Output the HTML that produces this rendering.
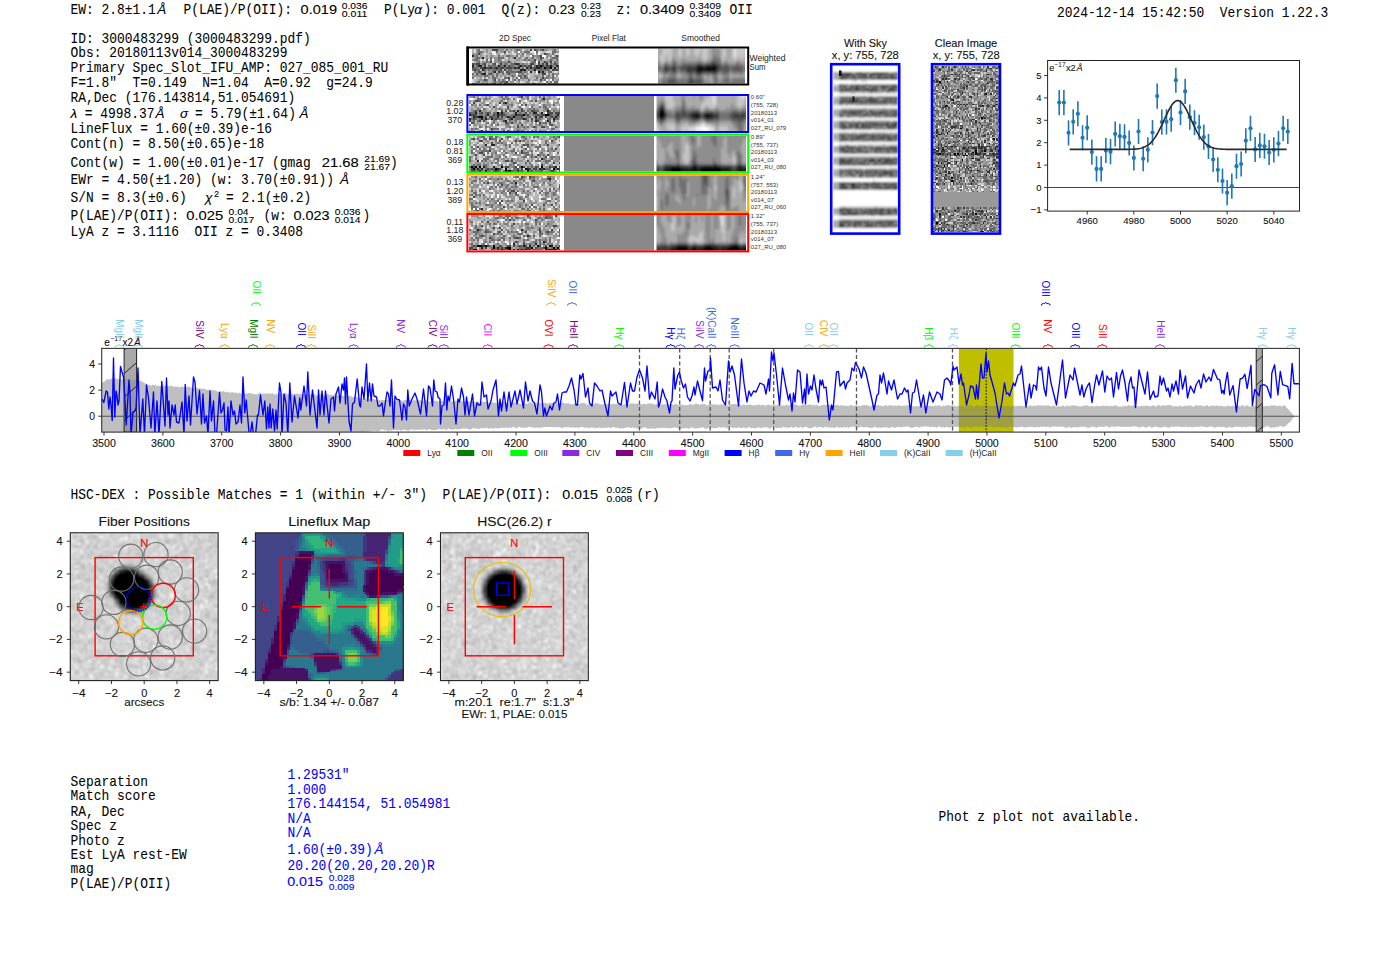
<!DOCTYPE html>
<html><head><meta charset="utf-8"><title>HETDEX detection 3000483299</title>
<style>html,body{margin:0;padding:0;background:#fff;width:1400px;height:953px;overflow:hidden}svg text{white-space:pre}</style>
</head><body>
<svg width="1400" height="953" viewBox="0 0 1400 953" style="position:absolute;left:0;top:0"><rect width="1400" height="953" fill="#fff"/><defs><filter id="blur2"><feGaussianBlur stdDeviation="1.1 1.6"/></filter><filter id="blur05" x="0" y="0" width="100%" height="100%"><feGaussianBlur stdDeviation="0.6"/></filter><filter id="blur08" x="0" y="0" width="100%" height="100%"><feGaussianBlur stdDeviation="0.9"/></filter></defs><text transform="translate(70.50,13.90) scale(0.9229,1)" font-family="Liberation Mono" font-size="14.0" fill="#000" stroke="#000" stroke-width="0.06" text-anchor="start">EW: 2.8±1.1</text><text x="157.30" y="13.90" font-family="Liberation Sans" font-size="13.5" fill="#000" text-anchor="start" font-style="italic" stroke="#000" stroke-width="0.1">Å</text><text transform="translate(183.50,13.90) scale(0.9229,1)" font-family="Liberation Mono" font-size="14.0" fill="#000" stroke="#000" stroke-width="0.06" text-anchor="start">P(LAE)/P(OII):</text><text x="300.60" y="13.90" font-family="Liberation Sans" font-size="13" fill="#000" text-anchor="start" textLength="36.4" lengthAdjust="spacingAndGlyphs" stroke="#000" stroke-width="0.1">0.019</text><text x="341.70" y="8.90" font-family="Liberation Sans" font-size="9.2" fill="#000" text-anchor="start" textLength="25.7" lengthAdjust="spacingAndGlyphs" stroke="#000" stroke-width="0.1">0.036</text><text x="341.70" y="17.30" font-family="Liberation Sans" font-size="9.2" fill="#000" text-anchor="start" textLength="25.7" lengthAdjust="spacingAndGlyphs" stroke="#000" stroke-width="0.1">0.011</text><text transform="translate(384.00,13.90) scale(0.9229,1)" font-family="Liberation Mono" font-size="14.0" fill="#000" stroke="#000" stroke-width="0.06" text-anchor="start">P(Ly</text><text x="414.30" y="13.90" font-family="Liberation Sans" font-size="13.5" fill="#000" text-anchor="start" font-style="italic" stroke="#000" stroke-width="0.1">α</text><text transform="translate(423.50,13.90) scale(0.9229,1)" font-family="Liberation Mono" font-size="14.0" fill="#000" stroke="#000" stroke-width="0.06" text-anchor="start">): 0.001</text><text transform="translate(501.50,13.90) scale(0.9229,1)" font-family="Liberation Mono" font-size="14.0" fill="#000" stroke="#000" stroke-width="0.06" text-anchor="start">Q(z):</text><text x="548.40" y="13.90" font-family="Liberation Sans" font-size="13" fill="#000" text-anchor="start" textLength="26.4" lengthAdjust="spacingAndGlyphs" stroke="#000" stroke-width="0.1">0.23</text><text x="580.90" y="8.90" font-family="Liberation Sans" font-size="9.2" fill="#000" text-anchor="start" textLength="20.0" lengthAdjust="spacingAndGlyphs" stroke="#000" stroke-width="0.1">0.23</text><text x="580.90" y="17.30" font-family="Liberation Sans" font-size="9.2" fill="#000" text-anchor="start" textLength="20.0" lengthAdjust="spacingAndGlyphs" stroke="#000" stroke-width="0.1">0.23</text><text transform="translate(616.50,13.90) scale(0.9229,1)" font-family="Liberation Mono" font-size="14.0" fill="#000" stroke="#000" stroke-width="0.06" text-anchor="start">z:</text><text x="640.00" y="13.90" font-family="Liberation Sans" font-size="13" fill="#000" text-anchor="start" textLength="44.4" lengthAdjust="spacingAndGlyphs" stroke="#000" stroke-width="0.1">0.3409</text><text x="689.40" y="8.90" font-family="Liberation Sans" font-size="9.2" fill="#000" text-anchor="start" textLength="31.5" lengthAdjust="spacingAndGlyphs" stroke="#000" stroke-width="0.1">0.3409</text><text x="689.40" y="17.30" font-family="Liberation Sans" font-size="9.2" fill="#000" text-anchor="start" textLength="31.5" lengthAdjust="spacingAndGlyphs" stroke="#000" stroke-width="0.1">0.3409</text><text transform="translate(729.50,13.90) scale(0.9229,1)" font-family="Liberation Mono" font-size="14.0" fill="#000" stroke="#000" stroke-width="0.06" text-anchor="start">OII</text><text transform="translate(1057.00,16.70) scale(0.9229,1)" font-family="Liberation Mono" font-size="14.0" fill="#000" stroke="#000" stroke-width="0.06" text-anchor="start">2024-12-14 15:42:50  Version 1.22.3</text><text transform="translate(70.50,42.70) scale(0.9229,1)" font-family="Liberation Mono" font-size="14.0" fill="#000" stroke="#000" stroke-width="0.06" text-anchor="start">ID: 3000483299 (3000483299.pdf)</text><text transform="translate(70.50,56.80) scale(0.9229,1)" font-family="Liberation Mono" font-size="14.0" fill="#000" stroke="#000" stroke-width="0.06" text-anchor="start">Obs: 20180113v014_3000483299</text><text transform="translate(70.50,71.80) scale(0.9229,1)" font-family="Liberation Mono" font-size="14.0" fill="#000" stroke="#000" stroke-width="0.06" text-anchor="start">Primary Spec_Slot_IFU_AMP: 027_085_001_RU</text><text transform="translate(70.50,86.80) scale(0.9229,1)" font-family="Liberation Mono" font-size="14.0" fill="#000" stroke="#000" stroke-width="0.06" text-anchor="start">F=1.8"  T=0.149  N=1.04  A=0.92  g=24.9</text><text transform="translate(70.50,101.60) scale(0.9229,1)" font-family="Liberation Mono" font-size="14.0" fill="#000" stroke="#000" stroke-width="0.06" text-anchor="start">RA,Dec (176.143814,51.054691)</text><text x="70.50" y="117.80" font-family="Liberation Sans" font-size="13.5" fill="#000" text-anchor="start" font-style="italic" stroke="#000" stroke-width="0.1">λ</text><text transform="translate(84.70,117.80) scale(0.9229,1)" font-family="Liberation Mono" font-size="14.0" fill="#000" stroke="#000" stroke-width="0.06" text-anchor="start">= 4998.37</text><text x="155.50" y="117.80" font-family="Liberation Sans" font-size="13.5" fill="#000" text-anchor="start" font-style="italic" stroke="#000" stroke-width="0.1">Å</text><text x="180.00" y="117.80" font-family="Liberation Sans" font-size="13.5" fill="#000" text-anchor="start" font-style="italic" stroke="#000" stroke-width="0.1">σ</text><text transform="translate(195.10,117.80) scale(0.9229,1)" font-family="Liberation Mono" font-size="14.0" fill="#000" stroke="#000" stroke-width="0.06" text-anchor="start">= 5.79(±1.64)</text><text x="299.60" y="117.80" font-family="Liberation Sans" font-size="13.5" fill="#000" text-anchor="start" font-style="italic" stroke="#000" stroke-width="0.1">Å</text><text transform="translate(70.50,133.40) scale(0.9229,1)" font-family="Liberation Mono" font-size="14.0" fill="#000" stroke="#000" stroke-width="0.06" text-anchor="start">LineFlux = 1.60(±0.39)e-16</text><text transform="translate(70.50,148.20) scale(0.9229,1)" font-family="Liberation Mono" font-size="14.0" fill="#000" stroke="#000" stroke-width="0.06" text-anchor="start">Cont(n) = 8.50(±0.65)e-18</text><text transform="translate(70.50,166.70) scale(0.9229,1)" font-family="Liberation Mono" font-size="14.0" fill="#000" stroke="#000" stroke-width="0.06" text-anchor="start">Cont(w) = 1.00(±0.01)e-17 (gmag</text><text x="321.80" y="166.70" font-family="Liberation Sans" font-size="13" fill="#000" text-anchor="start" textLength="37.0" lengthAdjust="spacingAndGlyphs" stroke="#000" stroke-width="0.1">21.68</text><text x="364.30" y="161.70" font-family="Liberation Sans" font-size="9.2" fill="#000" text-anchor="start" textLength="25.7" lengthAdjust="spacingAndGlyphs" stroke="#000" stroke-width="0.1">21.69</text><text x="364.30" y="170.10" font-family="Liberation Sans" font-size="9.2" fill="#000" text-anchor="start" textLength="25.7" lengthAdjust="spacingAndGlyphs" stroke="#000" stroke-width="0.1">21.67</text><text transform="translate(390.00,166.70) scale(0.9229,1)" font-family="Liberation Mono" font-size="14.0" fill="#000" stroke="#000" stroke-width="0.06" text-anchor="start">)</text><text transform="translate(70.50,184.40) scale(0.9229,1)" font-family="Liberation Mono" font-size="14.0" fill="#000" stroke="#000" stroke-width="0.06" text-anchor="start">EWr = 4.50(±1.20) (w: 3.70(±0.91))</text><text x="340.00" y="184.40" font-family="Liberation Sans" font-size="13.5" fill="#000" text-anchor="start" font-style="italic" stroke="#000" stroke-width="0.1">Å</text><text transform="translate(70.50,202.10) scale(0.9229,1)" font-family="Liberation Mono" font-size="14.0" fill="#000" stroke="#000" stroke-width="0.06" text-anchor="start">S/N = 8.3(±0.6)</text><text x="205.00" y="202.10" font-family="Liberation Sans" font-size="13.5" fill="#000" text-anchor="start" font-style="italic" stroke="#000" stroke-width="0.1">χ</text><text x="214.00" y="196.50" font-family="Liberation Sans" font-size="9" fill="#000" text-anchor="start" stroke="#000" stroke-width="0.1">2</text><text transform="translate(226.00,202.10) scale(0.9229,1)" font-family="Liberation Mono" font-size="14.0" fill="#000" stroke="#000" stroke-width="0.06" text-anchor="start">= 2.1(±0.2)</text><text transform="translate(70.50,219.80) scale(0.9229,1)" font-family="Liberation Mono" font-size="14.0" fill="#000" stroke="#000" stroke-width="0.06" text-anchor="start">P(LAE)/P(OII):</text><text x="186.20" y="219.80" font-family="Liberation Sans" font-size="13" fill="#000" text-anchor="start" textLength="37.0" lengthAdjust="spacingAndGlyphs" stroke="#000" stroke-width="0.1">0.025</text><text x="228.60" y="214.80" font-family="Liberation Sans" font-size="9.2" fill="#000" text-anchor="start" textLength="20.0" lengthAdjust="spacingAndGlyphs" stroke="#000" stroke-width="0.1">0.04</text><text x="228.60" y="223.20" font-family="Liberation Sans" font-size="9.2" fill="#000" text-anchor="start" textLength="25.7" lengthAdjust="spacingAndGlyphs" stroke="#000" stroke-width="0.1">0.017</text><text transform="translate(263.50,219.80) scale(0.9229,1)" font-family="Liberation Mono" font-size="14.0" fill="#000" stroke="#000" stroke-width="0.06" text-anchor="start">(w:</text><text x="293.40" y="219.80" font-family="Liberation Sans" font-size="13" fill="#000" text-anchor="start" textLength="36.2" lengthAdjust="spacingAndGlyphs" stroke="#000" stroke-width="0.1">0.023</text><text x="334.80" y="214.80" font-family="Liberation Sans" font-size="9.2" fill="#000" text-anchor="start" textLength="25.7" lengthAdjust="spacingAndGlyphs" stroke="#000" stroke-width="0.1">0.036</text><text x="334.80" y="223.20" font-family="Liberation Sans" font-size="9.2" fill="#000" text-anchor="start" textLength="25.7" lengthAdjust="spacingAndGlyphs" stroke="#000" stroke-width="0.1">0.014</text><text transform="translate(362.50,219.80) scale(0.9229,1)" font-family="Liberation Mono" font-size="14.0" fill="#000" stroke="#000" stroke-width="0.06" text-anchor="start">)</text><text transform="translate(70.50,236.10) scale(0.9229,1)" font-family="Liberation Mono" font-size="14.0" fill="#000" stroke="#000" stroke-width="0.06" text-anchor="start">LyA z = 3.1116  OII z = 0.3408</text><text x="515.00" y="41.00" font-family="Liberation Sans" font-size="8.4" fill="#222" text-anchor="middle" textLength="32.0" lengthAdjust="spacingAndGlyphs">2D Spec</text><text x="608.80" y="41.00" font-family="Liberation Sans" font-size="8.4" fill="#222" text-anchor="middle" textLength="34.0" lengthAdjust="spacingAndGlyphs">Pixel Flat</text><text x="700.60" y="41.00" font-family="Liberation Sans" font-size="8.4" fill="#222" text-anchor="middle" textLength="38.5" lengthAdjust="spacingAndGlyphs">Smoothed</text><text x="749.50" y="61.10" font-family="Liberation Sans" font-size="8.2" fill="#222" text-anchor="start" textLength="36.0" lengthAdjust="spacingAndGlyphs">Weighted</text><text x="749.50" y="70.00" font-family="Liberation Sans" font-size="8.2" fill="#222" text-anchor="start" textLength="16.0" lengthAdjust="spacingAndGlyphs">Sum</text><rect x="468" y="48.5" width="4" height="35.0" fill="#fff"/><g shape-rendering="crispEdges"><rect x="472" y="48.5" width="87" height="35" fill="#929292"/><path fill="#b6b6b6" d="M472 48.5h2v2h-2zM482 48.5h4v2h-4zM488 48.5h4v2h-4zM504 48.5h2v2h-2zM508 48.5h2v2h-2zM512 48.5h2v2h-2zM524 48.5h2v2h-2zM528 48.5h2v2h-2zM548 48.5h4v2h-4zM556 48.5h3v2h-3zM472 50.5h2v2h-2zM484 50.5h2v2h-2zM488 50.5h4v2h-4zM498 50.5h2v2h-2zM510 50.5h2v2h-2zM522 50.5h2v2h-2zM542 50.5h4v2h-4zM482 52.5h2v2h-2zM486 52.5h4v2h-4zM496 52.5h2v2h-2zM508 52.5h4v2h-4zM520 52.5h2v2h-2zM532 52.5h2v2h-2zM540 52.5h4v2h-4zM550 52.5h2v2h-2zM554 52.5h2v2h-2zM478 54.5h2v2h-2zM482 54.5h4v2h-4zM488 54.5h2v2h-2zM494 54.5h4v2h-4zM500 54.5h2v2h-2zM504 54.5h2v2h-2zM514 54.5h2v2h-2zM526 54.5h4v2h-4zM472 56.5h2v2h-2zM484 56.5h2v2h-2zM488 56.5h2v2h-2zM492 56.5h2v2h-2zM504 56.5h2v2h-2zM510 56.5h2v2h-2zM516 56.5h2v2h-2zM528 56.5h2v2h-2zM534 56.5h2v2h-2zM558 56.5h1v2h-1zM482 58.5h2v2h-2zM504 58.5h4v2h-4zM510 58.5h6v2h-6zM520 58.5h2v2h-2zM536 58.5h2v2h-2zM542 58.5h6v2h-6zM554 58.5h2v2h-2zM558 58.5h1v2h-1zM474 60.5h2v2h-2zM480 60.5h2v2h-2zM512 60.5h2v2h-2zM516 60.5h6v2h-6zM526 60.5h2v2h-2zM540 60.5h2v2h-2zM552 60.5h2v2h-2zM486 62.5h2v2h-2zM490 62.5h2v2h-2zM508 62.5h2v2h-2zM528 62.5h2v2h-2zM548 62.5h2v2h-2zM558 62.5h1v2h-1zM486 64.5h2v2h-2zM532 64.5h2v2h-2zM524 66.5h2v2h-2zM480 68.5h2v2h-2zM502 68.5h2v2h-2zM550 68.5h2v2h-2zM482 70.5h2v2h-2zM486 70.5h2v2h-2zM496 70.5h2v2h-2zM532 70.5h2v2h-2zM546 70.5h2v2h-2zM552 70.5h2v2h-2zM474 72.5h2v2h-2zM486 72.5h2v2h-2zM494 72.5h2v2h-2zM500 72.5h2v2h-2zM504 72.5h2v2h-2zM524 72.5h2v2h-2zM528 72.5h8v2h-8zM550 72.5h2v2h-2zM490 74.5h2v2h-2zM494 74.5h2v2h-2zM498 74.5h2v2h-2zM502 74.5h2v2h-2zM506 74.5h4v2h-4zM530 74.5h4v2h-4zM540 74.5h2v2h-2zM550 74.5h2v2h-2zM476 76.5h4v2h-4zM490 76.5h2v2h-2zM498 76.5h4v2h-4zM514 76.5h2v2h-2zM528 76.5h8v2h-8zM538 76.5h2v2h-2zM556 76.5h3v2h-3zM474 78.5h4v2h-4zM488 78.5h4v2h-4zM500 78.5h2v2h-2zM516 78.5h2v2h-2zM520 78.5h2v2h-2zM524 78.5h4v2h-4zM530 78.5h4v2h-4zM538 78.5h2v2h-2zM548 78.5h2v2h-2zM554 78.5h2v2h-2zM474 80.5h2v2h-2zM480 80.5h2v2h-2zM488 80.5h4v2h-4zM508 80.5h2v2h-2zM516 80.5h2v2h-2zM524 80.5h2v2h-2zM532 80.5h2v2h-2zM538 80.5h2v2h-2zM548 80.5h2v2h-2zM478 82.5h2v1h-2zM484 82.5h2v1h-2zM488 82.5h4v1h-4zM512 82.5h2v1h-2zM518 82.5h2v1h-2zM530 82.5h2v1h-2zM536 82.5h2v1h-2zM542 82.5h2v1h-2zM550 82.5h4v1h-4zM556 82.5h3v1h-3z"/><path fill="#dbdbdb" d="M474 48.5h2v2h-2zM480 48.5h2v2h-2zM522 48.5h2v2h-2zM532 48.5h2v2h-2zM474 50.5h2v2h-2zM494 50.5h2v2h-2zM506 50.5h2v2h-2zM512 50.5h2v2h-2zM530 50.5h4v2h-4zM538 50.5h4v2h-4zM546 50.5h6v2h-6zM484 52.5h2v2h-2zM492 52.5h2v2h-2zM500 52.5h4v2h-4zM506 52.5h2v2h-2zM512 52.5h4v2h-4zM524 52.5h2v2h-2zM556 52.5h3v2h-3zM518 54.5h2v2h-2zM524 54.5h2v2h-2zM552 54.5h2v2h-2zM506 56.5h2v2h-2zM522 56.5h2v2h-2zM544 56.5h2v2h-2zM548 56.5h2v2h-2zM480 58.5h2v2h-2zM484 58.5h2v2h-2zM488 58.5h2v2h-2zM502 58.5h2v2h-2zM472 60.5h2v2h-2zM492 60.5h2v2h-2zM522 60.5h4v2h-4zM528 60.5h2v2h-2zM496 62.5h2v2h-2zM536 62.5h2v2h-2zM472 70.5h2v2h-2zM504 70.5h2v2h-2zM528 70.5h2v2h-2zM554 70.5h4v2h-4zM536 72.5h2v2h-2zM546 72.5h2v2h-2zM516 74.5h2v2h-2zM528 74.5h2v2h-2zM544 74.5h2v2h-2zM554 74.5h2v2h-2zM474 76.5h2v2h-2zM482 76.5h2v2h-2zM486 76.5h2v2h-2zM502 76.5h2v2h-2zM510 76.5h2v2h-2zM472 78.5h2v2h-2zM496 78.5h2v2h-2zM510 78.5h2v2h-2zM472 80.5h2v2h-2zM514 80.5h2v2h-2zM520 80.5h4v2h-4zM530 80.5h2v2h-2zM534 80.5h4v2h-4zM542 80.5h2v2h-2zM552 80.5h2v2h-2zM558 80.5h1v2h-1zM496 82.5h2v1h-2zM516 82.5h2v1h-2zM520 82.5h2v1h-2zM524 82.5h2v1h-2zM540 82.5h2v1h-2z"/><path fill="#6d6d6d" d="M478 48.5h2v2h-2zM506 48.5h2v2h-2zM516 48.5h4v2h-4zM536 48.5h2v2h-2zM540 48.5h2v2h-2zM554 48.5h2v2h-2zM478 50.5h4v2h-4zM496 50.5h2v2h-2zM524 50.5h6v2h-6zM536 50.5h2v2h-2zM552 50.5h4v2h-4zM522 52.5h2v2h-2zM546 52.5h2v2h-2zM552 52.5h2v2h-2zM476 54.5h2v2h-2zM498 54.5h2v2h-2zM506 54.5h4v2h-4zM516 54.5h2v2h-2zM532 54.5h2v2h-2zM538 54.5h2v2h-2zM476 56.5h4v2h-4zM490 56.5h2v2h-2zM498 56.5h6v2h-6zM526 56.5h2v2h-2zM532 56.5h2v2h-2zM542 56.5h2v2h-2zM552 56.5h6v2h-6zM474 58.5h4v2h-4zM486 58.5h2v2h-2zM490 58.5h2v2h-2zM498 58.5h2v2h-2zM524 58.5h2v2h-2zM528 58.5h2v2h-2zM540 58.5h2v2h-2zM550 58.5h2v2h-2zM556 58.5h2v2h-2zM478 60.5h2v2h-2zM486 60.5h2v2h-2zM500 60.5h2v2h-2zM532 60.5h4v2h-4zM546 60.5h2v2h-2zM554 60.5h2v2h-2zM474 62.5h2v2h-2zM482 62.5h2v2h-2zM492 62.5h2v2h-2zM504 62.5h4v2h-4zM510 62.5h4v2h-4zM522 62.5h2v2h-2zM550 62.5h2v2h-2zM556 62.5h2v2h-2zM476 64.5h2v2h-2zM488 64.5h8v2h-8zM500 64.5h4v2h-4zM510 64.5h4v2h-4zM522 64.5h2v2h-2zM526 64.5h2v2h-2zM534 64.5h2v2h-2zM544 64.5h2v2h-2zM552 64.5h2v2h-2zM474 66.5h4v2h-4zM492 66.5h2v2h-2zM498 66.5h2v2h-2zM504 66.5h2v2h-2zM512 66.5h2v2h-2zM522 66.5h2v2h-2zM528 66.5h2v2h-2zM532 66.5h2v2h-2zM542 66.5h2v2h-2zM472 68.5h2v2h-2zM476 68.5h4v2h-4zM484 68.5h2v2h-2zM488 68.5h2v2h-2zM492 68.5h8v2h-8zM508 68.5h4v2h-4zM528 68.5h2v2h-2zM532 68.5h2v2h-2zM538 68.5h12v2h-12zM558 68.5h1v2h-1zM474 70.5h2v2h-2zM480 70.5h2v2h-2zM484 70.5h2v2h-2zM492 70.5h2v2h-2zM500 70.5h4v2h-4zM508 70.5h10v2h-10zM524 70.5h2v2h-2zM540 70.5h2v2h-2zM548 70.5h4v2h-4zM472 72.5h2v2h-2zM480 72.5h2v2h-2zM488 72.5h2v2h-2zM496 72.5h2v2h-2zM502 72.5h2v2h-2zM522 72.5h2v2h-2zM552 72.5h2v2h-2zM558 72.5h1v2h-1zM484 74.5h4v2h-4zM492 74.5h2v2h-2zM496 74.5h2v2h-2zM512 74.5h2v2h-2zM518 74.5h4v2h-4zM542 74.5h2v2h-2zM548 74.5h2v2h-2zM552 74.5h2v2h-2zM472 76.5h2v2h-2zM492 76.5h4v2h-4zM504 76.5h4v2h-4zM516 76.5h2v2h-2zM520 76.5h2v2h-2zM524 76.5h4v2h-4zM536 76.5h2v2h-2zM546 76.5h2v2h-2zM552 76.5h2v2h-2zM486 78.5h2v2h-2zM498 78.5h2v2h-2zM502 78.5h2v2h-2zM508 78.5h2v2h-2zM514 78.5h2v2h-2zM518 78.5h2v2h-2zM528 78.5h2v2h-2zM544 78.5h2v2h-2zM552 78.5h2v2h-2zM478 80.5h2v2h-2zM494 80.5h2v2h-2zM500 80.5h6v2h-6zM546 80.5h2v2h-2zM550 80.5h2v2h-2zM554 80.5h4v2h-4zM472 82.5h2v1h-2zM492 82.5h4v1h-4zM514 82.5h2v1h-2zM532 82.5h4v1h-4zM548 82.5h2v1h-2z"/><path fill="#494949" d="M492 48.5h6v2h-6zM530 48.5h2v2h-2zM534 48.5h2v2h-2zM542 48.5h2v2h-2zM504 50.5h2v2h-2zM478 52.5h2v2h-2zM544 52.5h2v2h-2zM540 54.5h2v2h-2zM556 54.5h2v2h-2zM540 56.5h2v2h-2zM534 58.5h2v2h-2zM490 60.5h2v2h-2zM508 60.5h2v2h-2zM538 60.5h2v2h-2zM544 60.5h2v2h-2zM550 60.5h2v2h-2zM472 62.5h2v2h-2zM476 62.5h4v2h-4zM484 62.5h2v2h-2zM494 62.5h2v2h-2zM500 62.5h2v2h-2zM514 62.5h2v2h-2zM518 62.5h2v2h-2zM530 62.5h4v2h-4zM538 62.5h2v2h-2zM542 62.5h2v2h-2zM554 62.5h2v2h-2zM484 64.5h2v2h-2zM508 64.5h2v2h-2zM518 64.5h2v2h-2zM524 64.5h2v2h-2zM528 64.5h4v2h-4zM538 64.5h2v2h-2zM542 64.5h2v2h-2zM546 64.5h4v2h-4zM558 64.5h1v2h-1zM472 66.5h2v2h-2zM480 66.5h4v2h-4zM486 66.5h4v2h-4zM494 66.5h2v2h-2zM500 66.5h4v2h-4zM506 66.5h6v2h-6zM516 66.5h2v2h-2zM534 66.5h2v2h-2zM540 66.5h2v2h-2zM546 66.5h4v2h-4zM558 66.5h1v2h-1zM474 68.5h2v2h-2zM500 68.5h2v2h-2zM504 68.5h2v2h-2zM552 68.5h6v2h-6zM478 70.5h2v2h-2zM498 70.5h2v2h-2zM506 70.5h2v2h-2zM518 70.5h4v2h-4zM476 72.5h2v2h-2zM490 72.5h2v2h-2zM508 72.5h2v2h-2zM542 72.5h4v2h-4zM524 74.5h2v2h-2zM508 76.5h2v2h-2zM542 76.5h2v2h-2zM484 78.5h2v2h-2zM494 78.5h2v2h-2zM540 78.5h2v2h-2zM506 80.5h2v2h-2zM504 82.5h2v1h-2z"/><path fill="#ffffff" d="M492 50.5h2v2h-2zM518 50.5h2v2h-2zM534 50.5h2v2h-2zM494 52.5h2v2h-2zM534 52.5h2v2h-2zM538 52.5h2v2h-2zM530 54.5h2v2h-2zM542 54.5h4v2h-4zM492 58.5h2v2h-2zM536 60.5h2v2h-2zM536 70.5h2v2h-2zM516 72.5h2v2h-2zM558 74.5h1v2h-1zM518 76.5h2v2h-2zM506 78.5h2v2h-2zM546 78.5h2v2h-2zM550 78.5h2v2h-2zM544 80.5h2v2h-2zM502 82.5h2v1h-2zM546 82.5h2v1h-2z"/><path fill="#242424" d="M472 54.5h2v2h-2zM482 56.5h2v2h-2zM514 56.5h2v2h-2zM516 62.5h2v2h-2zM546 62.5h2v2h-2zM472 64.5h2v2h-2zM478 64.5h4v2h-4zM498 64.5h2v2h-2zM504 64.5h2v2h-2zM520 64.5h2v2h-2zM536 64.5h2v2h-2zM550 64.5h2v2h-2zM556 64.5h2v2h-2zM484 66.5h2v2h-2zM490 66.5h2v2h-2zM496 66.5h2v2h-2zM514 66.5h2v2h-2zM518 66.5h2v2h-2zM526 66.5h2v2h-2zM530 66.5h2v2h-2zM536 66.5h4v2h-4zM554 66.5h2v2h-2zM482 68.5h2v2h-2zM520 68.5h6v2h-6zM534 68.5h2v2h-2zM494 70.5h2v2h-2zM530 70.5h2v2h-2zM542 70.5h2v2h-2zM482 72.5h4v2h-4z"/><path fill="#000000" d="M540 64.5h2v2h-2zM544 66.5h2v2h-2zM550 66.5h2v2h-2zM538 70.5h2v2h-2z"/></g><rect x="559" y="48.5" width="99" height="35.0" fill="#fff"/><clipPath id="sc1"><rect x="658" y="48.5" width="87" height="35"/></clipPath><g clip-path="url(#sc1)"><g shape-rendering="crispEdges" filter="url(#blur2)"><rect x="654" y="44.5" width="95" height="43" fill="#717171"/><path fill="#aaaaaa" d="M654 44.5h8v2h-8zM672 44.5h6v2h-6zM682 44.5h2v2h-2zM690 44.5h4v2h-4zM700 44.5h2v2h-2zM708 44.5h4v2h-4zM716 44.5h6v2h-6zM726 44.5h6v2h-6zM746 44.5h3v2h-3zM654 46.5h8v2h-8zM672 46.5h6v2h-6zM682 46.5h2v2h-2zM690 46.5h4v2h-4zM700 46.5h2v2h-2zM708 46.5h4v2h-4zM716 46.5h6v2h-6zM726 46.5h6v2h-6zM746 46.5h3v2h-3zM654 48.5h8v2h-8zM672 48.5h6v2h-6zM682 48.5h4v2h-4zM690 48.5h4v2h-4zM700 48.5h2v2h-2zM708 48.5h4v2h-4zM720 48.5h2v2h-2zM726 48.5h6v2h-6zM746 48.5h3v2h-3zM654 50.5h8v2h-8zM672 50.5h6v2h-6zM682 50.5h4v2h-4zM690 50.5h4v2h-4zM700 50.5h2v2h-2zM708 50.5h4v2h-4zM720 50.5h2v2h-2zM726 50.5h6v2h-6zM746 50.5h3v2h-3zM654 52.5h8v2h-8zM672 52.5h6v2h-6zM682 52.5h4v2h-4zM690 52.5h4v2h-4zM700 52.5h2v2h-2zM708 52.5h4v2h-4zM720 52.5h2v2h-2zM726 52.5h6v2h-6zM746 52.5h3v2h-3zM654 54.5h6v2h-6zM666 54.5h2v2h-2zM672 54.5h6v2h-6zM682 54.5h4v2h-4zM688 54.5h8v2h-8zM698 54.5h4v2h-4zM708 54.5h4v2h-4zM720 54.5h2v2h-2zM726 54.5h6v2h-6zM744 54.5h5v2h-5zM654 56.5h6v2h-6zM666 56.5h2v2h-2zM674 56.5h28v2h-28zM708 56.5h4v2h-4zM720 56.5h2v2h-2zM724 56.5h8v2h-8zM738 56.5h2v2h-2zM744 56.5h5v2h-5zM654 58.5h6v2h-6zM664 58.5h4v2h-4zM670 58.5h2v2h-2zM676 58.5h6v2h-6zM686 58.5h12v2h-12zM700 58.5h4v2h-4zM706 58.5h4v2h-4zM724 58.5h10v2h-10zM736 58.5h13v2h-13zM660 60.5h2v2h-2zM664 60.5h2v2h-2zM668 60.5h4v2h-4zM678 60.5h2v2h-2zM704 60.5h2v2h-2zM722 60.5h2v2h-2zM728 60.5h8v2h-8zM740 60.5h9v2h-9zM660 62.5h4v2h-4zM654 72.5h8v2h-8zM678 72.5h2v2h-2zM730 72.5h2v2h-2zM744 72.5h5v2h-5zM654 74.5h4v2h-4zM662 74.5h2v2h-2zM666 74.5h2v2h-2zM676 74.5h6v2h-6zM704 74.5h2v2h-2zM710 74.5h2v2h-2zM718 74.5h4v2h-4zM730 74.5h10v2h-10zM742 74.5h7v2h-7zM654 76.5h8v2h-8zM678 76.5h2v2h-2zM704 76.5h8v2h-8zM718 76.5h4v2h-4zM730 76.5h2v2h-2zM710 78.5h2v2h-2zM710 80.5h2v2h-2zM710 82.5h2v2h-2zM710 84.5h2v2h-2zM710 86.5h2v1h-2z"/><path fill="#c6c6c6" d="M662 44.5h10v2h-10zM678 44.5h4v2h-4zM684 44.5h6v2h-6zM694 44.5h6v2h-6zM702 44.5h6v2h-6zM722 44.5h4v2h-4zM732 44.5h2v2h-2zM736 44.5h10v2h-10zM662 46.5h10v2h-10zM678 46.5h4v2h-4zM684 46.5h6v2h-6zM694 46.5h6v2h-6zM702 46.5h6v2h-6zM722 46.5h4v2h-4zM732 46.5h2v2h-2zM736 46.5h10v2h-10zM662 48.5h10v2h-10zM678 48.5h4v2h-4zM686 48.5h4v2h-4zM694 48.5h6v2h-6zM702 48.5h6v2h-6zM722 48.5h4v2h-4zM732 48.5h2v2h-2zM736 48.5h10v2h-10zM662 50.5h10v2h-10zM678 50.5h4v2h-4zM686 50.5h4v2h-4zM694 50.5h6v2h-6zM702 50.5h6v2h-6zM722 50.5h4v2h-4zM732 50.5h2v2h-2zM736 50.5h10v2h-10zM662 52.5h10v2h-10zM678 52.5h4v2h-4zM686 52.5h4v2h-4zM694 52.5h6v2h-6zM702 52.5h6v2h-6zM722 52.5h4v2h-4zM732 52.5h2v2h-2zM736 52.5h10v2h-10zM660 54.5h6v2h-6zM668 54.5h4v2h-4zM678 54.5h4v2h-4zM686 54.5h2v2h-2zM696 54.5h2v2h-2zM702 54.5h6v2h-6zM722 54.5h4v2h-4zM732 54.5h2v2h-2zM736 54.5h8v2h-8zM660 56.5h6v2h-6zM668 56.5h4v2h-4zM702 56.5h6v2h-6zM722 56.5h2v2h-2zM732 56.5h6v2h-6zM740 56.5h4v2h-4zM660 58.5h4v2h-4zM668 58.5h2v2h-2zM704 58.5h2v2h-2zM722 58.5h2v2h-2zM734 58.5h2v2h-2zM662 60.5h2v2h-2zM658 74.5h4v2h-4z"/><path fill="#8e8e8e" d="M712 44.5h4v2h-4zM712 46.5h4v2h-4zM712 48.5h8v2h-8zM712 50.5h8v2h-8zM712 52.5h8v2h-8zM712 54.5h2v2h-2zM716 54.5h4v2h-4zM672 56.5h2v2h-2zM712 56.5h2v2h-2zM716 56.5h2v2h-2zM672 58.5h4v2h-4zM682 58.5h4v2h-4zM698 58.5h2v2h-2zM710 58.5h2v2h-2zM720 58.5h2v2h-2zM654 60.5h6v2h-6zM666 60.5h2v2h-2zM676 60.5h2v2h-2zM680 60.5h18v2h-18zM700 60.5h4v2h-4zM706 60.5h4v2h-4zM720 60.5h2v2h-2zM724 60.5h4v2h-4zM736 60.5h4v2h-4zM654 62.5h6v2h-6zM668 62.5h4v2h-4zM676 62.5h6v2h-6zM722 62.5h2v2h-2zM728 62.5h8v2h-8zM740 62.5h9v2h-9zM660 64.5h4v2h-4zM744 64.5h5v2h-5zM654 70.5h8v2h-8zM678 70.5h2v2h-2zM730 70.5h2v2h-2zM744 70.5h5v2h-5zM662 72.5h2v2h-2zM666 72.5h4v2h-4zM676 72.5h2v2h-2zM680 72.5h6v2h-6zM718 72.5h4v2h-4zM728 72.5h2v2h-2zM732 72.5h12v2h-12zM664 74.5h2v2h-2zM668 74.5h6v2h-6zM682 74.5h6v2h-6zM692 74.5h4v2h-4zM702 74.5h2v2h-2zM706 74.5h4v2h-4zM712 74.5h2v2h-2zM716 74.5h2v2h-2zM722 74.5h8v2h-8zM740 74.5h2v2h-2zM662 76.5h6v2h-6zM676 76.5h2v2h-2zM680 76.5h8v2h-8zM694 76.5h2v2h-2zM702 76.5h2v2h-2zM712 76.5h2v2h-2zM722 76.5h4v2h-4zM728 76.5h2v2h-2zM732 76.5h17v2h-17zM654 78.5h8v2h-8zM704 78.5h6v2h-6zM712 78.5h2v2h-2zM718 78.5h4v2h-4zM730 78.5h2v2h-2zM654 80.5h8v2h-8zM704 80.5h6v2h-6zM712 80.5h2v2h-2zM718 80.5h4v2h-4zM730 80.5h2v2h-2zM654 82.5h8v2h-8zM704 82.5h6v2h-6zM712 82.5h2v2h-2zM718 82.5h6v2h-6zM654 84.5h8v2h-8zM704 84.5h6v2h-6zM712 84.5h2v2h-2zM718 84.5h6v2h-6zM654 86.5h8v1h-8zM704 86.5h6v1h-6zM712 86.5h2v1h-2zM718 86.5h6v1h-6z"/><path fill="#e3e3e3" d="M734 44.5h2v2h-2zM734 46.5h2v2h-2zM734 48.5h2v2h-2zM734 50.5h2v2h-2zM734 52.5h2v2h-2zM734 54.5h2v2h-2z"/><path fill="#555555" d="M712 60.5h4v2h-4zM674 62.5h2v2h-2zM696 62.5h6v2h-6zM706 62.5h6v2h-6zM716 62.5h4v2h-4zM664 64.5h4v2h-4zM672 64.5h4v2h-4zM682 64.5h6v2h-6zM690 64.5h6v2h-6zM718 64.5h4v2h-4zM724 64.5h4v2h-4zM736 64.5h2v2h-2zM668 66.5h4v2h-4zM676 66.5h2v2h-2zM680 66.5h2v2h-2zM684 66.5h2v2h-2zM720 66.5h10v2h-10zM732 66.5h10v2h-10zM668 68.5h4v2h-4zM680 68.5h6v2h-6zM718 68.5h12v2h-12zM732 68.5h10v2h-10zM664 70.5h4v2h-4zM672 70.5h4v2h-4zM686 70.5h2v2h-2zM692 70.5h4v2h-4zM724 70.5h4v2h-4zM690 72.5h2v2h-2zM696 72.5h2v2h-2zM700 72.5h2v2h-2zM712 72.5h4v2h-4zM690 76.5h2v2h-2zM668 78.5h8v2h-8zM688 78.5h2v2h-2zM692 78.5h10v2h-10zM726 78.5h2v2h-2zM668 80.5h8v2h-8zM688 80.5h2v2h-2zM692 80.5h10v2h-10zM668 82.5h8v2h-8zM688 82.5h2v2h-2zM692 82.5h2v2h-2zM696 82.5h6v2h-6zM668 84.5h8v2h-8zM692 84.5h2v2h-2zM696 84.5h6v2h-6zM668 86.5h8v1h-8zM692 86.5h2v1h-2zM696 86.5h6v1h-6z"/><path fill="#393939" d="M712 62.5h4v2h-4zM688 64.5h2v2h-2zM696 64.5h2v2h-2zM702 64.5h4v2h-4zM716 64.5h2v2h-2zM664 66.5h4v2h-4zM672 66.5h4v2h-4zM682 66.5h2v2h-2zM686 66.5h10v2h-10zM718 66.5h2v2h-2zM664 68.5h4v2h-4zM672 68.5h4v2h-4zM686 68.5h10v2h-10zM716 68.5h2v2h-2zM688 70.5h4v2h-4zM702 70.5h6v2h-6zM710 70.5h4v2h-4zM716 70.5h2v2h-2zM698 72.5h2v2h-2zM690 78.5h2v2h-2zM690 80.5h2v2h-2zM690 82.5h2v2h-2zM690 84.5h2v2h-2zM690 86.5h2v1h-2z"/><path fill="#1c1c1c" d="M698 64.5h4v2h-4zM706 64.5h8v2h-8zM696 66.5h2v2h-2zM704 66.5h2v2h-2zM716 66.5h2v2h-2zM696 68.5h2v2h-2zM704 68.5h2v2h-2zM696 70.5h6v2h-6zM708 70.5h2v2h-2zM714 70.5h2v2h-2z"/><path fill="#000000" d="M714 64.5h2v2h-2zM698 66.5h6v2h-6zM706 66.5h10v2h-10zM698 68.5h6v2h-6zM706 68.5h10v2h-10z"/></g></g><rect x="745" y="48.5" width="2" height="35.0" fill="#fff"/><rect x="467.4" y="47.5" width="280.80000000000007" height="37.0" fill="none" stroke="#000000" stroke-width="2.0"/><rect x="466.5" y="46.5" width="2.5" height="39.0" fill="#000"/><g shape-rendering="crispEdges"><rect x="469" y="96" width="91" height="35" fill="#929292"/><path fill="#6d6d6d" d="M473 96h2v2h-2zM501 96h2v2h-2zM505 96h2v2h-2zM519 96h2v2h-2zM527 96h2v2h-2zM539 96h2v2h-2zM543 96h2v2h-2zM477 98h4v2h-4zM485 98h2v2h-2zM503 98h2v2h-2zM507 98h2v2h-2zM513 98h2v2h-2zM527 98h2v2h-2zM541 98h2v2h-2zM559 98h1v2h-1zM479 100h2v2h-2zM501 100h2v2h-2zM519 100h2v2h-2zM531 100h2v2h-2zM471 104h2v2h-2zM479 104h2v2h-2zM485 104h2v2h-2zM511 104h2v2h-2zM521 104h2v2h-2zM543 104h2v2h-2zM553 104h2v2h-2zM519 106h2v2h-2zM531 106h2v2h-2zM539 106h2v2h-2zM543 106h4v2h-4zM477 108h2v2h-2zM483 108h2v2h-2zM499 108h2v2h-2zM507 108h2v2h-2zM529 108h2v2h-2zM533 108h2v2h-2zM545 108h4v2h-4zM473 110h2v2h-2zM509 110h4v2h-4zM523 110h2v2h-2zM527 110h2v2h-2zM535 110h4v2h-4zM549 110h2v2h-2zM553 110h2v2h-2zM559 110h1v2h-1zM471 112h4v2h-4zM479 112h2v2h-2zM485 112h2v2h-2zM489 112h2v2h-2zM493 112h4v2h-4zM499 112h2v2h-2zM503 112h2v2h-2zM519 112h2v2h-2zM529 112h2v2h-2zM479 114h4v2h-4zM485 114h2v2h-2zM495 114h2v2h-2zM505 114h2v2h-2zM511 114h4v2h-4zM525 114h2v2h-2zM533 114h4v2h-4zM539 114h2v2h-2zM551 114h2v2h-2zM555 114h2v2h-2zM483 116h2v2h-2zM493 116h4v2h-4zM505 116h2v2h-2zM511 116h2v2h-2zM515 116h6v2h-6zM527 116h4v2h-4zM549 116h2v2h-2zM553 116h2v2h-2zM557 116h2v2h-2zM471 118h2v2h-2zM475 118h2v2h-2zM479 118h2v2h-2zM483 118h2v2h-2zM487 118h2v2h-2zM493 118h2v2h-2zM497 118h6v2h-6zM515 118h8v2h-8zM537 118h4v2h-4zM547 118h4v2h-4zM555 118h4v2h-4zM473 120h2v2h-2zM477 120h2v2h-2zM493 120h2v2h-2zM509 120h2v2h-2zM515 120h2v2h-2zM527 120h2v2h-2zM531 120h2v2h-2zM549 120h2v2h-2zM473 122h2v2h-2zM487 122h2v2h-2zM493 122h2v2h-2zM507 122h2v2h-2zM519 122h2v2h-2zM543 122h4v2h-4zM469 124h2v2h-2zM491 124h2v2h-2zM497 124h2v2h-2zM507 124h2v2h-2zM517 124h2v2h-2zM539 124h2v2h-2zM549 124h2v2h-2zM479 126h2v2h-2zM485 126h2v2h-2zM509 126h2v2h-2zM523 126h2v2h-2zM527 126h2v2h-2zM535 126h2v2h-2zM555 126h2v2h-2zM471 128h2v2h-2zM475 128h2v2h-2zM493 128h6v2h-6zM551 128h4v2h-4zM485 130h2v1h-2zM491 130h2v1h-2zM521 130h2v1h-2zM531 130h2v1h-2zM535 130h2v1h-2zM539 130h2v1h-2z"/><path fill="#b6b6b6" d="M475 96h2v2h-2zM481 96h4v2h-4zM487 96h2v2h-2zM491 96h2v2h-2zM497 96h2v2h-2zM503 96h2v2h-2zM511 96h6v2h-6zM523 96h2v2h-2zM531 96h4v2h-4zM537 96h2v2h-2zM541 96h2v2h-2zM545 96h2v2h-2zM551 96h2v2h-2zM555 96h2v2h-2zM475 98h2v2h-2zM481 98h2v2h-2zM493 98h8v2h-8zM515 98h2v2h-2zM525 98h2v2h-2zM531 98h2v2h-2zM539 98h2v2h-2zM551 98h6v2h-6zM471 100h2v2h-2zM485 100h4v2h-4zM493 100h6v2h-6zM503 100h2v2h-2zM509 100h8v2h-8zM521 100h2v2h-2zM527 100h2v2h-2zM533 100h2v2h-2zM537 100h2v2h-2zM545 100h2v2h-2zM553 100h2v2h-2zM475 102h2v2h-2zM479 102h2v2h-2zM491 102h2v2h-2zM495 102h4v2h-4zM501 102h2v2h-2zM509 102h2v2h-2zM513 102h4v2h-4zM525 102h2v2h-2zM529 102h2v2h-2zM533 102h2v2h-2zM537 102h2v2h-2zM543 102h4v2h-4zM549 102h2v2h-2zM481 104h2v2h-2zM489 104h4v2h-4zM497 104h2v2h-2zM501 104h2v2h-2zM513 104h2v2h-2zM517 104h2v2h-2zM523 104h2v2h-2zM527 104h4v2h-4zM535 104h4v2h-4zM541 104h2v2h-2zM551 104h2v2h-2zM555 104h4v2h-4zM469 106h6v2h-6zM477 106h4v2h-4zM491 106h2v2h-2zM499 106h4v2h-4zM509 106h2v2h-2zM525 106h4v2h-4zM533 106h6v2h-6zM541 106h2v2h-2zM547 106h2v2h-2zM553 106h4v2h-4zM559 106h1v2h-1zM469 108h2v2h-2zM473 108h4v2h-4zM487 108h2v2h-2zM493 108h2v2h-2zM503 108h2v2h-2zM513 108h6v2h-6zM523 108h4v2h-4zM539 108h4v2h-4zM557 108h2v2h-2zM469 110h2v2h-2zM487 110h2v2h-2zM491 110h4v2h-4zM503 110h2v2h-2zM525 110h2v2h-2zM539 110h4v2h-4zM551 110h2v2h-2zM491 112h2v2h-2zM509 112h4v2h-4zM527 112h2v2h-2zM537 112h2v2h-2zM543 112h2v2h-2zM469 116h2v2h-2zM487 116h2v2h-2zM531 116h2v2h-2zM543 116h2v2h-2zM505 118h2v2h-2zM529 118h2v2h-2zM533 118h2v2h-2zM543 118h2v2h-2zM551 118h2v2h-2zM559 118h1v2h-1zM475 120h2v2h-2zM481 120h2v2h-2zM491 120h2v2h-2zM499 120h2v2h-2zM507 120h2v2h-2zM517 120h2v2h-2zM523 120h2v2h-2zM529 120h2v2h-2zM533 120h2v2h-2zM541 120h2v2h-2zM555 120h4v2h-4zM475 122h2v2h-2zM479 122h2v2h-2zM495 122h2v2h-2zM501 122h4v2h-4zM517 122h2v2h-2zM521 122h4v2h-4zM527 122h4v2h-4zM547 122h2v2h-2zM551 122h4v2h-4zM559 122h1v2h-1zM477 124h2v2h-2zM481 124h4v2h-4zM489 124h2v2h-2zM499 124h6v2h-6zM509 124h2v2h-2zM513 124h4v2h-4zM519 124h2v2h-2zM523 124h4v2h-4zM543 124h2v2h-2zM555 124h4v2h-4zM473 126h4v2h-4zM491 126h6v2h-6zM511 126h2v2h-2zM515 126h2v2h-2zM529 126h2v2h-2zM537 126h4v2h-4zM551 126h4v2h-4zM559 126h1v2h-1zM469 128h2v2h-2zM505 128h2v2h-2zM509 128h2v2h-2zM513 128h2v2h-2zM521 128h2v2h-2zM527 128h4v2h-4zM533 128h2v2h-2zM537 128h10v2h-10zM549 128h2v2h-2zM555 128h4v2h-4zM477 130h2v1h-2zM487 130h4v1h-4zM493 130h10v1h-10zM533 130h2v1h-2zM549 130h2v1h-2zM555 130h4v1h-4z"/><path fill="#dbdbdb" d="M479 96h2v2h-2zM493 96h4v2h-4zM509 96h2v2h-2zM529 96h2v2h-2zM559 96h1v2h-1zM473 98h2v2h-2zM491 98h2v2h-2zM511 98h2v2h-2zM519 98h2v2h-2zM529 98h2v2h-2zM537 98h2v2h-2zM481 100h2v2h-2zM489 100h2v2h-2zM505 100h2v2h-2zM523 100h2v2h-2zM555 100h2v2h-2zM471 102h2v2h-2zM477 102h2v2h-2zM485 102h2v2h-2zM493 102h2v2h-2zM521 102h2v2h-2zM527 102h2v2h-2zM531 102h2v2h-2zM535 102h2v2h-2zM541 102h2v2h-2zM559 102h1v2h-1zM477 104h2v2h-2zM493 104h2v2h-2zM515 104h2v2h-2zM483 106h6v2h-6zM497 106h2v2h-2zM503 106h4v2h-4zM513 106h4v2h-4zM521 106h2v2h-2zM551 106h2v2h-2zM481 108h2v2h-2zM489 108h2v2h-2zM511 108h2v2h-2zM497 110h4v2h-4zM507 110h2v2h-2zM545 118h2v2h-2zM487 120h2v2h-2zM497 120h2v2h-2zM521 120h2v2h-2zM551 120h2v2h-2zM559 120h1v2h-1zM481 122h4v2h-4zM489 122h2v2h-2zM499 122h2v2h-2zM533 122h2v2h-2zM537 122h2v2h-2zM555 122h2v2h-2zM487 124h2v2h-2zM511 124h2v2h-2zM527 124h2v2h-2zM533 124h2v2h-2zM547 124h2v2h-2zM469 126h4v2h-4zM477 126h2v2h-2zM483 126h2v2h-2zM497 126h8v2h-8zM479 128h2v2h-2zM483 128h2v2h-2zM499 128h2v2h-2zM507 128h2v2h-2zM531 128h2v2h-2zM559 128h1v2h-1zM475 130h2v1h-2zM483 130h2v1h-2zM511 130h2v1h-2zM525 130h2v1h-2zM537 130h2v1h-2zM553 130h2v1h-2z"/><path fill="#494949" d="M521 96h2v2h-2zM475 100h4v2h-4zM535 100h2v2h-2zM473 102h2v2h-2zM499 102h2v2h-2zM503 102h2v2h-2zM487 104h2v2h-2zM525 104h2v2h-2zM493 106h2v2h-2zM507 106h2v2h-2zM521 108h2v2h-2zM475 110h2v2h-2zM501 110h2v2h-2zM505 110h2v2h-2zM513 110h2v2h-2zM521 110h2v2h-2zM531 110h4v2h-4zM469 112h2v2h-2zM481 112h2v2h-2zM487 112h2v2h-2zM525 112h2v2h-2zM547 112h6v2h-6zM555 112h5v2h-5zM471 114h6v2h-6zM493 114h2v2h-2zM499 114h6v2h-6zM517 114h6v2h-6zM527 114h2v2h-2zM537 114h2v2h-2zM541 114h4v2h-4zM549 114h2v2h-2zM475 116h2v2h-2zM485 116h2v2h-2zM489 116h4v2h-4zM501 116h2v2h-2zM509 116h2v2h-2zM521 116h2v2h-2zM539 116h4v2h-4zM545 116h2v2h-2zM551 116h2v2h-2zM473 118h2v2h-2zM495 118h2v2h-2zM509 118h2v2h-2zM525 118h2v2h-2zM531 118h2v2h-2zM535 118h2v2h-2zM469 120h2v2h-2zM479 120h2v2h-2zM483 120h2v2h-2zM503 120h2v2h-2zM537 120h2v2h-2zM553 120h2v2h-2zM471 122h2v2h-2zM505 122h2v2h-2zM511 122h2v2h-2zM539 122h2v2h-2zM549 122h2v2h-2zM521 124h2v2h-2zM551 124h2v2h-2zM517 126h2v2h-2zM533 126h2v2h-2zM541 126h4v2h-4zM491 128h2v2h-2zM503 130h2v1h-2zM507 130h2v1h-2zM517 130h2v1h-2z"/><path fill="#ffffff" d="M557 96h2v2h-2zM469 98h4v2h-4zM517 98h2v2h-2zM517 100h2v2h-2zM525 100h2v2h-2zM549 100h4v2h-4zM559 100h1v2h-1zM487 102h2v2h-2zM551 102h2v2h-2zM469 104h2v2h-2zM499 104h2v2h-2zM519 104h2v2h-2zM539 104h2v2h-2zM523 106h2v2h-2zM529 106h2v2h-2zM557 106h2v2h-2zM549 108h2v2h-2zM545 112h2v2h-2zM489 120h2v2h-2zM543 120h2v2h-2zM469 122h2v2h-2zM471 124h2v2h-2zM493 124h2v2h-2zM549 126h2v2h-2zM481 128h2v2h-2zM487 128h2v2h-2zM511 128h2v2h-2zM505 130h2v1h-2zM529 130h2v1h-2zM547 130h2v1h-2z"/><path fill="#242424" d="M543 98h2v2h-2zM505 102h2v2h-2zM479 110h2v2h-2zM517 110h2v2h-2zM547 110h2v2h-2zM475 112h2v2h-2zM501 112h2v2h-2zM515 112h2v2h-2zM533 112h4v2h-4zM541 112h2v2h-2zM469 114h2v2h-2zM487 114h2v2h-2zM497 114h2v2h-2zM515 114h2v2h-2zM557 114h2v2h-2zM473 116h2v2h-2zM477 116h2v2h-2zM497 116h2v2h-2zM507 116h2v2h-2zM535 116h2v2h-2zM555 116h2v2h-2zM469 118h2v2h-2zM481 118h2v2h-2zM485 118h2v2h-2zM491 118h2v2h-2zM511 118h2v2h-2zM523 118h2v2h-2zM553 118h2v2h-2zM505 120h2v2h-2zM535 120h2v2h-2zM547 120h2v2h-2zM481 130h2v1h-2z"/><path fill="#000000" d="M497 112h2v2h-2zM523 114h2v2h-2zM545 114h4v2h-4zM479 116h4v2h-4zM513 116h2v2h-2z"/></g><rect x="560" y="96.0" width="4" height="35.0" fill="#fff"/><rect x="564" y="96.0" width="90" height="35.0" fill="#898989"/><rect x="654" y="96.0" width="3" height="35.0" fill="#fff"/><clipPath id="sc2"><rect x="656.5" y="96" width="89.5" height="35"/></clipPath><g clip-path="url(#sc2)"><g shape-rendering="crispEdges" filter="url(#blur2)"><rect x="652.5" y="92" width="97.5" height="43" fill="#aaaaaa"/><path fill="#c6c6c6" d="M664.5 92h8v2h-8zM708.5 92h4v2h-4zM714.5 92h2v2h-2zM736.5 92h4v2h-4zM744.5 92h2v2h-2zM664.5 94h8v2h-8zM708.5 94h4v2h-4zM714.5 94h2v2h-2zM736.5 94h4v2h-4zM744.5 94h2v2h-2zM664.5 96h8v2h-8zM708.5 96h4v2h-4zM714.5 96h2v2h-2zM736.5 96h4v2h-4zM744.5 96h2v2h-2zM664.5 98h8v2h-8zM704.5 98h8v2h-8zM714.5 98h2v2h-2zM736.5 98h8v2h-8zM664.5 100h8v2h-8zM704.5 100h8v2h-8zM714.5 100h2v2h-2zM736.5 100h8v2h-8zM666.5 102h8v2h-8zM702.5 102h10v2h-10zM714.5 102h2v2h-2zM736.5 102h8v2h-8zM666.5 104h8v2h-8zM700.5 104h16v2h-16zM736.5 104h6v2h-6zM666.5 106h6v2h-6zM700.5 106h4v2h-4zM708.5 106h6v2h-6zM738.5 106h2v2h-2zM700.5 108h2v2h-2zM700.5 122h4v2h-4zM652.5 124h6v2h-6zM666.5 124h8v2h-8zM684.5 124h2v2h-2zM696.5 124h4v2h-4zM704.5 124h6v2h-6zM652.5 126h6v2h-6zM666.5 126h8v2h-8zM680.5 126h14v2h-14zM710.5 126h4v2h-4zM718.5 126h8v2h-8zM652.5 128h6v2h-6zM666.5 128h8v2h-8zM680.5 128h8v2h-8zM718.5 128h10v2h-10zM652.5 130h4v2h-4zM658.5 130h2v2h-2zM670.5 130h4v2h-4zM680.5 130h14v2h-14zM712.5 130h2v2h-2zM718.5 130h8v2h-8zM652.5 132h4v2h-4zM658.5 132h2v2h-2zM670.5 132h4v2h-4zM680.5 132h16v2h-16zM698.5 132h2v2h-2zM710.5 132h4v2h-4zM718.5 132h8v2h-8zM652.5 134h4v1h-4zM658.5 134h2v1h-2zM670.5 134h4v1h-4zM680.5 134h16v1h-16zM698.5 134h2v1h-2zM710.5 134h4v1h-4zM718.5 134h8v1h-8z"/><path fill="#8e8e8e" d="M680.5 92h4v2h-4zM692.5 92h2v2h-2zM698.5 92h4v2h-4zM680.5 94h4v2h-4zM692.5 94h2v2h-2zM698.5 94h4v2h-4zM680.5 96h4v2h-4zM692.5 96h2v2h-2zM698.5 96h4v2h-4zM660.5 98h2v2h-2zM680.5 98h4v2h-4zM698.5 98h4v2h-4zM658.5 100h6v2h-6zM680.5 100h2v2h-2zM658.5 102h2v2h-2zM662.5 102h2v2h-2zM680.5 102h2v2h-2zM656.5 104h2v2h-2zM680.5 104h2v2h-2zM684.5 104h2v2h-2zM730.5 104h2v2h-2zM656.5 106h2v2h-2zM674.5 106h6v2h-6zM684.5 106h2v2h-2zM690.5 106h4v2h-4zM730.5 106h4v2h-4zM744.5 106h5.5v2h-5.5zM652.5 108h4v2h-4zM664.5 108h2v2h-2zM674.5 108h6v2h-6zM684.5 108h14v2h-14zM704.5 108h4v2h-4zM714.5 108h4v2h-4zM724.5 108h14v2h-14zM740.5 108h9.5v2h-9.5zM666.5 110h8v2h-8zM702.5 110h2v2h-2zM712.5 110h2v2h-2zM718.5 110h12v2h-12zM738.5 110h2v2h-2zM670.5 112h4v2h-4zM666.5 118h8v2h-8zM652.5 120h6v2h-6zM664.5 120h2v2h-2zM680.5 120h8v2h-8zM698.5 120h2v2h-2zM702.5 120h2v2h-2zM718.5 120h12v2h-12zM744.5 120h5.5v2h-5.5zM662.5 122h2v2h-2zM674.5 122h2v2h-2zM678.5 122h2v2h-2zM688.5 122h8v2h-8zM706.5 122h12v2h-12zM730.5 122h2v2h-2zM742.5 122h4v2h-4zM658.5 124h4v2h-4zM676.5 124h2v2h-2zM714.5 124h4v2h-4zM732.5 124h4v2h-4zM742.5 124h2v2h-2zM732.5 126h4v2h-4zM742.5 126h2v2h-2zM734.5 128h4v2h-4zM742.5 128h2v2h-2zM736.5 130h2v2h-2zM736.5 132h2v2h-2zM736.5 134h2v1h-2z"/><path fill="#e3e3e3" d="M712.5 92h2v2h-2zM740.5 92h4v2h-4zM712.5 94h2v2h-2zM740.5 94h4v2h-4zM712.5 96h2v2h-2zM740.5 96h4v2h-4zM712.5 98h2v2h-2zM712.5 100h2v2h-2zM712.5 102h2v2h-2zM700.5 124h4v2h-4zM694.5 126h6v2h-6zM704.5 126h6v2h-6zM688.5 128h8v2h-8zM708.5 128h6v2h-6zM656.5 130h2v2h-2zM694.5 130h8v2h-8zM706.5 130h6v2h-6zM656.5 132h2v2h-2zM696.5 132h2v2h-2zM700.5 132h10v2h-10zM656.5 134h2v1h-2zM696.5 134h2v1h-2zM700.5 134h10v1h-10z"/><path fill="#717171" d="M682.5 100h2v2h-2zM660.5 102h2v2h-2zM682.5 102h2v2h-2zM658.5 104h2v2h-2zM662.5 104h2v2h-2zM682.5 104h2v2h-2zM680.5 106h4v2h-4zM656.5 108h2v2h-2zM680.5 108h2v2h-2zM652.5 110h4v2h-4zM664.5 110h2v2h-2zM674.5 110h6v2h-6zM684.5 110h8v2h-8zM698.5 110h2v2h-2zM704.5 110h8v2h-8zM714.5 110h4v2h-4zM730.5 110h8v2h-8zM740.5 110h9.5v2h-9.5zM652.5 112h4v2h-4zM666.5 112h4v2h-4zM700.5 112h2v2h-2zM718.5 112h12v2h-12zM666.5 114h8v2h-8zM718.5 114h10v2h-10zM652.5 116h4v2h-4zM666.5 116h8v2h-8zM718.5 116h10v2h-10zM652.5 118h6v2h-6zM664.5 118h2v2h-2zM680.5 118h8v2h-8zM700.5 118h2v2h-2zM718.5 118h12v2h-12zM744.5 118h5.5v2h-5.5zM662.5 120h2v2h-2zM674.5 120h6v2h-6zM688.5 120h4v2h-4zM694.5 120h4v2h-4zM704.5 120h2v2h-2zM708.5 120h10v2h-10zM730.5 120h6v2h-6zM742.5 120h2v2h-2zM658.5 122h4v2h-4zM676.5 122h2v2h-2zM732.5 122h10v2h-10zM736.5 124h6v2h-6zM736.5 126h6v2h-6zM738.5 128h4v2h-4zM738.5 130h4v2h-4zM738.5 132h4v2h-4zM738.5 134h4v1h-4z"/><path fill="#555555" d="M660.5 104h2v2h-2zM658.5 106h2v2h-2zM662.5 106h2v2h-2zM682.5 108h2v2h-2zM656.5 110h2v2h-2zM680.5 110h4v2h-4zM692.5 110h6v2h-6zM656.5 112h2v2h-2zM664.5 112h2v2h-2zM674.5 112h8v2h-8zM684.5 112h6v2h-6zM698.5 112h2v2h-2zM702.5 112h2v2h-2zM712.5 112h6v2h-6zM730.5 112h19.5v2h-19.5zM652.5 114h4v2h-4zM674.5 114h2v2h-2zM678.5 114h4v2h-4zM684.5 114h4v2h-4zM700.5 114h2v2h-2zM728.5 114h4v2h-4zM738.5 114h2v2h-2zM744.5 114h5.5v2h-5.5zM656.5 116h2v2h-2zM664.5 116h2v2h-2zM674.5 116h2v2h-2zM678.5 116h10v2h-10zM700.5 116h2v2h-2zM728.5 116h4v2h-4zM744.5 116h5.5v2h-5.5zM674.5 118h6v2h-6zM688.5 118h4v2h-4zM698.5 118h2v2h-2zM702.5 118h2v2h-2zM712.5 118h6v2h-6zM730.5 118h14v2h-14zM658.5 120h4v2h-4zM692.5 120h2v2h-2zM706.5 120h2v2h-2zM736.5 120h6v2h-6z"/><path fill="#393939" d="M660.5 106h2v2h-2zM658.5 108h2v2h-2zM662.5 108h2v2h-2zM682.5 112h2v2h-2zM690.5 112h8v2h-8zM704.5 112h8v2h-8zM656.5 114h2v2h-2zM664.5 114h2v2h-2zM676.5 114h2v2h-2zM682.5 114h2v2h-2zM688.5 114h2v2h-2zM702.5 114h2v2h-2zM712.5 114h6v2h-6zM732.5 114h6v2h-6zM740.5 114h4v2h-4zM676.5 116h2v2h-2zM688.5 116h4v2h-4zM698.5 116h2v2h-2zM702.5 116h2v2h-2zM712.5 116h6v2h-6zM732.5 116h12v2h-12zM658.5 118h2v2h-2zM662.5 118h2v2h-2zM692.5 118h6v2h-6zM704.5 118h8v2h-8z"/><path fill="#1c1c1c" d="M660.5 108h2v2h-2zM658.5 110h2v2h-2zM662.5 110h2v2h-2zM690.5 114h4v2h-4zM698.5 114h2v2h-2zM708.5 114h4v2h-4zM662.5 116h2v2h-2zM692.5 116h2v2h-2zM708.5 116h4v2h-4zM660.5 118h2v2h-2z"/><path fill="#000000" d="M660.5 110h2v2h-2zM658.5 112h6v2h-6zM658.5 114h6v2h-6zM694.5 114h4v2h-4zM704.5 114h4v2h-4zM658.5 116h4v2h-4zM694.5 116h4v2h-4zM704.5 116h4v2h-4z"/><path fill="#ffffff" d="M700.5 126h4v2h-4zM696.5 128h12v2h-12zM702.5 130h4v2h-4z"/></g></g><rect x="746" y="96.0" width="1" height="35.0" fill="#fff"/><rect x="467.4" y="95.0" width="280.80000000000007" height="37.0" fill="none" stroke="#0000ff" stroke-width="2.0"/><g shape-rendering="crispEdges"><rect x="469" y="135.5" width="91" height="36" fill="#929292"/><path fill="#b6b6b6" d="M469 135.5h2v2h-2zM473 135.5h2v2h-2zM487 135.5h2v2h-2zM499 135.5h2v2h-2zM511 135.5h4v2h-4zM517 135.5h2v2h-2zM527 135.5h2v2h-2zM539 135.5h4v2h-4zM545 135.5h2v2h-2zM469 137.5h2v2h-2zM475 137.5h2v2h-2zM479 137.5h2v2h-2zM505 137.5h2v2h-2zM513 137.5h2v2h-2zM521 137.5h2v2h-2zM527 137.5h4v2h-4zM533 137.5h2v2h-2zM537 137.5h4v2h-4zM543 137.5h6v2h-6zM551 137.5h2v2h-2zM557 137.5h3v2h-3zM473 139.5h2v2h-2zM477 139.5h2v2h-2zM483 139.5h2v2h-2zM489 139.5h6v2h-6zM505 139.5h6v2h-6zM525 139.5h2v2h-2zM529 139.5h2v2h-2zM533 139.5h2v2h-2zM541 139.5h4v2h-4zM555 139.5h2v2h-2zM471 141.5h2v2h-2zM475 141.5h2v2h-2zM485 141.5h2v2h-2zM489 141.5h2v2h-2zM493 141.5h2v2h-2zM519 141.5h2v2h-2zM529 141.5h4v2h-4zM537 141.5h2v2h-2zM541 141.5h4v2h-4zM547 141.5h4v2h-4zM555 141.5h2v2h-2zM479 143.5h4v2h-4zM499 143.5h4v2h-4zM507 143.5h2v2h-2zM513 143.5h2v2h-2zM529 143.5h2v2h-2zM535 143.5h2v2h-2zM541 143.5h2v2h-2zM549 143.5h8v2h-8zM469 145.5h2v2h-2zM479 145.5h2v2h-2zM495 145.5h2v2h-2zM499 145.5h2v2h-2zM503 145.5h2v2h-2zM507 145.5h2v2h-2zM515 145.5h2v2h-2zM519 145.5h2v2h-2zM531 145.5h4v2h-4zM541 145.5h2v2h-2zM549 145.5h2v2h-2zM555 145.5h2v2h-2zM469 147.5h2v2h-2zM497 147.5h2v2h-2zM503 147.5h2v2h-2zM507 147.5h2v2h-2zM511 147.5h2v2h-2zM517 147.5h2v2h-2zM521 147.5h2v2h-2zM531 147.5h2v2h-2zM553 147.5h2v2h-2zM557 147.5h3v2h-3zM469 149.5h2v2h-2zM491 149.5h2v2h-2zM497 149.5h2v2h-2zM505 149.5h4v2h-4zM519 149.5h2v2h-2zM525 149.5h2v2h-2zM537 149.5h4v2h-4zM545 149.5h2v2h-2zM555 149.5h5v2h-5zM469 151.5h2v2h-2zM503 151.5h2v2h-2zM509 151.5h2v2h-2zM513 151.5h2v2h-2zM543 151.5h2v2h-2zM551 151.5h2v2h-2zM471 153.5h2v2h-2zM477 153.5h2v2h-2zM481 153.5h2v2h-2zM487 153.5h2v2h-2zM493 153.5h2v2h-2zM501 153.5h2v2h-2zM509 153.5h4v2h-4zM523 153.5h2v2h-2zM533 153.5h2v2h-2zM545 153.5h2v2h-2zM551 153.5h2v2h-2zM555 153.5h4v2h-4zM477 155.5h2v2h-2zM481 155.5h2v2h-2zM493 155.5h2v2h-2zM503 155.5h2v2h-2zM509 155.5h2v2h-2zM517 155.5h4v2h-4zM537 155.5h2v2h-2zM541 155.5h2v2h-2zM471 157.5h2v2h-2zM477 157.5h2v2h-2zM489 157.5h2v2h-2zM499 157.5h2v2h-2zM505 157.5h2v2h-2zM509 157.5h2v2h-2zM515 157.5h2v2h-2zM519 157.5h4v2h-4zM527 157.5h4v2h-4zM533 157.5h2v2h-2zM547 157.5h2v2h-2zM553 157.5h2v2h-2zM473 159.5h4v2h-4zM487 159.5h2v2h-2zM491 159.5h2v2h-2zM499 159.5h4v2h-4zM513 159.5h2v2h-2zM523 159.5h4v2h-4zM529 159.5h2v2h-2zM541 159.5h2v2h-2zM559 159.5h1v2h-1zM471 161.5h4v2h-4zM481 161.5h2v2h-2zM485 161.5h2v2h-2zM489 161.5h2v2h-2zM493 161.5h2v2h-2zM501 161.5h6v2h-6zM509 161.5h2v2h-2zM519 161.5h6v2h-6zM527 161.5h2v2h-2zM535 161.5h2v2h-2zM543 161.5h2v2h-2zM551 161.5h2v2h-2zM555 161.5h4v2h-4zM469 163.5h2v2h-2zM481 163.5h2v2h-2zM489 163.5h4v2h-4zM505 163.5h2v2h-2zM521 163.5h4v2h-4zM527 163.5h2v2h-2zM535 163.5h2v2h-2zM547 163.5h2v2h-2zM555 163.5h5v2h-5zM481 165.5h2v2h-2zM489 165.5h4v2h-4zM497 165.5h4v2h-4zM525 165.5h2v2h-2zM543 165.5h2v2h-2zM507 167.5h2v2h-2zM501 169.5h2v2h-2zM525 169.5h2v2h-2zM543 169.5h2v2h-2z"/><path fill="#dbdbdb" d="M471 135.5h2v2h-2zM475 135.5h2v2h-2zM485 135.5h2v2h-2zM493 135.5h2v2h-2zM501 135.5h4v2h-4zM515 135.5h2v2h-2zM519 135.5h2v2h-2zM531 135.5h2v2h-2zM547 135.5h2v2h-2zM481 137.5h2v2h-2zM487 137.5h2v2h-2zM497 137.5h2v2h-2zM503 137.5h2v2h-2zM511 137.5h2v2h-2zM519 137.5h2v2h-2zM531 137.5h2v2h-2zM535 137.5h2v2h-2zM471 139.5h2v2h-2zM475 139.5h2v2h-2zM497 139.5h2v2h-2zM501 139.5h2v2h-2zM511 139.5h2v2h-2zM537 139.5h2v2h-2zM557 139.5h2v2h-2zM473 141.5h2v2h-2zM479 141.5h4v2h-4zM509 141.5h2v2h-2zM513 141.5h2v2h-2zM517 141.5h2v2h-2zM521 141.5h4v2h-4zM533 141.5h2v2h-2zM557 141.5h3v2h-3zM471 143.5h2v2h-2zM477 143.5h2v2h-2zM487 143.5h4v2h-4zM497 143.5h2v2h-2zM511 143.5h2v2h-2zM519 143.5h2v2h-2zM537 143.5h2v2h-2zM491 145.5h4v2h-4zM501 145.5h2v2h-2zM511 145.5h4v2h-4zM517 145.5h2v2h-2zM523 145.5h4v2h-4zM543 145.5h4v2h-4zM553 145.5h2v2h-2zM559 145.5h1v2h-1zM477 147.5h2v2h-2zM481 147.5h2v2h-2zM487 147.5h2v2h-2zM495 147.5h2v2h-2zM509 147.5h2v2h-2zM515 147.5h2v2h-2zM519 147.5h2v2h-2zM533 147.5h4v2h-4zM515 149.5h2v2h-2zM533 149.5h2v2h-2zM475 151.5h2v2h-2zM489 151.5h2v2h-2zM499 151.5h2v2h-2zM529 151.5h2v2h-2zM533 151.5h4v2h-4zM545 151.5h4v2h-4zM555 151.5h2v2h-2zM559 151.5h1v2h-1zM469 153.5h2v2h-2zM479 153.5h2v2h-2zM485 153.5h2v2h-2zM489 153.5h2v2h-2zM505 153.5h2v2h-2zM521 153.5h2v2h-2zM535 153.5h2v2h-2zM559 153.5h1v2h-1zM473 155.5h2v2h-2zM479 155.5h2v2h-2zM483 155.5h2v2h-2zM507 155.5h2v2h-2zM511 155.5h2v2h-2zM473 157.5h2v2h-2zM479 157.5h4v2h-4zM491 157.5h2v2h-2zM525 157.5h2v2h-2zM535 157.5h2v2h-2zM539 157.5h2v2h-2zM495 159.5h2v2h-2zM533 159.5h2v2h-2zM551 159.5h2v2h-2zM507 161.5h2v2h-2zM517 161.5h2v2h-2zM531 161.5h4v2h-4zM537 161.5h2v2h-2zM549 161.5h2v2h-2zM493 163.5h4v2h-4zM503 163.5h2v2h-2zM507 163.5h2v2h-2zM533 163.5h2v2h-2zM539 163.5h2v2h-2zM545 163.5h2v2h-2zM553 163.5h2v2h-2zM539 165.5h2v2h-2zM557 165.5h2v2h-2zM503 167.5h2v2h-2zM511 167.5h2v2h-2zM523 167.5h2v2h-2zM551 167.5h2v2h-2zM557 169.5h2v2h-2z"/><path fill="#6d6d6d" d="M481 135.5h4v2h-4zM489 135.5h4v2h-4zM495 135.5h2v2h-2zM507 135.5h4v2h-4zM521 135.5h4v2h-4zM533 135.5h2v2h-2zM537 135.5h2v2h-2zM553 135.5h2v2h-2zM557 135.5h2v2h-2zM471 137.5h2v2h-2zM477 137.5h2v2h-2zM483 137.5h4v2h-4zM491 137.5h6v2h-6zM525 137.5h2v2h-2zM555 137.5h2v2h-2zM495 139.5h2v2h-2zM523 139.5h2v2h-2zM531 139.5h2v2h-2zM545 139.5h2v2h-2zM497 141.5h2v2h-2zM501 141.5h2v2h-2zM511 141.5h2v2h-2zM545 141.5h2v2h-2zM505 143.5h2v2h-2zM509 143.5h2v2h-2zM525 143.5h2v2h-2zM531 143.5h2v2h-2zM539 143.5h2v2h-2zM471 145.5h2v2h-2zM489 145.5h2v2h-2zM509 145.5h2v2h-2zM521 145.5h2v2h-2zM527 145.5h2v2h-2zM535 145.5h6v2h-6zM473 147.5h2v2h-2zM479 147.5h2v2h-2zM483 147.5h2v2h-2zM489 147.5h2v2h-2zM513 147.5h2v2h-2zM537 147.5h2v2h-2zM551 147.5h2v2h-2zM471 149.5h2v2h-2zM481 149.5h8v2h-8zM503 149.5h2v2h-2zM511 149.5h4v2h-4zM531 149.5h2v2h-2zM547 149.5h2v2h-2zM553 149.5h2v2h-2zM471 151.5h2v2h-2zM487 151.5h2v2h-2zM495 151.5h2v2h-2zM505 151.5h2v2h-2zM523 151.5h6v2h-6zM541 151.5h2v2h-2zM557 151.5h2v2h-2zM491 153.5h2v2h-2zM503 153.5h2v2h-2zM525 153.5h4v2h-4zM531 153.5h2v2h-2zM539 153.5h2v2h-2zM543 153.5h2v2h-2zM469 155.5h2v2h-2zM487 155.5h6v2h-6zM499 155.5h2v2h-2zM505 155.5h2v2h-2zM523 155.5h4v2h-4zM531 155.5h2v2h-2zM551 155.5h4v2h-4zM559 155.5h1v2h-1zM469 157.5h2v2h-2zM475 157.5h2v2h-2zM483 157.5h6v2h-6zM495 157.5h4v2h-4zM511 157.5h2v2h-2zM543 157.5h2v2h-2zM551 157.5h2v2h-2zM559 157.5h1v2h-1zM469 159.5h2v2h-2zM481 159.5h2v2h-2zM485 159.5h2v2h-2zM497 159.5h2v2h-2zM535 159.5h6v2h-6zM545 159.5h6v2h-6zM491 161.5h2v2h-2zM495 161.5h2v2h-2zM515 161.5h2v2h-2zM525 161.5h2v2h-2zM529 161.5h2v2h-2zM545 161.5h2v2h-2zM473 163.5h2v2h-2zM477 163.5h4v2h-4zM483 163.5h4v2h-4zM501 163.5h2v2h-2zM509 163.5h2v2h-2zM517 163.5h2v2h-2zM531 163.5h2v2h-2zM469 165.5h2v2h-2zM485 165.5h2v2h-2zM513 165.5h2v2h-2zM519 165.5h2v2h-2zM527 165.5h2v2h-2zM531 165.5h2v2h-2zM537 165.5h2v2h-2zM551 165.5h2v2h-2zM475 167.5h2v2h-2zM479 167.5h2v2h-2zM485 167.5h2v2h-2zM489 167.5h2v2h-2zM493 167.5h2v2h-2zM513 167.5h4v2h-4zM545 167.5h6v2h-6zM555 167.5h2v2h-2zM475 169.5h4v2h-4zM481 169.5h2v2h-2zM487 169.5h4v2h-4zM499 169.5h2v2h-2zM503 169.5h2v2h-2zM513 169.5h4v2h-4zM519 169.5h2v2h-2zM529 169.5h2v2h-2zM535 169.5h6v2h-6zM549 169.5h2v2h-2z"/><path fill="#494949" d="M559 135.5h1v2h-1zM473 137.5h2v2h-2zM489 137.5h2v2h-2zM501 137.5h2v2h-2zM479 139.5h4v2h-4zM499 139.5h2v2h-2zM515 139.5h2v2h-2zM519 139.5h2v2h-2zM551 139.5h2v2h-2zM491 141.5h2v2h-2zM523 143.5h2v2h-2zM527 143.5h2v2h-2zM547 143.5h2v2h-2zM559 143.5h1v2h-1zM477 145.5h2v2h-2zM525 147.5h2v2h-2zM555 147.5h2v2h-2zM489 149.5h2v2h-2zM521 149.5h2v2h-2zM479 151.5h4v2h-4zM515 151.5h2v2h-2zM521 151.5h2v2h-2zM475 153.5h2v2h-2zM483 153.5h2v2h-2zM537 153.5h2v2h-2zM547 153.5h2v2h-2zM535 155.5h2v2h-2zM545 155.5h2v2h-2zM505 159.5h4v2h-4zM511 159.5h2v2h-2zM527 159.5h2v2h-2zM513 161.5h2v2h-2zM553 161.5h2v2h-2zM559 161.5h1v2h-1zM541 163.5h2v2h-2zM473 165.5h2v2h-2zM505 165.5h4v2h-4zM515 165.5h2v2h-2zM523 165.5h2v2h-2zM535 165.5h2v2h-2zM549 165.5h2v2h-2zM553 165.5h2v2h-2zM559 165.5h1v2h-1zM471 167.5h2v2h-2zM487 167.5h2v2h-2zM491 167.5h2v2h-2zM499 167.5h2v2h-2zM517 167.5h2v2h-2zM521 167.5h2v2h-2zM529 167.5h2v2h-2zM533 167.5h4v2h-4zM541 167.5h2v2h-2zM559 167.5h1v2h-1zM471 169.5h4v2h-4zM493 169.5h2v2h-2zM497 169.5h2v2h-2zM511 169.5h2v2h-2zM521 169.5h2v2h-2zM531 169.5h2v2h-2zM541 169.5h2v2h-2zM553 169.5h2v2h-2zM559 169.5h1v2h-1z"/><path fill="#ffffff" d="M509 137.5h2v2h-2zM539 139.5h2v2h-2zM549 139.5h2v2h-2zM507 141.5h2v2h-2zM535 141.5h2v2h-2zM539 141.5h2v2h-2zM473 145.5h2v2h-2zM527 147.5h2v2h-2zM539 147.5h2v2h-2zM545 147.5h2v2h-2zM473 149.5h2v2h-2zM501 149.5h2v2h-2zM485 151.5h2v2h-2zM497 151.5h2v2h-2zM517 151.5h2v2h-2zM537 151.5h2v2h-2zM553 151.5h2v2h-2zM507 153.5h2v2h-2zM553 153.5h2v2h-2zM501 155.5h2v2h-2zM513 155.5h4v2h-4zM527 155.5h2v2h-2zM547 155.5h2v2h-2zM479 159.5h2v2h-2zM499 161.5h2v2h-2zM539 161.5h2v2h-2zM515 163.5h2v2h-2zM517 165.5h2v2h-2z"/><path fill="#242424" d="M485 143.5h2v2h-2zM491 143.5h4v2h-4zM541 157.5h2v2h-2zM477 159.5h2v2h-2zM483 165.5h2v2h-2zM493 165.5h2v2h-2zM555 165.5h2v2h-2zM477 167.5h2v2h-2zM481 167.5h2v2h-2zM497 167.5h2v2h-2zM527 167.5h2v2h-2zM539 167.5h2v2h-2zM543 167.5h2v2h-2zM557 167.5h2v2h-2zM479 169.5h2v2h-2zM495 169.5h2v2h-2zM507 169.5h2v2h-2zM517 169.5h2v2h-2zM551 169.5h2v2h-2z"/><path fill="#000000" d="M471 165.5h2v2h-2zM475 165.5h2v2h-2zM479 165.5h2v2h-2zM501 165.5h2v2h-2zM521 165.5h2v2h-2zM541 165.5h2v2h-2zM473 167.5h2v2h-2zM495 167.5h2v2h-2zM505 167.5h2v2h-2zM525 167.5h2v2h-2zM553 167.5h2v2h-2zM485 169.5h2v2h-2zM505 169.5h2v2h-2zM509 169.5h2v2h-2zM527 169.5h2v2h-2z"/></g><rect x="560" y="135.5" width="4" height="36.0" fill="#fff"/><rect x="564" y="135.5" width="90" height="36.0" fill="#898989"/><rect x="654" y="135.5" width="3" height="36.0" fill="#fff"/><clipPath id="sc3"><rect x="656.5" y="135.5" width="89.5" height="36"/></clipPath><g clip-path="url(#sc3)"><g shape-rendering="crispEdges" filter="url(#blur2)"><rect x="652.5" y="131.5" width="97.5" height="44" fill="#8e8e8e"/><path fill="#aaaaaa" d="M680.5 131.5h6v2h-6zM696.5 131.5h4v2h-4zM680.5 133.5h6v2h-6zM696.5 133.5h4v2h-4zM680.5 135.5h6v2h-6zM696.5 135.5h4v2h-4zM724.5 135.5h2v2h-2zM656.5 137.5h2v2h-2zM680.5 137.5h6v2h-6zM696.5 137.5h4v2h-4zM722.5 137.5h4v2h-4zM742.5 137.5h2v2h-2zM652.5 139.5h6v2h-6zM680.5 139.5h8v2h-8zM696.5 139.5h4v2h-4zM722.5 139.5h4v2h-4zM742.5 139.5h4v2h-4zM652.5 141.5h8v2h-8zM670.5 141.5h2v2h-2zM680.5 141.5h8v2h-8zM696.5 141.5h4v2h-4zM722.5 141.5h4v2h-4zM742.5 141.5h4v2h-4zM652.5 143.5h8v2h-8zM668.5 143.5h4v2h-4zM680.5 143.5h4v2h-4zM696.5 143.5h4v2h-4zM722.5 143.5h4v2h-4zM740.5 143.5h6v2h-6zM652.5 145.5h8v2h-8zM666.5 145.5h6v2h-6zM680.5 145.5h4v2h-4zM688.5 145.5h2v2h-2zM696.5 145.5h2v2h-2zM722.5 145.5h4v2h-4zM740.5 145.5h6v2h-6zM652.5 147.5h12v2h-12zM666.5 147.5h6v2h-6zM680.5 147.5h4v2h-4zM688.5 147.5h2v2h-2zM720.5 147.5h6v2h-6zM740.5 147.5h9.5v2h-9.5zM652.5 149.5h12v2h-12zM666.5 149.5h6v2h-6zM680.5 149.5h4v2h-4zM688.5 149.5h2v2h-2zM720.5 149.5h6v2h-6zM732.5 149.5h2v2h-2zM740.5 149.5h9.5v2h-9.5zM652.5 151.5h12v2h-12zM668.5 151.5h4v2h-4zM680.5 151.5h4v2h-4zM688.5 151.5h2v2h-2zM720.5 151.5h6v2h-6zM730.5 151.5h4v2h-4zM740.5 151.5h9.5v2h-9.5zM652.5 153.5h12v2h-12zM668.5 153.5h6v2h-6zM680.5 153.5h2v2h-2zM688.5 153.5h2v2h-2zM720.5 153.5h8v2h-8zM730.5 153.5h4v2h-4zM742.5 153.5h4v2h-4zM652.5 155.5h12v2h-12zM670.5 155.5h4v2h-4zM680.5 155.5h2v2h-2zM688.5 155.5h2v2h-2zM720.5 155.5h8v2h-8zM730.5 155.5h2v2h-2zM734.5 155.5h2v2h-2zM742.5 155.5h4v2h-4zM652.5 157.5h12v2h-12zM680.5 157.5h2v2h-2zM688.5 157.5h2v2h-2zM720.5 157.5h12v2h-12zM734.5 157.5h2v2h-2zM742.5 157.5h4v2h-4zM656.5 159.5h8v2h-8zM680.5 159.5h4v2h-4zM720.5 159.5h12v2h-12zM734.5 159.5h2v2h-2zM742.5 159.5h4v2h-4zM656.5 161.5h6v2h-6zM680.5 161.5h4v2h-4zM720.5 161.5h12v2h-12zM734.5 161.5h2v2h-2zM742.5 161.5h2v2h-2z"/><path fill="#717171" d="M690.5 131.5h2v2h-2zM712.5 131.5h2v2h-2zM690.5 133.5h2v2h-2zM712.5 133.5h2v2h-2zM690.5 135.5h2v2h-2zM710.5 135.5h6v2h-6zM690.5 137.5h4v2h-4zM710.5 137.5h6v2h-6zM690.5 139.5h4v2h-4zM710.5 139.5h6v2h-6zM692.5 141.5h2v2h-2zM712.5 141.5h4v2h-4zM712.5 143.5h4v2h-4zM674.5 149.5h4v2h-4zM692.5 149.5h2v2h-2zM674.5 151.5h4v2h-4zM692.5 151.5h2v2h-2zM736.5 151.5h4v2h-4zM674.5 153.5h4v2h-4zM692.5 153.5h4v2h-4zM736.5 153.5h4v2h-4zM674.5 155.5h4v2h-4zM692.5 155.5h4v2h-4zM736.5 155.5h4v2h-4zM676.5 157.5h2v2h-2zM694.5 157.5h2v2h-2zM712.5 157.5h2v2h-2zM736.5 157.5h4v2h-4zM676.5 159.5h2v2h-2zM690.5 159.5h2v2h-2zM694.5 159.5h2v2h-2zM712.5 159.5h2v2h-2zM736.5 159.5h4v2h-4zM676.5 161.5h2v2h-2zM690.5 161.5h2v2h-2zM712.5 161.5h4v2h-4zM736.5 161.5h4v2h-4zM652.5 163.5h6v2h-6zM662.5 163.5h2v2h-2zM680.5 163.5h10v2h-10zM720.5 163.5h12v2h-12zM734.5 163.5h2v2h-2zM742.5 163.5h7.5v2h-7.5z"/><path fill="#c6c6c6" d="M684.5 143.5h4v2h-4zM684.5 145.5h4v2h-4zM684.5 147.5h4v2h-4zM684.5 149.5h4v2h-4zM684.5 151.5h4v2h-4zM682.5 153.5h6v2h-6zM682.5 155.5h6v2h-6zM732.5 155.5h2v2h-2zM682.5 157.5h6v2h-6zM732.5 157.5h2v2h-2zM684.5 159.5h4v2h-4zM732.5 159.5h2v2h-2zM684.5 161.5h4v2h-4zM732.5 161.5h2v2h-2z"/><path fill="#555555" d="M692.5 157.5h2v2h-2zM692.5 159.5h2v2h-2zM692.5 161.5h4v2h-4zM664.5 163.5h12v2h-12zM678.5 163.5h2v2h-2zM690.5 163.5h2v2h-2zM696.5 163.5h16v2h-16zM716.5 163.5h4v2h-4zM736.5 163.5h2v2h-2zM740.5 163.5h2v2h-2zM652.5 165.5h10v2h-10zM732.5 165.5h2v2h-2zM658.5 167.5h4v2h-4zM732.5 167.5h2v2h-2zM658.5 169.5h4v2h-4zM658.5 171.5h2v2h-2zM658.5 173.5h2v2h-2z"/><path fill="#393939" d="M676.5 163.5h2v2h-2zM692.5 163.5h4v2h-4zM712.5 163.5h4v2h-4zM738.5 163.5h2v2h-2zM662.5 165.5h2v2h-2zM684.5 165.5h6v2h-6zM696.5 165.5h2v2h-2zM728.5 165.5h4v2h-4zM734.5 165.5h2v2h-2zM742.5 165.5h4v2h-4zM652.5 167.5h6v2h-6zM662.5 167.5h2v2h-2zM730.5 167.5h2v2h-2zM734.5 167.5h2v2h-2zM652.5 169.5h6v2h-6zM662.5 169.5h2v2h-2zM730.5 169.5h6v2h-6zM652.5 171.5h6v2h-6zM660.5 171.5h4v2h-4zM730.5 171.5h6v2h-6zM652.5 173.5h6v2h-6zM660.5 173.5h4v2h-4zM730.5 173.5h6v2h-6z"/><path fill="#1c1c1c" d="M664.5 165.5h6v2h-6zM678.5 165.5h6v2h-6zM690.5 165.5h2v2h-2zM698.5 165.5h4v2h-4zM718.5 165.5h10v2h-10zM736.5 165.5h6v2h-6zM746.5 165.5h3.5v2h-3.5zM664.5 167.5h6v2h-6zM680.5 167.5h12v2h-12zM696.5 167.5h4v2h-4zM720.5 167.5h10v2h-10zM736.5 167.5h13.5v2h-13.5zM664.5 169.5h6v2h-6zM680.5 169.5h20v2h-20zM720.5 169.5h10v2h-10zM736.5 169.5h13.5v2h-13.5zM664.5 171.5h6v2h-6zM680.5 171.5h20v2h-20zM722.5 171.5h8v2h-8zM736.5 171.5h13.5v2h-13.5zM664.5 173.5h6v2h-6zM680.5 173.5h20v2h-20zM722.5 173.5h8v2h-8zM736.5 173.5h13.5v2h-13.5z"/><path fill="#000000" d="M670.5 165.5h8v2h-8zM692.5 165.5h4v2h-4zM702.5 165.5h16v2h-16zM670.5 167.5h10v2h-10zM692.5 167.5h4v2h-4zM700.5 167.5h20v2h-20zM670.5 169.5h10v2h-10zM700.5 169.5h20v2h-20zM670.5 171.5h10v2h-10zM700.5 171.5h22v2h-22zM670.5 173.5h10v2h-10zM700.5 173.5h22v2h-22z"/></g></g><rect x="746" y="135.5" width="1" height="36.0" fill="#fff"/><rect x="467.4" y="134.5" width="280.80000000000007" height="38.0" fill="none" stroke="#00ff00" stroke-width="2.0"/><g shape-rendering="crispEdges"><rect x="469" y="175.5" width="91" height="35.5" fill="#929292"/><path fill="#dbdbdb" d="M469 175.5h2v2h-2zM487 175.5h2v2h-2zM507 175.5h2v2h-2zM511 175.5h2v2h-2zM519 175.5h2v2h-2zM527 175.5h2v2h-2zM545 175.5h2v2h-2zM555 175.5h2v2h-2zM481 177.5h2v2h-2zM503 177.5h2v2h-2zM509 177.5h2v2h-2zM513 177.5h2v2h-2zM517 177.5h2v2h-2zM527 177.5h2v2h-2zM539 177.5h2v2h-2zM559 177.5h1v2h-1zM477 179.5h2v2h-2zM525 179.5h6v2h-6zM477 181.5h2v2h-2zM481 181.5h2v2h-2zM507 181.5h2v2h-2zM523 181.5h2v2h-2zM529 181.5h2v2h-2zM545 181.5h2v2h-2zM557 181.5h3v2h-3zM471 183.5h2v2h-2zM483 183.5h2v2h-2zM489 183.5h4v2h-4zM517 183.5h2v2h-2zM525 183.5h2v2h-2zM529 183.5h2v2h-2zM545 183.5h2v2h-2zM557 183.5h2v2h-2zM497 185.5h2v2h-2zM519 185.5h4v2h-4zM557 185.5h2v2h-2zM469 187.5h2v2h-2zM477 187.5h2v2h-2zM497 187.5h2v2h-2zM501 187.5h2v2h-2zM525 187.5h4v2h-4zM541 187.5h2v2h-2zM547 187.5h2v2h-2zM551 187.5h2v2h-2zM477 189.5h2v2h-2zM481 189.5h2v2h-2zM489 189.5h2v2h-2zM505 189.5h2v2h-2zM531 189.5h2v2h-2zM537 189.5h2v2h-2zM543 189.5h2v2h-2zM477 191.5h2v2h-2zM483 191.5h2v2h-2zM493 191.5h2v2h-2zM519 191.5h2v2h-2zM533 191.5h2v2h-2zM537 191.5h2v2h-2zM541 191.5h2v2h-2zM485 193.5h4v2h-4zM491 193.5h4v2h-4zM501 193.5h2v2h-2zM507 193.5h2v2h-2zM519 193.5h4v2h-4zM533 193.5h2v2h-2zM539 193.5h2v2h-2zM559 193.5h1v2h-1zM471 195.5h2v2h-2zM487 195.5h2v2h-2zM501 195.5h4v2h-4zM515 195.5h2v2h-2zM523 195.5h2v2h-2zM529 195.5h4v2h-4zM541 195.5h2v2h-2zM475 197.5h2v2h-2zM495 197.5h2v2h-2zM505 197.5h2v2h-2zM509 197.5h2v2h-2zM515 197.5h4v2h-4zM525 197.5h2v2h-2zM539 197.5h2v2h-2zM477 199.5h2v2h-2zM499 199.5h2v2h-2zM515 199.5h2v2h-2zM533 199.5h2v2h-2zM541 199.5h2v2h-2zM555 199.5h2v2h-2zM503 201.5h2v2h-2zM547 201.5h2v2h-2zM559 201.5h1v2h-1zM503 203.5h4v2h-4zM509 203.5h4v2h-4zM529 203.5h2v2h-2zM533 203.5h4v2h-4zM553 203.5h2v2h-2zM469 205.5h2v2h-2zM481 205.5h2v2h-2zM513 205.5h2v2h-2zM537 205.5h2v2h-2zM551 205.5h2v2h-2zM555 205.5h2v2h-2zM487 207.5h2v2h-2zM497 207.5h2v2h-2zM519 207.5h2v2h-2zM533 207.5h2v2h-2zM547 207.5h2v2h-2zM469 209.5h2v1.5h-2zM511 209.5h2v1.5h-2zM531 209.5h2v1.5h-2z"/><path fill="#6d6d6d" d="M475 175.5h2v2h-2zM485 175.5h2v2h-2zM515 175.5h4v2h-4zM523 175.5h2v2h-2zM531 175.5h4v2h-4zM547 175.5h4v2h-4zM479 177.5h2v2h-2zM489 177.5h2v2h-2zM497 177.5h2v2h-2zM501 177.5h2v2h-2zM505 177.5h2v2h-2zM519 177.5h4v2h-4zM529 177.5h2v2h-2zM533 177.5h2v2h-2zM473 179.5h4v2h-4zM507 179.5h2v2h-2zM513 179.5h2v2h-2zM523 179.5h2v2h-2zM531 179.5h2v2h-2zM549 179.5h2v2h-2zM471 181.5h2v2h-2zM483 181.5h2v2h-2zM493 181.5h2v2h-2zM499 181.5h4v2h-4zM511 181.5h2v2h-2zM543 181.5h2v2h-2zM497 183.5h2v2h-2zM507 183.5h2v2h-2zM515 183.5h2v2h-2zM523 183.5h2v2h-2zM549 183.5h2v2h-2zM559 183.5h1v2h-1zM491 185.5h2v2h-2zM495 185.5h2v2h-2zM499 185.5h2v2h-2zM505 185.5h2v2h-2zM511 185.5h2v2h-2zM515 185.5h2v2h-2zM533 185.5h6v2h-6zM489 187.5h2v2h-2zM509 187.5h2v2h-2zM549 187.5h2v2h-2zM553 187.5h2v2h-2zM559 187.5h1v2h-1zM471 189.5h2v2h-2zM479 189.5h2v2h-2zM503 189.5h2v2h-2zM507 189.5h2v2h-2zM517 189.5h2v2h-2zM523 189.5h2v2h-2zM527 189.5h2v2h-2zM533 189.5h2v2h-2zM541 189.5h2v2h-2zM549 189.5h2v2h-2zM555 189.5h2v2h-2zM473 191.5h4v2h-4zM501 191.5h2v2h-2zM539 191.5h2v2h-2zM545 191.5h4v2h-4zM553 191.5h2v2h-2zM471 193.5h2v2h-2zM475 193.5h2v2h-2zM479 193.5h2v2h-2zM483 193.5h2v2h-2zM515 193.5h4v2h-4zM527 193.5h2v2h-2zM545 193.5h2v2h-2zM553 193.5h2v2h-2zM519 195.5h2v2h-2zM525 195.5h2v2h-2zM469 197.5h4v2h-4zM487 197.5h2v2h-2zM491 197.5h2v2h-2zM519 197.5h4v2h-4zM541 197.5h4v2h-4zM555 197.5h2v2h-2zM497 199.5h2v2h-2zM507 199.5h2v2h-2zM511 199.5h2v2h-2zM547 199.5h4v2h-4zM471 201.5h2v2h-2zM475 201.5h2v2h-2zM479 201.5h2v2h-2zM495 201.5h2v2h-2zM545 201.5h2v2h-2zM555 201.5h2v2h-2zM471 203.5h2v2h-2zM485 203.5h4v2h-4zM491 203.5h2v2h-2zM499 203.5h2v2h-2zM507 203.5h2v2h-2zM519 203.5h2v2h-2zM525 203.5h2v2h-2zM471 205.5h6v2h-6zM491 205.5h2v2h-2zM511 205.5h2v2h-2zM519 205.5h2v2h-2zM529 205.5h2v2h-2zM533 205.5h4v2h-4zM553 205.5h2v2h-2zM559 205.5h1v2h-1zM471 207.5h2v2h-2zM475 207.5h2v2h-2zM479 207.5h2v2h-2zM501 207.5h2v2h-2zM521 207.5h4v2h-4zM527 207.5h2v2h-2zM539 207.5h2v2h-2zM543 207.5h2v2h-2zM555 207.5h2v2h-2zM475 209.5h2v1.5h-2zM493 209.5h2v1.5h-2zM497 209.5h4v1.5h-4zM515 209.5h2v1.5h-2zM527 209.5h4v1.5h-4zM543 209.5h2v1.5h-2zM555 209.5h2v1.5h-2zM559 209.5h1v1.5h-1z"/><path fill="#b6b6b6" d="M477 175.5h4v2h-4zM489 175.5h2v2h-2zM493 175.5h6v2h-6zM501 175.5h6v2h-6zM509 175.5h2v2h-2zM539 175.5h4v2h-4zM557 175.5h3v2h-3zM471 177.5h4v2h-4zM477 177.5h2v2h-2zM483 177.5h2v2h-2zM507 177.5h2v2h-2zM511 177.5h2v2h-2zM515 177.5h2v2h-2zM525 177.5h2v2h-2zM535 177.5h2v2h-2zM557 177.5h2v2h-2zM469 179.5h2v2h-2zM483 179.5h2v2h-2zM491 179.5h2v2h-2zM499 179.5h4v2h-4zM511 179.5h2v2h-2zM521 179.5h2v2h-2zM537 179.5h2v2h-2zM547 179.5h2v2h-2zM551 179.5h4v2h-4zM559 179.5h1v2h-1zM469 181.5h2v2h-2zM473 181.5h4v2h-4zM491 181.5h2v2h-2zM495 181.5h4v2h-4zM505 181.5h2v2h-2zM517 181.5h2v2h-2zM533 181.5h2v2h-2zM539 181.5h4v2h-4zM551 181.5h2v2h-2zM555 181.5h2v2h-2zM479 183.5h2v2h-2zM485 183.5h4v2h-4zM499 183.5h2v2h-2zM509 183.5h4v2h-4zM521 183.5h2v2h-2zM535 183.5h2v2h-2zM547 183.5h2v2h-2zM553 183.5h4v2h-4zM469 185.5h2v2h-2zM481 185.5h6v2h-6zM493 185.5h2v2h-2zM503 185.5h2v2h-2zM509 185.5h2v2h-2zM529 185.5h4v2h-4zM539 185.5h14v2h-14zM555 185.5h2v2h-2zM473 187.5h4v2h-4zM481 187.5h2v2h-2zM485 187.5h4v2h-4zM495 187.5h2v2h-2zM499 187.5h2v2h-2zM511 187.5h2v2h-2zM517 187.5h2v2h-2zM529 187.5h2v2h-2zM533 187.5h2v2h-2zM555 187.5h2v2h-2zM469 189.5h2v2h-2zM473 189.5h2v2h-2zM493 189.5h2v2h-2zM497 189.5h2v2h-2zM515 189.5h2v2h-2zM519 189.5h2v2h-2zM525 189.5h2v2h-2zM529 189.5h2v2h-2zM535 189.5h2v2h-2zM539 189.5h2v2h-2zM547 189.5h2v2h-2zM551 189.5h4v2h-4zM557 189.5h2v2h-2zM469 191.5h4v2h-4zM479 191.5h2v2h-2zM485 191.5h4v2h-4zM499 191.5h2v2h-2zM531 191.5h2v2h-2zM535 191.5h2v2h-2zM549 191.5h2v2h-2zM559 191.5h1v2h-1zM473 193.5h2v2h-2zM481 193.5h2v2h-2zM489 193.5h2v2h-2zM499 193.5h2v2h-2zM513 193.5h2v2h-2zM525 193.5h2v2h-2zM529 193.5h4v2h-4zM535 193.5h4v2h-4zM543 193.5h2v2h-2zM549 193.5h2v2h-2zM557 193.5h2v2h-2zM469 195.5h2v2h-2zM477 195.5h2v2h-2zM481 195.5h2v2h-2zM493 195.5h2v2h-2zM517 195.5h2v2h-2zM533 195.5h6v2h-6zM543 195.5h2v2h-2zM549 195.5h2v2h-2zM553 195.5h4v2h-4zM477 197.5h6v2h-6zM485 197.5h2v2h-2zM489 197.5h2v2h-2zM501 197.5h4v2h-4zM507 197.5h2v2h-2zM529 197.5h2v2h-2zM533 197.5h6v2h-6zM553 197.5h2v2h-2zM559 197.5h1v2h-1zM471 199.5h2v2h-2zM475 199.5h2v2h-2zM481 199.5h4v2h-4zM487 199.5h2v2h-2zM503 199.5h2v2h-2zM517 199.5h6v2h-6zM527 199.5h2v2h-2zM531 199.5h2v2h-2zM537 199.5h2v2h-2zM543 199.5h2v2h-2zM551 199.5h4v2h-4zM473 201.5h2v2h-2zM481 201.5h2v2h-2zM485 201.5h2v2h-2zM491 201.5h2v2h-2zM507 201.5h2v2h-2zM511 201.5h6v2h-6zM525 201.5h4v2h-4zM537 201.5h6v2h-6zM549 201.5h6v2h-6zM557 201.5h2v2h-2zM469 203.5h2v2h-2zM475 203.5h4v2h-4zM481 203.5h4v2h-4zM495 203.5h2v2h-2zM517 203.5h2v2h-2zM523 203.5h2v2h-2zM539 203.5h4v2h-4zM545 203.5h2v2h-2zM557 203.5h2v2h-2zM479 205.5h2v2h-2zM483 205.5h6v2h-6zM493 205.5h2v2h-2zM501 205.5h2v2h-2zM505 205.5h2v2h-2zM515 205.5h2v2h-2zM523 205.5h2v2h-2zM527 205.5h2v2h-2zM541 205.5h2v2h-2zM545 205.5h6v2h-6zM557 205.5h2v2h-2zM483 207.5h2v2h-2zM491 207.5h2v2h-2zM503 207.5h2v2h-2zM509 207.5h10v2h-10zM525 207.5h2v2h-2zM529 207.5h2v2h-2zM537 207.5h2v2h-2zM541 207.5h2v2h-2zM545 207.5h2v2h-2zM551 207.5h2v2h-2zM559 207.5h1v2h-1zM471 209.5h2v1.5h-2zM479 209.5h2v1.5h-2zM485 209.5h2v1.5h-2zM495 209.5h2v1.5h-2zM501 209.5h2v1.5h-2zM507 209.5h2v1.5h-2zM521 209.5h4v1.5h-4zM537 209.5h2v1.5h-2zM547 209.5h8v1.5h-8zM557 209.5h2v1.5h-2z"/><path fill="#494949" d="M521 175.5h2v2h-2zM529 175.5h2v2h-2zM547 177.5h2v2h-2zM533 179.5h2v2h-2zM487 181.5h2v2h-2zM501 183.5h2v2h-2zM559 185.5h1v2h-1zM511 189.5h4v2h-4zM509 191.5h2v2h-2zM515 191.5h2v2h-2zM473 195.5h2v2h-2zM501 199.5h2v2h-2zM523 199.5h2v2h-2zM499 201.5h2v2h-2zM531 203.5h2v2h-2zM543 203.5h2v2h-2zM551 203.5h2v2h-2zM503 205.5h2v2h-2zM477 209.5h2v1.5h-2z"/><path fill="#ffffff" d="M543 175.5h2v2h-2zM485 177.5h2v2h-2zM555 177.5h2v2h-2zM489 179.5h2v2h-2zM557 179.5h2v2h-2zM495 183.5h2v2h-2zM539 183.5h2v2h-2zM479 185.5h2v2h-2zM487 185.5h2v2h-2zM535 187.5h2v2h-2zM483 189.5h2v2h-2zM491 189.5h2v2h-2zM507 191.5h2v2h-2zM517 191.5h2v2h-2zM557 191.5h2v2h-2zM497 193.5h2v2h-2zM523 193.5h2v2h-2zM491 195.5h2v2h-2zM497 195.5h2v2h-2zM539 195.5h2v2h-2zM473 197.5h2v2h-2zM531 197.5h2v2h-2zM547 197.5h4v2h-4zM525 199.5h2v2h-2zM539 199.5h2v2h-2zM487 201.5h2v2h-2zM497 201.5h2v2h-2zM501 201.5h2v2h-2zM531 205.5h2v2h-2zM469 207.5h2v2h-2zM473 207.5h2v2h-2zM477 207.5h2v2h-2zM489 207.5h2v2h-2zM505 207.5h2v2h-2zM549 207.5h2v2h-2zM487 209.5h2v1.5h-2zM535 209.5h2v1.5h-2z"/><path fill="#242424" d="M549 177.5h2v2h-2zM515 181.5h2v2h-2zM481 207.5h2v2h-2z"/></g><rect x="560" y="175.5" width="4" height="35.5" fill="#fff"/><rect x="564" y="175.5" width="90" height="35.5" fill="#898989"/><rect x="654" y="175.5" width="3" height="35.5" fill="#fff"/><clipPath id="sc4"><rect x="656.5" y="175.5" width="89.5" height="35.5"/></clipPath><g clip-path="url(#sc4)"><g shape-rendering="crispEdges" filter="url(#blur2)"><rect x="652.5" y="171.5" width="97.5" height="43.5" fill="#8e8e8e"/><path fill="#717171" d="M700.5 171.5h2v2h-2zM706.5 171.5h2v2h-2zM726.5 171.5h2v2h-2zM742.5 171.5h2v2h-2zM700.5 173.5h2v2h-2zM706.5 173.5h2v2h-2zM726.5 173.5h2v2h-2zM742.5 173.5h2v2h-2zM678.5 175.5h2v2h-2zM700.5 175.5h2v2h-2zM706.5 175.5h2v2h-2zM726.5 175.5h2v2h-2zM742.5 175.5h4v2h-4zM670.5 177.5h4v2h-4zM678.5 177.5h4v2h-4zM684.5 177.5h2v2h-2zM700.5 177.5h2v2h-2zM706.5 177.5h2v2h-2zM724.5 177.5h4v2h-4zM742.5 177.5h4v2h-4zM670.5 179.5h4v2h-4zM678.5 179.5h8v2h-8zM700.5 179.5h2v2h-2zM706.5 179.5h2v2h-2zM724.5 179.5h4v2h-4zM742.5 179.5h4v2h-4zM670.5 181.5h4v2h-4zM678.5 181.5h8v2h-8zM700.5 181.5h2v2h-2zM706.5 181.5h2v2h-2zM724.5 181.5h4v2h-4zM742.5 181.5h4v2h-4zM670.5 183.5h4v2h-4zM678.5 183.5h8v2h-8zM700.5 183.5h4v2h-4zM706.5 183.5h2v2h-2zM724.5 183.5h4v2h-4zM742.5 183.5h4v2h-4zM670.5 185.5h4v2h-4zM678.5 185.5h8v2h-8zM700.5 185.5h6v2h-6zM724.5 185.5h4v2h-4zM744.5 185.5h5.5v2h-5.5zM670.5 187.5h4v2h-4zM680.5 187.5h6v2h-6zM700.5 187.5h6v2h-6zM726.5 187.5h2v2h-2zM744.5 187.5h2v2h-2zM670.5 189.5h4v2h-4zM680.5 189.5h6v2h-6zM700.5 189.5h6v2h-6zM744.5 189.5h2v2h-2zM680.5 191.5h6v2h-6zM700.5 191.5h6v2h-6zM664.5 193.5h4v2h-4zM682.5 193.5h2v2h-2zM696.5 193.5h2v2h-2zM702.5 193.5h2v2h-2zM664.5 195.5h4v2h-4zM682.5 195.5h2v2h-2zM724.5 195.5h2v2h-2zM664.5 197.5h4v2h-4zM682.5 197.5h2v2h-2zM724.5 197.5h2v2h-2zM660.5 199.5h2v2h-2zM664.5 199.5h4v2h-4zM724.5 199.5h2v2h-2zM660.5 201.5h2v2h-2zM664.5 201.5h4v2h-4zM724.5 201.5h4v2h-4zM660.5 203.5h2v2h-2zM664.5 203.5h4v2h-4zM724.5 203.5h4v2h-4zM660.5 205.5h2v2h-2zM726.5 205.5h2v2h-2zM660.5 207.5h2v2h-2zM726.5 207.5h2v2h-2z"/><path fill="#555555" d="M702.5 171.5h4v2h-4zM702.5 173.5h4v2h-4zM702.5 175.5h4v2h-4zM702.5 177.5h4v2h-4zM702.5 179.5h4v2h-4zM702.5 181.5h4v2h-4zM704.5 183.5h2v2h-2zM724.5 187.5h2v2h-2zM724.5 189.5h4v2h-4zM724.5 191.5h4v2h-4zM724.5 193.5h4v2h-4zM726.5 195.5h2v2h-2zM726.5 197.5h2v2h-2zM726.5 199.5h2v2h-2z"/><path fill="#aaaaaa" d="M714.5 171.5h2v2h-2zM738.5 171.5h4v2h-4zM714.5 173.5h2v2h-2zM738.5 173.5h4v2h-4zM712.5 175.5h4v2h-4zM738.5 175.5h4v2h-4zM656.5 177.5h2v2h-2zM664.5 177.5h2v2h-2zM712.5 177.5h4v2h-4zM732.5 177.5h2v2h-2zM738.5 177.5h4v2h-4zM656.5 179.5h4v2h-4zM664.5 179.5h2v2h-2zM712.5 179.5h4v2h-4zM732.5 179.5h6v2h-6zM740.5 179.5h2v2h-2zM656.5 181.5h4v2h-4zM664.5 181.5h4v2h-4zM686.5 181.5h2v2h-2zM712.5 181.5h4v2h-4zM732.5 181.5h6v2h-6zM740.5 181.5h2v2h-2zM652.5 183.5h8v2h-8zM664.5 183.5h4v2h-4zM686.5 183.5h2v2h-2zM712.5 183.5h4v2h-4zM732.5 183.5h6v2h-6zM652.5 185.5h8v2h-8zM664.5 185.5h2v2h-2zM686.5 185.5h2v2h-2zM712.5 185.5h2v2h-2zM730.5 185.5h8v2h-8zM652.5 187.5h8v2h-8zM664.5 187.5h2v2h-2zM686.5 187.5h2v2h-2zM708.5 187.5h2v2h-2zM712.5 187.5h2v2h-2zM730.5 187.5h2v2h-2zM734.5 187.5h4v2h-4zM656.5 189.5h2v2h-2zM686.5 189.5h2v2h-2zM708.5 189.5h2v2h-2zM712.5 189.5h4v2h-4zM730.5 189.5h2v2h-2zM734.5 189.5h4v2h-4zM740.5 189.5h2v2h-2zM656.5 191.5h2v2h-2zM686.5 191.5h2v2h-2zM708.5 191.5h2v2h-2zM712.5 191.5h4v2h-4zM730.5 191.5h2v2h-2zM734.5 191.5h8v2h-8zM656.5 193.5h2v2h-2zM676.5 193.5h2v2h-2zM686.5 193.5h2v2h-2zM708.5 193.5h2v2h-2zM712.5 193.5h4v2h-4zM730.5 193.5h2v2h-2zM734.5 193.5h8v2h-8zM652.5 195.5h6v2h-6zM674.5 195.5h4v2h-4zM706.5 195.5h4v2h-4zM712.5 195.5h4v2h-4zM730.5 195.5h2v2h-2zM734.5 195.5h8v2h-8zM652.5 197.5h6v2h-6zM674.5 197.5h6v2h-6zM692.5 197.5h2v2h-2zM706.5 197.5h4v2h-4zM714.5 197.5h2v2h-2zM730.5 197.5h12v2h-12zM744.5 197.5h5.5v2h-5.5zM652.5 199.5h6v2h-6zM676.5 199.5h4v2h-4zM692.5 199.5h2v2h-2zM706.5 199.5h4v2h-4zM730.5 199.5h12v2h-12zM744.5 199.5h5.5v2h-5.5zM652.5 201.5h6v2h-6zM678.5 201.5h2v2h-2zM692.5 201.5h2v2h-2zM706.5 201.5h4v2h-4zM730.5 201.5h19.5v2h-19.5zM652.5 203.5h6v2h-6zM692.5 203.5h2v2h-2zM706.5 203.5h4v2h-4zM720.5 203.5h2v2h-2zM730.5 203.5h19.5v2h-19.5zM652.5 205.5h6v2h-6zM706.5 205.5h4v2h-4zM720.5 205.5h4v2h-4zM730.5 205.5h4v2h-4zM738.5 205.5h11.5v2h-11.5zM652.5 207.5h6v2h-6zM706.5 207.5h2v2h-2zM718.5 207.5h6v2h-6zM738.5 207.5h11.5v2h-11.5zM652.5 209.5h4v2h-4zM718.5 209.5h6v2h-6zM738.5 209.5h11.5v2h-11.5zM652.5 211.5h4v2h-4zM718.5 211.5h6v2h-6zM738.5 211.5h11.5v2h-11.5zM652.5 213.5h4v1.5h-4zM718.5 213.5h6v1.5h-6zM738.5 213.5h11.5v1.5h-11.5z"/><path fill="#c6c6c6" d="M738.5 179.5h2v2h-2zM738.5 181.5h2v2h-2zM738.5 183.5h4v2h-4zM714.5 185.5h2v2h-2zM738.5 185.5h4v2h-4zM714.5 187.5h2v2h-2zM732.5 187.5h2v2h-2zM738.5 187.5h4v2h-4zM732.5 189.5h2v2h-2zM738.5 189.5h2v2h-2zM732.5 191.5h2v2h-2zM732.5 193.5h2v2h-2zM732.5 195.5h2v2h-2z"/></g></g><rect x="746" y="175.5" width="1" height="35.5" fill="#fff"/><rect x="467.4" y="174.5" width="280.80000000000007" height="37.5" fill="none" stroke="#ffa500" stroke-width="2.0"/><g shape-rendering="crispEdges"><rect x="469" y="215" width="91" height="35.4" fill="#929292"/><path fill="#ffffff" d="M469 215h2v2h-2zM487 215h2v2h-2zM553 215h2v2h-2zM501 219h2v2h-2zM527 219h2v2h-2zM519 221h2v2h-2zM523 221h2v2h-2zM531 221h2v2h-2zM541 223h2v2h-2zM497 225h2v2h-2zM471 227h2v2h-2zM517 229h2v2h-2zM557 229h2v2h-2zM519 231h2v2h-2zM543 235h2v2h-2zM525 237h2v2h-2zM557 237h2v2h-2zM481 241h2v2h-2zM495 241h2v2h-2zM505 241h2v2h-2zM555 241h2v2h-2zM485 243h2v2h-2zM507 243h2v2h-2zM511 243h2v2h-2z"/><path fill="#dbdbdb" d="M479 215h2v2h-2zM485 215h2v2h-2zM489 215h4v2h-4zM495 215h2v2h-2zM519 215h4v2h-4zM531 215h2v2h-2zM559 215h1v2h-1zM469 217h2v2h-2zM489 217h2v2h-2zM509 217h2v2h-2zM533 217h2v2h-2zM553 217h2v2h-2zM499 219h2v2h-2zM503 219h2v2h-2zM519 219h2v2h-2zM545 219h2v2h-2zM473 221h2v2h-2zM477 221h4v2h-4zM501 221h2v2h-2zM505 221h2v2h-2zM511 221h2v2h-2zM515 221h4v2h-4zM555 221h2v2h-2zM473 223h2v2h-2zM477 223h2v2h-2zM481 223h2v2h-2zM497 223h2v2h-2zM509 223h2v2h-2zM533 223h2v2h-2zM557 223h2v2h-2zM469 225h2v2h-2zM487 225h2v2h-2zM495 225h2v2h-2zM469 227h2v2h-2zM483 227h2v2h-2zM487 227h2v2h-2zM501 227h2v2h-2zM507 227h2v2h-2zM523 227h2v2h-2zM541 227h2v2h-2zM551 227h2v2h-2zM495 229h2v2h-2zM503 229h2v2h-2zM549 229h2v2h-2zM493 231h4v2h-4zM501 231h2v2h-2zM505 231h2v2h-2zM527 231h2v2h-2zM537 231h2v2h-2zM555 231h2v2h-2zM491 233h2v2h-2zM503 233h2v2h-2zM523 233h2v2h-2zM529 233h4v2h-4zM535 233h2v2h-2zM553 233h2v2h-2zM557 233h2v2h-2zM471 235h2v2h-2zM497 235h2v2h-2zM507 235h4v2h-4zM521 235h2v2h-2zM537 235h2v2h-2zM545 235h2v2h-2zM473 237h2v2h-2zM483 237h2v2h-2zM535 237h4v2h-4zM559 237h1v2h-1zM479 239h4v2h-4zM501 239h2v2h-2zM531 239h4v2h-4zM551 239h2v2h-2zM469 241h2v2h-2zM479 241h2v2h-2zM499 241h2v2h-2zM507 241h2v2h-2zM511 241h2v2h-2zM527 241h2v2h-2zM551 241h2v2h-2zM479 243h2v2h-2zM489 243h4v2h-4zM519 243h2v2h-2zM553 243h2v2h-2zM559 243h1v2h-1zM541 245h2v2h-2zM477 247h2v2h-2z"/><path fill="#b6b6b6" d="M481 215h2v2h-2zM497 215h2v2h-2zM503 215h2v2h-2zM511 215h2v2h-2zM517 215h2v2h-2zM523 215h4v2h-4zM533 215h2v2h-2zM537 215h2v2h-2zM541 215h2v2h-2zM557 215h2v2h-2zM471 217h6v2h-6zM481 217h6v2h-6zM491 217h2v2h-2zM505 217h2v2h-2zM513 217h2v2h-2zM525 217h2v2h-2zM531 217h2v2h-2zM535 217h2v2h-2zM555 217h5v2h-5zM471 219h12v2h-12zM485 219h4v2h-4zM497 219h2v2h-2zM515 219h4v2h-4zM521 219h2v2h-2zM529 219h6v2h-6zM539 219h2v2h-2zM547 219h4v2h-4zM553 219h6v2h-6zM475 221h2v2h-2zM483 221h4v2h-4zM489 221h4v2h-4zM495 221h2v2h-2zM499 221h2v2h-2zM509 221h2v2h-2zM513 221h2v2h-2zM525 221h6v2h-6zM533 221h2v2h-2zM541 221h6v2h-6zM557 221h3v2h-3zM469 223h2v2h-2zM475 223h2v2h-2zM483 223h2v2h-2zM491 223h2v2h-2zM501 223h2v2h-2zM515 223h2v2h-2zM519 223h2v2h-2zM523 223h2v2h-2zM529 223h4v2h-4zM537 223h2v2h-2zM545 223h2v2h-2zM553 223h4v2h-4zM559 223h1v2h-1zM473 225h2v2h-2zM477 225h2v2h-2zM483 225h2v2h-2zM491 225h4v2h-4zM499 225h2v2h-2zM503 225h4v2h-4zM509 225h2v2h-2zM513 225h6v2h-6zM523 225h2v2h-2zM529 225h2v2h-2zM533 225h2v2h-2zM537 225h8v2h-8zM559 225h1v2h-1zM481 227h2v2h-2zM489 227h2v2h-2zM495 227h2v2h-2zM505 227h2v2h-2zM509 227h2v2h-2zM515 227h4v2h-4zM521 227h2v2h-2zM535 227h2v2h-2zM545 227h4v2h-4zM555 227h5v2h-5zM471 229h4v2h-4zM483 229h2v2h-2zM489 229h4v2h-4zM497 229h4v2h-4zM509 229h2v2h-2zM513 229h4v2h-4zM519 229h2v2h-2zM531 229h6v2h-6zM541 229h2v2h-2zM553 229h4v2h-4zM469 231h2v2h-2zM481 231h2v2h-2zM529 231h4v2h-4zM543 231h2v2h-2zM471 233h4v2h-4zM483 233h2v2h-2zM487 233h4v2h-4zM505 233h4v2h-4zM511 233h2v2h-2zM515 233h2v2h-2zM525 233h2v2h-2zM537 233h2v2h-2zM543 233h2v2h-2zM469 235h2v2h-2zM477 235h2v2h-2zM487 235h2v2h-2zM495 235h2v2h-2zM501 235h2v2h-2zM517 235h2v2h-2zM531 235h2v2h-2zM535 235h2v2h-2zM541 235h2v2h-2zM547 235h6v2h-6zM469 237h2v2h-2zM487 237h2v2h-2zM495 237h2v2h-2zM505 237h4v2h-4zM511 237h2v2h-2zM521 237h4v2h-4zM531 237h2v2h-2zM539 237h4v2h-4zM547 237h2v2h-2zM551 237h2v2h-2zM555 237h2v2h-2zM475 239h2v2h-2zM487 239h2v2h-2zM505 239h4v2h-4zM511 239h8v2h-8zM521 239h2v2h-2zM529 239h2v2h-2zM547 239h2v2h-2zM553 239h4v2h-4zM473 241h4v2h-4zM487 241h2v2h-2zM491 241h2v2h-2zM497 241h2v2h-2zM503 241h2v2h-2zM519 241h4v2h-4zM525 241h2v2h-2zM529 241h2v2h-2zM537 241h2v2h-2zM541 241h2v2h-2zM547 241h2v2h-2zM553 241h2v2h-2zM559 241h1v2h-1zM473 243h2v2h-2zM493 243h2v2h-2zM499 243h4v2h-4zM515 243h2v2h-2zM521 243h2v2h-2zM537 243h2v2h-2zM545 243h2v2h-2zM555 243h2v2h-2zM469 245h2v2h-2zM503 245h2v2h-2zM511 245h2v2h-2zM527 245h2v2h-2zM535 245h2v2h-2zM547 245h2v2h-2zM553 245h2v2h-2zM487 247h2v2h-2zM513 247h2v2h-2zM533 247h2v2h-2zM477 249h2v1.4h-2zM485 249h6v1.4h-6zM543 249h2v1.4h-2z"/><path fill="#6d6d6d" d="M499 215h2v2h-2zM505 215h6v2h-6zM545 215h6v2h-6zM495 217h4v2h-4zM503 217h2v2h-2zM507 217h2v2h-2zM511 217h2v2h-2zM515 217h4v2h-4zM529 217h2v2h-2zM537 217h4v2h-4zM547 217h6v2h-6zM505 219h2v2h-2zM513 219h2v2h-2zM523 219h2v2h-2zM541 219h2v2h-2zM471 221h2v2h-2zM481 221h2v2h-2zM497 221h2v2h-2zM535 221h2v2h-2zM489 223h2v2h-2zM493 223h4v2h-4zM505 223h2v2h-2zM525 223h4v2h-4zM535 223h2v2h-2zM539 223h2v2h-2zM547 223h2v2h-2zM475 225h2v2h-2zM511 225h2v2h-2zM545 225h2v2h-2zM475 227h2v2h-2zM527 227h2v2h-2zM531 227h2v2h-2zM539 227h2v2h-2zM469 229h2v2h-2zM479 229h2v2h-2zM485 229h4v2h-4zM473 231h6v2h-6zM487 231h4v2h-4zM497 231h2v2h-2zM507 231h2v2h-2zM511 231h2v2h-2zM515 231h2v2h-2zM545 231h2v2h-2zM549 231h4v2h-4zM559 231h1v2h-1zM475 233h2v2h-2zM497 233h2v2h-2zM501 233h2v2h-2zM517 233h6v2h-6zM539 233h4v2h-4zM547 233h2v2h-2zM559 233h1v2h-1zM479 235h2v2h-2zM483 235h2v2h-2zM503 235h2v2h-2zM513 235h2v2h-2zM523 235h2v2h-2zM529 235h2v2h-2zM533 235h2v2h-2zM539 235h2v2h-2zM559 235h1v2h-1zM471 237h2v2h-2zM475 237h4v2h-4zM491 237h2v2h-2zM501 237h4v2h-4zM509 237h2v2h-2zM513 237h2v2h-2zM519 237h2v2h-2zM549 237h2v2h-2zM473 239h2v2h-2zM477 239h2v2h-2zM491 239h4v2h-4zM497 239h4v2h-4zM503 239h2v2h-2zM523 239h2v2h-2zM527 239h2v2h-2zM535 239h2v2h-2zM539 239h2v2h-2zM545 239h2v2h-2zM549 239h2v2h-2zM485 241h2v2h-2zM489 241h2v2h-2zM517 241h2v2h-2zM523 241h2v2h-2zM533 241h4v2h-4zM539 241h2v2h-2zM545 241h2v2h-2zM549 241h2v2h-2zM471 243h2v2h-2zM483 243h2v2h-2zM497 243h2v2h-2zM529 243h2v2h-2zM539 243h2v2h-2zM543 243h2v2h-2zM547 243h2v2h-2zM551 243h2v2h-2zM471 245h2v2h-2zM475 245h2v2h-2zM489 245h2v2h-2zM501 245h2v2h-2zM517 245h2v2h-2zM521 245h2v2h-2zM533 245h2v2h-2zM555 245h2v2h-2zM475 247h2v2h-2zM491 247h2v2h-2zM495 247h2v2h-2zM499 247h2v2h-2zM503 247h2v2h-2zM519 247h6v2h-6zM537 247h6v2h-6zM547 247h2v2h-2zM551 247h2v2h-2zM555 247h2v2h-2zM471 249h2v1.4h-2zM481 249h2v1.4h-2zM493 249h4v1.4h-4zM499 249h2v1.4h-2zM505 249h2v1.4h-2zM535 249h8v1.4h-8zM557 249h2v1.4h-2z"/><path fill="#494949" d="M527 215h2v2h-2zM555 215h2v2h-2zM545 217h2v2h-2zM509 219h2v2h-2zM535 219h2v2h-2zM487 221h2v2h-2zM513 223h2v2h-2zM481 225h2v2h-2zM553 225h4v2h-4zM493 227h2v2h-2zM499 227h2v2h-2zM501 229h2v2h-2zM539 229h2v2h-2zM551 229h2v2h-2zM559 229h1v2h-1zM485 231h2v2h-2zM499 231h2v2h-2zM525 231h2v2h-2zM539 231h2v2h-2zM547 231h2v2h-2zM493 233h2v2h-2zM481 235h2v2h-2zM489 237h2v2h-2zM515 237h4v2h-4zM515 241h2v2h-2zM523 243h2v2h-2zM473 245h2v2h-2zM483 245h2v2h-2zM487 245h2v2h-2zM499 245h2v2h-2zM507 245h4v2h-4zM513 245h2v2h-2zM519 245h2v2h-2zM525 245h2v2h-2zM539 245h2v2h-2zM545 245h2v2h-2zM559 245h1v2h-1zM469 247h4v2h-4zM485 247h2v2h-2zM501 247h2v2h-2zM525 247h2v2h-2zM529 247h2v2h-2zM535 247h2v2h-2zM543 247h2v2h-2zM469 249h2v1.4h-2zM491 249h2v1.4h-2zM497 249h2v1.4h-2zM503 249h2v1.4h-2zM507 249h2v1.4h-2zM519 249h2v1.4h-2zM523 249h2v1.4h-2zM527 249h4v1.4h-4zM533 249h2v1.4h-2zM559 249h1v1.4h-1z"/><path fill="#242424" d="M477 229h2v2h-2zM521 229h2v2h-2zM527 235h2v2h-2zM543 241h2v2h-2zM513 243h2v2h-2zM535 243h2v2h-2zM481 245h2v2h-2zM523 245h2v2h-2zM529 245h2v2h-2zM551 245h2v2h-2zM481 247h2v2h-2zM497 247h2v2h-2zM505 247h2v2h-2zM527 247h2v2h-2zM501 249h2v1.4h-2zM513 249h2v1.4h-2zM521 249h2v1.4h-2zM525 249h2v1.4h-2zM545 249h4v1.4h-4zM551 249h6v1.4h-6z"/><path fill="#000000" d="M477 245h4v2h-4zM485 245h2v2h-2zM493 245h2v2h-2zM537 245h2v2h-2zM549 245h2v2h-2zM493 247h2v2h-2zM507 247h4v2h-4zM531 247h2v2h-2zM545 247h2v2h-2zM553 247h2v2h-2zM557 247h2v2h-2zM473 249h4v1.4h-4zM509 249h2v1.4h-2zM517 249h2v1.4h-2zM549 249h2v1.4h-2z"/></g><rect x="560" y="215.0" width="4" height="35.400000000000006" fill="#fff"/><rect x="564" y="215.0" width="90" height="35.400000000000006" fill="#898989"/><rect x="654" y="215.0" width="3" height="35.400000000000006" fill="#fff"/><clipPath id="sc5"><rect x="656.5" y="215" width="89.5" height="35.4"/></clipPath><g clip-path="url(#sc5)"><g shape-rendering="crispEdges" filter="url(#blur2)"><rect x="652.5" y="211" width="97.5" height="43.4" fill="#aaaaaa"/><path fill="#8e8e8e" d="M652.5 211h8v2h-8zM666.5 211h4v2h-4zM676.5 211h4v2h-4zM684.5 211h6v2h-6zM694.5 211h2v2h-2zM698.5 211h4v2h-4zM704.5 211h6v2h-6zM712.5 211h6v2h-6zM726.5 211h4v2h-4zM734.5 211h4v2h-4zM740.5 211h9.5v2h-9.5zM652.5 213h8v2h-8zM666.5 213h4v2h-4zM676.5 213h4v2h-4zM684.5 213h6v2h-6zM694.5 213h2v2h-2zM698.5 213h4v2h-4zM704.5 213h6v2h-6zM712.5 213h6v2h-6zM726.5 213h4v2h-4zM734.5 213h4v2h-4zM740.5 213h9.5v2h-9.5zM652.5 215h8v2h-8zM666.5 215h4v2h-4zM676.5 215h4v2h-4zM684.5 215h6v2h-6zM694.5 215h2v2h-2zM700.5 215h2v2h-2zM704.5 215h6v2h-6zM712.5 215h6v2h-6zM726.5 215h4v2h-4zM734.5 215h4v2h-4zM740.5 215h9.5v2h-9.5zM652.5 217h8v2h-8zM666.5 217h4v2h-4zM676.5 217h4v2h-4zM684.5 217h6v2h-6zM694.5 217h2v2h-2zM700.5 217h2v2h-2zM704.5 217h6v2h-6zM712.5 217h6v2h-6zM726.5 217h4v2h-4zM734.5 217h4v2h-4zM740.5 217h9.5v2h-9.5zM652.5 219h8v2h-8zM666.5 219h4v2h-4zM676.5 219h4v2h-4zM684.5 219h6v2h-6zM694.5 219h2v2h-2zM700.5 219h2v2h-2zM704.5 219h6v2h-6zM712.5 219h6v2h-6zM726.5 219h4v2h-4zM734.5 219h4v2h-4zM740.5 219h9.5v2h-9.5zM652.5 221h8v2h-8zM668.5 221h2v2h-2zM676.5 221h4v2h-4zM684.5 221h6v2h-6zM694.5 221h2v2h-2zM704.5 221h6v2h-6zM712.5 221h6v2h-6zM726.5 221h4v2h-4zM734.5 221h4v2h-4zM740.5 221h9.5v2h-9.5zM652.5 223h10v2h-10zM676.5 223h4v2h-4zM684.5 223h2v2h-2zM688.5 223h2v2h-2zM704.5 223h6v2h-6zM712.5 223h6v2h-6zM726.5 223h4v2h-4zM734.5 223h4v2h-4zM740.5 223h9.5v2h-9.5zM652.5 225h10v2h-10zM676.5 225h2v2h-2zM684.5 225h2v2h-2zM688.5 225h2v2h-2zM704.5 225h6v2h-6zM712.5 225h6v2h-6zM726.5 225h4v2h-4zM734.5 225h12v2h-12zM658.5 227h6v2h-6zM684.5 227h2v2h-2zM688.5 227h2v2h-2zM704.5 227h6v2h-6zM712.5 227h6v2h-6zM726.5 227h4v2h-4zM734.5 227h10v2h-10zM658.5 229h6v2h-6zM684.5 229h4v2h-4zM704.5 229h6v2h-6zM712.5 229h2v2h-2zM726.5 229h2v2h-2zM732.5 229h12v2h-12zM658.5 231h6v2h-6zM682.5 231h6v2h-6zM704.5 231h6v2h-6zM712.5 231h2v2h-2zM732.5 231h8v2h-8zM742.5 231h2v2h-2zM660.5 233h4v2h-4zM676.5 233h2v2h-2zM680.5 233h8v2h-8zM704.5 233h6v2h-6zM712.5 233h2v2h-2zM732.5 233h6v2h-6zM660.5 235h4v2h-4zM676.5 235h12v2h-12zM704.5 235h6v2h-6zM712.5 235h2v2h-2zM730.5 235h8v2h-8zM660.5 237h6v2h-6zM676.5 237h10v2h-10zM704.5 237h6v2h-6zM712.5 237h2v2h-2zM730.5 237h4v2h-4zM736.5 237h2v2h-2zM660.5 239h6v2h-6zM676.5 239h10v2h-10zM704.5 239h10v2h-10zM730.5 239h4v2h-4zM736.5 239h2v2h-2zM660.5 241h6v2h-6zM670.5 241h2v2h-2zM676.5 241h10v2h-10zM706.5 241h8v2h-8zM730.5 241h4v2h-4zM736.5 241h2v2h-2zM656.5 243h2v2h-2zM666.5 243h2v2h-2zM688.5 243h4v2h-4zM696.5 243h6v2h-6zM740.5 243h2v2h-2z"/><path fill="#e3e3e3" d="M720.5 211h2v2h-2zM720.5 213h2v2h-2zM720.5 215h2v2h-2zM720.5 217h2v2h-2zM720.5 219h2v2h-2zM720.5 221h2v2h-2zM720.5 223h2v2h-2z"/><path fill="#c6c6c6" d="M722.5 211h2v2h-2zM722.5 213h2v2h-2zM718.5 215h2v2h-2zM722.5 215h2v2h-2zM672.5 217h2v2h-2zM718.5 217h2v2h-2zM722.5 217h2v2h-2zM672.5 219h2v2h-2zM722.5 219h2v2h-2zM672.5 221h2v2h-2zM722.5 221h2v2h-2zM670.5 223h4v2h-4zM722.5 223h2v2h-2zM670.5 225h4v2h-4zM720.5 225h4v2h-4zM670.5 227h4v2h-4zM720.5 227h4v2h-4zM670.5 229h4v2h-4zM720.5 229h4v2h-4zM700.5 231h2v2h-2zM720.5 231h4v2h-4zM698.5 233h4v2h-4zM722.5 233h2v2h-2zM690.5 235h2v2h-2zM698.5 235h4v2h-4zM722.5 235h2v2h-2zM688.5 237h14v2h-14zM722.5 237h2v2h-2zM746.5 237h3.5v2h-3.5zM688.5 239h14v2h-14zM722.5 239h2v2h-2zM740.5 239h2v2h-2zM744.5 239h5.5v2h-5.5zM688.5 241h4v2h-4zM694.5 241h8v2h-8zM738.5 241h4v2h-4zM744.5 241h5.5v2h-5.5z"/><path fill="#717171" d="M738.5 211h2v2h-2zM738.5 213h2v2h-2zM738.5 215h2v2h-2zM738.5 217h2v2h-2zM738.5 219h2v2h-2zM738.5 221h2v2h-2zM686.5 223h2v2h-2zM738.5 223h2v2h-2zM686.5 225h2v2h-2zM686.5 227h2v2h-2zM734.5 237h2v2h-2zM734.5 239h2v2h-2zM734.5 241h2v2h-2zM652.5 243h4v2h-4zM658.5 243h8v2h-8zM668.5 243h8v2h-8zM686.5 243h2v2h-2zM692.5 243h4v2h-4zM702.5 243h2v2h-2zM714.5 243h14v2h-14zM738.5 243h2v2h-2zM742.5 243h7.5v2h-7.5z"/><path fill="#555555" d="M676.5 243h10v2h-10zM704.5 243h10v2h-10zM728.5 243h4v2h-4zM736.5 243h2v2h-2zM652.5 245h8v2h-8zM666.5 245h4v2h-4zM688.5 245h2v2h-2z"/><path fill="#393939" d="M732.5 243h4v2h-4zM660.5 245h6v2h-6zM670.5 245h4v2h-4zM690.5 245h2v2h-2zM696.5 245h6v2h-6zM716.5 245h10v2h-10zM738.5 245h4v2h-4zM652.5 247h18v2h-18zM688.5 247h2v2h-2zM696.5 247h2v2h-2zM718.5 247h2v2h-2zM652.5 249h18v2h-18zM688.5 249h2v2h-2zM718.5 249h2v2h-2zM652.5 251h18v2h-18zM688.5 251h2v2h-2zM718.5 251h2v2h-2zM652.5 253h18v1.4h-18zM688.5 253h2v1.4h-2zM718.5 253h2v1.4h-2z"/><path fill="#1c1c1c" d="M674.5 245h2v2h-2zM686.5 245h2v2h-2zM692.5 245h4v2h-4zM702.5 245h2v2h-2zM710.5 245h6v2h-6zM726.5 245h4v2h-4zM742.5 245h7.5v2h-7.5zM670.5 247h6v2h-6zM686.5 247h2v2h-2zM690.5 247h2v2h-2zM694.5 247h2v2h-2zM698.5 247h6v2h-6zM712.5 247h6v2h-6zM720.5 247h8v2h-8zM738.5 247h6v2h-6zM670.5 249h6v2h-6zM686.5 249h2v2h-2zM690.5 249h2v2h-2zM694.5 249h10v2h-10zM712.5 249h6v2h-6zM720.5 249h8v2h-8zM738.5 249h4v2h-4zM670.5 251h6v2h-6zM686.5 251h2v2h-2zM690.5 251h2v2h-2zM696.5 251h8v2h-8zM712.5 251h6v2h-6zM720.5 251h8v2h-8zM738.5 251h4v2h-4zM670.5 253h6v1.4h-6zM686.5 253h2v1.4h-2zM690.5 253h2v1.4h-2zM696.5 253h8v1.4h-8zM712.5 253h6v1.4h-6zM720.5 253h8v1.4h-8zM738.5 253h4v1.4h-4z"/><path fill="#000000" d="M676.5 245h10v2h-10zM704.5 245h6v2h-6zM730.5 245h8v2h-8zM676.5 247h10v2h-10zM692.5 247h2v2h-2zM704.5 247h8v2h-8zM728.5 247h10v2h-10zM744.5 247h5.5v2h-5.5zM676.5 249h10v2h-10zM692.5 249h2v2h-2zM704.5 249h8v2h-8zM728.5 249h10v2h-10zM742.5 249h7.5v2h-7.5zM676.5 251h10v2h-10zM692.5 251h4v2h-4zM704.5 251h8v2h-8zM728.5 251h10v2h-10zM742.5 251h7.5v2h-7.5zM676.5 253h10v1.4h-10zM692.5 253h4v1.4h-4zM704.5 253h8v1.4h-8zM728.5 253h10v1.4h-10zM742.5 253h7.5v1.4h-7.5z"/></g></g><rect x="746" y="215.0" width="1" height="35.400000000000006" fill="#fff"/><rect x="467.4" y="214.0" width="280.80000000000007" height="37.400000000000006" fill="none" stroke="#ff0000" stroke-width="2.0"/><text x="454.80" y="105.60" font-family="Liberation Sans" font-size="8.8" fill="#222" text-anchor="middle">0.28</text><text x="454.80" y="114.40" font-family="Liberation Sans" font-size="8.8" fill="#222" text-anchor="middle">1.02</text><text x="454.80" y="123.20" font-family="Liberation Sans" font-size="8.8" fill="#222" text-anchor="middle">370</text><text x="750.80" y="99.40" font-family="Liberation Sans" font-size="6.0" fill="#333" text-anchor="start">0.60"</text><text x="750.80" y="107.00" font-family="Liberation Sans" font-size="6.0" fill="#333" text-anchor="start">(755, 728)</text><text x="750.80" y="114.60" font-family="Liberation Sans" font-size="6.0" fill="#333" text-anchor="start">20180113</text><text x="750.80" y="122.20" font-family="Liberation Sans" font-size="6.0" fill="#333" text-anchor="start">v014_01</text><text x="750.80" y="129.80" font-family="Liberation Sans" font-size="6.0" fill="#333" text-anchor="start">027_RU_079</text><text x="454.80" y="145.10" font-family="Liberation Sans" font-size="8.8" fill="#222" text-anchor="middle">0.18</text><text x="454.80" y="153.90" font-family="Liberation Sans" font-size="8.8" fill="#222" text-anchor="middle">0.81</text><text x="454.80" y="162.70" font-family="Liberation Sans" font-size="8.8" fill="#222" text-anchor="middle">369</text><text x="750.80" y="138.90" font-family="Liberation Sans" font-size="6.0" fill="#333" text-anchor="start">0.89"</text><text x="750.80" y="146.50" font-family="Liberation Sans" font-size="6.0" fill="#333" text-anchor="start">(755, 737)</text><text x="750.80" y="154.10" font-family="Liberation Sans" font-size="6.0" fill="#333" text-anchor="start">20180113</text><text x="750.80" y="161.70" font-family="Liberation Sans" font-size="6.0" fill="#333" text-anchor="start">v014_03</text><text x="750.80" y="169.30" font-family="Liberation Sans" font-size="6.0" fill="#333" text-anchor="start">027_RU_080</text><text x="454.80" y="185.10" font-family="Liberation Sans" font-size="8.8" fill="#222" text-anchor="middle">0.13</text><text x="454.80" y="193.90" font-family="Liberation Sans" font-size="8.8" fill="#222" text-anchor="middle">1.20</text><text x="454.80" y="202.70" font-family="Liberation Sans" font-size="8.8" fill="#222" text-anchor="middle">389</text><text x="750.80" y="178.90" font-family="Liberation Sans" font-size="6.0" fill="#333" text-anchor="start">1.24"</text><text x="750.80" y="186.50" font-family="Liberation Sans" font-size="6.0" fill="#333" text-anchor="start">(757, 553)</text><text x="750.80" y="194.10" font-family="Liberation Sans" font-size="6.0" fill="#333" text-anchor="start">20180113</text><text x="750.80" y="201.70" font-family="Liberation Sans" font-size="6.0" fill="#333" text-anchor="start">v014_07</text><text x="750.80" y="209.30" font-family="Liberation Sans" font-size="6.0" fill="#333" text-anchor="start">027_RU_060</text><text x="454.80" y="224.60" font-family="Liberation Sans" font-size="8.8" fill="#222" text-anchor="middle">0.11</text><text x="454.80" y="233.40" font-family="Liberation Sans" font-size="8.8" fill="#222" text-anchor="middle">1.18</text><text x="454.80" y="242.20" font-family="Liberation Sans" font-size="8.8" fill="#222" text-anchor="middle">369</text><text x="750.80" y="218.40" font-family="Liberation Sans" font-size="6.0" fill="#333" text-anchor="start">1.32"</text><text x="750.80" y="226.00" font-family="Liberation Sans" font-size="6.0" fill="#333" text-anchor="start">(755, 737)</text><text x="750.80" y="233.60" font-family="Liberation Sans" font-size="6.0" fill="#333" text-anchor="start">20180113</text><text x="750.80" y="241.20" font-family="Liberation Sans" font-size="6.0" fill="#333" text-anchor="start">v014_07</text><text x="750.80" y="248.80" font-family="Liberation Sans" font-size="6.0" fill="#333" text-anchor="start">027_RU_080</text><text x="865.50" y="47.40" font-family="Liberation Sans" font-size="10.2" fill="#111" text-anchor="middle" textLength="43.0" lengthAdjust="spacingAndGlyphs" stroke="#111" stroke-width="0.1">With Sky</text><text x="865.30" y="58.60" font-family="Liberation Sans" font-size="10.2" fill="#111" text-anchor="middle" textLength="67.0" lengthAdjust="spacingAndGlyphs" stroke="#111" stroke-width="0.1">x, y: 755, 728</text><text x="966.00" y="47.40" font-family="Liberation Sans" font-size="10.2" fill="#111" text-anchor="middle" textLength="62.5" lengthAdjust="spacingAndGlyphs" stroke="#111" stroke-width="0.1">Clean Image</text><text x="966.20" y="58.60" font-family="Liberation Sans" font-size="10.2" fill="#111" text-anchor="middle" textLength="67.0" lengthAdjust="spacingAndGlyphs" stroke="#111" stroke-width="0.1">x, y: 755, 728</text><g shape-rendering="crispEdges" filter="url(#blur08)"><rect x="833" y="66" width="65" height="166" fill="#ffffff"/><path fill="#aaaaaa" d="M833 72h6v2h-6zM853 72h2v2h-2zM889 72h2v2h-2zM833 74h6v2h-6zM867 74h2v2h-2zM833 76h6v2h-6zM833 78h6v2h-6zM849 84h2v2h-2zM833 86h6v2h-6zM847 86h2v2h-2zM867 86h2v2h-2zM833 88h6v2h-6zM833 90h6v2h-6zM879 90h2v2h-2zM841 92h2v2h-2zM851 92h4v2h-4zM863 92h2v2h-2zM869 92h4v2h-4zM875 92h2v2h-2zM879 92h2v2h-2zM887 92h2v2h-2zM867 96h2v2h-2zM873 96h4v2h-4zM833 98h8v2h-8zM879 98h2v2h-2zM833 100h6v2h-6zM897 100h1v2h-1zM833 102h6v2h-6zM839 104h4v2h-4zM845 104h4v2h-4zM851 104h2v2h-2zM855 104h34v2h-34zM891 104h7v2h-7zM841 108h22v2h-22zM865 108h18v2h-18zM885 108h13v2h-13zM833 110h6v2h-6zM867 110h2v2h-2zM833 112h6v2h-6zM833 114h6v2h-6zM843 116h4v2h-4zM851 116h8v2h-8zM865 116h4v2h-4zM871 116h4v2h-4zM881 116h2v2h-2zM839 120h10v2h-10zM851 120h4v2h-4zM857 120h4v2h-4zM863 120h28v2h-28zM893 120h5v2h-5zM833 122h6v2h-6zM833 124h6v2h-6zM847 124h2v2h-2zM859 124h2v2h-2zM897 124h1v2h-1zM833 126h6v2h-6zM883 126h2v2h-2zM839 128h2v2h-2zM847 128h2v2h-2zM851 128h4v2h-4zM871 128h4v2h-4zM881 128h2v2h-2zM885 128h2v2h-2zM895 128h2v2h-2zM839 132h10v2h-10zM851 132h6v2h-6zM859 132h10v2h-10zM871 132h16v2h-16zM889 132h4v2h-4zM895 132h3v2h-3zM833 134h6v2h-6zM833 136h6v2h-6zM833 138h6v2h-6zM847 140h2v2h-2zM855 140h2v2h-2zM859 140h2v2h-2zM869 140h2v2h-2zM879 140h2v2h-2zM883 140h2v2h-2zM897 140h1v2h-1zM839 144h2v2h-2zM845 144h4v2h-4zM859 144h2v2h-2zM863 144h2v2h-2zM869 144h2v2h-2zM883 144h2v2h-2zM891 144h2v2h-2zM895 144h2v2h-2zM833 146h6v2h-6zM833 148h6v2h-6zM833 150h6v2h-6zM841 152h2v2h-2zM871 152h2v2h-2zM839 156h52v2h-52zM893 156h5v2h-5zM833 158h6v2h-6zM833 160h6v2h-6zM833 162h6v2h-6zM871 162h2v2h-2zM869 164h2v2h-2zM885 164h2v2h-2zM893 164h2v2h-2zM897 164h1v2h-1zM839 168h10v2h-10zM851 168h2v2h-2zM855 168h8v2h-8zM865 168h22v2h-22zM889 168h9v2h-9zM833 170h6v2h-6zM833 172h6v2h-6zM853 172h2v2h-2zM833 174h6v2h-6zM843 174h2v2h-2zM857 174h2v2h-2zM839 176h2v2h-2zM843 176h10v2h-10zM855 176h4v2h-4zM863 176h2v2h-2zM875 176h2v2h-2zM883 176h6v2h-6zM833 182h6v2h-6zM833 184h6v2h-6zM833 186h6v2h-6zM849 186h2v2h-2zM833 188h6v2h-6zM869 188h2v2h-2zM843 206h2v2h-2zM875 206h2v2h-2zM833 208h6v2h-6zM833 210h6v2h-6zM833 212h6v2h-6zM865 214h2v2h-2zM877 214h2v2h-2zM893 214h2v2h-2zM833 220h6v2h-6zM833 222h6v2h-6zM895 222h2v2h-2zM833 224h6v2h-6zM845 224h2v2h-2zM863 224h2v2h-2zM877 224h2v2h-2zM833 226h6v2h-6zM851 226h2v2h-2z"/><path fill="#808080" d="M839 72h2v2h-2zM851 72h2v2h-2zM863 72h2v2h-2zM867 72h6v2h-6zM891 72h4v2h-4zM855 74h2v2h-2zM859 74h2v2h-2zM875 74h2v2h-2zM885 74h4v2h-4zM893 74h5v2h-5zM839 76h2v2h-2zM849 76h4v2h-4zM855 76h4v2h-4zM867 76h2v2h-2zM871 76h6v2h-6zM881 76h4v2h-4zM889 76h2v2h-2zM895 76h2v2h-2zM847 78h4v2h-4zM853 78h2v2h-2zM857 78h14v2h-14zM875 78h2v2h-2zM887 78h2v2h-2zM843 84h6v2h-6zM853 84h4v2h-4zM859 84h6v2h-6zM869 84h24v2h-24zM895 84h3v2h-3zM841 86h2v2h-2zM853 86h2v2h-2zM859 86h2v2h-2zM865 86h2v2h-2zM871 86h2v2h-2zM877 86h4v2h-4zM889 86h2v2h-2zM839 88h2v2h-2zM843 88h2v2h-2zM861 88h2v2h-2zM869 88h2v2h-2zM877 88h6v2h-6zM885 88h4v2h-4zM895 88h2v2h-2zM851 90h4v2h-4zM859 90h2v2h-2zM863 90h4v2h-4zM883 90h4v2h-4zM895 90h2v2h-2zM839 96h24v2h-24zM865 96h2v2h-2zM871 96h2v2h-2zM877 96h21v2h-21zM843 98h2v2h-2zM847 98h2v2h-2zM853 98h2v2h-2zM859 98h8v2h-8zM881 98h4v2h-4zM893 98h2v2h-2zM863 100h2v2h-2zM877 100h2v2h-2zM881 100h2v2h-2zM887 100h2v2h-2zM891 100h2v2h-2zM845 102h2v2h-2zM857 102h2v2h-2zM867 102h2v2h-2zM887 102h2v2h-2zM893 102h2v2h-2zM897 102h1v2h-1zM863 108h2v2h-2zM883 108h2v2h-2zM839 110h4v2h-4zM847 110h2v2h-2zM863 110h2v2h-2zM873 110h8v2h-8zM883 110h2v2h-2zM887 110h4v2h-4zM839 112h4v2h-4zM845 112h2v2h-2zM857 112h2v2h-2zM861 112h6v2h-6zM869 112h2v2h-2zM887 112h2v2h-2zM891 112h4v2h-4zM897 112h1v2h-1zM843 114h4v2h-4zM849 114h2v2h-2zM859 114h4v2h-4zM869 114h2v2h-2zM877 114h2v2h-2zM881 114h4v2h-4zM889 114h2v2h-2zM839 116h4v2h-4zM847 116h4v2h-4zM859 116h6v2h-6zM869 116h2v2h-2zM875 116h6v2h-6zM883 116h15v2h-15zM845 122h2v2h-2zM851 122h2v2h-2zM863 122h2v2h-2zM879 122h2v2h-2zM883 122h2v2h-2zM889 122h2v2h-2zM839 124h2v2h-2zM845 124h2v2h-2zM853 124h2v2h-2zM867 124h2v2h-2zM871 124h2v2h-2zM889 124h2v2h-2zM859 126h2v2h-2zM875 126h6v2h-6zM885 126h2v2h-2zM897 126h1v2h-1zM841 128h2v2h-2zM845 128h2v2h-2zM849 128h2v2h-2zM855 128h16v2h-16zM875 128h6v2h-6zM887 128h8v2h-8zM897 128h1v2h-1zM845 134h2v2h-2zM853 134h2v2h-2zM857 134h2v2h-2zM875 134h2v2h-2zM881 134h2v2h-2zM889 134h6v2h-6zM839 136h2v2h-2zM845 136h6v2h-6zM853 136h2v2h-2zM865 136h6v2h-6zM877 136h2v2h-2zM885 136h2v2h-2zM891 136h2v2h-2zM897 136h1v2h-1zM839 138h2v2h-2zM849 138h2v2h-2zM861 138h2v2h-2zM865 138h2v2h-2zM875 138h2v2h-2zM885 138h2v2h-2zM893 138h2v2h-2zM841 140h6v2h-6zM849 140h6v2h-6zM857 140h2v2h-2zM861 140h8v2h-8zM871 140h8v2h-8zM881 140h2v2h-2zM885 140h4v2h-4zM891 140h6v2h-6zM839 146h2v2h-2zM855 146h4v2h-4zM861 146h2v2h-2zM867 146h4v2h-4zM873 146h4v2h-4zM881 146h8v2h-8zM897 146h1v2h-1zM845 148h4v2h-4zM853 148h2v2h-2zM861 148h10v2h-10zM873 148h2v2h-2zM839 150h2v2h-2zM849 150h2v2h-2zM853 150h4v2h-4zM863 150h2v2h-2zM867 150h8v2h-8zM877 150h2v2h-2zM881 150h6v2h-6zM889 150h4v2h-4zM839 152h2v2h-2zM843 152h2v2h-2zM847 152h4v2h-4zM855 152h10v2h-10zM867 152h4v2h-4zM873 152h14v2h-14zM889 152h9v2h-9zM845 158h4v2h-4zM853 158h4v2h-4zM859 158h6v2h-6zM867 158h2v2h-2zM875 158h4v2h-4zM853 160h2v2h-2zM857 160h6v2h-6zM867 160h2v2h-2zM875 160h2v2h-2zM881 160h4v2h-4zM893 160h4v2h-4zM851 162h2v2h-2zM855 162h2v2h-2zM865 162h4v2h-4zM877 162h4v2h-4zM841 164h12v2h-12zM855 164h8v2h-8zM865 164h2v2h-2zM871 164h14v2h-14zM887 164h6v2h-6zM895 164h2v2h-2zM849 168h2v2h-2zM853 168h2v2h-2zM843 170h2v2h-2zM851 170h2v2h-2zM863 170h2v2h-2zM879 170h2v2h-2zM893 170h2v2h-2zM839 172h2v2h-2zM843 172h6v2h-6zM859 172h2v2h-2zM863 172h2v2h-2zM867 172h2v2h-2zM871 172h4v2h-4zM877 172h2v2h-2zM881 172h2v2h-2zM893 172h4v2h-4zM841 174h2v2h-2zM847 174h2v2h-2zM855 174h2v2h-2zM863 174h4v2h-4zM869 174h2v2h-2zM875 174h4v2h-4zM887 174h2v2h-2zM893 174h4v2h-4zM841 176h2v2h-2zM853 176h2v2h-2zM861 176h2v2h-2zM865 176h10v2h-10zM877 176h6v2h-6zM889 176h9v2h-9zM849 182h2v2h-2zM855 182h2v2h-2zM861 182h2v2h-2zM869 182h2v2h-2zM881 182h2v2h-2zM889 182h2v2h-2zM845 184h4v2h-4zM857 184h2v2h-2zM861 184h2v2h-2zM869 184h2v2h-2zM873 184h2v2h-2zM879 184h4v2h-4zM887 184h2v2h-2zM895 184h2v2h-2zM861 186h6v2h-6zM869 186h2v2h-2zM881 186h4v2h-4zM891 186h2v2h-2zM897 186h1v2h-1zM847 188h2v2h-2zM855 188h2v2h-2zM859 188h4v2h-4zM871 188h4v2h-4zM877 188h2v2h-2zM889 188h2v2h-2zM853 208h2v2h-2zM857 208h2v2h-2zM861 208h4v2h-4zM867 208h2v2h-2zM871 208h2v2h-2zM885 208h2v2h-2zM891 208h2v2h-2zM897 208h1v2h-1zM843 210h2v2h-2zM851 210h4v2h-4zM857 210h4v2h-4zM863 210h2v2h-2zM867 210h2v2h-2zM877 210h2v2h-2zM883 210h4v2h-4zM891 210h2v2h-2zM897 210h1v2h-1zM839 212h2v2h-2zM845 212h2v2h-2zM859 212h2v2h-2zM873 212h2v2h-2zM885 212h2v2h-2zM893 212h2v2h-2zM839 214h4v2h-4zM849 214h2v2h-2zM857 214h8v2h-8zM867 214h4v2h-4zM875 214h2v2h-2zM883 214h10v2h-10zM895 214h3v2h-3zM839 220h2v2h-2zM851 220h4v2h-4zM857 220h2v2h-2zM861 220h2v2h-2zM865 220h2v2h-2zM869 220h10v2h-10zM883 220h2v2h-2zM843 222h2v2h-2zM847 222h2v2h-2zM851 222h2v2h-2zM861 222h2v2h-2zM869 222h2v2h-2zM873 222h2v2h-2zM885 222h2v2h-2zM893 222h2v2h-2zM851 224h2v2h-2zM857 224h2v2h-2zM861 224h2v2h-2zM873 224h2v2h-2zM881 224h2v2h-2zM885 224h2v2h-2zM893 224h2v2h-2zM843 226h2v2h-2zM847 226h4v2h-4zM857 226h6v2h-6zM873 226h2v2h-2zM877 226h4v2h-4zM887 226h11v2h-11z"/><path fill="#555555" d="M841 72h10v2h-10zM855 72h4v2h-4zM861 72h2v2h-2zM865 72h2v2h-2zM873 72h2v2h-2zM877 72h12v2h-12zM895 72h3v2h-3zM839 74h2v2h-2zM843 74h4v2h-4zM849 74h6v2h-6zM857 74h2v2h-2zM861 74h6v2h-6zM873 74h2v2h-2zM877 74h8v2h-8zM891 74h2v2h-2zM841 76h8v2h-8zM861 76h4v2h-4zM869 76h2v2h-2zM877 76h4v2h-4zM887 76h2v2h-2zM893 76h2v2h-2zM897 76h1v2h-1zM839 78h2v2h-2zM843 78h4v2h-4zM851 78h2v2h-2zM855 78h2v2h-2zM871 78h4v2h-4zM877 78h4v2h-4zM883 78h4v2h-4zM889 78h9v2h-9zM839 84h4v2h-4zM851 84h2v2h-2zM857 84h2v2h-2zM865 84h4v2h-4zM893 84h2v2h-2zM839 86h2v2h-2zM843 86h4v2h-4zM849 86h4v2h-4zM857 86h2v2h-2zM861 86h4v2h-4zM869 86h2v2h-2zM873 86h4v2h-4zM885 86h4v2h-4zM891 86h2v2h-2zM895 86h3v2h-3zM841 88h2v2h-2zM845 88h12v2h-12zM859 88h2v2h-2zM865 88h2v2h-2zM871 88h6v2h-6zM883 88h2v2h-2zM891 88h4v2h-4zM897 88h1v2h-1zM839 90h12v2h-12zM855 90h4v2h-4zM861 90h2v2h-2zM867 90h4v2h-4zM873 90h6v2h-6zM881 90h2v2h-2zM887 90h2v2h-2zM891 90h2v2h-2zM897 90h1v2h-1zM863 96h2v2h-2zM869 96h2v2h-2zM845 98h2v2h-2zM849 98h4v2h-4zM855 98h4v2h-4zM867 98h4v2h-4zM873 98h6v2h-6zM885 98h8v2h-8zM895 98h3v2h-3zM839 100h16v2h-16zM857 100h6v2h-6zM865 100h12v2h-12zM879 100h2v2h-2zM885 100h2v2h-2zM889 100h2v2h-2zM893 100h4v2h-4zM839 102h6v2h-6zM847 102h4v2h-4zM853 102h4v2h-4zM859 102h8v2h-8zM869 102h18v2h-18zM889 102h4v2h-4zM895 102h2v2h-2zM843 110h4v2h-4zM849 110h14v2h-14zM865 110h2v2h-2zM871 110h2v2h-2zM881 110h2v2h-2zM885 110h2v2h-2zM891 110h7v2h-7zM843 112h2v2h-2zM847 112h10v2h-10zM867 112h2v2h-2zM871 112h8v2h-8zM881 112h6v2h-6zM889 112h2v2h-2zM895 112h2v2h-2zM839 114h4v2h-4zM847 114h2v2h-2zM851 114h8v2h-8zM863 114h2v2h-2zM867 114h2v2h-2zM871 114h6v2h-6zM879 114h2v2h-2zM885 114h4v2h-4zM891 114h2v2h-2zM895 114h3v2h-3zM839 122h6v2h-6zM847 122h4v2h-4zM853 122h8v2h-8zM865 122h6v2h-6zM873 122h6v2h-6zM881 122h2v2h-2zM885 122h4v2h-4zM891 122h4v2h-4zM897 122h1v2h-1zM841 124h4v2h-4zM851 124h2v2h-2zM855 124h2v2h-2zM863 124h4v2h-4zM869 124h2v2h-2zM873 124h14v2h-14zM891 124h4v2h-4zM839 126h6v2h-6zM847 126h10v2h-10zM863 126h4v2h-4zM869 126h6v2h-6zM881 126h2v2h-2zM887 126h2v2h-2zM891 126h2v2h-2zM895 126h2v2h-2zM843 128h2v2h-2zM883 128h2v2h-2zM839 134h6v2h-6zM847 134h6v2h-6zM855 134h2v2h-2zM859 134h6v2h-6zM867 134h8v2h-8zM877 134h4v2h-4zM883 134h6v2h-6zM895 134h3v2h-3zM841 136h4v2h-4zM851 136h2v2h-2zM855 136h10v2h-10zM871 136h6v2h-6zM879 136h6v2h-6zM889 136h2v2h-2zM893 136h4v2h-4zM841 138h8v2h-8zM851 138h8v2h-8zM863 138h2v2h-2zM867 138h8v2h-8zM877 138h6v2h-6zM887 138h6v2h-6zM895 138h3v2h-3zM839 140h2v2h-2zM889 140h2v2h-2zM841 146h6v2h-6zM849 146h4v2h-4zM859 146h2v2h-2zM863 146h4v2h-4zM871 146h2v2h-2zM877 146h4v2h-4zM889 146h8v2h-8zM839 148h6v2h-6zM849 148h4v2h-4zM855 148h6v2h-6zM871 148h2v2h-2zM877 148h21v2h-21zM843 150h4v2h-4zM851 150h2v2h-2zM857 150h6v2h-6zM865 150h2v2h-2zM879 150h2v2h-2zM887 150h2v2h-2zM893 150h5v2h-5zM845 152h2v2h-2zM851 152h4v2h-4zM865 152h2v2h-2zM887 152h2v2h-2zM839 158h6v2h-6zM849 158h4v2h-4zM857 158h2v2h-2zM865 158h2v2h-2zM869 158h6v2h-6zM879 158h8v2h-8zM889 158h6v2h-6zM897 158h1v2h-1zM839 160h2v2h-2zM843 160h10v2h-10zM855 160h2v2h-2zM863 160h4v2h-4zM887 160h6v2h-6zM897 160h1v2h-1zM839 162h10v2h-10zM853 162h2v2h-2zM857 162h2v2h-2zM861 162h4v2h-4zM869 162h2v2h-2zM873 162h4v2h-4zM881 162h2v2h-2zM887 162h6v2h-6zM895 162h3v2h-3zM839 164h2v2h-2zM853 164h2v2h-2zM863 164h2v2h-2zM867 164h2v2h-2zM839 170h4v2h-4zM845 170h6v2h-6zM853 170h10v2h-10zM865 170h14v2h-14zM883 170h10v2h-10zM895 170h3v2h-3zM841 172h2v2h-2zM849 172h4v2h-4zM855 172h4v2h-4zM861 172h2v2h-2zM869 172h2v2h-2zM879 172h2v2h-2zM883 172h2v2h-2zM887 172h6v2h-6zM897 172h1v2h-1zM839 174h2v2h-2zM845 174h2v2h-2zM849 174h6v2h-6zM861 174h2v2h-2zM867 174h2v2h-2zM871 174h4v2h-4zM881 174h6v2h-6zM889 174h2v2h-2zM859 176h2v2h-2zM839 182h10v2h-10zM851 182h4v2h-4zM857 182h4v2h-4zM863 182h6v2h-6zM871 182h2v2h-2zM877 182h2v2h-2zM883 182h6v2h-6zM891 182h7v2h-7zM839 184h4v2h-4zM849 184h2v2h-2zM855 184h2v2h-2zM859 184h2v2h-2zM863 184h4v2h-4zM875 184h4v2h-4zM883 184h4v2h-4zM889 184h6v2h-6zM897 184h1v2h-1zM839 186h4v2h-4zM845 186h4v2h-4zM853 186h8v2h-8zM867 186h2v2h-2zM871 186h8v2h-8zM885 186h4v2h-4zM893 186h2v2h-2zM839 188h6v2h-6zM849 188h4v2h-4zM857 188h2v2h-2zM863 188h6v2h-6zM875 188h2v2h-2zM879 188h10v2h-10zM891 188h4v2h-4zM897 188h1v2h-1zM839 208h2v2h-2zM843 208h10v2h-10zM855 208h2v2h-2zM859 208h2v2h-2zM865 208h2v2h-2zM873 208h8v2h-8zM883 208h2v2h-2zM887 208h4v2h-4zM893 208h2v2h-2zM839 210h4v2h-4zM845 210h6v2h-6zM855 210h2v2h-2zM861 210h2v2h-2zM865 210h2v2h-2zM869 210h8v2h-8zM879 210h4v2h-4zM887 210h4v2h-4zM893 210h4v2h-4zM841 212h4v2h-4zM847 212h2v2h-2zM851 212h8v2h-8zM861 212h4v2h-4zM867 212h6v2h-6zM875 212h2v2h-2zM879 212h6v2h-6zM889 212h4v2h-4zM895 212h3v2h-3zM845 214h4v2h-4zM851 214h6v2h-6zM871 214h4v2h-4zM879 214h4v2h-4zM841 220h10v2h-10zM859 220h2v2h-2zM863 220h2v2h-2zM867 220h2v2h-2zM879 220h4v2h-4zM887 220h11v2h-11zM839 222h4v2h-4zM849 222h2v2h-2zM853 222h6v2h-6zM863 222h6v2h-6zM871 222h2v2h-2zM875 222h2v2h-2zM879 222h6v2h-6zM887 222h6v2h-6zM897 222h1v2h-1zM847 224h4v2h-4zM853 224h4v2h-4zM859 224h2v2h-2zM865 224h8v2h-8zM875 224h2v2h-2zM879 224h2v2h-2zM883 224h2v2h-2zM887 224h6v2h-6zM897 224h1v2h-1zM839 226h4v2h-4zM845 226h2v2h-2zM853 226h4v2h-4zM863 226h10v2h-10zM875 226h2v2h-2zM881 226h6v2h-6z"/><path fill="#2a2a2a" d="M859 72h2v2h-2zM875 72h2v2h-2zM841 74h2v2h-2zM847 74h2v2h-2zM869 74h4v2h-4zM889 74h2v2h-2zM853 76h2v2h-2zM859 76h2v2h-2zM865 76h2v2h-2zM885 76h2v2h-2zM891 76h2v2h-2zM841 78h2v2h-2zM881 78h2v2h-2zM855 86h2v2h-2zM881 86h4v2h-4zM893 86h2v2h-2zM857 88h2v2h-2zM863 88h2v2h-2zM889 88h2v2h-2zM871 90h2v2h-2zM889 90h2v2h-2zM893 90h2v2h-2zM841 98h2v2h-2zM871 98h2v2h-2zM855 100h2v2h-2zM883 100h2v2h-2zM851 102h2v2h-2zM869 110h2v2h-2zM859 112h2v2h-2zM879 112h2v2h-2zM865 114h2v2h-2zM893 114h2v2h-2zM861 122h2v2h-2zM871 122h2v2h-2zM895 122h2v2h-2zM849 124h2v2h-2zM857 124h2v2h-2zM861 124h2v2h-2zM887 124h2v2h-2zM895 124h2v2h-2zM845 126h2v2h-2zM857 126h2v2h-2zM861 126h2v2h-2zM867 126h2v2h-2zM889 126h2v2h-2zM893 126h2v2h-2zM865 134h2v2h-2zM887 136h2v2h-2zM859 138h2v2h-2zM883 138h2v2h-2zM847 146h2v2h-2zM853 146h2v2h-2zM875 148h2v2h-2zM841 150h2v2h-2zM847 150h2v2h-2zM875 150h2v2h-2zM887 158h2v2h-2zM895 158h2v2h-2zM841 160h2v2h-2zM869 160h6v2h-6zM877 160h4v2h-4zM885 160h2v2h-2zM849 162h2v2h-2zM859 162h2v2h-2zM883 162h4v2h-4zM893 162h2v2h-2zM881 170h2v2h-2zM865 172h2v2h-2zM875 172h2v2h-2zM885 172h2v2h-2zM859 174h2v2h-2zM879 174h2v2h-2zM891 174h2v2h-2zM897 174h1v2h-1zM873 182h4v2h-4zM879 182h2v2h-2zM843 184h2v2h-2zM851 184h4v2h-4zM867 184h2v2h-2zM871 184h2v2h-2zM843 186h2v2h-2zM851 186h2v2h-2zM879 186h2v2h-2zM889 186h2v2h-2zM895 186h2v2h-2zM845 188h2v2h-2zM853 188h2v2h-2zM895 188h2v2h-2zM841 208h2v2h-2zM869 208h2v2h-2zM881 208h2v2h-2zM895 208h2v2h-2zM849 212h2v2h-2zM865 212h2v2h-2zM877 212h2v2h-2zM887 212h2v2h-2zM843 214h2v2h-2zM855 220h2v2h-2zM885 220h2v2h-2zM845 222h2v2h-2zM859 222h2v2h-2zM877 222h2v2h-2zM839 224h6v2h-6zM895 224h2v2h-2z"/><path fill="#d4d4d4" d="M853 80h4v2h-4zM861 80h6v2h-6zM833 84h6v2h-6zM839 92h2v2h-2zM843 92h8v2h-8zM855 92h8v2h-8zM865 92h4v2h-4zM873 92h2v2h-2zM877 92h2v2h-2zM881 92h6v2h-6zM889 92h9v2h-9zM833 96h6v2h-6zM833 104h6v2h-6zM843 104h2v2h-2zM849 104h2v2h-2zM853 104h2v2h-2zM889 104h2v2h-2zM833 108h8v2h-8zM833 116h6v2h-6zM833 120h6v2h-6zM849 120h2v2h-2zM855 120h2v2h-2zM861 120h2v2h-2zM891 120h2v2h-2zM833 128h6v2h-6zM833 132h6v2h-6zM849 132h2v2h-2zM857 132h2v2h-2zM869 132h2v2h-2zM887 132h2v2h-2zM893 132h2v2h-2zM833 140h6v2h-6zM841 144h4v2h-4zM849 144h10v2h-10zM861 144h2v2h-2zM865 144h4v2h-4zM871 144h12v2h-12zM885 144h6v2h-6zM893 144h2v2h-2zM897 144h1v2h-1zM833 152h6v2h-6zM833 156h6v2h-6zM891 156h2v2h-2zM833 164h6v2h-6zM833 168h6v2h-6zM863 168h2v2h-2zM887 168h2v2h-2zM833 176h6v2h-6zM873 180h2v2h-2zM839 206h4v2h-4zM845 206h30v2h-30zM877 206h21v2h-21zM833 214h6v2h-6zM839 218h59v2h-59z"/><path fill="#000000" d="M867 88h2v2h-2z"/></g><rect x="839" y="70.5" width="2.6" height="5.5" fill="#111"/><rect x="852.5" y="96.5" width="2" height="5" fill="#111"/><rect x="831.2" y="64.2" width="68" height="169.4" fill="none" stroke="#0000ff" stroke-width="2.6"/><g shape-rendering="crispEdges"><rect x="933" y="66" width="66" height="166" fill="#999999"/><path fill="#333333" d="M934.5 66h1.5v1.5h-1.5zM942 66h1.5v1.5h-1.5zM954 66h1.5v1.5h-1.5zM964.5 66h1.5v1.5h-1.5zM987 66h1.5v1.5h-1.5zM988.5 67.5h3v1.5h-3zM996 67.5h1.5v1.5h-1.5zM939 69h1.5v1.5h-1.5zM951 69h1.5v1.5h-1.5zM972 69h3v1.5h-3zM985.5 69h1.5v1.5h-1.5zM933 70.5h1.5v1.5h-1.5zM946.5 70.5h1.5v1.5h-1.5zM966 70.5h1.5v1.5h-1.5zM985.5 70.5h1.5v1.5h-1.5zM954 73.5h1.5v1.5h-1.5zM958.5 73.5h1.5v1.5h-1.5zM964.5 73.5h1.5v1.5h-1.5zM987 73.5h1.5v1.5h-1.5zM994.5 73.5h1.5v1.5h-1.5zM943.5 75h1.5v1.5h-1.5zM961.5 75h1.5v1.5h-1.5zM967.5 75h1.5v1.5h-1.5zM970.5 76.5h3v1.5h-3zM987 76.5h1.5v1.5h-1.5zM942 78h1.5v1.5h-1.5zM945 78h1.5v1.5h-1.5zM954 78h1.5v1.5h-1.5zM958.5 78h1.5v1.5h-1.5zM973.5 78h1.5v1.5h-1.5zM985.5 78h1.5v1.5h-1.5zM990 78h3v1.5h-3zM933 79.5h1.5v1.5h-1.5zM936 79.5h1.5v1.5h-1.5zM991.5 79.5h1.5v1.5h-1.5zM936 81h1.5v1.5h-1.5zM946.5 81h1.5v1.5h-1.5zM967.5 81h1.5v1.5h-1.5zM940.5 82.5h1.5v1.5h-1.5zM987 82.5h1.5v1.5h-1.5zM996 82.5h1.5v1.5h-1.5zM937.5 84h1.5v1.5h-1.5zM945 85.5h1.5v1.5h-1.5zM979.5 85.5h1.5v1.5h-1.5zM984 85.5h1.5v1.5h-1.5zM942 87h1.5v1.5h-1.5zM963 87h1.5v1.5h-1.5zM996 87h1.5v1.5h-1.5zM957 88.5h1.5v1.5h-1.5zM984 88.5h1.5v1.5h-1.5zM988.5 88.5h1.5v1.5h-1.5zM943.5 90h1.5v1.5h-1.5zM961.5 91.5h1.5v1.5h-1.5zM961.5 93h1.5v1.5h-1.5zM973.5 93h1.5v1.5h-1.5zM976.5 93h1.5v1.5h-1.5zM984 93h1.5v1.5h-1.5zM990 93h1.5v1.5h-1.5zM973.5 94.5h1.5v1.5h-1.5zM994.5 94.5h1.5v1.5h-1.5zM946.5 96h1.5v1.5h-1.5zM957 96h1.5v1.5h-1.5zM969 96h3v1.5h-3zM949.5 97.5h1.5v1.5h-1.5zM996 97.5h1.5v1.5h-1.5zM951 99h1.5v1.5h-1.5zM943.5 100.5h1.5v1.5h-1.5zM946.5 100.5h1.5v1.5h-1.5zM957 100.5h1.5v1.5h-1.5zM982.5 100.5h1.5v1.5h-1.5zM996 100.5h1.5v1.5h-1.5zM952.5 102h1.5v1.5h-1.5zM957 103.5h1.5v1.5h-1.5zM960 103.5h1.5v1.5h-1.5zM963 103.5h1.5v1.5h-1.5zM966 103.5h1.5v1.5h-1.5zM972 103.5h1.5v1.5h-1.5zM994.5 103.5h3v1.5h-3zM946.5 105h1.5v1.5h-1.5zM964.5 105h1.5v1.5h-1.5zM979.5 105h4.5v1.5h-4.5zM987 105h1.5v1.5h-1.5zM993 105h1.5v1.5h-1.5zM942 106.5h3v1.5h-3zM948 106.5h1.5v1.5h-1.5zM991.5 106.5h1.5v1.5h-1.5zM997.5 106.5h1.5v1.5h-1.5zM975 108h1.5v1.5h-1.5zM978 108h1.5v1.5h-1.5zM985.5 108h1.5v1.5h-1.5zM934.5 109.5h1.5v1.5h-1.5zM996 109.5h1.5v1.5h-1.5zM955.5 111h1.5v1.5h-1.5zM955.5 112.5h1.5v1.5h-1.5zM958.5 112.5h1.5v1.5h-1.5zM934.5 115.5h1.5v1.5h-1.5zM948 115.5h1.5v1.5h-1.5zM955.5 115.5h1.5v1.5h-1.5zM982.5 115.5h1.5v1.5h-1.5zM985.5 115.5h1.5v1.5h-1.5zM990 115.5h3v1.5h-3zM958.5 117h1.5v1.5h-1.5zM961.5 117h1.5v1.5h-1.5zM984 117h1.5v1.5h-1.5zM946.5 118.5h1.5v1.5h-1.5zM972 118.5h3v1.5h-3zM997.5 118.5h1.5v1.5h-1.5zM943.5 120h1.5v1.5h-1.5zM970.5 120h1.5v1.5h-1.5zM975 120h1.5v1.5h-1.5zM988.5 120h1.5v1.5h-1.5zM975 121.5h1.5v1.5h-1.5zM978 121.5h1.5v1.5h-1.5zM949.5 123h1.5v1.5h-1.5zM979.5 123h1.5v1.5h-1.5zM955.5 124.5h1.5v1.5h-1.5zM960 124.5h1.5v1.5h-1.5zM981 124.5h1.5v1.5h-1.5zM951 126h4.5v1.5h-4.5zM961.5 126h1.5v1.5h-1.5zM951 127.5h1.5v1.5h-1.5zM979.5 127.5h1.5v1.5h-1.5zM936 129h1.5v1.5h-1.5zM942 129h1.5v1.5h-1.5zM949.5 129h1.5v1.5h-1.5zM966 129h1.5v1.5h-1.5zM976.5 129h1.5v1.5h-1.5zM936 130.5h1.5v1.5h-1.5zM948 130.5h1.5v1.5h-1.5zM936 132h1.5v1.5h-1.5zM940.5 132h1.5v1.5h-1.5zM960 132h1.5v1.5h-1.5zM967.5 132h1.5v1.5h-1.5zM972 132h1.5v1.5h-1.5zM937.5 133.5h1.5v1.5h-1.5zM943.5 133.5h1.5v1.5h-1.5zM987 133.5h1.5v1.5h-1.5zM936 135h1.5v1.5h-1.5zM952.5 135h1.5v1.5h-1.5zM958.5 135h1.5v1.5h-1.5zM961.5 135h1.5v1.5h-1.5zM967.5 135h1.5v1.5h-1.5zM982.5 135h3v1.5h-3zM991.5 135h1.5v1.5h-1.5zM933 136.5h1.5v1.5h-1.5zM970.5 136.5h1.5v1.5h-1.5zM996 138h1.5v1.5h-1.5zM958.5 139.5h1.5v1.5h-1.5zM970.5 139.5h1.5v1.5h-1.5zM984 139.5h1.5v1.5h-1.5zM996 139.5h1.5v1.5h-1.5zM934.5 141h1.5v1.5h-1.5zM952.5 141h1.5v1.5h-1.5zM967.5 141h1.5v1.5h-1.5zM984 141h1.5v1.5h-1.5zM948 142.5h1.5v1.5h-1.5zM964.5 142.5h1.5v1.5h-1.5zM969 142.5h1.5v1.5h-1.5zM972 142.5h1.5v1.5h-1.5zM937.5 144h1.5v1.5h-1.5zM940.5 144h1.5v1.5h-1.5zM978 144h1.5v1.5h-1.5zM940.5 145.5h1.5v1.5h-1.5zM954 145.5h3v1.5h-3zM970.5 145.5h1.5v1.5h-1.5zM978 145.5h1.5v1.5h-1.5zM981 145.5h3v1.5h-3zM985.5 145.5h3v1.5h-3zM937.5 147h1.5v1.5h-1.5zM942 147h1.5v1.5h-1.5zM946.5 147h1.5v1.5h-1.5zM961.5 147h4.5v1.5h-4.5zM967.5 147h1.5v1.5h-1.5zM972 147h4.5v1.5h-4.5zM978 147h4.5v1.5h-4.5zM984 147h1.5v1.5h-1.5zM994.5 147h1.5v1.5h-1.5zM934.5 148.5h1.5v1.5h-1.5zM937.5 148.5h1.5v1.5h-1.5zM949.5 148.5h1.5v1.5h-1.5zM955.5 148.5h1.5v1.5h-1.5zM958.5 148.5h1.5v1.5h-1.5zM963 148.5h1.5v1.5h-1.5zM966 148.5h1.5v1.5h-1.5zM975 148.5h1.5v1.5h-1.5zM979.5 148.5h1.5v1.5h-1.5zM984 148.5h3v1.5h-3zM990 148.5h1.5v1.5h-1.5zM994.5 148.5h1.5v1.5h-1.5zM936 150h3v1.5h-3zM940.5 150h4.5v1.5h-4.5zM958.5 150h1.5v1.5h-1.5zM964.5 150h4.5v1.5h-4.5zM981 150h1.5v1.5h-1.5zM990 150h3v1.5h-3zM933 151.5h3v1.5h-3zM940.5 151.5h1.5v1.5h-1.5zM943.5 151.5h1.5v1.5h-1.5zM961.5 151.5h1.5v1.5h-1.5zM979.5 151.5h1.5v1.5h-1.5zM936 153h3v1.5h-3zM942 153h1.5v1.5h-1.5zM946.5 153h1.5v1.5h-1.5zM949.5 153h1.5v1.5h-1.5zM961.5 153h1.5v1.5h-1.5zM967.5 153h1.5v1.5h-1.5zM970.5 153h3v1.5h-3zM976.5 153h4.5v1.5h-4.5zM982.5 153h3v1.5h-3zM988.5 153h1.5v1.5h-1.5zM991.5 153h3v1.5h-3zM996 153h3v1.5h-3zM937.5 154.5h1.5v1.5h-1.5zM946.5 154.5h1.5v1.5h-1.5zM949.5 154.5h1.5v1.5h-1.5zM954 154.5h3v1.5h-3zM958.5 154.5h1.5v1.5h-1.5zM976.5 154.5h1.5v1.5h-1.5zM982.5 154.5h1.5v1.5h-1.5zM985.5 154.5h3v1.5h-3zM990 154.5h1.5v1.5h-1.5zM993 154.5h3v1.5h-3zM982.5 156h1.5v1.5h-1.5zM996 156h3v1.5h-3zM951 157.5h1.5v1.5h-1.5zM975 157.5h1.5v1.5h-1.5zM987 157.5h1.5v1.5h-1.5zM946.5 159h1.5v1.5h-1.5zM976.5 159h3v1.5h-3zM993 159h1.5v1.5h-1.5zM943.5 160.5h3v1.5h-3zM955.5 160.5h1.5v1.5h-1.5zM940.5 162h1.5v1.5h-1.5zM946.5 162h3v1.5h-3zM955.5 162h1.5v1.5h-1.5zM993 162h1.5v1.5h-1.5zM996 162h1.5v1.5h-1.5zM946.5 163.5h1.5v1.5h-1.5zM991.5 163.5h1.5v1.5h-1.5zM936 165h1.5v1.5h-1.5zM946.5 165h1.5v1.5h-1.5zM979.5 165h1.5v1.5h-1.5zM994.5 165h1.5v1.5h-1.5zM997.5 165h1.5v1.5h-1.5zM934.5 166.5h1.5v1.5h-1.5zM942 166.5h1.5v1.5h-1.5zM966 166.5h1.5v1.5h-1.5zM969 166.5h1.5v1.5h-1.5zM937.5 168h1.5v1.5h-1.5zM967.5 168h1.5v1.5h-1.5zM993 168h1.5v1.5h-1.5zM933 169.5h1.5v1.5h-1.5zM964.5 169.5h1.5v1.5h-1.5zM976.5 169.5h3v1.5h-3zM988.5 169.5h1.5v1.5h-1.5zM945 171h1.5v1.5h-1.5zM948 171h1.5v1.5h-1.5zM958.5 171h1.5v1.5h-1.5zM987 171h3v1.5h-3zM994.5 171h1.5v1.5h-1.5zM997.5 171h1.5v1.5h-1.5zM939 172.5h3v1.5h-3zM949.5 172.5h1.5v1.5h-1.5zM964.5 172.5h1.5v1.5h-1.5zM988.5 172.5h1.5v1.5h-1.5zM945 174h1.5v1.5h-1.5zM952.5 174h1.5v1.5h-1.5zM985.5 174h1.5v1.5h-1.5zM991.5 174h1.5v1.5h-1.5zM972 175.5h1.5v1.5h-1.5zM994.5 175.5h1.5v1.5h-1.5zM936 177h1.5v1.5h-1.5zM943.5 177h1.5v1.5h-1.5zM960 177h1.5v1.5h-1.5zM934.5 178.5h1.5v1.5h-1.5zM945 178.5h1.5v1.5h-1.5zM949.5 178.5h1.5v1.5h-1.5zM994.5 178.5h1.5v1.5h-1.5zM952.5 180h1.5v1.5h-1.5zM972 180h1.5v1.5h-1.5zM976.5 180h1.5v1.5h-1.5zM985.5 180h1.5v1.5h-1.5zM933 181.5h1.5v1.5h-1.5zM952.5 181.5h1.5v1.5h-1.5zM958.5 181.5h1.5v1.5h-1.5zM970.5 181.5h1.5v1.5h-1.5zM973.5 181.5h1.5v1.5h-1.5zM936 183h1.5v1.5h-1.5zM943.5 183h1.5v1.5h-1.5zM952.5 183h1.5v1.5h-1.5zM970.5 183h1.5v1.5h-1.5zM937.5 184.5h1.5v1.5h-1.5zM976.5 190.5h1.5v1.5h-1.5zM942 207h1.5v1.5h-1.5zM957 207h1.5v1.5h-1.5zM963 207h1.5v1.5h-1.5zM979.5 207h1.5v1.5h-1.5zM942 208.5h1.5v1.5h-1.5zM988.5 208.5h1.5v1.5h-1.5zM991.5 208.5h1.5v1.5h-1.5zM936 210h1.5v1.5h-1.5zM954 210h1.5v1.5h-1.5zM978 210h1.5v1.5h-1.5zM981 210h1.5v1.5h-1.5zM985.5 210h1.5v1.5h-1.5zM948 211.5h1.5v1.5h-1.5zM972 211.5h1.5v1.5h-1.5zM981 211.5h1.5v1.5h-1.5zM966 213h1.5v1.5h-1.5zM972 213h1.5v1.5h-1.5zM979.5 213h1.5v1.5h-1.5zM997.5 213h1.5v1.5h-1.5zM939 214.5h1.5v1.5h-1.5zM951 214.5h3v1.5h-3zM984 214.5h1.5v1.5h-1.5zM996 214.5h1.5v1.5h-1.5zM939 216h1.5v1.5h-1.5zM960 216h1.5v1.5h-1.5zM963 216h1.5v1.5h-1.5zM967.5 216h1.5v1.5h-1.5zM976.5 216h1.5v1.5h-1.5zM985.5 216h1.5v1.5h-1.5zM990 216h1.5v1.5h-1.5zM933 217.5h1.5v1.5h-1.5zM972 217.5h1.5v1.5h-1.5zM979.5 217.5h1.5v1.5h-1.5zM996 217.5h1.5v1.5h-1.5zM975 219h1.5v1.5h-1.5zM945 220.5h1.5v1.5h-1.5zM979.5 220.5h1.5v1.5h-1.5zM984 220.5h1.5v1.5h-1.5zM940.5 222h1.5v1.5h-1.5zM943.5 222h1.5v1.5h-1.5zM972 222h3v1.5h-3zM982.5 222h1.5v1.5h-1.5zM994.5 222h1.5v1.5h-1.5zM936 223.5h1.5v1.5h-1.5zM939 223.5h1.5v1.5h-1.5zM966 223.5h1.5v1.5h-1.5zM952.5 225h1.5v1.5h-1.5zM952.5 226.5h1.5v1.5h-1.5zM963 226.5h3v1.5h-3zM937.5 228h1.5v1.5h-1.5zM940.5 228h1.5v1.5h-1.5zM943.5 228h1.5v1.5h-1.5zM952.5 228h1.5v1.5h-1.5zM934.5 229.5h1.5v1.5h-1.5zM937.5 229.5h1.5v1.5h-1.5zM942 229.5h1.5v1.5h-1.5zM990 229.5h1.5v1.5h-1.5zM997.5 229.5h1.5v1.5h-1.5zM933 231h1.5v1h-1.5zM940.5 231h1.5v1h-1.5zM963 231h3v1h-3zM979.5 231h1.5v1h-1.5zM982.5 231h1.5v1h-1.5zM991.5 231h1.5v1h-1.5z"/><path fill="#666666" d="M936 66h1.5v1.5h-1.5zM945 66h1.5v1.5h-1.5zM948 66h1.5v1.5h-1.5zM952.5 66h1.5v1.5h-1.5zM955.5 66h1.5v1.5h-1.5zM961.5 66h1.5v1.5h-1.5zM967.5 66h1.5v1.5h-1.5zM973.5 66h1.5v1.5h-1.5zM978 66h3v1.5h-3zM982.5 66h1.5v1.5h-1.5zM991.5 66h4.5v1.5h-4.5zM936 67.5h6v1.5h-6zM943.5 67.5h1.5v1.5h-1.5zM948 67.5h1.5v1.5h-1.5zM951 67.5h1.5v1.5h-1.5zM961.5 67.5h3v1.5h-3zM966 67.5h4.5v1.5h-4.5zM979.5 67.5h1.5v1.5h-1.5zM985.5 67.5h3v1.5h-3zM994.5 67.5h1.5v1.5h-1.5zM933 69h1.5v1.5h-1.5zM937.5 69h1.5v1.5h-1.5zM948 69h1.5v1.5h-1.5zM958.5 69h1.5v1.5h-1.5zM963 69h1.5v1.5h-1.5zM966 69h1.5v1.5h-1.5zM970.5 69h1.5v1.5h-1.5zM976.5 69h6v1.5h-6zM990 69h1.5v1.5h-1.5zM937.5 70.5h1.5v1.5h-1.5zM942 70.5h3v1.5h-3zM948 70.5h1.5v1.5h-1.5zM957 70.5h6v1.5h-6zM969 70.5h3v1.5h-3zM979.5 70.5h1.5v1.5h-1.5zM982.5 70.5h3v1.5h-3zM991.5 70.5h1.5v1.5h-1.5zM994.5 70.5h3v1.5h-3zM943.5 72h1.5v1.5h-1.5zM946.5 72h1.5v1.5h-1.5zM954 72h3v1.5h-3zM960 72h1.5v1.5h-1.5zM967.5 72h3v1.5h-3zM973.5 72h6v1.5h-6zM993 72h1.5v1.5h-1.5zM934.5 73.5h1.5v1.5h-1.5zM943.5 73.5h1.5v1.5h-1.5zM948 73.5h1.5v1.5h-1.5zM955.5 73.5h3v1.5h-3zM961.5 73.5h3v1.5h-3zM969 73.5h1.5v1.5h-1.5zM985.5 73.5h1.5v1.5h-1.5zM988.5 73.5h3v1.5h-3zM993 73.5h1.5v1.5h-1.5zM940.5 75h3v1.5h-3zM945 75h4.5v1.5h-4.5zM952.5 75h1.5v1.5h-1.5zM955.5 75h4.5v1.5h-4.5zM966 75h1.5v1.5h-1.5zM982.5 75h1.5v1.5h-1.5zM985.5 75h1.5v1.5h-1.5zM994.5 75h4.5v1.5h-4.5zM939 76.5h1.5v1.5h-1.5zM942 76.5h4.5v1.5h-4.5zM955.5 76.5h1.5v1.5h-1.5zM958.5 76.5h3v1.5h-3zM963 76.5h3v1.5h-3zM967.5 76.5h3v1.5h-3zM976.5 76.5h1.5v1.5h-1.5zM979.5 76.5h1.5v1.5h-1.5zM982.5 76.5h1.5v1.5h-1.5zM996 76.5h3v1.5h-3zM934.5 78h3v1.5h-3zM940.5 78h1.5v1.5h-1.5zM943.5 78h1.5v1.5h-1.5zM946.5 78h3v1.5h-3zM955.5 78h3v1.5h-3zM967.5 78h3v1.5h-3zM972 78h1.5v1.5h-1.5zM978 78h4.5v1.5h-4.5zM984 78h1.5v1.5h-1.5zM994.5 78h1.5v1.5h-1.5zM937.5 79.5h1.5v1.5h-1.5zM940.5 79.5h1.5v1.5h-1.5zM943.5 79.5h1.5v1.5h-1.5zM951 79.5h1.5v1.5h-1.5zM954 79.5h1.5v1.5h-1.5zM957 79.5h1.5v1.5h-1.5zM963 79.5h1.5v1.5h-1.5zM969 79.5h1.5v1.5h-1.5zM976.5 79.5h1.5v1.5h-1.5zM984 79.5h3v1.5h-3zM990 79.5h1.5v1.5h-1.5zM996 79.5h1.5v1.5h-1.5zM933 81h3v1.5h-3zM937.5 81h1.5v1.5h-1.5zM943.5 81h1.5v1.5h-1.5zM952.5 81h3v1.5h-3zM966 81h1.5v1.5h-1.5zM970.5 81h4.5v1.5h-4.5zM978 81h1.5v1.5h-1.5zM987 81h7.5v1.5h-7.5zM996 81h3v1.5h-3zM937.5 82.5h3v1.5h-3zM948 82.5h1.5v1.5h-1.5zM955.5 82.5h3v1.5h-3zM960 82.5h1.5v1.5h-1.5zM963 82.5h1.5v1.5h-1.5zM969 82.5h1.5v1.5h-1.5zM978 82.5h1.5v1.5h-1.5zM982.5 82.5h1.5v1.5h-1.5zM985.5 82.5h1.5v1.5h-1.5zM991.5 82.5h1.5v1.5h-1.5zM997.5 82.5h1.5v1.5h-1.5zM936 84h1.5v1.5h-1.5zM940.5 84h1.5v1.5h-1.5zM943.5 84h1.5v1.5h-1.5zM948 84h1.5v1.5h-1.5zM960 84h1.5v1.5h-1.5zM963 84h4.5v1.5h-4.5zM969 84h3v1.5h-3zM975 84h3v1.5h-3zM981 84h6v1.5h-6zM991.5 84h3v1.5h-3zM934.5 85.5h3v1.5h-3zM940.5 85.5h3v1.5h-3zM948 85.5h1.5v1.5h-1.5zM951 85.5h1.5v1.5h-1.5zM954 85.5h1.5v1.5h-1.5zM958.5 85.5h6v1.5h-6zM972 85.5h6v1.5h-6zM981 85.5h1.5v1.5h-1.5zM987 85.5h1.5v1.5h-1.5zM990 85.5h4.5v1.5h-4.5zM996 85.5h3v1.5h-3zM934.5 87h1.5v1.5h-1.5zM937.5 87h1.5v1.5h-1.5zM945 87h3v1.5h-3zM960 87h3v1.5h-3zM966 87h1.5v1.5h-1.5zM978 87h1.5v1.5h-1.5zM981 87h1.5v1.5h-1.5zM984 87h3v1.5h-3zM990 87h3v1.5h-3zM997.5 87h1.5v1.5h-1.5zM933 88.5h3v1.5h-3zM940.5 88.5h1.5v1.5h-1.5zM945 88.5h3v1.5h-3zM951 88.5h4.5v1.5h-4.5zM963 88.5h1.5v1.5h-1.5zM966 88.5h1.5v1.5h-1.5zM972 88.5h1.5v1.5h-1.5zM978 88.5h6v1.5h-6zM991.5 88.5h1.5v1.5h-1.5zM933 90h1.5v1.5h-1.5zM936 90h1.5v1.5h-1.5zM945 90h1.5v1.5h-1.5zM948 90h1.5v1.5h-1.5zM951 90h1.5v1.5h-1.5zM957 90h6v1.5h-6zM976.5 90h1.5v1.5h-1.5zM981 90h1.5v1.5h-1.5zM984 90h1.5v1.5h-1.5zM988.5 90h1.5v1.5h-1.5zM991.5 90h7.5v1.5h-7.5zM937.5 91.5h4.5v1.5h-4.5zM948 91.5h1.5v1.5h-1.5zM952.5 91.5h3v1.5h-3zM958.5 91.5h3v1.5h-3zM963 91.5h3v1.5h-3zM972 91.5h1.5v1.5h-1.5zM979.5 91.5h1.5v1.5h-1.5zM987 91.5h1.5v1.5h-1.5zM993 91.5h6v1.5h-6zM933 93h3v1.5h-3zM942 93h1.5v1.5h-1.5zM948 93h1.5v1.5h-1.5zM951 93h3v1.5h-3zM960 93h1.5v1.5h-1.5zM967.5 93h1.5v1.5h-1.5zM972 93h1.5v1.5h-1.5zM996 93h3v1.5h-3zM936 94.5h1.5v1.5h-1.5zM942 94.5h4.5v1.5h-4.5zM951 94.5h1.5v1.5h-1.5zM954 94.5h1.5v1.5h-1.5zM957 94.5h1.5v1.5h-1.5zM960 94.5h1.5v1.5h-1.5zM967.5 94.5h1.5v1.5h-1.5zM976.5 94.5h1.5v1.5h-1.5zM984 94.5h1.5v1.5h-1.5zM936 96h3v1.5h-3zM940.5 96h1.5v1.5h-1.5zM945 96h1.5v1.5h-1.5zM949.5 96h1.5v1.5h-1.5zM952.5 96h3v1.5h-3zM958.5 96h1.5v1.5h-1.5zM961.5 96h4.5v1.5h-4.5zM976.5 96h1.5v1.5h-1.5zM985.5 96h1.5v1.5h-1.5zM993 96h1.5v1.5h-1.5zM997.5 96h1.5v1.5h-1.5zM934.5 97.5h3v1.5h-3zM940.5 97.5h3v1.5h-3zM948 97.5h1.5v1.5h-1.5zM951 97.5h1.5v1.5h-1.5zM955.5 97.5h3v1.5h-3zM963 97.5h1.5v1.5h-1.5zM970.5 97.5h1.5v1.5h-1.5zM975 97.5h1.5v1.5h-1.5zM979.5 97.5h1.5v1.5h-1.5zM991.5 97.5h4.5v1.5h-4.5zM933 99h1.5v1.5h-1.5zM949.5 99h1.5v1.5h-1.5zM963 99h3v1.5h-3zM967.5 99h1.5v1.5h-1.5zM973.5 99h1.5v1.5h-1.5zM984 99h1.5v1.5h-1.5zM990 99h3v1.5h-3zM994.5 99h1.5v1.5h-1.5zM997.5 99h1.5v1.5h-1.5zM933 100.5h1.5v1.5h-1.5zM939 100.5h1.5v1.5h-1.5zM942 100.5h1.5v1.5h-1.5zM949.5 100.5h1.5v1.5h-1.5zM952.5 100.5h1.5v1.5h-1.5zM955.5 100.5h1.5v1.5h-1.5zM958.5 100.5h1.5v1.5h-1.5zM961.5 100.5h1.5v1.5h-1.5zM973.5 100.5h1.5v1.5h-1.5zM978 100.5h1.5v1.5h-1.5zM988.5 100.5h1.5v1.5h-1.5zM991.5 100.5h4.5v1.5h-4.5zM934.5 102h1.5v1.5h-1.5zM939 102h1.5v1.5h-1.5zM943.5 102h1.5v1.5h-1.5zM946.5 102h3v1.5h-3zM951 102h1.5v1.5h-1.5zM954 102h3v1.5h-3zM958.5 102h1.5v1.5h-1.5zM967.5 102h4.5v1.5h-4.5zM978 102h1.5v1.5h-1.5zM981 102h1.5v1.5h-1.5zM984 102h1.5v1.5h-1.5zM994.5 102h1.5v1.5h-1.5zM934.5 103.5h1.5v1.5h-1.5zM943.5 103.5h1.5v1.5h-1.5zM949.5 103.5h1.5v1.5h-1.5zM954 103.5h1.5v1.5h-1.5zM958.5 103.5h1.5v1.5h-1.5zM964.5 103.5h1.5v1.5h-1.5zM969 103.5h1.5v1.5h-1.5zM973.5 103.5h3v1.5h-3zM978 103.5h3v1.5h-3zM987 103.5h1.5v1.5h-1.5zM990 103.5h1.5v1.5h-1.5zM936 105h1.5v1.5h-1.5zM939 105h1.5v1.5h-1.5zM942 105h3v1.5h-3zM951 105h1.5v1.5h-1.5zM955.5 105h1.5v1.5h-1.5zM958.5 105h1.5v1.5h-1.5zM961.5 105h1.5v1.5h-1.5zM970.5 105h1.5v1.5h-1.5zM978 105h1.5v1.5h-1.5zM985.5 105h1.5v1.5h-1.5zM988.5 105h1.5v1.5h-1.5zM991.5 105h1.5v1.5h-1.5zM994.5 105h1.5v1.5h-1.5zM997.5 105h1.5v1.5h-1.5zM933 106.5h1.5v1.5h-1.5zM939 106.5h3v1.5h-3zM945 106.5h1.5v1.5h-1.5zM957 106.5h1.5v1.5h-1.5zM960 106.5h3v1.5h-3zM966 106.5h3v1.5h-3zM970.5 106.5h6v1.5h-6zM987 106.5h1.5v1.5h-1.5zM990 106.5h1.5v1.5h-1.5zM994.5 106.5h1.5v1.5h-1.5zM933 108h1.5v1.5h-1.5zM940.5 108h3v1.5h-3zM945 108h1.5v1.5h-1.5zM948 108h1.5v1.5h-1.5zM955.5 108h1.5v1.5h-1.5zM960 108h1.5v1.5h-1.5zM963 108h4.5v1.5h-4.5zM982.5 108h1.5v1.5h-1.5zM991.5 108h1.5v1.5h-1.5zM994.5 108h4.5v1.5h-4.5zM933 109.5h1.5v1.5h-1.5zM936 109.5h3v1.5h-3zM943.5 109.5h1.5v1.5h-1.5zM948 109.5h1.5v1.5h-1.5zM954 109.5h1.5v1.5h-1.5zM957 109.5h1.5v1.5h-1.5zM961.5 109.5h3v1.5h-3zM972 109.5h1.5v1.5h-1.5zM975 109.5h3v1.5h-3zM981 109.5h3v1.5h-3zM990 109.5h1.5v1.5h-1.5zM936 111h3v1.5h-3zM942 111h3v1.5h-3zM952.5 111h1.5v1.5h-1.5zM964.5 111h1.5v1.5h-1.5zM967.5 111h1.5v1.5h-1.5zM975 111h1.5v1.5h-1.5zM978 111h1.5v1.5h-1.5zM981 111h1.5v1.5h-1.5zM985.5 111h1.5v1.5h-1.5zM990 111h1.5v1.5h-1.5zM936 112.5h3v1.5h-3zM942 112.5h4.5v1.5h-4.5zM949.5 112.5h1.5v1.5h-1.5zM973.5 112.5h3v1.5h-3zM978 112.5h1.5v1.5h-1.5zM987 112.5h1.5v1.5h-1.5zM994.5 112.5h3v1.5h-3zM933 114h1.5v1.5h-1.5zM937.5 114h1.5v1.5h-1.5zM940.5 114h1.5v1.5h-1.5zM948 114h3v1.5h-3zM952.5 114h3v1.5h-3zM966 114h1.5v1.5h-1.5zM969 114h1.5v1.5h-1.5zM978 114h3v1.5h-3zM984 114h1.5v1.5h-1.5zM990 114h1.5v1.5h-1.5zM993 114h4.5v1.5h-4.5zM933 115.5h1.5v1.5h-1.5zM937.5 115.5h3v1.5h-3zM942 115.5h1.5v1.5h-1.5zM952.5 115.5h3v1.5h-3zM957 115.5h1.5v1.5h-1.5zM961.5 115.5h1.5v1.5h-1.5zM964.5 115.5h3v1.5h-3zM972 115.5h1.5v1.5h-1.5zM976.5 115.5h1.5v1.5h-1.5zM979.5 115.5h1.5v1.5h-1.5zM988.5 115.5h1.5v1.5h-1.5zM997.5 115.5h1.5v1.5h-1.5zM943.5 117h1.5v1.5h-1.5zM951 117h1.5v1.5h-1.5zM955.5 117h1.5v1.5h-1.5zM964.5 117h1.5v1.5h-1.5zM967.5 117h1.5v1.5h-1.5zM975 117h1.5v1.5h-1.5zM978 117h1.5v1.5h-1.5zM982.5 117h1.5v1.5h-1.5zM987 117h3v1.5h-3zM993 117h1.5v1.5h-1.5zM996 117h1.5v1.5h-1.5zM933 118.5h1.5v1.5h-1.5zM937.5 118.5h1.5v1.5h-1.5zM940.5 118.5h3v1.5h-3zM945 118.5h1.5v1.5h-1.5zM952.5 118.5h1.5v1.5h-1.5zM958.5 118.5h1.5v1.5h-1.5zM961.5 118.5h3v1.5h-3zM969 118.5h3v1.5h-3zM978 118.5h1.5v1.5h-1.5zM981 118.5h1.5v1.5h-1.5zM988.5 118.5h3v1.5h-3zM933 120h1.5v1.5h-1.5zM936 120h4.5v1.5h-4.5zM942 120h1.5v1.5h-1.5zM945 120h1.5v1.5h-1.5zM949.5 120h1.5v1.5h-1.5zM963 120h1.5v1.5h-1.5zM966 120h1.5v1.5h-1.5zM969 120h1.5v1.5h-1.5zM984 120h1.5v1.5h-1.5zM990 120h1.5v1.5h-1.5zM993 120h1.5v1.5h-1.5zM997.5 120h1.5v1.5h-1.5zM934.5 121.5h1.5v1.5h-1.5zM939 121.5h3v1.5h-3zM945 121.5h1.5v1.5h-1.5zM948 121.5h3v1.5h-3zM952.5 121.5h1.5v1.5h-1.5zM955.5 121.5h4.5v1.5h-4.5zM972 121.5h1.5v1.5h-1.5zM982.5 121.5h3v1.5h-3zM991.5 121.5h1.5v1.5h-1.5zM996 121.5h3v1.5h-3zM936 123h4.5v1.5h-4.5zM942 123h3v1.5h-3zM946.5 123h3v1.5h-3zM952.5 123h3v1.5h-3zM957 123h1.5v1.5h-1.5zM969 123h1.5v1.5h-1.5zM972 123h4.5v1.5h-4.5zM987 123h4.5v1.5h-4.5zM996 123h1.5v1.5h-1.5zM934.5 124.5h3v1.5h-3zM939 124.5h3v1.5h-3zM945 124.5h1.5v1.5h-1.5zM951 124.5h1.5v1.5h-1.5zM954 124.5h1.5v1.5h-1.5zM957 124.5h1.5v1.5h-1.5zM961.5 124.5h1.5v1.5h-1.5zM964.5 124.5h1.5v1.5h-1.5zM967.5 124.5h1.5v1.5h-1.5zM975 124.5h1.5v1.5h-1.5zM982.5 124.5h7.5v1.5h-7.5zM934.5 126h3v1.5h-3zM940.5 126h3v1.5h-3zM945 126h3v1.5h-3zM949.5 126h1.5v1.5h-1.5zM955.5 126h3v1.5h-3zM960 126h1.5v1.5h-1.5zM972 126h1.5v1.5h-1.5zM976.5 126h1.5v1.5h-1.5zM981 126h1.5v1.5h-1.5zM985.5 126h3v1.5h-3zM990 126h1.5v1.5h-1.5zM997.5 126h1.5v1.5h-1.5zM940.5 127.5h1.5v1.5h-1.5zM948 127.5h1.5v1.5h-1.5zM954 127.5h1.5v1.5h-1.5zM957 127.5h1.5v1.5h-1.5zM961.5 127.5h1.5v1.5h-1.5zM966 127.5h1.5v1.5h-1.5zM984 127.5h1.5v1.5h-1.5zM988.5 127.5h4.5v1.5h-4.5zM945 129h1.5v1.5h-1.5zM967.5 129h1.5v1.5h-1.5zM970.5 129h1.5v1.5h-1.5zM979.5 129h1.5v1.5h-1.5zM984 129h3v1.5h-3zM991.5 129h3v1.5h-3zM996 129h1.5v1.5h-1.5zM934.5 130.5h1.5v1.5h-1.5zM937.5 130.5h1.5v1.5h-1.5zM942 130.5h1.5v1.5h-1.5zM945 130.5h1.5v1.5h-1.5zM958.5 130.5h1.5v1.5h-1.5zM966 130.5h1.5v1.5h-1.5zM970.5 130.5h1.5v1.5h-1.5zM975 130.5h6v1.5h-6zM982.5 130.5h3v1.5h-3zM990 130.5h1.5v1.5h-1.5zM993 130.5h3v1.5h-3zM997.5 130.5h1.5v1.5h-1.5zM933 132h1.5v1.5h-1.5zM937.5 132h1.5v1.5h-1.5zM942 132h1.5v1.5h-1.5zM954 132h4.5v1.5h-4.5zM964.5 132h1.5v1.5h-1.5zM970.5 132h1.5v1.5h-1.5zM978 132h1.5v1.5h-1.5zM982.5 132h1.5v1.5h-1.5zM987 132h1.5v1.5h-1.5zM990 132h4.5v1.5h-4.5zM934.5 133.5h1.5v1.5h-1.5zM940.5 133.5h3v1.5h-3zM946.5 133.5h1.5v1.5h-1.5zM954 133.5h3v1.5h-3zM960 133.5h3v1.5h-3zM964.5 133.5h6v1.5h-6zM978 133.5h1.5v1.5h-1.5zM984 133.5h3v1.5h-3zM990 133.5h1.5v1.5h-1.5zM993 133.5h3v1.5h-3zM933 135h1.5v1.5h-1.5zM945 135h1.5v1.5h-1.5zM951 135h1.5v1.5h-1.5zM955.5 135h3v1.5h-3zM964.5 135h1.5v1.5h-1.5zM969 135h1.5v1.5h-1.5zM973.5 135h1.5v1.5h-1.5zM978 135h1.5v1.5h-1.5zM981 135h1.5v1.5h-1.5zM988.5 135h1.5v1.5h-1.5zM993 135h1.5v1.5h-1.5zM937.5 136.5h1.5v1.5h-1.5zM942 136.5h1.5v1.5h-1.5zM952.5 136.5h6v1.5h-6zM960 136.5h1.5v1.5h-1.5zM966 136.5h3v1.5h-3zM972 136.5h3v1.5h-3zM976.5 136.5h3v1.5h-3zM988.5 136.5h1.5v1.5h-1.5zM994.5 136.5h1.5v1.5h-1.5zM997.5 136.5h1.5v1.5h-1.5zM934.5 138h1.5v1.5h-1.5zM937.5 138h1.5v1.5h-1.5zM940.5 138h3v1.5h-3zM945 138h3v1.5h-3zM955.5 138h1.5v1.5h-1.5zM963 138h3v1.5h-3zM967.5 138h4.5v1.5h-4.5zM973.5 138h3v1.5h-3zM979.5 138h1.5v1.5h-1.5zM987 138h3v1.5h-3zM991.5 138h1.5v1.5h-1.5zM937.5 139.5h4.5v1.5h-4.5zM943.5 139.5h1.5v1.5h-1.5zM949.5 139.5h1.5v1.5h-1.5zM957 139.5h1.5v1.5h-1.5zM963 139.5h1.5v1.5h-1.5zM969 139.5h1.5v1.5h-1.5zM975 139.5h3v1.5h-3zM987 139.5h3v1.5h-3zM993 139.5h1.5v1.5h-1.5zM997.5 139.5h1.5v1.5h-1.5zM937.5 141h3v1.5h-3zM945 141h1.5v1.5h-1.5zM948 141h3v1.5h-3zM954 141h4.5v1.5h-4.5zM970.5 141h1.5v1.5h-1.5zM976.5 141h1.5v1.5h-1.5zM981 141h1.5v1.5h-1.5zM997.5 141h1.5v1.5h-1.5zM937.5 142.5h4.5v1.5h-4.5zM945 142.5h1.5v1.5h-1.5zM954 142.5h1.5v1.5h-1.5zM958.5 142.5h1.5v1.5h-1.5zM963 142.5h1.5v1.5h-1.5zM966 142.5h1.5v1.5h-1.5zM973.5 142.5h1.5v1.5h-1.5zM976.5 142.5h3v1.5h-3zM981 142.5h1.5v1.5h-1.5zM987 142.5h1.5v1.5h-1.5zM993 142.5h4.5v1.5h-4.5zM939 144h1.5v1.5h-1.5zM943.5 144h1.5v1.5h-1.5zM946.5 144h1.5v1.5h-1.5zM952.5 144h3v1.5h-3zM957 144h1.5v1.5h-1.5zM963 144h1.5v1.5h-1.5zM966 144h1.5v1.5h-1.5zM981 144h3v1.5h-3zM988.5 144h1.5v1.5h-1.5zM991.5 144h3v1.5h-3zM997.5 144h1.5v1.5h-1.5zM934.5 145.5h4.5v1.5h-4.5zM943.5 145.5h1.5v1.5h-1.5zM948 145.5h3v1.5h-3zM952.5 145.5h1.5v1.5h-1.5zM958.5 145.5h3v1.5h-3zM963 145.5h3v1.5h-3zM967.5 145.5h3v1.5h-3zM973.5 145.5h4.5v1.5h-4.5zM979.5 145.5h1.5v1.5h-1.5zM984 145.5h1.5v1.5h-1.5zM988.5 145.5h3v1.5h-3zM994.5 145.5h1.5v1.5h-1.5zM997.5 145.5h1.5v1.5h-1.5zM936 147h1.5v1.5h-1.5zM939 147h3v1.5h-3zM948 147h4.5v1.5h-4.5zM954 147h1.5v1.5h-1.5zM958.5 147h1.5v1.5h-1.5zM966 147h1.5v1.5h-1.5zM969 147h3v1.5h-3zM982.5 147h1.5v1.5h-1.5zM985.5 147h1.5v1.5h-1.5zM988.5 147h3v1.5h-3zM993 147h1.5v1.5h-1.5zM996 147h1.5v1.5h-1.5zM939 148.5h1.5v1.5h-1.5zM943.5 148.5h3v1.5h-3zM948 148.5h1.5v1.5h-1.5zM951 148.5h3v1.5h-3zM961.5 148.5h1.5v1.5h-1.5zM967.5 148.5h1.5v1.5h-1.5zM973.5 148.5h1.5v1.5h-1.5zM981 148.5h1.5v1.5h-1.5zM987 148.5h1.5v1.5h-1.5zM991.5 148.5h3v1.5h-3zM996 148.5h3v1.5h-3zM933 150h3v1.5h-3zM945 150h3v1.5h-3zM951 150h4.5v1.5h-4.5zM957 150h1.5v1.5h-1.5zM960 150h3v1.5h-3zM969 150h1.5v1.5h-1.5zM973.5 150h1.5v1.5h-1.5zM978 150h3v1.5h-3zM982.5 150h1.5v1.5h-1.5zM985.5 150h1.5v1.5h-1.5zM988.5 150h1.5v1.5h-1.5zM994.5 150h3v1.5h-3zM936 151.5h3v1.5h-3zM942 151.5h1.5v1.5h-1.5zM948 151.5h6v1.5h-6zM957 151.5h3v1.5h-3zM966 151.5h3v1.5h-3zM978 151.5h1.5v1.5h-1.5zM981 151.5h1.5v1.5h-1.5zM993 151.5h1.5v1.5h-1.5zM996 151.5h3v1.5h-3zM933 153h3v1.5h-3zM940.5 153h1.5v1.5h-1.5zM943.5 153h3v1.5h-3zM948 153h1.5v1.5h-1.5zM952.5 153h1.5v1.5h-1.5zM958.5 153h3v1.5h-3zM969 153h1.5v1.5h-1.5zM981 153h1.5v1.5h-1.5zM990 153h1.5v1.5h-1.5zM994.5 153h1.5v1.5h-1.5zM940.5 154.5h6v1.5h-6zM951 154.5h1.5v1.5h-1.5zM957 154.5h1.5v1.5h-1.5zM961.5 154.5h1.5v1.5h-1.5zM964.5 154.5h1.5v1.5h-1.5zM969 154.5h6v1.5h-6zM978 154.5h3v1.5h-3zM988.5 154.5h1.5v1.5h-1.5zM991.5 154.5h1.5v1.5h-1.5zM996 154.5h1.5v1.5h-1.5zM934.5 156h1.5v1.5h-1.5zM945 156h1.5v1.5h-1.5zM949.5 156h1.5v1.5h-1.5zM955.5 156h1.5v1.5h-1.5zM970.5 156h3v1.5h-3zM979.5 156h3v1.5h-3zM988.5 156h1.5v1.5h-1.5zM991.5 156h3v1.5h-3zM934.5 157.5h3v1.5h-3zM939 157.5h3v1.5h-3zM949.5 157.5h1.5v1.5h-1.5zM957 157.5h1.5v1.5h-1.5zM966 157.5h1.5v1.5h-1.5zM969 157.5h3v1.5h-3zM976.5 157.5h6v1.5h-6zM988.5 157.5h1.5v1.5h-1.5zM996 157.5h3v1.5h-3zM933 159h3v1.5h-3zM937.5 159h7.5v1.5h-7.5zM966 159h1.5v1.5h-1.5zM970.5 159h1.5v1.5h-1.5zM975 159h1.5v1.5h-1.5zM994.5 159h1.5v1.5h-1.5zM936 160.5h4.5v1.5h-4.5zM942 160.5h1.5v1.5h-1.5zM946.5 160.5h1.5v1.5h-1.5zM951 160.5h1.5v1.5h-1.5zM954 160.5h1.5v1.5h-1.5zM957 160.5h1.5v1.5h-1.5zM960 160.5h3v1.5h-3zM966 160.5h3v1.5h-3zM972 160.5h3v1.5h-3zM981 160.5h1.5v1.5h-1.5zM991.5 160.5h1.5v1.5h-1.5zM994.5 160.5h3v1.5h-3zM942 162h1.5v1.5h-1.5zM949.5 162h1.5v1.5h-1.5zM954 162h1.5v1.5h-1.5zM960 162h1.5v1.5h-1.5zM966 162h1.5v1.5h-1.5zM973.5 162h3v1.5h-3zM978 162h3v1.5h-3zM994.5 162h1.5v1.5h-1.5zM997.5 162h1.5v1.5h-1.5zM933 163.5h3v1.5h-3zM942 163.5h4.5v1.5h-4.5zM949.5 163.5h3v1.5h-3zM954 163.5h1.5v1.5h-1.5zM963 163.5h1.5v1.5h-1.5zM970.5 163.5h3v1.5h-3zM979.5 163.5h1.5v1.5h-1.5zM985.5 163.5h1.5v1.5h-1.5zM988.5 163.5h1.5v1.5h-1.5zM994.5 163.5h4.5v1.5h-4.5zM933 165h1.5v1.5h-1.5zM937.5 165h4.5v1.5h-4.5zM957 165h1.5v1.5h-1.5zM960 165h1.5v1.5h-1.5zM963 165h1.5v1.5h-1.5zM966 165h3v1.5h-3zM972 165h4.5v1.5h-4.5zM982.5 165h3v1.5h-3zM987 165h1.5v1.5h-1.5zM996 165h1.5v1.5h-1.5zM933 166.5h1.5v1.5h-1.5zM939 166.5h3v1.5h-3zM943.5 166.5h3v1.5h-3zM948 166.5h1.5v1.5h-1.5zM958.5 166.5h1.5v1.5h-1.5zM961.5 166.5h3v1.5h-3zM970.5 166.5h1.5v1.5h-1.5zM973.5 166.5h1.5v1.5h-1.5zM976.5 166.5h1.5v1.5h-1.5zM979.5 166.5h1.5v1.5h-1.5zM982.5 166.5h1.5v1.5h-1.5zM987 166.5h1.5v1.5h-1.5zM990 166.5h1.5v1.5h-1.5zM996 166.5h3v1.5h-3zM934.5 168h1.5v1.5h-1.5zM942 168h1.5v1.5h-1.5zM945 168h1.5v1.5h-1.5zM948 168h3v1.5h-3zM958.5 168h1.5v1.5h-1.5zM961.5 168h1.5v1.5h-1.5zM964.5 168h3v1.5h-3zM970.5 168h1.5v1.5h-1.5zM976.5 168h1.5v1.5h-1.5zM979.5 168h1.5v1.5h-1.5zM988.5 168h3v1.5h-3zM996 168h3v1.5h-3zM936 169.5h1.5v1.5h-1.5zM939 169.5h1.5v1.5h-1.5zM943.5 169.5h3v1.5h-3zM955.5 169.5h1.5v1.5h-1.5zM958.5 169.5h3v1.5h-3zM967.5 169.5h3v1.5h-3zM972 169.5h4.5v1.5h-4.5zM991.5 169.5h1.5v1.5h-1.5zM994.5 169.5h1.5v1.5h-1.5zM934.5 171h3v1.5h-3zM939 171h1.5v1.5h-1.5zM942 171h3v1.5h-3zM951 171h3v1.5h-3zM963 171h4.5v1.5h-4.5zM969 171h3v1.5h-3zM976.5 171h6v1.5h-6zM934.5 172.5h1.5v1.5h-1.5zM937.5 172.5h1.5v1.5h-1.5zM952.5 172.5h1.5v1.5h-1.5zM955.5 172.5h1.5v1.5h-1.5zM961.5 172.5h1.5v1.5h-1.5zM966 172.5h1.5v1.5h-1.5zM969 172.5h1.5v1.5h-1.5zM973.5 172.5h3v1.5h-3zM985.5 172.5h1.5v1.5h-1.5zM991.5 172.5h1.5v1.5h-1.5zM997.5 172.5h1.5v1.5h-1.5zM936 174h1.5v1.5h-1.5zM940.5 174h1.5v1.5h-1.5zM954 174h1.5v1.5h-1.5zM957 174h3v1.5h-3zM964.5 174h1.5v1.5h-1.5zM972 174h1.5v1.5h-1.5zM976.5 174h1.5v1.5h-1.5zM979.5 174h1.5v1.5h-1.5zM984 174h1.5v1.5h-1.5zM990 174h1.5v1.5h-1.5zM997.5 174h1.5v1.5h-1.5zM942 175.5h7.5v1.5h-7.5zM952.5 175.5h3v1.5h-3zM957 175.5h3v1.5h-3zM964.5 175.5h1.5v1.5h-1.5zM969 175.5h1.5v1.5h-1.5zM973.5 175.5h1.5v1.5h-1.5zM976.5 175.5h10.5v1.5h-10.5zM988.5 175.5h6v1.5h-6zM996 175.5h3v1.5h-3zM934.5 177h1.5v1.5h-1.5zM939 177h1.5v1.5h-1.5zM945 177h1.5v1.5h-1.5zM948 177h1.5v1.5h-1.5zM952.5 177h3v1.5h-3zM957 177h1.5v1.5h-1.5zM963 177h1.5v1.5h-1.5zM967.5 177h4.5v1.5h-4.5zM973.5 177h1.5v1.5h-1.5zM982.5 177h4.5v1.5h-4.5zM990 177h3v1.5h-3zM996 177h1.5v1.5h-1.5zM936 178.5h6v1.5h-6zM943.5 178.5h1.5v1.5h-1.5zM948 178.5h1.5v1.5h-1.5zM954 178.5h4.5v1.5h-4.5zM960 178.5h1.5v1.5h-1.5zM972 178.5h1.5v1.5h-1.5zM975 178.5h1.5v1.5h-1.5zM984 178.5h1.5v1.5h-1.5zM987 178.5h1.5v1.5h-1.5zM996 178.5h3v1.5h-3zM937.5 180h4.5v1.5h-4.5zM943.5 180h1.5v1.5h-1.5zM949.5 180h1.5v1.5h-1.5zM954 180h1.5v1.5h-1.5zM958.5 180h3v1.5h-3zM963 180h1.5v1.5h-1.5zM969 180h1.5v1.5h-1.5zM979.5 180h1.5v1.5h-1.5zM982.5 180h3v1.5h-3zM987 180h9v1.5h-9zM934.5 181.5h1.5v1.5h-1.5zM937.5 181.5h1.5v1.5h-1.5zM942 181.5h1.5v1.5h-1.5zM945 181.5h1.5v1.5h-1.5zM955.5 181.5h1.5v1.5h-1.5zM985.5 181.5h3v1.5h-3zM993 181.5h1.5v1.5h-1.5zM996 181.5h1.5v1.5h-1.5zM937.5 183h3v1.5h-3zM942 183h1.5v1.5h-1.5zM949.5 183h1.5v1.5h-1.5zM955.5 183h3v1.5h-3zM960 183h3v1.5h-3zM964.5 183h1.5v1.5h-1.5zM967.5 183h3v1.5h-3zM972 183h1.5v1.5h-1.5zM975 183h1.5v1.5h-1.5zM987 183h3v1.5h-3zM991.5 183h3v1.5h-3zM964.5 184.5h1.5v1.5h-1.5zM978 184.5h1.5v1.5h-1.5zM985.5 184.5h1.5v1.5h-1.5zM991.5 184.5h1.5v1.5h-1.5zM934.5 186h1.5v1.5h-1.5zM960 186h1.5v1.5h-1.5zM964.5 186h1.5v1.5h-1.5zM973.5 186h1.5v1.5h-1.5zM976.5 186h1.5v1.5h-1.5zM982.5 186h1.5v1.5h-1.5zM988.5 186h1.5v1.5h-1.5zM933 187.5h1.5v1.5h-1.5zM936 187.5h1.5v1.5h-1.5zM940.5 187.5h1.5v1.5h-1.5zM943.5 187.5h1.5v1.5h-1.5zM946.5 187.5h1.5v1.5h-1.5zM951 187.5h3v1.5h-3zM957 187.5h1.5v1.5h-1.5zM966 187.5h1.5v1.5h-1.5zM970.5 187.5h1.5v1.5h-1.5zM975 187.5h3v1.5h-3zM996 187.5h1.5v1.5h-1.5zM946.5 189h1.5v1.5h-1.5zM960 189h1.5v1.5h-1.5zM970.5 189h1.5v1.5h-1.5zM991.5 189h1.5v1.5h-1.5zM933 190.5h1.5v1.5h-1.5zM937.5 190.5h3v1.5h-3zM972 190.5h1.5v1.5h-1.5zM982.5 190.5h1.5v1.5h-1.5zM990 190.5h1.5v1.5h-1.5zM993 190.5h1.5v1.5h-1.5zM997.5 190.5h1.5v1.5h-1.5zM934.5 207h1.5v1.5h-1.5zM937.5 207h1.5v1.5h-1.5zM945 207h1.5v1.5h-1.5zM952.5 207h1.5v1.5h-1.5zM958.5 207h3v1.5h-3zM966 207h3v1.5h-3zM970.5 207h3v1.5h-3zM976.5 207h1.5v1.5h-1.5zM982.5 207h4.5v1.5h-4.5zM990 207h1.5v1.5h-1.5zM993 207h3v1.5h-3zM997.5 207h1.5v1.5h-1.5zM934.5 208.5h1.5v1.5h-1.5zM943.5 208.5h4.5v1.5h-4.5zM954 208.5h1.5v1.5h-1.5zM957 208.5h3v1.5h-3zM961.5 208.5h1.5v1.5h-1.5zM967.5 208.5h1.5v1.5h-1.5zM972 208.5h4.5v1.5h-4.5zM934.5 210h1.5v1.5h-1.5zM939 210h3v1.5h-3zM943.5 210h1.5v1.5h-1.5zM948 210h1.5v1.5h-1.5zM951 210h1.5v1.5h-1.5zM955.5 210h4.5v1.5h-4.5zM966 210h1.5v1.5h-1.5zM969 210h1.5v1.5h-1.5zM972 210h1.5v1.5h-1.5zM975 210h3v1.5h-3zM979.5 210h1.5v1.5h-1.5zM982.5 210h1.5v1.5h-1.5zM934.5 211.5h3v1.5h-3zM940.5 211.5h3v1.5h-3zM945 211.5h1.5v1.5h-1.5zM952.5 211.5h1.5v1.5h-1.5zM957 211.5h1.5v1.5h-1.5zM961.5 211.5h3v1.5h-3zM966 211.5h1.5v1.5h-1.5zM976.5 211.5h1.5v1.5h-1.5zM979.5 211.5h1.5v1.5h-1.5zM982.5 211.5h1.5v1.5h-1.5zM985.5 211.5h1.5v1.5h-1.5zM988.5 211.5h1.5v1.5h-1.5zM991.5 211.5h1.5v1.5h-1.5zM933 213h1.5v1.5h-1.5zM942 213h6v1.5h-6zM952.5 213h1.5v1.5h-1.5zM961.5 213h4.5v1.5h-4.5zM969 213h3v1.5h-3zM978 213h1.5v1.5h-1.5zM981 213h1.5v1.5h-1.5zM984 213h1.5v1.5h-1.5zM987 213h1.5v1.5h-1.5zM990 213h6v1.5h-6zM933 214.5h3v1.5h-3zM940.5 214.5h1.5v1.5h-1.5zM943.5 214.5h1.5v1.5h-1.5zM949.5 214.5h1.5v1.5h-1.5zM957 214.5h1.5v1.5h-1.5zM966 214.5h9v1.5h-9zM979.5 214.5h1.5v1.5h-1.5zM982.5 214.5h1.5v1.5h-1.5zM987 214.5h1.5v1.5h-1.5zM933 216h3v1.5h-3zM943.5 216h1.5v1.5h-1.5zM948 216h3v1.5h-3zM966 216h1.5v1.5h-1.5zM969 216h3v1.5h-3zM973.5 216h3v1.5h-3zM978 216h1.5v1.5h-1.5zM981 216h1.5v1.5h-1.5zM993 216h1.5v1.5h-1.5zM939 217.5h1.5v1.5h-1.5zM942 217.5h1.5v1.5h-1.5zM948 217.5h4.5v1.5h-4.5zM961.5 217.5h1.5v1.5h-1.5zM966 217.5h1.5v1.5h-1.5zM975 217.5h1.5v1.5h-1.5zM978 217.5h1.5v1.5h-1.5zM981 217.5h1.5v1.5h-1.5zM988.5 217.5h7.5v1.5h-7.5zM997.5 217.5h1.5v1.5h-1.5zM933 219h1.5v1.5h-1.5zM939 219h3v1.5h-3zM943.5 219h1.5v1.5h-1.5zM948 219h3v1.5h-3zM957 219h3v1.5h-3zM963 219h1.5v1.5h-1.5zM966 219h3v1.5h-3zM972 219h1.5v1.5h-1.5zM976.5 219h3v1.5h-3zM987 219h1.5v1.5h-1.5zM991.5 219h1.5v1.5h-1.5zM934.5 220.5h6v1.5h-6zM943.5 220.5h1.5v1.5h-1.5zM946.5 220.5h3v1.5h-3zM952.5 220.5h4.5v1.5h-4.5zM961.5 220.5h1.5v1.5h-1.5zM969 220.5h1.5v1.5h-1.5zM973.5 220.5h1.5v1.5h-1.5zM976.5 220.5h1.5v1.5h-1.5zM982.5 220.5h1.5v1.5h-1.5zM996 220.5h1.5v1.5h-1.5zM934.5 222h1.5v1.5h-1.5zM937.5 222h1.5v1.5h-1.5zM942 222h1.5v1.5h-1.5zM952.5 222h3v1.5h-3zM957 222h1.5v1.5h-1.5zM960 222h6v1.5h-6zM967.5 222h4.5v1.5h-4.5zM975 222h4.5v1.5h-4.5zM987 222h1.5v1.5h-1.5zM991.5 222h3v1.5h-3zM934.5 223.5h1.5v1.5h-1.5zM942 223.5h4.5v1.5h-4.5zM948 223.5h1.5v1.5h-1.5zM954 223.5h3v1.5h-3zM963 223.5h3v1.5h-3zM969 223.5h3v1.5h-3zM973.5 223.5h1.5v1.5h-1.5zM976.5 223.5h1.5v1.5h-1.5zM979.5 223.5h3v1.5h-3zM985.5 223.5h1.5v1.5h-1.5zM990 223.5h1.5v1.5h-1.5zM994.5 223.5h4.5v1.5h-4.5zM934.5 225h1.5v1.5h-1.5zM942 225h4.5v1.5h-4.5zM948 225h1.5v1.5h-1.5zM951 225h1.5v1.5h-1.5zM955.5 225h1.5v1.5h-1.5zM958.5 225h6v1.5h-6zM966 225h1.5v1.5h-1.5zM969 225h1.5v1.5h-1.5zM975 225h1.5v1.5h-1.5zM979.5 225h1.5v1.5h-1.5zM984 225h1.5v1.5h-1.5zM990 225h3v1.5h-3zM933 226.5h3v1.5h-3zM939 226.5h7.5v1.5h-7.5zM951 226.5h1.5v1.5h-1.5zM954 226.5h1.5v1.5h-1.5zM961.5 226.5h1.5v1.5h-1.5zM969 226.5h1.5v1.5h-1.5zM973.5 226.5h1.5v1.5h-1.5zM978 226.5h1.5v1.5h-1.5zM982.5 226.5h1.5v1.5h-1.5zM985.5 226.5h1.5v1.5h-1.5zM988.5 226.5h1.5v1.5h-1.5zM993 226.5h3v1.5h-3zM997.5 226.5h1.5v1.5h-1.5zM933 228h4.5v1.5h-4.5zM939 228h1.5v1.5h-1.5zM946.5 228h3v1.5h-3zM957 228h1.5v1.5h-1.5zM961.5 228h1.5v1.5h-1.5zM964.5 228h3v1.5h-3zM975 228h1.5v1.5h-1.5zM979.5 228h3v1.5h-3zM984 228h3v1.5h-3zM988.5 228h6v1.5h-6zM940.5 229.5h1.5v1.5h-1.5zM945 229.5h1.5v1.5h-1.5zM951 229.5h4.5v1.5h-4.5zM958.5 229.5h4.5v1.5h-4.5zM964.5 229.5h1.5v1.5h-1.5zM967.5 229.5h1.5v1.5h-1.5zM972 229.5h6v1.5h-6zM981 229.5h1.5v1.5h-1.5zM984 229.5h1.5v1.5h-1.5zM987 229.5h3v1.5h-3zM993 229.5h3v1.5h-3zM942 231h1.5v1h-1.5zM946.5 231h1.5v1h-1.5zM949.5 231h4.5v1h-4.5zM957 231h3v1h-3zM961.5 231h1.5v1h-1.5zM966 231h1.5v1h-1.5zM987 231h1.5v1h-1.5zM990 231h1.5v1h-1.5zM993 231h1.5v1h-1.5zM996 231h1.5v1h-1.5z"/><path fill="#cccccc" d="M939 66h1.5v1.5h-1.5zM946.5 66h1.5v1.5h-1.5zM949.5 66h1.5v1.5h-1.5zM958.5 66h1.5v1.5h-1.5zM969 66h1.5v1.5h-1.5zM981 66h1.5v1.5h-1.5zM985.5 66h1.5v1.5h-1.5zM988.5 66h3v1.5h-3zM945 67.5h1.5v1.5h-1.5zM955.5 67.5h1.5v1.5h-1.5zM964.5 67.5h1.5v1.5h-1.5zM984 67.5h1.5v1.5h-1.5zM955.5 69h1.5v1.5h-1.5zM961.5 69h1.5v1.5h-1.5zM993 69h1.5v1.5h-1.5zM996 69h3v1.5h-3zM934.5 70.5h1.5v1.5h-1.5zM955.5 70.5h1.5v1.5h-1.5zM963 70.5h1.5v1.5h-1.5zM972 70.5h4.5v1.5h-4.5zM978 70.5h1.5v1.5h-1.5zM987 70.5h3v1.5h-3zM997.5 70.5h1.5v1.5h-1.5zM933 72h1.5v1.5h-1.5zM945 72h1.5v1.5h-1.5zM951 72h1.5v1.5h-1.5zM963 72h1.5v1.5h-1.5zM966 72h1.5v1.5h-1.5zM981 72h1.5v1.5h-1.5zM984 72h1.5v1.5h-1.5zM991.5 72h1.5v1.5h-1.5zM997.5 72h1.5v1.5h-1.5zM940.5 73.5h1.5v1.5h-1.5zM952.5 73.5h1.5v1.5h-1.5zM967.5 73.5h1.5v1.5h-1.5zM972 73.5h1.5v1.5h-1.5zM975 73.5h3v1.5h-3zM981 73.5h1.5v1.5h-1.5zM991.5 73.5h1.5v1.5h-1.5zM997.5 73.5h1.5v1.5h-1.5zM939 75h1.5v1.5h-1.5zM951 75h1.5v1.5h-1.5zM963 75h1.5v1.5h-1.5zM969 75h1.5v1.5h-1.5zM975 75h3v1.5h-3zM981 75h1.5v1.5h-1.5zM936 76.5h1.5v1.5h-1.5zM948 76.5h3v1.5h-3zM952.5 76.5h1.5v1.5h-1.5zM957 76.5h1.5v1.5h-1.5zM978 76.5h1.5v1.5h-1.5zM988.5 76.5h1.5v1.5h-1.5zM939 78h1.5v1.5h-1.5zM951 78h1.5v1.5h-1.5zM963 78h1.5v1.5h-1.5zM976.5 78h1.5v1.5h-1.5zM996 78h1.5v1.5h-1.5zM939 79.5h1.5v1.5h-1.5zM945 79.5h1.5v1.5h-1.5zM955.5 79.5h1.5v1.5h-1.5zM960 79.5h3v1.5h-3zM964.5 79.5h1.5v1.5h-1.5zM967.5 79.5h1.5v1.5h-1.5zM972 79.5h1.5v1.5h-1.5zM993 79.5h1.5v1.5h-1.5zM975 81h3v1.5h-3zM982.5 81h1.5v1.5h-1.5zM934.5 82.5h3v1.5h-3zM951 82.5h1.5v1.5h-1.5zM958.5 82.5h1.5v1.5h-1.5zM961.5 82.5h1.5v1.5h-1.5zM934.5 84h1.5v1.5h-1.5zM988.5 84h1.5v1.5h-1.5zM996 84h1.5v1.5h-1.5zM943.5 85.5h1.5v1.5h-1.5zM946.5 85.5h1.5v1.5h-1.5zM952.5 85.5h1.5v1.5h-1.5zM967.5 85.5h3v1.5h-3zM978 85.5h1.5v1.5h-1.5zM985.5 85.5h1.5v1.5h-1.5zM994.5 85.5h1.5v1.5h-1.5zM936 87h1.5v1.5h-1.5zM940.5 87h1.5v1.5h-1.5zM943.5 87h1.5v1.5h-1.5zM949.5 87h1.5v1.5h-1.5zM975 87h1.5v1.5h-1.5zM982.5 87h1.5v1.5h-1.5zM988.5 87h1.5v1.5h-1.5zM942 88.5h1.5v1.5h-1.5zM955.5 88.5h1.5v1.5h-1.5zM964.5 88.5h1.5v1.5h-1.5zM967.5 88.5h1.5v1.5h-1.5zM987 88.5h1.5v1.5h-1.5zM990 88.5h1.5v1.5h-1.5zM994.5 88.5h1.5v1.5h-1.5zM940.5 90h1.5v1.5h-1.5zM946.5 90h1.5v1.5h-1.5zM954 90h3v1.5h-3zM966 90h1.5v1.5h-1.5zM975 90h1.5v1.5h-1.5zM933 91.5h1.5v1.5h-1.5zM943.5 91.5h1.5v1.5h-1.5zM951 91.5h1.5v1.5h-1.5zM973.5 91.5h1.5v1.5h-1.5zM981 91.5h3v1.5h-3zM937.5 93h4.5v1.5h-4.5zM949.5 93h1.5v1.5h-1.5zM954 93h1.5v1.5h-1.5zM958.5 93h1.5v1.5h-1.5zM963 93h1.5v1.5h-1.5zM969 93h1.5v1.5h-1.5zM981 93h1.5v1.5h-1.5zM991.5 93h1.5v1.5h-1.5zM994.5 93h1.5v1.5h-1.5zM933 94.5h3v1.5h-3zM949.5 94.5h1.5v1.5h-1.5zM964.5 94.5h1.5v1.5h-1.5zM970.5 94.5h3v1.5h-3zM978 94.5h3v1.5h-3zM993 94.5h1.5v1.5h-1.5zM934.5 96h1.5v1.5h-1.5zM948 96h1.5v1.5h-1.5zM951 96h1.5v1.5h-1.5zM966 96h1.5v1.5h-1.5zM987 96h3v1.5h-3zM958.5 97.5h1.5v1.5h-1.5zM969 97.5h1.5v1.5h-1.5zM981 97.5h3v1.5h-3zM988.5 97.5h1.5v1.5h-1.5zM934.5 99h1.5v1.5h-1.5zM948 99h1.5v1.5h-1.5zM954 99h1.5v1.5h-1.5zM957 99h3v1.5h-3zM972 99h1.5v1.5h-1.5zM996 99h1.5v1.5h-1.5zM934.5 100.5h1.5v1.5h-1.5zM940.5 100.5h1.5v1.5h-1.5zM951 100.5h1.5v1.5h-1.5zM963 100.5h1.5v1.5h-1.5zM966 100.5h1.5v1.5h-1.5zM972 100.5h1.5v1.5h-1.5zM975 100.5h1.5v1.5h-1.5zM979.5 100.5h1.5v1.5h-1.5zM997.5 100.5h1.5v1.5h-1.5zM937.5 102h1.5v1.5h-1.5zM949.5 102h1.5v1.5h-1.5zM973.5 102h3v1.5h-3zM991.5 102h1.5v1.5h-1.5zM933 103.5h1.5v1.5h-1.5zM948 103.5h1.5v1.5h-1.5zM952.5 103.5h1.5v1.5h-1.5zM955.5 103.5h1.5v1.5h-1.5zM982.5 103.5h1.5v1.5h-1.5zM940.5 105h1.5v1.5h-1.5zM949.5 105h1.5v1.5h-1.5zM952.5 105h1.5v1.5h-1.5zM972 105h3v1.5h-3zM976.5 105h1.5v1.5h-1.5zM936 106.5h1.5v1.5h-1.5zM952.5 106.5h1.5v1.5h-1.5zM981 106.5h1.5v1.5h-1.5zM984 106.5h1.5v1.5h-1.5zM993 106.5h1.5v1.5h-1.5zM996 106.5h1.5v1.5h-1.5zM934.5 108h1.5v1.5h-1.5zM937.5 108h3v1.5h-3zM943.5 108h1.5v1.5h-1.5zM957 108h1.5v1.5h-1.5zM969 108h3v1.5h-3zM979.5 108h1.5v1.5h-1.5zM984 108h1.5v1.5h-1.5zM993 108h1.5v1.5h-1.5zM949.5 109.5h1.5v1.5h-1.5zM970.5 109.5h1.5v1.5h-1.5zM978 109.5h1.5v1.5h-1.5zM985.5 109.5h1.5v1.5h-1.5zM951 111h1.5v1.5h-1.5zM970.5 111h4.5v1.5h-4.5zM979.5 111h1.5v1.5h-1.5zM987 111h1.5v1.5h-1.5zM994.5 111h1.5v1.5h-1.5zM997.5 111h1.5v1.5h-1.5zM939 112.5h1.5v1.5h-1.5zM963 112.5h1.5v1.5h-1.5zM969 112.5h1.5v1.5h-1.5zM976.5 112.5h1.5v1.5h-1.5zM982.5 112.5h3v1.5h-3zM939 114h1.5v1.5h-1.5zM942 114h1.5v1.5h-1.5zM946.5 114h1.5v1.5h-1.5zM951 114h1.5v1.5h-1.5zM964.5 114h1.5v1.5h-1.5zM973.5 114h1.5v1.5h-1.5zM982.5 114h1.5v1.5h-1.5zM936 115.5h1.5v1.5h-1.5zM945 115.5h1.5v1.5h-1.5zM958.5 115.5h1.5v1.5h-1.5zM967.5 115.5h1.5v1.5h-1.5zM987 115.5h1.5v1.5h-1.5zM937.5 117h6v1.5h-6zM945 117h3v1.5h-3zM973.5 117h1.5v1.5h-1.5zM991.5 117h1.5v1.5h-1.5zM936 118.5h1.5v1.5h-1.5zM939 118.5h1.5v1.5h-1.5zM954 118.5h1.5v1.5h-1.5zM957 118.5h1.5v1.5h-1.5zM979.5 118.5h1.5v1.5h-1.5zM994.5 118.5h1.5v1.5h-1.5zM946.5 120h1.5v1.5h-1.5zM951 120h1.5v1.5h-1.5zM954 120h1.5v1.5h-1.5zM958.5 120h3v1.5h-3zM981 120h3v1.5h-3zM985.5 120h3v1.5h-3zM994.5 120h1.5v1.5h-1.5zM933 121.5h1.5v1.5h-1.5zM951 121.5h1.5v1.5h-1.5zM970.5 121.5h1.5v1.5h-1.5zM934.5 123h1.5v1.5h-1.5zM945 123h1.5v1.5h-1.5zM951 123h1.5v1.5h-1.5zM967.5 123h1.5v1.5h-1.5zM997.5 123h1.5v1.5h-1.5zM937.5 124.5h1.5v1.5h-1.5zM976.5 124.5h1.5v1.5h-1.5zM979.5 124.5h1.5v1.5h-1.5zM990 124.5h1.5v1.5h-1.5zM939 126h1.5v1.5h-1.5zM948 126h1.5v1.5h-1.5zM958.5 126h1.5v1.5h-1.5zM966 126h1.5v1.5h-1.5zM973.5 126h1.5v1.5h-1.5zM982.5 126h1.5v1.5h-1.5zM943.5 127.5h1.5v1.5h-1.5zM946.5 127.5h1.5v1.5h-1.5zM949.5 127.5h1.5v1.5h-1.5zM952.5 127.5h1.5v1.5h-1.5zM970.5 127.5h6v1.5h-6zM981 127.5h1.5v1.5h-1.5zM934.5 129h1.5v1.5h-1.5zM943.5 129h1.5v1.5h-1.5zM951 129h3v1.5h-3zM955.5 129h3v1.5h-3zM972 129h1.5v1.5h-1.5zM990 129h1.5v1.5h-1.5zM994.5 129h1.5v1.5h-1.5zM946.5 130.5h1.5v1.5h-1.5zM949.5 130.5h1.5v1.5h-1.5zM954 130.5h1.5v1.5h-1.5zM963 130.5h1.5v1.5h-1.5zM969 130.5h1.5v1.5h-1.5zM981 130.5h1.5v1.5h-1.5zM991.5 130.5h1.5v1.5h-1.5zM963 132h1.5v1.5h-1.5zM985.5 132h1.5v1.5h-1.5zM988.5 132h1.5v1.5h-1.5zM933 133.5h1.5v1.5h-1.5zM945 133.5h1.5v1.5h-1.5zM952.5 133.5h1.5v1.5h-1.5zM973.5 133.5h1.5v1.5h-1.5zM979.5 133.5h1.5v1.5h-1.5zM991.5 133.5h1.5v1.5h-1.5zM963 135h1.5v1.5h-1.5zM976.5 135h1.5v1.5h-1.5zM985.5 135h1.5v1.5h-1.5zM990 135h1.5v1.5h-1.5zM994.5 135h1.5v1.5h-1.5zM945 136.5h1.5v1.5h-1.5zM949.5 136.5h1.5v1.5h-1.5zM969 136.5h1.5v1.5h-1.5zM975 136.5h1.5v1.5h-1.5zM984 136.5h1.5v1.5h-1.5zM993 136.5h1.5v1.5h-1.5zM996 136.5h1.5v1.5h-1.5zM958.5 138h1.5v1.5h-1.5zM976.5 138h3v1.5h-3zM981 138h3v1.5h-3zM994.5 138h1.5v1.5h-1.5zM933 139.5h1.5v1.5h-1.5zM942 139.5h1.5v1.5h-1.5zM973.5 139.5h1.5v1.5h-1.5zM979.5 139.5h1.5v1.5h-1.5zM982.5 139.5h1.5v1.5h-1.5zM991.5 139.5h1.5v1.5h-1.5zM936 141h1.5v1.5h-1.5zM940.5 141h1.5v1.5h-1.5zM972 141h1.5v1.5h-1.5zM979.5 141h1.5v1.5h-1.5zM982.5 141h1.5v1.5h-1.5zM985.5 141h1.5v1.5h-1.5zM988.5 141h3v1.5h-3zM996 141h1.5v1.5h-1.5zM934.5 142.5h1.5v1.5h-1.5zM942 142.5h1.5v1.5h-1.5zM960 142.5h1.5v1.5h-1.5zM984 142.5h1.5v1.5h-1.5zM990 142.5h3v1.5h-3zM997.5 142.5h1.5v1.5h-1.5zM933 144h1.5v1.5h-1.5zM948 144h3v1.5h-3zM972 144h1.5v1.5h-1.5zM975 144h1.5v1.5h-1.5zM979.5 144h1.5v1.5h-1.5zM994.5 144h1.5v1.5h-1.5zM957 147h1.5v1.5h-1.5zM987 147h1.5v1.5h-1.5zM954 148.5h1.5v1.5h-1.5zM948 150h1.5v1.5h-1.5zM976.5 150h1.5v1.5h-1.5zM966 153h1.5v1.5h-1.5zM987 153h1.5v1.5h-1.5zM967.5 154.5h1.5v1.5h-1.5zM975 154.5h1.5v1.5h-1.5zM937.5 156h1.5v1.5h-1.5zM951 156h1.5v1.5h-1.5zM954 156h1.5v1.5h-1.5zM961.5 156h1.5v1.5h-1.5zM973.5 156h1.5v1.5h-1.5zM976.5 156h1.5v1.5h-1.5zM984 156h1.5v1.5h-1.5zM994.5 156h1.5v1.5h-1.5zM955.5 157.5h1.5v1.5h-1.5zM963 157.5h3v1.5h-3zM973.5 157.5h1.5v1.5h-1.5zM985.5 157.5h1.5v1.5h-1.5zM990 157.5h3v1.5h-3zM951 159h3v1.5h-3zM957 159h3v1.5h-3zM963 159h1.5v1.5h-1.5zM972 159h3v1.5h-3zM981 159h1.5v1.5h-1.5zM985.5 159h3v1.5h-3zM990 159h1.5v1.5h-1.5zM996 159h1.5v1.5h-1.5zM948 160.5h1.5v1.5h-1.5zM958.5 160.5h1.5v1.5h-1.5zM969 160.5h1.5v1.5h-1.5zM936 162h1.5v1.5h-1.5zM951 162h1.5v1.5h-1.5zM957 162h1.5v1.5h-1.5zM964.5 162h1.5v1.5h-1.5zM969 162h1.5v1.5h-1.5zM976.5 162h1.5v1.5h-1.5zM988.5 162h3v1.5h-3zM948 163.5h1.5v1.5h-1.5zM952.5 163.5h1.5v1.5h-1.5zM961.5 163.5h1.5v1.5h-1.5zM981 163.5h1.5v1.5h-1.5zM987 163.5h1.5v1.5h-1.5zM952.5 165h3v1.5h-3zM961.5 165h1.5v1.5h-1.5zM976.5 165h1.5v1.5h-1.5zM990 165h1.5v1.5h-1.5zM993 165h1.5v1.5h-1.5zM949.5 166.5h1.5v1.5h-1.5zM960 166.5h1.5v1.5h-1.5zM967.5 166.5h1.5v1.5h-1.5zM981 166.5h1.5v1.5h-1.5zM984 166.5h1.5v1.5h-1.5zM988.5 166.5h1.5v1.5h-1.5zM951 168h1.5v1.5h-1.5zM955.5 168h3v1.5h-3zM972 168h1.5v1.5h-1.5zM991.5 168h1.5v1.5h-1.5zM948 169.5h1.5v1.5h-1.5zM951 169.5h1.5v1.5h-1.5zM954 169.5h1.5v1.5h-1.5zM961.5 169.5h3v1.5h-3zM982.5 169.5h1.5v1.5h-1.5zM946.5 171h1.5v1.5h-1.5zM960 171h1.5v1.5h-1.5zM967.5 171h1.5v1.5h-1.5zM975 171h1.5v1.5h-1.5zM990 171h1.5v1.5h-1.5zM996 171h1.5v1.5h-1.5zM936 172.5h1.5v1.5h-1.5zM943.5 172.5h1.5v1.5h-1.5zM957 172.5h1.5v1.5h-1.5zM963 172.5h1.5v1.5h-1.5zM970.5 172.5h1.5v1.5h-1.5zM981 172.5h3v1.5h-3zM987 172.5h1.5v1.5h-1.5zM990 172.5h1.5v1.5h-1.5zM951 174h1.5v1.5h-1.5zM961.5 174h3v1.5h-3zM981 174h1.5v1.5h-1.5zM988.5 174h1.5v1.5h-1.5zM993 174h1.5v1.5h-1.5zM960 175.5h1.5v1.5h-1.5zM963 175.5h1.5v1.5h-1.5zM942 177h1.5v1.5h-1.5zM961.5 177h1.5v1.5h-1.5zM964.5 177h3v1.5h-3zM972 177h1.5v1.5h-1.5zM993 177h1.5v1.5h-1.5zM952.5 178.5h1.5v1.5h-1.5zM958.5 178.5h1.5v1.5h-1.5zM964.5 178.5h1.5v1.5h-1.5zM976.5 178.5h3v1.5h-3zM981 178.5h3v1.5h-3zM988.5 178.5h1.5v1.5h-1.5zM933 180h1.5v1.5h-1.5zM936 180h1.5v1.5h-1.5zM945 180h4.5v1.5h-4.5zM955.5 180h1.5v1.5h-1.5zM967.5 180h1.5v1.5h-1.5zM981 180h1.5v1.5h-1.5zM936 181.5h1.5v1.5h-1.5zM943.5 181.5h1.5v1.5h-1.5zM951 181.5h1.5v1.5h-1.5zM964.5 181.5h4.5v1.5h-4.5zM994.5 181.5h1.5v1.5h-1.5zM934.5 183h1.5v1.5h-1.5zM948 183h1.5v1.5h-1.5zM951 183h1.5v1.5h-1.5zM978 183h6v1.5h-6zM994.5 183h1.5v1.5h-1.5zM948 184.5h1.5v1.5h-1.5zM957 184.5h3v1.5h-3zM966 184.5h3v1.5h-3zM970.5 184.5h1.5v1.5h-1.5zM975 184.5h1.5v1.5h-1.5zM987 184.5h3v1.5h-3zM933 186h1.5v1.5h-1.5zM952.5 186h3v1.5h-3zM975 186h1.5v1.5h-1.5zM978 186h1.5v1.5h-1.5zM984 186h3v1.5h-3zM990 186h1.5v1.5h-1.5zM994.5 186h1.5v1.5h-1.5zM997.5 186h1.5v1.5h-1.5zM939 187.5h1.5v1.5h-1.5zM945 187.5h1.5v1.5h-1.5zM948 187.5h1.5v1.5h-1.5zM954 187.5h3v1.5h-3zM958.5 187.5h1.5v1.5h-1.5zM973.5 187.5h1.5v1.5h-1.5zM978 187.5h6v1.5h-6zM994.5 187.5h1.5v1.5h-1.5zM997.5 187.5h1.5v1.5h-1.5zM936 189h1.5v1.5h-1.5zM945 189h1.5v1.5h-1.5zM954 189h1.5v1.5h-1.5zM961.5 189h1.5v1.5h-1.5zM964.5 189h1.5v1.5h-1.5zM969 189h1.5v1.5h-1.5zM973.5 189h1.5v1.5h-1.5zM976.5 189h3v1.5h-3zM982.5 189h1.5v1.5h-1.5zM990 189h1.5v1.5h-1.5zM994.5 189h4.5v1.5h-4.5zM943.5 190.5h4.5v1.5h-4.5zM949.5 190.5h1.5v1.5h-1.5zM952.5 190.5h1.5v1.5h-1.5zM957 190.5h1.5v1.5h-1.5zM966 190.5h1.5v1.5h-1.5zM970.5 190.5h1.5v1.5h-1.5zM978 190.5h3v1.5h-3zM994.5 190.5h3v1.5h-3zM948 207h1.5v1.5h-1.5zM961.5 207h1.5v1.5h-1.5zM933 208.5h1.5v1.5h-1.5zM936 208.5h1.5v1.5h-1.5zM939 208.5h1.5v1.5h-1.5zM964.5 208.5h1.5v1.5h-1.5zM969 208.5h1.5v1.5h-1.5zM976.5 208.5h1.5v1.5h-1.5zM982.5 208.5h1.5v1.5h-1.5zM990 208.5h1.5v1.5h-1.5zM933 210h1.5v1.5h-1.5zM973.5 210h1.5v1.5h-1.5zM987 210h3v1.5h-3zM991.5 210h1.5v1.5h-1.5zM933 211.5h1.5v1.5h-1.5zM954 211.5h1.5v1.5h-1.5zM973.5 211.5h1.5v1.5h-1.5zM955.5 213h3v1.5h-3zM967.5 213h1.5v1.5h-1.5zM996 213h1.5v1.5h-1.5zM954 214.5h1.5v1.5h-1.5zM978 214.5h1.5v1.5h-1.5zM990 214.5h1.5v1.5h-1.5zM937.5 216h1.5v1.5h-1.5zM979.5 216h1.5v1.5h-1.5zM987 216h1.5v1.5h-1.5zM936 217.5h1.5v1.5h-1.5zM957 217.5h1.5v1.5h-1.5zM964.5 217.5h1.5v1.5h-1.5zM954 219h1.5v1.5h-1.5zM969 219h1.5v1.5h-1.5zM982.5 219h1.5v1.5h-1.5zM940.5 220.5h1.5v1.5h-1.5zM949.5 220.5h1.5v1.5h-1.5zM957 220.5h1.5v1.5h-1.5zM960 220.5h1.5v1.5h-1.5zM967.5 220.5h1.5v1.5h-1.5zM975 220.5h1.5v1.5h-1.5zM990 220.5h1.5v1.5h-1.5zM993 220.5h1.5v1.5h-1.5zM997.5 220.5h1.5v1.5h-1.5zM939 222h1.5v1.5h-1.5zM948 222h4.5v1.5h-4.5zM933 223.5h1.5v1.5h-1.5zM940.5 223.5h1.5v1.5h-1.5zM967.5 223.5h1.5v1.5h-1.5zM988.5 223.5h1.5v1.5h-1.5zM939 225h1.5v1.5h-1.5zM957 225h1.5v1.5h-1.5zM964.5 225h1.5v1.5h-1.5zM985.5 225h3v1.5h-3zM997.5 225h1.5v1.5h-1.5zM936 226.5h1.5v1.5h-1.5zM958.5 226.5h1.5v1.5h-1.5zM972 226.5h1.5v1.5h-1.5zM945 228h1.5v1.5h-1.5zM954 228h1.5v1.5h-1.5zM963 228h1.5v1.5h-1.5zM969 228h1.5v1.5h-1.5zM991.5 229.5h1.5v1.5h-1.5zM934.5 231h3v1h-3zM939 231h1.5v1h-1.5zM972 231h4.5v1h-4.5zM984 231h1.5v1h-1.5z"/><path fill="#000000" d="M997.5 66h1.5v1.5h-1.5zM951 73.5h1.5v1.5h-1.5zM939 81h1.5v1.5h-1.5zM966 85.5h1.5v1.5h-1.5zM985.5 93h1.5v1.5h-1.5zM952.5 99h1.5v1.5h-1.5zM945 105h1.5v1.5h-1.5zM979.5 112.5h1.5v1.5h-1.5zM981 117h1.5v1.5h-1.5zM960 127.5h1.5v1.5h-1.5zM976.5 127.5h1.5v1.5h-1.5zM946.5 132h1.5v1.5h-1.5zM939 133.5h1.5v1.5h-1.5zM993 138h1.5v1.5h-1.5zM988.5 142.5h1.5v1.5h-1.5zM945 145.5h1.5v1.5h-1.5zM951 145.5h1.5v1.5h-1.5zM996 145.5h1.5v1.5h-1.5zM933 148.5h1.5v1.5h-1.5zM942 148.5h1.5v1.5h-1.5zM975 150h1.5v1.5h-1.5zM984 150h1.5v1.5h-1.5zM997.5 150h1.5v1.5h-1.5zM972 151.5h1.5v1.5h-1.5zM975 151.5h1.5v1.5h-1.5zM939 153h1.5v1.5h-1.5zM954 153h1.5v1.5h-1.5zM957 153h1.5v1.5h-1.5zM964.5 153h1.5v1.5h-1.5zM975 153h1.5v1.5h-1.5zM963 154.5h1.5v1.5h-1.5zM966 154.5h1.5v1.5h-1.5zM972 157.5h1.5v1.5h-1.5zM961.5 159h1.5v1.5h-1.5zM937.5 162h1.5v1.5h-1.5zM943.5 165h1.5v1.5h-1.5zM970.5 169.5h1.5v1.5h-1.5zM985.5 169.5h1.5v1.5h-1.5zM948 172.5h1.5v1.5h-1.5zM951 177h1.5v1.5h-1.5zM951 180h1.5v1.5h-1.5zM939 213h1.5v1.5h-1.5zM975 213h1.5v1.5h-1.5zM985.5 217.5h1.5v1.5h-1.5zM936 222h1.5v1.5h-1.5zM946.5 223.5h1.5v1.5h-1.5zM948 229.5h1.5v1.5h-1.5zM937.5 231h1.5v1h-1.5zM981 231h1.5v1h-1.5z"/><path fill="#ffffff" d="M972 67.5h3v1.5h-3zM940.5 70.5h1.5v1.5h-1.5zM978 75h1.5v1.5h-1.5zM937.5 76.5h1.5v1.5h-1.5zM975 78h1.5v1.5h-1.5zM948 79.5h1.5v1.5h-1.5zM981 79.5h1.5v1.5h-1.5zM994.5 87h1.5v1.5h-1.5zM936 88.5h1.5v1.5h-1.5zM985.5 90h1.5v1.5h-1.5zM942 91.5h1.5v1.5h-1.5zM991.5 91.5h1.5v1.5h-1.5zM952.5 94.5h1.5v1.5h-1.5zM961.5 94.5h1.5v1.5h-1.5zM988.5 99h1.5v1.5h-1.5zM937.5 103.5h1.5v1.5h-1.5zM954 105h1.5v1.5h-1.5zM958.5 109.5h1.5v1.5h-1.5zM964.5 109.5h1.5v1.5h-1.5zM967.5 114h1.5v1.5h-1.5zM972 114h1.5v1.5h-1.5zM975 118.5h1.5v1.5h-1.5zM955.5 120h1.5v1.5h-1.5zM960 123h1.5v1.5h-1.5zM970.5 123h1.5v1.5h-1.5zM991.5 123h1.5v1.5h-1.5zM937.5 126h1.5v1.5h-1.5zM987 130.5h1.5v1.5h-1.5zM997.5 132h1.5v1.5h-1.5zM958.5 133.5h1.5v1.5h-1.5zM951 136.5h1.5v1.5h-1.5zM990 138h1.5v1.5h-1.5zM960 139.5h1.5v1.5h-1.5zM966 139.5h1.5v1.5h-1.5zM990 139.5h1.5v1.5h-1.5zM994.5 139.5h1.5v1.5h-1.5zM952.5 142.5h1.5v1.5h-1.5zM984 144h1.5v1.5h-1.5zM936 148.5h1.5v1.5h-1.5zM994.5 151.5h1.5v1.5h-1.5zM952.5 156h1.5v1.5h-1.5zM964.5 156h1.5v1.5h-1.5zM952.5 162h1.5v1.5h-1.5zM948 165h1.5v1.5h-1.5zM964.5 166.5h1.5v1.5h-1.5zM975 166.5h1.5v1.5h-1.5zM943.5 168h1.5v1.5h-1.5zM937.5 169.5h1.5v1.5h-1.5zM997.5 169.5h1.5v1.5h-1.5zM993 172.5h1.5v1.5h-1.5zM936 175.5h1.5v1.5h-1.5zM964.5 180h1.5v1.5h-1.5zM969 184.5h1.5v1.5h-1.5zM981 184.5h3v1.5h-3zM936 186h3v1.5h-3zM948 186h1.5v1.5h-1.5zM961.5 186h1.5v1.5h-1.5zM993 186h1.5v1.5h-1.5zM937.5 187.5h1.5v1.5h-1.5zM960 187.5h3v1.5h-3zM967.5 187.5h1.5v1.5h-1.5zM972 187.5h1.5v1.5h-1.5zM943.5 189h1.5v1.5h-1.5zM981 189h1.5v1.5h-1.5zM993 189h1.5v1.5h-1.5zM958.5 190.5h1.5v1.5h-1.5zM969 190.5h1.5v1.5h-1.5zM996 210h1.5v1.5h-1.5zM984 211.5h1.5v1.5h-1.5zM948 213h1.5v1.5h-1.5zM942 216h1.5v1.5h-1.5zM991.5 216h1.5v1.5h-1.5zM960 217.5h1.5v1.5h-1.5zM936 219h1.5v1.5h-1.5zM945 219h1.5v1.5h-1.5zM991.5 223.5h1.5v1.5h-1.5zM987 228h1.5v1.5h-1.5zM997.5 228h1.5v1.5h-1.5zM982.5 229.5h1.5v1.5h-1.5z"/></g><rect x="932" y="64.2" width="68" height="169.4" fill="none" stroke="#0000ff" stroke-width="2.6"/><rect x="1047.6" y="60.5" width="251.9000000000001" height="150.6" fill="#fff" stroke="#222" stroke-width="1"/><line x1="1047.6" y1="187.50" x2="1299.5" y2="187.50" stroke="#444" stroke-width="1"/><path d="M1059.21 90.06V115.15M1063.88 90.06V115.15M1068.54 120.30V145.39M1073.20 109.32V134.41M1077.87 101.26V126.35M1082.54 125.23V150.32M1087.20 115.15V140.24M1091.87 139.56V164.65M1096.53 156.36V181.45M1101.19 156.36V181.45M1105.86 138.00V163.08M1110.53 139.12V164.20M1115.19 121.42V146.51M1119.86 123.66V148.75M1124.52 124.33V149.42M1129.18 130.38V155.47M1133.85 145.39V170.48M1138.52 118.96V144.04M1143.18 146.28V171.37M1147.85 137.32V162.41M1152.51 120.08V145.16M1157.17 83.56V108.65M1161.84 109.55V134.64M1166.51 109.32V134.41M1171.17 106.64V131.72M1175.84 67.66V92.75M1180.50 99.92V125.00M1185.16 78.86V103.95M1189.83 104.62V129.71M1194.49 110.22V135.31M1199.16 114.70V139.79M1203.83 124.56V149.64M1208.49 133.96V159.05M1213.15 146.96V172.04M1217.82 157.26V182.35M1222.48 168.46V193.55M1227.15 180.11V205.20M1231.82 173.61V198.70M1236.48 153.68V178.76M1241.14 151.44V176.52M1245.81 128.14V153.23M1250.47 115.82V140.91M1255.14 136.88V161.96M1259.81 132.84V157.93M1264.47 133.74V158.83M1269.13 140.01V165.10M1273.80 137.32V162.41M1278.46 131.05V156.14M1283.13 115.82V140.91M1287.80 118.96V144.04" stroke="#1f77b4" stroke-width="1.6" fill="none"/><circle cx="1059.21" cy="102.60" r="2.1" fill="#1f77b4"/><circle cx="1063.88" cy="102.60" r="2.1" fill="#1f77b4"/><circle cx="1068.54" cy="132.84" r="2.1" fill="#1f77b4"/><circle cx="1073.20" cy="121.87" r="2.1" fill="#1f77b4"/><circle cx="1077.87" cy="113.80" r="2.1" fill="#1f77b4"/><circle cx="1082.54" cy="137.77" r="2.1" fill="#1f77b4"/><circle cx="1087.20" cy="127.69" r="2.1" fill="#1f77b4"/><circle cx="1091.87" cy="152.11" r="2.1" fill="#1f77b4"/><circle cx="1096.53" cy="168.91" r="2.1" fill="#1f77b4"/><circle cx="1101.19" cy="168.91" r="2.1" fill="#1f77b4"/><circle cx="1105.86" cy="150.54" r="2.1" fill="#1f77b4"/><circle cx="1110.53" cy="151.66" r="2.1" fill="#1f77b4"/><circle cx="1115.19" cy="133.96" r="2.1" fill="#1f77b4"/><circle cx="1119.86" cy="136.20" r="2.1" fill="#1f77b4"/><circle cx="1124.52" cy="136.88" r="2.1" fill="#1f77b4"/><circle cx="1129.18" cy="142.92" r="2.1" fill="#1f77b4"/><circle cx="1133.85" cy="157.93" r="2.1" fill="#1f77b4"/><circle cx="1138.52" cy="131.50" r="2.1" fill="#1f77b4"/><circle cx="1143.18" cy="158.83" r="2.1" fill="#1f77b4"/><circle cx="1147.85" cy="149.87" r="2.1" fill="#1f77b4"/><circle cx="1152.51" cy="132.62" r="2.1" fill="#1f77b4"/><circle cx="1157.17" cy="96.11" r="2.1" fill="#1f77b4"/><circle cx="1161.84" cy="122.09" r="2.1" fill="#1f77b4"/><circle cx="1166.51" cy="121.87" r="2.1" fill="#1f77b4"/><circle cx="1171.17" cy="119.18" r="2.1" fill="#1f77b4"/><circle cx="1175.84" cy="80.20" r="2.1" fill="#1f77b4"/><circle cx="1180.50" cy="112.46" r="2.1" fill="#1f77b4"/><circle cx="1185.16" cy="91.40" r="2.1" fill="#1f77b4"/><circle cx="1189.83" cy="117.16" r="2.1" fill="#1f77b4"/><circle cx="1194.49" cy="122.76" r="2.1" fill="#1f77b4"/><circle cx="1199.16" cy="127.24" r="2.1" fill="#1f77b4"/><circle cx="1203.83" cy="137.10" r="2.1" fill="#1f77b4"/><circle cx="1208.49" cy="146.51" r="2.1" fill="#1f77b4"/><circle cx="1213.15" cy="159.50" r="2.1" fill="#1f77b4"/><circle cx="1217.82" cy="169.80" r="2.1" fill="#1f77b4"/><circle cx="1222.48" cy="181.00" r="2.1" fill="#1f77b4"/><circle cx="1227.15" cy="192.65" r="2.1" fill="#1f77b4"/><circle cx="1231.82" cy="186.16" r="2.1" fill="#1f77b4"/><circle cx="1236.48" cy="166.22" r="2.1" fill="#1f77b4"/><circle cx="1241.14" cy="163.98" r="2.1" fill="#1f77b4"/><circle cx="1245.81" cy="140.68" r="2.1" fill="#1f77b4"/><circle cx="1250.47" cy="128.36" r="2.1" fill="#1f77b4"/><circle cx="1255.14" cy="149.42" r="2.1" fill="#1f77b4"/><circle cx="1259.81" cy="145.39" r="2.1" fill="#1f77b4"/><circle cx="1264.47" cy="146.28" r="2.1" fill="#1f77b4"/><circle cx="1269.13" cy="152.56" r="2.1" fill="#1f77b4"/><circle cx="1273.80" cy="149.87" r="2.1" fill="#1f77b4"/><circle cx="1278.46" cy="143.60" r="2.1" fill="#1f77b4"/><circle cx="1283.13" cy="128.36" r="2.1" fill="#1f77b4"/><circle cx="1287.80" cy="131.50" r="2.1" fill="#1f77b4"/><polyline points="1069.71,149.42 1070.87,149.42 1072.04,149.42 1073.20,149.42 1074.37,149.42 1075.54,149.42 1076.70,149.42 1077.87,149.42 1079.04,149.42 1080.20,149.42 1081.37,149.42 1082.54,149.42 1083.70,149.42 1084.87,149.42 1086.03,149.42 1087.20,149.42 1088.37,149.42 1089.53,149.42 1090.70,149.42 1091.87,149.42 1093.03,149.42 1094.20,149.42 1095.36,149.42 1096.53,149.42 1097.70,149.42 1098.86,149.42 1100.03,149.42 1101.19,149.42 1102.36,149.42 1103.53,149.42 1104.69,149.42 1105.86,149.42 1107.03,149.42 1108.19,149.42 1109.36,149.42 1110.53,149.42 1111.69,149.42 1112.86,149.42 1114.02,149.42 1115.19,149.42 1116.36,149.42 1117.52,149.42 1118.69,149.42 1119.86,149.41 1121.02,149.41 1122.19,149.41 1123.35,149.41 1124.52,149.40 1125.69,149.39 1126.85,149.38 1128.02,149.36 1129.18,149.34 1130.35,149.32 1131.52,149.28 1132.68,149.23 1133.85,149.17 1135.02,149.09 1136.18,148.99 1137.35,148.86 1138.52,148.69 1139.68,148.49 1140.85,148.24 1142.01,147.93 1143.18,147.56 1144.35,147.11 1145.51,146.57 1146.68,145.93 1147.85,145.18 1149.01,144.31 1150.18,143.30 1151.34,142.15 1152.51,140.85 1153.68,139.38 1154.84,137.76 1156.01,135.98 1157.17,134.03 1158.34,131.94 1159.51,129.71 1160.67,127.36 1161.84,124.92 1163.01,122.40 1164.17,119.85 1165.34,117.30 1166.51,114.79 1167.67,112.36 1168.84,110.05 1170.00,107.91 1171.17,105.98 1172.34,104.29 1173.50,102.89 1174.67,101.80 1175.84,101.05 1177.00,100.65 1178.17,100.62 1179.33,100.94 1180.50,101.63 1181.67,102.65 1182.83,103.99 1184.00,105.62 1185.16,107.50 1186.33,109.61 1187.50,111.88 1188.66,114.29 1189.83,116.79 1191.00,119.34 1192.16,121.90 1193.33,124.42 1194.49,126.88 1195.66,129.25 1196.83,131.51 1197.99,133.63 1199.16,135.60 1200.33,137.42 1201.49,139.07 1202.66,140.57 1203.83,141.90 1204.99,143.08 1206.16,144.12 1207.32,145.01 1208.49,145.79 1209.66,146.45 1210.82,147.01 1211.99,147.47 1213.15,147.86 1214.32,148.18 1215.49,148.45 1216.65,148.66 1217.82,148.83 1218.99,148.96 1220.15,149.07 1221.32,149.15 1222.48,149.22 1223.65,149.27 1224.82,149.31 1225.98,149.34 1227.15,149.36 1228.32,149.38 1229.48,149.39 1230.65,149.40 1231.82,149.40 1232.98,149.41 1234.15,149.41 1235.31,149.41 1236.48,149.42 1237.65,149.42 1238.81,149.42 1239.98,149.42 1241.14,149.42 1242.31,149.42 1243.48,149.42 1244.64,149.42 1245.81,149.42 1246.98,149.42 1248.14,149.42 1249.31,149.42 1250.47,149.42 1251.64,149.42 1252.81,149.42 1253.97,149.42 1255.14,149.42 1256.31,149.42 1257.47,149.42 1258.64,149.42 1259.81,149.42 1260.97,149.42 1262.14,149.42 1263.30,149.42 1264.47,149.42 1265.64,149.42 1266.80,149.42 1267.97,149.42 1269.13,149.42 1270.30,149.42 1271.47,149.42 1272.63,149.42 1273.80,149.42 1274.97,149.42 1276.13,149.42 1277.30,149.42 1278.46,149.42 1279.63,149.42 1280.80,149.42 1281.96,149.42 1283.13,149.42 1284.30,149.42 1285.46,149.42 1286.63,149.42" fill="none" stroke="#2a2a2a" stroke-width="1.6"/><text x="1041.50" y="213.20" font-family="Liberation Sans" font-size="9.4" fill="#111" text-anchor="end" textLength="11.0" lengthAdjust="spacingAndGlyphs" stroke="#111" stroke-width="0.1">−1</text><text x="1041.50" y="190.80" font-family="Liberation Sans" font-size="9.4" fill="#111" text-anchor="end" stroke="#111" stroke-width="0.1">0</text><text x="1041.50" y="168.40" font-family="Liberation Sans" font-size="9.4" fill="#111" text-anchor="end" stroke="#111" stroke-width="0.1">1</text><text x="1041.50" y="146.00" font-family="Liberation Sans" font-size="9.4" fill="#111" text-anchor="end" stroke="#111" stroke-width="0.1">2</text><text x="1041.50" y="123.60" font-family="Liberation Sans" font-size="9.4" fill="#111" text-anchor="end" stroke="#111" stroke-width="0.1">3</text><text x="1041.50" y="101.20" font-family="Liberation Sans" font-size="9.4" fill="#111" text-anchor="end" stroke="#111" stroke-width="0.1">4</text><text x="1041.50" y="78.80" font-family="Liberation Sans" font-size="9.4" fill="#111" text-anchor="end" stroke="#111" stroke-width="0.1">5</text><text x="1087.20" y="224.40" font-family="Liberation Sans" font-size="9.4" fill="#111" text-anchor="middle" textLength="21.2" lengthAdjust="spacingAndGlyphs" stroke="#111" stroke-width="0.1">4960</text><text x="1133.85" y="224.40" font-family="Liberation Sans" font-size="9.4" fill="#111" text-anchor="middle" textLength="21.2" lengthAdjust="spacingAndGlyphs" stroke="#111" stroke-width="0.1">4980</text><text x="1180.50" y="224.40" font-family="Liberation Sans" font-size="9.4" fill="#111" text-anchor="middle" textLength="21.2" lengthAdjust="spacingAndGlyphs" stroke="#111" stroke-width="0.1">5000</text><text x="1227.15" y="224.40" font-family="Liberation Sans" font-size="9.4" fill="#111" text-anchor="middle" textLength="21.2" lengthAdjust="spacingAndGlyphs" stroke="#111" stroke-width="0.1">5020</text><text x="1273.80" y="224.40" font-family="Liberation Sans" font-size="9.4" fill="#111" text-anchor="middle" textLength="21.2" lengthAdjust="spacingAndGlyphs" stroke="#111" stroke-width="0.1">5040</text><path d="M1047.6 209.90h-3.5M1047.6 187.50h-3.5M1047.6 165.10h-3.5M1047.6 142.70h-3.5M1047.6 120.30h-3.5M1047.6 97.90h-3.5M1047.6 75.50h-3.5M1087.20 211.1v3.5M1133.85 211.1v3.5M1180.50 211.1v3.5M1227.15 211.1v3.5M1273.80 211.1v3.5" stroke="#222" stroke-width="0.9"/><text x="1049.30" y="71.20" font-family="Liberation Sans" font-size="9.2" fill="#111" text-anchor="start" stroke="#111" stroke-width="0.1">e</text><text x="1054.60" y="66.80" font-family="Liberation Sans" font-size="6.4" fill="#111" text-anchor="start">−17</text><text x="1066.00" y="71.20" font-family="Liberation Sans" font-size="9.2" fill="#111" text-anchor="start" stroke="#111" stroke-width="0.1">x2</text><text x="1076.50" y="71.20" font-family="Liberation Sans" font-size="9.2" fill="#111" text-anchor="start" font-style="italic" stroke="#111" stroke-width="0.1">Å</text><defs><clipPath id="spc"><rect x="101.7" y="348.4" width="1197.7" height="83.70000000000005"/></clipPath></defs><g clip-path="url(#spc)"><rect x="958.8" y="348.4" width="54.700000000000045" height="83.70000000000005" fill="#bfbf00"/><polygon points="101.7,382.7 103.2,382.1 104.7,381.6 106.2,379.6 107.7,379.2 109.2,379.6 110.7,378.9 112.2,378.6 113.7,378.7 115.2,378.6 116.7,379.0 118.2,379.2 119.7,378.5 121.2,379.6 122.7,379.4 124.2,379.5 125.7,379.1 127.2,379.2 128.7,380.1 130.2,378.9 131.7,380.5 133.2,380.0 134.7,379.9 136.2,379.7 137.7,380.2 139.2,380.5 140.7,381.2 142.2,381.6 143.7,382.7 145.2,383.5 146.7,383.9 148.2,384.9 149.7,384.7 151.2,385.9 152.7,384.6 154.2,385.2 155.7,385.1 157.2,386.2 158.7,385.8 160.2,386.1 161.7,386.5 163.2,385.9 164.7,385.6 166.2,386.2 167.7,385.5 169.2,386.4 170.7,385.4 172.2,386.0 173.7,387.1 175.2,386.4 176.7,386.8 178.2,386.7 179.7,387.5 181.2,386.6 182.7,386.4 184.2,387.8 185.7,387.1 187.2,386.9 188.7,386.3 190.2,387.5 191.7,387.7 193.2,387.9 194.7,388.2 196.2,387.2 197.7,388.5 199.2,388.0 200.7,388.8 202.2,388.6 203.7,388.8 205.2,388.9 206.7,389.9 208.2,389.8 209.7,389.5 211.2,390.6 212.7,389.7 214.2,390.8 215.7,390.3 217.2,391.4 218.7,391.7 220.2,390.9 221.7,392.1 223.2,391.0 224.7,391.7 226.2,392.4 227.7,391.4 229.2,392.7 230.7,392.8 232.2,391.8 233.7,393.1 235.2,392.4 236.7,392.7 238.2,393.8 239.7,392.3 241.2,393.9 242.7,393.1 244.2,394.0 245.7,393.7 247.2,393.6 248.7,393.0 250.2,392.9 251.7,393.6 253.2,394.0 254.7,394.2 256.2,394.2 257.7,394.2 259.2,392.6 260.7,393.0 262.2,393.9 263.7,393.4 265.2,393.8 266.7,393.2 268.2,393.6 269.7,393.4 271.2,393.8 272.7,393.2 274.2,394.5 275.7,394.4 277.2,394.1 278.7,393.0 280.2,393.5 281.7,393.8 283.2,394.4 284.7,393.1 286.2,393.3 287.7,394.8 289.2,393.3 290.7,393.7 292.2,393.8 293.7,394.3 295.2,393.6 296.7,393.5 298.2,394.6 299.7,393.4 301.2,394.0 302.7,394.8 304.2,394.8 305.7,394.2 307.2,394.4 308.7,394.3 310.2,394.4 311.7,394.6 313.2,393.8 314.7,394.4 316.2,395.4 317.7,395.4 319.2,394.3 320.7,394.0 322.2,395.0 323.7,395.3 325.2,395.3 326.7,394.2 328.2,394.0 329.7,395.4 331.2,394.2 332.7,395.7 334.2,394.2 335.7,394.4 337.2,395.4 338.7,396.0 340.2,395.8 341.7,395.9 343.2,396.0 344.7,396.2 346.2,395.2 347.7,396.3 349.2,395.9 350.7,396.1 352.2,397.2 353.7,396.7 355.2,396.8 356.7,396.5 358.2,398.3 359.7,398.1 361.2,398.2 362.7,398.4 364.2,398.2 365.7,399.1 367.2,397.9 368.7,399.5 370.2,398.9 371.7,398.6 373.2,398.8 374.7,399.2 376.2,400.1 377.7,399.5 379.2,399.9 380.7,400.4 382.2,399.7 383.7,400.2 385.2,399.7 386.7,400.0 388.2,399.7 389.7,400.3 391.2,400.3 392.7,400.9 394.2,400.3 395.7,401.0 397.2,400.8 398.7,400.4 400.2,400.0 401.7,400.8 403.2,401.1 404.7,400.0 406.2,400.0 407.7,401.2 409.2,400.1 410.7,400.2 412.2,401.0 413.7,399.9 415.2,400.3 416.7,400.8 418.2,399.8 419.7,400.6 421.2,400.2 422.7,401.6 424.2,400.8 425.7,400.4 427.2,400.1 428.7,401.5 430.2,401.6 431.7,401.3 433.2,400.5 434.7,401.2 436.2,400.5 437.7,401.8 439.2,401.0 440.7,400.9 442.2,401.4 443.7,401.1 445.2,401.3 446.7,400.5 448.2,401.3 449.7,401.8 451.2,400.8 452.7,401.3 454.2,401.4 455.7,400.8 457.2,400.4 458.7,401.6 460.2,401.6 461.7,400.8 463.2,402.0 464.7,401.4 466.2,401.9 467.7,401.2 469.2,401.6 470.7,401.3 472.2,400.9 473.7,400.9 475.2,402.2 476.7,401.2 478.2,401.7 479.7,402.4 481.2,402.1 482.7,401.8 484.2,402.1 485.7,401.5 487.2,402.6 488.7,402.7 490.2,403.0 491.7,402.4 493.2,402.5 494.7,402.7 496.2,403.1 497.7,402.6 499.2,401.6 500.7,402.8 502.2,402.6 503.7,402.1 505.2,401.9 506.7,403.0 508.2,402.9 509.7,403.6 511.2,403.4 512.7,402.1 514.2,402.5 515.7,403.1 517.2,402.8 518.7,403.5 520.2,403.8 521.7,404.0 523.2,403.7 524.7,403.8 526.2,403.9 527.7,403.7 529.2,402.6 530.7,402.5 532.2,402.7 533.7,403.7 535.2,403.2 536.7,403.0 538.2,403.8 539.7,402.8 541.2,403.7 542.7,403.1 544.2,403.5 545.7,402.5 547.2,403.9 548.7,403.3 550.2,402.9 551.7,403.3 553.2,402.6 554.7,402.9 556.2,402.7 557.7,403.4 559.2,403.8 560.7,403.3 562.2,402.6 563.7,403.0 565.2,403.5 566.7,403.8 568.2,402.9 569.7,404.0 571.2,404.1 572.7,404.4 574.2,403.1 575.7,404.2 577.2,403.3 578.7,403.9 580.2,403.8 581.7,402.8 583.2,403.1 584.7,402.9 586.2,404.4 587.7,404.5 589.2,404.2 590.7,404.5 592.2,403.4 593.7,404.5 595.2,403.4 596.7,403.1 598.2,403.5 599.7,404.5 601.2,404.2 602.7,404.4 604.2,404.6 605.7,403.7 607.2,404.3 608.7,403.4 610.2,404.2 611.7,404.2 613.2,403.8 614.7,404.3 616.2,403.8 617.7,404.2 619.2,403.4 620.7,404.2 622.2,404.6 623.7,404.7 625.2,403.7 626.7,403.2 628.2,404.8 629.7,404.1 631.2,403.2 632.7,403.5 634.2,403.4 635.7,404.2 637.2,403.6 638.7,403.5 640.2,403.9 641.7,404.3 643.2,404.1 644.7,403.5 646.2,404.7 647.7,403.3 649.2,403.6 650.7,403.4 652.2,403.6 653.7,404.4 655.2,404.6 656.7,403.9 658.2,404.1 659.7,404.8 661.2,404.8 662.7,404.3 664.2,404.6 665.7,404.0 667.2,403.5 668.7,404.7 670.2,404.5 671.7,403.8 673.2,405.2 674.7,404.2 676.2,403.8 677.7,405.1 679.2,405.0 680.7,404.5 682.2,404.4 683.7,405.2 685.2,405.2 686.7,404.9 688.2,405.3 689.7,404.0 691.2,403.9 692.7,404.8 694.2,404.5 695.7,403.6 697.2,404.1 698.7,404.2 700.2,404.9 701.7,403.8 703.2,404.3 704.7,403.9 706.2,404.9 707.7,405.4 709.2,404.3 710.7,404.2 712.2,404.6 713.7,404.3 715.2,404.2 716.7,405.3 718.2,404.3 719.7,405.2 721.2,404.0 722.7,404.7 724.2,403.8 725.7,405.2 727.2,405.5 728.7,405.6 730.2,404.1 731.7,404.6 733.2,403.9 734.7,404.0 736.2,404.3 737.7,404.6 739.2,403.9 740.7,405.0 742.2,405.5 743.7,404.3 745.2,405.3 746.7,404.8 748.2,404.9 749.7,404.2 751.2,405.1 752.7,405.6 754.2,405.2 755.7,405.4 757.2,404.7 758.7,404.3 760.2,405.2 761.7,405.0 763.2,404.7 764.7,405.5 766.2,405.8 767.7,404.6 769.2,404.8 770.7,405.6 772.2,405.2 773.7,405.1 775.2,405.0 776.7,405.4 778.2,404.3 779.7,404.8 781.2,405.8 782.7,405.3 784.2,405.8 785.7,404.9 787.2,404.8 788.7,405.9 790.2,404.8 791.7,404.7 793.2,404.7 794.7,404.4 796.2,404.6 797.7,405.2 799.2,405.8 800.7,405.8 802.2,404.8 803.7,404.4 805.2,405.2 806.7,405.3 808.2,404.8 809.7,404.6 811.2,404.7 812.7,405.6 814.2,404.6 815.7,405.7 817.2,404.7 818.7,406.0 820.2,406.1 821.7,405.1 823.2,405.1 824.7,404.9 826.2,404.7 827.7,405.1 829.2,404.6 830.7,406.1 832.2,406.2 833.7,405.1 835.2,405.3 836.7,405.0 838.2,405.1 839.7,405.9 841.2,405.3 842.7,405.3 844.2,406.0 845.7,405.6 847.2,406.1 848.7,406.3 850.2,404.9 851.7,404.9 853.2,406.3 854.7,406.1 856.2,404.6 857.7,406.0 859.2,405.8 860.7,406.0 862.2,405.6 863.7,404.9 865.2,405.2 866.7,405.3 868.2,405.3 869.7,406.4 871.2,406.2 872.7,405.2 874.2,405.2 875.7,405.6 877.2,405.3 878.7,405.2 880.2,405.5 881.7,405.7 883.2,406.5 884.7,405.5 886.2,404.9 887.7,406.3 889.2,404.9 890.7,405.4 892.2,405.4 893.7,405.8 895.2,405.6 896.7,406.1 898.2,405.3 899.7,405.5 901.2,406.0 902.7,405.9 904.2,405.2 905.7,405.9 907.2,405.0 908.7,405.4 910.2,405.8 911.7,405.8 913.2,406.4 914.7,406.5 916.2,406.1 917.7,406.5 919.2,405.8 920.7,405.4 922.2,406.4 923.7,405.1 925.2,405.6 926.7,406.4 928.2,405.4 929.7,405.9 931.2,406.1 932.7,405.7 934.2,406.7 935.7,405.1 937.2,406.3 938.7,405.1 940.2,405.9 941.7,406.6 943.2,405.6 944.7,406.0 946.2,405.4 947.7,405.2 949.2,405.0 950.7,405.9 952.2,405.2 953.7,405.8 955.2,406.0 956.7,406.8 958.2,406.0 959.7,405.5 961.2,405.2 962.7,406.1 964.2,406.4 965.7,406.5 967.2,405.4 968.7,405.8 970.2,405.3 971.7,405.4 973.2,406.7 974.7,406.6 976.2,405.4 977.7,405.1 979.2,405.7 980.7,406.5 982.2,405.7 983.7,405.3 985.2,405.5 986.7,405.6 988.2,405.4 989.7,406.0 991.2,406.3 992.7,406.2 994.2,405.3 995.7,405.7 997.2,406.1 998.7,405.8 1000.2,406.4 1001.7,405.9 1003.2,405.5 1004.7,406.2 1006.2,406.5 1007.7,405.6 1009.2,405.9 1010.7,406.3 1012.2,406.3 1013.7,405.2 1015.2,406.5 1016.7,406.0 1018.2,405.8 1019.7,406.0 1021.2,405.4 1022.7,406.4 1024.2,405.5 1025.7,406.6 1027.2,406.8 1028.7,406.3 1030.2,405.0 1031.7,406.3 1033.2,405.9 1034.7,405.4 1036.2,406.0 1037.7,405.2 1039.2,405.6 1040.7,405.3 1042.2,405.4 1043.7,406.0 1045.2,405.1 1046.7,405.4 1048.2,405.3 1049.7,406.0 1051.2,406.6 1052.7,405.7 1054.2,405.5 1055.7,406.7 1057.2,406.7 1058.7,405.8 1060.2,406.7 1061.7,406.0 1063.2,405.4 1064.7,406.8 1066.2,406.3 1067.7,405.2 1069.2,406.4 1070.7,405.8 1072.2,405.6 1073.7,405.3 1075.2,405.5 1076.7,405.7 1078.2,406.3 1079.7,406.2 1081.2,406.4 1082.7,406.0 1084.2,405.7 1085.7,405.3 1087.2,405.4 1088.7,405.9 1090.2,406.5 1091.7,405.7 1093.2,406.0 1094.7,406.7 1096.2,405.3 1097.7,406.3 1099.2,406.3 1100.7,406.0 1102.2,406.1 1103.7,405.2 1105.2,406.6 1106.7,405.0 1108.2,406.4 1109.7,405.8 1111.2,406.1 1112.7,406.3 1114.2,405.5 1115.7,405.3 1117.2,405.9 1118.7,406.7 1120.2,406.4 1121.7,406.4 1123.2,406.2 1124.7,405.4 1126.2,406.4 1127.7,405.4 1129.2,405.2 1130.7,406.0 1132.2,406.1 1133.7,405.0 1135.2,405.6 1136.7,406.0 1138.2,406.4 1139.7,406.2 1141.2,405.9 1142.7,405.6 1144.2,406.4 1145.7,405.2 1147.2,406.0 1148.7,405.8 1150.2,406.8 1151.7,405.7 1153.2,405.2 1154.7,405.9 1156.2,406.7 1157.7,405.0 1159.2,405.0 1160.7,406.6 1162.2,405.1 1163.7,405.5 1165.2,405.5 1166.7,405.2 1168.2,405.2 1169.7,405.1 1171.2,405.3 1172.7,406.3 1174.2,406.4 1175.7,406.1 1177.2,406.2 1178.7,406.7 1180.2,405.1 1181.7,406.7 1183.2,406.3 1184.7,405.7 1186.2,406.1 1187.7,405.6 1189.2,405.5 1190.7,405.5 1192.2,406.2 1193.7,406.7 1195.2,405.4 1196.7,405.1 1198.2,406.1 1199.7,405.4 1201.2,405.2 1202.7,405.9 1204.2,406.6 1205.7,405.6 1207.2,405.1 1208.7,406.4 1210.2,406.3 1211.7,405.4 1213.2,405.4 1214.7,406.2 1216.2,405.2 1217.7,405.9 1219.2,405.9 1220.7,405.4 1222.2,406.2 1223.7,406.6 1225.2,406.6 1226.7,406.3 1228.2,405.2 1229.7,406.6 1231.2,406.1 1232.7,405.5 1234.2,406.6 1235.7,405.3 1237.2,406.5 1238.7,405.6 1240.2,406.7 1241.7,405.0 1243.2,405.6 1244.7,406.8 1246.2,405.2 1247.7,405.4 1249.2,406.7 1250.7,406.6 1252.2,405.5 1253.7,406.0 1255.2,405.7 1256.7,405.5 1258.2,406.7 1259.7,406.5 1261.2,405.5 1262.7,405.3 1264.2,406.6 1265.7,406.0 1267.2,405.8 1268.7,406.6 1270.2,405.5 1271.7,405.4 1273.2,405.6 1274.7,405.2 1276.2,405.7 1277.7,406.2 1279.2,405.5 1280.7,406.0 1282.2,406.6 1283.7,405.3 1285.2,405.4 1286.7,407.8 1288.2,409.1 1289.7,411.0 1291.2,412.5 1292.7,414.2 1294.2,415.3 1294.2,417.7 1292.7,418.0 1291.2,420.8 1289.7,422.4 1288.2,423.2 1286.7,425.0 1285.2,426.5 1283.7,426.7 1282.2,426.7 1280.7,426.1 1279.2,426.3 1277.7,427.2 1276.2,426.7 1274.7,427.7 1273.2,427.3 1271.7,427.8 1270.2,427.8 1268.7,426.6 1267.2,426.2 1265.7,426.3 1264.2,427.7 1262.7,427.8 1261.2,426.5 1259.7,426.2 1258.2,427.5 1256.7,427.6 1255.2,427.0 1253.7,427.1 1252.2,426.5 1250.7,426.7 1249.2,426.5 1247.7,426.5 1246.2,427.7 1244.7,426.6 1243.2,426.8 1241.7,427.8 1240.2,426.6 1238.7,426.9 1237.2,426.9 1235.7,426.5 1234.2,426.9 1232.7,427.6 1231.2,427.8 1229.7,426.3 1228.2,427.5 1226.7,427.9 1225.2,427.5 1223.7,426.4 1222.2,427.4 1220.7,426.8 1219.2,426.9 1217.7,426.8 1216.2,427.5 1214.7,427.4 1213.2,427.2 1211.7,426.5 1210.2,426.6 1208.7,426.8 1207.2,427.4 1205.7,426.9 1204.2,427.1 1202.7,426.6 1201.2,426.4 1199.7,426.4 1198.2,427.2 1196.7,426.5 1195.2,426.7 1193.7,427.0 1192.2,427.4 1190.7,426.7 1189.2,427.0 1187.7,427.4 1186.2,426.2 1184.7,426.9 1183.2,427.1 1181.7,426.9 1180.2,427.3 1178.7,426.1 1177.2,427.0 1175.7,426.2 1174.2,427.0 1172.7,427.1 1171.2,426.3 1169.7,427.8 1168.2,427.8 1166.7,427.2 1165.2,426.6 1163.7,427.0 1162.2,427.3 1160.7,427.7 1159.2,427.4 1157.7,427.0 1156.2,426.8 1154.7,426.5 1153.2,427.0 1151.7,427.9 1150.2,426.4 1148.7,426.3 1147.2,427.2 1145.7,427.8 1144.2,427.0 1142.7,426.2 1141.2,426.9 1139.7,427.4 1138.2,427.2 1136.7,426.6 1135.2,426.5 1133.7,426.1 1132.2,426.6 1130.7,427.1 1129.2,426.7 1127.7,426.8 1126.2,426.7 1124.7,426.9 1123.2,426.7 1121.7,426.9 1120.2,426.8 1118.7,426.3 1117.2,426.7 1115.7,426.2 1114.2,427.4 1112.7,426.1 1111.2,426.6 1109.7,427.9 1108.2,426.8 1106.7,426.2 1105.2,426.3 1103.7,427.2 1102.2,426.4 1100.7,427.3 1099.2,426.4 1097.7,427.0 1096.2,427.9 1094.7,426.5 1093.2,427.4 1091.7,426.2 1090.2,427.4 1088.7,427.8 1087.2,427.5 1085.7,427.3 1084.2,426.2 1082.7,427.2 1081.2,426.6 1079.7,426.9 1078.2,427.0 1076.7,427.7 1075.2,427.0 1073.7,427.3 1072.2,427.5 1070.7,427.9 1069.2,426.5 1067.7,427.4 1066.2,427.7 1064.7,427.5 1063.2,426.5 1061.7,427.0 1060.2,426.4 1058.7,426.6 1057.2,427.0 1055.7,426.3 1054.2,426.7 1052.7,426.2 1051.2,427.0 1049.7,427.8 1048.2,426.3 1046.7,427.0 1045.2,427.0 1043.7,426.3 1042.2,426.8 1040.7,426.8 1039.2,427.4 1037.7,427.1 1036.2,426.8 1034.7,427.4 1033.2,427.1 1031.7,426.7 1030.2,427.3 1028.7,426.6 1027.2,427.6 1025.7,427.1 1024.2,427.7 1022.7,427.1 1021.2,426.3 1019.7,427.6 1018.2,427.0 1016.7,427.7 1015.2,427.0 1013.7,427.1 1012.2,427.2 1010.7,426.7 1009.2,426.4 1007.7,427.9 1006.2,427.9 1004.7,426.5 1003.2,427.7 1001.7,427.1 1000.2,427.6 998.7,426.2 997.2,427.2 995.7,427.1 994.2,427.5 992.7,427.2 991.2,426.5 989.7,426.5 988.2,426.9 986.7,426.3 985.2,427.3 983.7,426.6 982.2,426.8 980.7,426.2 979.2,427.6 977.7,427.0 976.2,426.4 974.7,426.8 973.2,426.3 971.7,427.6 970.2,427.7 968.7,426.7 967.2,426.2 965.7,427.4 964.2,427.7 962.7,426.7 961.2,427.1 959.7,427.7 958.2,426.5 956.7,427.3 955.2,426.6 953.7,427.6 952.2,426.5 950.7,427.1 949.2,427.8 947.7,427.3 946.2,426.8 944.7,427.7 943.2,426.9 941.7,427.6 940.2,426.9 938.7,426.1 937.2,427.9 935.7,426.9 934.2,427.4 932.7,426.3 931.2,427.3 929.7,426.9 928.2,426.8 926.7,426.5 925.2,426.2 923.7,426.2 922.2,427.2 920.7,426.5 919.2,427.8 917.7,426.9 916.2,426.4 914.7,427.0 913.2,427.7 911.7,427.5 910.2,427.9 908.7,426.3 907.2,426.8 905.7,426.5 904.2,426.9 902.7,426.5 901.2,427.8 899.7,426.9 898.2,427.1 896.7,426.9 895.2,427.8 893.7,427.8 892.2,426.6 890.7,428.0 889.2,427.8 887.7,427.7 886.2,427.0 884.7,427.4 883.2,427.2 881.7,427.9 880.2,427.2 878.7,428.0 877.2,427.5 875.7,427.6 874.2,426.5 872.7,428.1 871.2,427.8 869.7,428.0 868.2,427.4 866.7,426.9 865.2,427.3 863.7,427.4 862.2,427.1 860.7,426.5 859.2,427.3 857.7,428.1 856.2,427.9 854.7,426.6 853.2,427.1 851.7,426.5 850.2,426.9 848.7,427.9 847.2,426.7 845.7,428.1 844.2,426.8 842.7,427.4 841.2,427.4 839.7,427.4 838.2,427.8 836.7,426.5 835.2,427.7 833.7,428.2 832.2,426.9 830.7,428.2 829.2,426.8 827.7,428.1 826.2,426.7 824.7,426.7 823.2,428.3 821.7,426.7 820.2,427.4 818.7,426.6 817.2,428.0 815.7,426.8 814.2,426.6 812.7,427.7 811.2,428.3 809.7,428.1 808.2,428.2 806.7,426.6 805.2,427.0 803.7,427.0 802.2,428.3 800.7,426.6 799.2,427.7 797.7,427.9 796.2,426.7 794.7,427.0 793.2,428.4 791.7,426.8 790.2,427.3 788.7,428.3 787.2,427.1 785.7,428.1 784.2,427.0 782.7,427.0 781.2,428.4 779.7,427.6 778.2,427.9 776.7,428.3 775.2,427.2 773.7,427.7 772.2,426.8 770.7,428.4 769.2,428.2 767.7,427.7 766.2,427.0 764.7,427.6 763.2,427.6 761.7,427.5 760.2,428.5 758.7,427.1 757.2,427.7 755.7,427.9 754.2,428.5 752.7,427.6 751.2,428.4 749.7,426.9 748.2,427.3 746.7,428.3 745.2,428.3 743.7,427.1 742.2,428.3 740.7,428.1 739.2,427.6 737.7,427.4 736.2,428.3 734.7,427.5 733.2,427.9 731.7,427.5 730.2,426.9 728.7,427.0 727.2,428.4 725.7,427.8 724.2,427.3 722.7,427.3 721.2,427.9 719.7,427.0 718.2,427.4 716.7,428.4 715.2,427.8 713.7,428.5 712.2,428.0 710.7,427.9 709.2,427.3 707.7,428.6 706.2,428.8 704.7,428.4 703.2,427.2 701.7,427.6 700.2,427.6 698.7,428.4 697.2,427.9 695.7,428.5 694.2,428.3 692.7,427.7 691.2,427.3 689.7,428.8 688.2,428.8 686.7,427.9 685.2,428.0 683.7,428.8 682.2,427.9 680.7,428.9 679.2,429.0 677.7,428.5 676.2,427.5 674.7,427.4 673.2,427.8 671.7,427.9 670.2,428.3 668.7,428.0 667.2,428.3 665.7,428.1 664.2,427.4 662.7,428.1 661.2,427.7 659.7,428.4 658.2,427.5 656.7,428.4 655.2,428.8 653.7,428.4 652.2,428.8 650.7,428.1 649.2,428.9 647.7,429.0 646.2,427.4 644.7,427.4 643.2,427.5 641.7,428.6 640.2,428.6 638.7,428.2 637.2,428.9 635.7,427.2 634.2,428.3 632.7,427.2 631.2,428.3 629.7,427.3 628.2,427.3 626.7,427.8 625.2,427.8 623.7,428.4 622.2,427.9 620.7,428.7 619.2,428.6 617.7,427.2 616.2,428.4 614.7,427.1 613.2,427.3 611.7,427.7 610.2,428.1 608.7,427.3 607.2,427.9 605.7,427.4 604.2,427.7 602.7,428.0 601.2,428.3 599.7,427.3 598.2,428.2 596.7,427.7 595.2,428.5 593.7,427.1 592.2,428.0 590.7,427.0 589.2,428.6 587.7,427.8 586.2,427.3 584.7,428.1 583.2,427.0 581.7,427.0 580.2,426.9 578.7,428.6 577.2,427.0 575.7,428.0 574.2,427.3 572.7,427.4 571.2,427.7 569.7,427.3 568.2,426.9 566.7,427.4 565.2,427.1 563.7,427.0 562.2,428.5 560.7,427.5 559.2,426.9 557.7,427.5 556.2,426.8 554.7,427.6 553.2,426.9 551.7,427.0 550.2,427.0 548.7,427.1 547.2,427.0 545.7,427.1 544.2,427.1 542.7,427.6 541.2,427.3 539.7,428.3 538.2,427.4 536.7,427.5 535.2,427.8 533.7,427.6 532.2,427.5 530.7,427.0 529.2,426.7 527.7,427.5 526.2,427.4 524.7,428.3 523.2,427.2 521.7,427.8 520.2,427.6 518.7,426.8 517.2,428.2 515.7,428.3 514.2,426.8 512.7,427.3 511.2,427.9 509.7,427.0 508.2,428.5 506.7,427.6 505.2,427.8 503.7,427.8 502.2,427.7 500.7,427.8 499.2,428.4 497.7,428.4 496.2,428.0 494.7,427.7 493.2,429.0 491.7,428.3 490.2,428.0 488.7,428.9 487.2,427.4 485.7,427.9 484.2,428.5 482.7,427.9 481.2,427.9 479.7,429.0 478.2,429.0 476.7,428.1 475.2,429.1 473.7,428.0 472.2,428.4 470.7,429.5 469.2,429.4 467.7,428.8 466.2,428.7 464.7,428.6 463.2,428.3 461.7,428.9 460.2,428.9 458.7,429.3 457.2,429.6 455.7,428.7 454.2,429.2 452.7,429.4 451.2,429.7 449.7,428.7 448.2,428.7 446.7,430.1 445.2,429.6 443.7,428.8 442.2,429.7 440.7,429.2 439.2,428.8 437.7,429.8 436.2,430.0 434.7,430.1 433.2,429.9 431.7,430.0 430.2,429.3 428.7,428.9 427.2,430.3 425.7,429.9 424.2,429.0 422.7,429.5 421.2,429.8 419.7,429.7 418.2,429.4 416.7,430.1 415.2,429.5 413.7,430.4 412.2,429.1 410.7,429.7 409.2,430.5 407.7,430.6 406.2,430.2 404.7,429.5 403.2,429.4 401.7,430.8 400.2,430.3 398.7,429.5 397.2,430.8 395.7,429.8 394.2,430.4 392.7,430.1 391.2,430.7 389.7,430.3 388.2,431.0 386.7,430.6 385.2,429.9 383.7,429.9 382.2,429.3 380.7,429.8 379.2,430.9 377.7,430.9 376.2,431.5 374.7,430.4 373.2,431.2 371.7,430.8 370.2,431.8 368.7,431.6 367.2,432.1 365.7,431.4 364.2,432.1 362.7,432.1 361.2,432.1 359.7,432.1 358.2,432.1 356.7,432.1 355.2,432.1 353.7,432.1 352.2,432.1 350.7,432.1 349.2,432.1 347.7,432.1 346.2,432.1 344.7,432.1 343.2,432.1 341.7,432.1 340.2,432.1 338.7,432.1 337.2,432.1 335.7,432.1 334.2,432.1 332.7,432.1 331.2,432.1 329.7,432.1 328.2,432.1 326.7,432.1 325.2,432.1 323.7,432.1 322.2,432.1 320.7,432.1 319.2,432.1 317.7,432.1 316.2,432.1 314.7,432.1 313.2,432.1 311.7,432.1 310.2,432.1 308.7,432.1 307.2,432.1 305.7,432.1 304.2,432.1 302.7,432.1 301.2,432.1 299.7,432.1 298.2,432.1 296.7,432.1 295.2,432.1 293.7,432.1 292.2,432.1 290.7,432.1 289.2,432.1 287.7,432.1 286.2,432.1 284.7,432.1 283.2,432.1 281.7,432.1 280.2,432.1 278.7,432.1 277.2,432.1 275.7,432.1 274.2,432.1 272.7,432.1 271.2,432.1 269.7,432.1 268.2,432.1 266.7,432.1 265.2,432.1 263.7,432.1 262.2,432.1 260.7,432.1 259.2,432.1 257.7,432.1 256.2,432.1 254.7,432.1 253.2,432.1 251.7,432.1 250.2,432.1 248.7,432.1 247.2,432.1 245.7,432.1 244.2,432.1 242.7,432.1 241.2,432.1 239.7,432.1 238.2,432.1 236.7,432.1 235.2,432.1 233.7,432.1 232.2,432.1 230.7,432.1 229.2,432.1 227.7,432.1 226.2,432.1 224.7,432.1 223.2,432.1 221.7,432.1 220.2,432.1 218.7,432.1 217.2,432.1 215.7,432.1 214.2,432.1 212.7,432.1 211.2,432.1 209.7,432.1 208.2,432.1 206.7,432.1 205.2,432.1 203.7,432.1 202.2,432.1 200.7,432.1 199.2,432.1 197.7,432.1 196.2,432.1 194.7,432.1 193.2,432.1 191.7,432.1 190.2,432.1 188.7,432.1 187.2,432.1 185.7,432.1 184.2,432.1 182.7,432.1 181.2,432.1 179.7,432.1 178.2,432.1 176.7,432.1 175.2,432.1 173.7,432.1 172.2,432.1 170.7,432.1 169.2,432.1 167.7,432.1 166.2,432.1 164.7,432.1 163.2,432.1 161.7,432.1 160.2,432.1 158.7,432.1 157.2,432.1 155.7,432.1 154.2,432.1 152.7,432.1 151.2,432.1 149.7,432.1 148.2,432.1 146.7,432.1 145.2,432.1 143.7,432.1 142.2,432.1 140.7,432.1 139.2,432.1 137.7,432.1 136.2,432.1 134.7,432.1 133.2,432.1 131.7,432.1 130.2,432.1 128.7,432.1 127.2,432.1 125.7,432.1 124.2,432.1 122.7,432.1 121.2,432.1 119.7,432.1 118.2,432.1 116.7,432.1 115.2,432.1 113.7,432.1 112.2,432.1 110.7,432.1 109.2,432.1 107.7,432.1 106.2,432.1 104.7,432.1 103.2,432.1 101.7,432.1" fill="#808080" fill-opacity="0.5"/><rect x="124.1" y="348.4" width="12.5" height="83.70000000000005" fill="#8c8c8c" fill-opacity="0.75" stroke="#222" stroke-width="1"/><path d="M124.1 350.1L136.6 339.1M124.1 373.6L136.6 362.6M124.1 397.1L136.6 386.1M124.1 420.6L136.6 409.6M124.1 444.1L136.6 433.1M124.1 467.6L136.6 456.6" stroke="#222" stroke-width="1"/><rect x="1256.2" y="348.4" width="6.099999999999909" height="83.70000000000005" fill="#8c8c8c" fill-opacity="0.75" stroke="#222" stroke-width="1"/><path d="M1256.2 338.2L1262.3 332.8M1256.2 361.7L1262.3 356.3M1256.2 385.2L1262.3 379.8M1256.2 408.7L1262.3 403.3M1256.2 432.2L1262.3 426.8M1256.2 455.7L1262.3 450.3" stroke="#222" stroke-width="1"/><line x1="101.7" y1="416.2" x2="1299.4" y2="416.2" stroke="#555" stroke-width="1.1"/><line x1="639.5" y1="348.4" x2="639.5" y2="432.1" stroke="#555" stroke-width="1.3" stroke-dasharray="4,2.5"/><line x1="679.7" y1="348.4" x2="679.7" y2="432.1" stroke="#555" stroke-width="1.3" stroke-dasharray="4,2.5"/><line x1="710.2" y1="348.4" x2="710.2" y2="432.1" stroke="#555" stroke-width="1.3" stroke-dasharray="4,2.5"/><line x1="729.2" y1="348.4" x2="729.2" y2="432.1" stroke="#555" stroke-width="1.3" stroke-dasharray="4,2.5"/><line x1="773.7" y1="348.4" x2="773.7" y2="432.1" stroke="#555" stroke-width="1.3" stroke-dasharray="4,2.5"/><line x1="856.5" y1="348.4" x2="856.5" y2="432.1" stroke="#555" stroke-width="1.3" stroke-dasharray="4,2.5"/><line x1="952.5" y1="348.4" x2="952.5" y2="432.1" stroke="#555" stroke-width="1.3" stroke-dasharray="4,2.5"/><line x1="986.2" y1="348.4" x2="986.2" y2="432.1" stroke="#222" stroke-width="1.3" stroke-dasharray="1.6,1.6"/><polyline points="102.0,399.0 103.8,402.5 106.2,391.0 107.5,392.0 108.8,409.0 110.0,397.0 111.0,405.0 112.2,420.5 113.5,358.0 114.8,417.0 116.0,391.0 116.8,394.0 118.0,405.0 119.0,401.0 120.5,366.5 122.0,372.0 123.5,377.0 125.0,401.0 126.2,425.0 129.0,380.0 130.0,393.0 131.0,435.0 133.0,412.0 134.5,411.5 136.0,408.0 138.0,368.0 140.0,435.0 142.8,399.0 144.5,435.0 146.5,385.0 148.5,398.0 151.0,428.0 153.5,392.0 154.8,435.0 157.0,401.0 159.0,435.0 161.8,381.5 165.0,426.0 166.5,378.0 168.0,415.0 169.0,401.0 170.0,428.0 172.0,405.0 174.0,415.0 175.2,405.0 176.5,422.0 179.0,423.0 182.0,402.0 184.0,435.0 185.2,384.5 187.0,421.0 189.0,396.0 190.5,425.0 193.5,377.0 195.0,382.0 197.0,414.0 199.5,390.5 201.5,424.0 203.0,394.0 204.5,423.0 206.5,416.0 208.0,435.0 210.0,391.0 211.5,421.0 213.5,401.0 215.0,435.0 216.5,435.0 219.5,392.5 221.0,413.0 222.5,410.0 224.0,403.0 225.0,430.0 226.5,431.0 228.0,407.0 229.0,435.0 231.0,401.0 233.0,415.0 234.5,411.0 236.0,424.0 238.0,422.0 240.0,405.0 241.5,423.0 243.0,377.0 244.8,413.0 246.2,400.0 247.5,415.0 249.2,435.0 250.5,433.0 252.0,422.0 253.5,435.0 255.5,435.0 257.5,415.0 258.5,415.0 260.5,395.0 263.0,415.0 264.8,401.0 266.5,429.0 267.8,407.0 269.0,428.0 270.0,404.0 271.2,428.0 272.8,409.0 274.5,431.0 276.0,410.0 277.2,429.0 279.5,383.0 281.0,393.0 282.0,435.0 284.0,394.0 286.0,403.0 287.8,435.0 289.8,383.0 292.0,422.0 294.5,396.0 298.0,418.0 299.8,398.0 300.8,410.0 304.0,386.0 306.5,406.0 307.8,372.0 310.0,415.0 312.5,390.0 314.5,407.0 317.0,428.0 318.5,390.0 320.0,415.0 322.0,391.0 324.0,415.0 325.5,391.0 329.0,423.0 331.0,399.0 333.5,397.0 334.5,411.0 336.0,394.0 338.5,387.0 340.0,403.0 342.0,384.0 343.5,390.0 344.5,378.0 345.5,404.0 346.5,377.0 349.0,421.0 351.0,431.0 352.5,404.0 354.5,402.0 357.2,379.0 359.5,405.0 360.5,407.0 362.0,387.0 364.0,399.0 366.5,364.0 367.8,401.0 369.5,383.0 371.2,401.0 372.5,384.0 374.0,396.0 376.5,397.0 378.0,406.0 380.0,406.0 382.0,403.0 383.5,416.0 385.0,405.0 387.0,392.0 388.5,394.0 390.0,406.0 391.5,380.0 393.5,428.0 395.0,396.0 397.0,399.5 399.5,400.0 402.0,420.0 403.5,404.0 405.0,407.0 406.5,420.0 407.8,390.0 409.2,406.0 412.0,399.0 415.0,393.0 417.0,399.0 420.5,414.0 423.5,389.0 426.5,416.0 428.5,386.0 430.0,388.0 432.5,406.0 433.8,380.0 435.0,391.0 437.0,392.0 438.0,397.0 440.0,399.0 440.5,424.0 442.0,406.0 444.0,405.0 445.5,383.0 446.8,410.0 448.0,396.0 449.5,401.0 451.5,386.0 453.5,399.0 456.0,424.0 458.0,399.0 459.5,402.0 461.5,388.0 463.5,397.0 465.0,415.0 466.5,397.0 469.0,415.0 472.5,394.0 474.5,416.0 477.0,403.0 479.0,405.0 480.5,405.0 482.0,382.0 484.0,397.0 486.5,395.0 488.0,409.0 491.0,401.0 493.0,390.0 496.0,380.0 498.5,416.0 500.0,399.0 501.5,411.0 504.0,392.0 506.5,411.0 509.0,392.0 511.0,407.0 515.0,391.0 517.0,404.0 520.0,390.0 523.5,408.0 525.5,382.0 528.0,401.0 530.0,391.0 532.5,401.0 534.5,403.0 537.0,414.0 540.0,385.0 541.5,392.0 543.5,416.0 544.8,408.0 546.5,416.0 550.0,406.0 552.0,410.0 554.0,403.0 556.0,402.0 557.5,394.0 559.5,410.0 562.0,393.0 564.0,392.0 566.5,392.0 569.0,386.0 571.5,378.0 574.0,390.0 576.0,405.0 577.5,405.0 579.8,375.0 581.0,379.0 583.0,373.5 585.5,397.0 588.0,388.0 589.5,403.0 592.0,406.0 594.5,383.0 597.0,386.0 600.0,391.0 602.0,390.0 605.0,404.0 608.0,416.0 610.5,391.0 612.0,396.0 616.0,392.0 618.0,403.0 621.0,405.0 624.5,382.5 627.0,407.0 630.5,383.0 632.5,391.0 634.5,391.0 637.0,377.0 639.5,370.0 642.5,378.0 645.0,391.0 647.0,366.0 649.5,399.0 651.5,392.0 655.0,399.0 657.2,382.0 658.5,407.0 660.0,403.0 662.5,389.0 665.0,397.0 667.0,401.0 669.5,413.0 671.0,402.0 672.0,401.0 673.8,368.0 675.0,389.0 677.8,375.0 679.5,372.0 681.0,380.0 683.5,388.0 685.5,384.0 687.5,397.0 690.0,401.0 692.0,396.0 694.0,387.0 695.0,395.0 697.5,381.0 700.0,391.0 702.5,400.5 704.5,368.0 705.5,381.0 708.0,371.0 710.0,370.0 710.5,358.0 712.5,388.0 716.0,387.0 718.0,391.0 720.0,380.0 722.5,400.0 725.5,405.0 728.5,361.0 730.0,372.0 732.0,366.0 734.5,375.0 738.5,406.0 741.5,359.0 744.0,383.0 747.0,402.0 749.0,391.0 751.0,396.0 753.5,391.0 756.0,392.0 760.0,383.0 764.0,385.0 766.0,394.0 768.5,379.0 769.5,391.0 771.5,352.0 773.0,361.0 774.0,353.0 776.5,375.0 779.5,405.0 782.5,368.0 785.5,385.0 788.5,400.0 790.0,394.0 792.0,411.0 793.5,393.0 795.0,402.0 797.5,370.0 800.0,372.0 802.5,403.0 804.5,389.0 805.5,404.0 807.0,374.0 808.5,394.0 810.5,386.0 812.0,390.0 814.0,375.0 816.0,389.0 818.5,402.0 820.0,380.0 821.5,385.0 822.5,380.0 824.0,388.0 826.0,387.0 829.3,420.0 831.5,405.0 833.0,410.0 836.5,372.0 838.5,371.5 840.0,386.0 844.0,381.0 845.5,389.0 847.0,383.0 850.0,380.0 852.0,368.0 854.0,371.0 855.5,362.5 859.0,369.0 861.5,378.0 863.5,367.0 866.0,373.0 870.0,391.0 872.0,400.0 874.0,410.0 877.0,395.0 878.5,394.0 880.0,375.0 881.5,383.0 883.5,373.0 887.0,394.0 888.5,381.0 891.5,390.0 894.0,380.0 897.5,399.0 900.0,394.0 902.0,394.0 904.5,388.0 906.5,392.0 908.0,390.0 910.5,413.0 912.5,393.0 914.5,392.0 916.5,380.0 921.0,407.0 923.5,395.0 925.8,413.0 929.5,392.0 933.0,402.0 937.0,392.0 940.0,394.0 942.0,400.0 944.5,380.0 947.0,378.0 948.5,380.0 949.5,381.0 950.8,385.0 953.0,366.0 954.0,370.0 957.0,367.0 959.0,384.0 961.0,374.0 962.5,385.0 963.5,383.0 966.5,405.0 969.0,395.0 970.5,386.0 973.0,387.0 975.5,399.0 976.5,385.0 978.0,399.0 981.0,364.0 982.5,378.0 984.0,378.0 986.0,353.5 987.0,372.0 988.5,361.0 990.0,375.0 992.0,382.0 995.0,393.0 999.0,418.0 1002.0,401.0 1004.5,383.0 1006.5,394.0 1008.0,393.0 1009.5,396.0 1013.5,383.0 1015.0,386.0 1018.0,375.0 1020.0,374.0 1021.5,366.0 1026.0,407.0 1029.5,384.0 1031.0,398.0 1033.5,385.0 1035.5,386.0 1036.5,390.0 1038.5,367.0 1040.0,370.0 1041.5,367.0 1044.0,388.0 1046.0,396.0 1048.5,367.0 1051.0,383.0 1054.0,395.0 1056.5,405.0 1059.5,383.0 1062.5,360.0 1065.5,398.0 1070.0,375.0 1073.0,380.0 1074.5,368.0 1080.0,395.0 1082.0,385.0 1083.8,397.0 1086.0,389.0 1088.0,385.0 1089.5,383.0 1092.0,402.5 1094.5,386.0 1096.5,375.0 1099.0,385.0 1102.5,371.0 1104.8,392.0 1107.0,376.0 1109.5,380.0 1111.5,378.0 1113.5,397.0 1116.5,372.5 1118.5,389.0 1120.5,376.0 1122.5,370.0 1125.0,383.0 1127.5,401.0 1129.0,384.0 1131.0,377.0 1132.5,388.0 1134.0,387.0 1135.5,407.5 1139.0,370.0 1141.0,378.0 1145.0,394.0 1147.5,372.0 1150.0,399.5 1153.5,391.0 1155.0,397.0 1158.0,396.0 1160.0,376.0 1161.5,385.0 1163.5,378.0 1166.5,391.0 1168.0,388.0 1170.0,397.0 1172.0,384.0 1173.5,391.0 1176.0,381.0 1178.5,394.0 1180.0,370.0 1182.5,389.0 1185.5,376.0 1187.5,398.0 1190.5,386.0 1194.0,393.0 1196.0,385.0 1199.0,380.0 1201.0,388.0 1203.5,374.0 1206.0,382.0 1209.0,377.0 1211.0,381.0 1213.5,369.5 1217.5,379.0 1217.9,379.0 1219.8,379.9 1221.7,393.2 1223.1,390.3 1224.1,394.1 1225.5,382.8 1227.4,372.4 1229.7,395.0 1233.1,385.6 1236.4,412.0 1240.1,379.0 1242.5,378.1 1244.9,374.3 1247.2,388.4 1251.0,365.3 1252.4,405.4 1254.8,389.4 1256.7,392.2 1259.0,396.0 1260.4,385.6 1264.2,384.7 1267.0,386.5 1270.8,397.9 1271.8,373.3 1274.6,364.8 1277.9,395.0 1280.3,371.4 1282.6,384.7 1285.5,385.6 1287.8,386.5 1289.7,398.8 1292.1,363.4 1294.0,383.7 1299.2,383.7" fill="none" stroke="#0000ff" stroke-width="1.35" stroke-linejoin="round"/></g><rect x="101.7" y="348.4" width="1197.7" height="83.70000000000005" fill="none" stroke="#333" stroke-width="1.1"/><text x="104.00" y="447.00" font-family="Liberation Sans" font-size="10.4" fill="#111" text-anchor="middle" textLength="23.6" lengthAdjust="spacingAndGlyphs" stroke="#111" stroke-width="0.1">3500</text><text x="162.87" y="447.00" font-family="Liberation Sans" font-size="10.4" fill="#111" text-anchor="middle" textLength="23.6" lengthAdjust="spacingAndGlyphs" stroke="#111" stroke-width="0.1">3600</text><text x="221.73" y="447.00" font-family="Liberation Sans" font-size="10.4" fill="#111" text-anchor="middle" textLength="23.6" lengthAdjust="spacingAndGlyphs" stroke="#111" stroke-width="0.1">3700</text><text x="280.60" y="447.00" font-family="Liberation Sans" font-size="10.4" fill="#111" text-anchor="middle" textLength="23.6" lengthAdjust="spacingAndGlyphs" stroke="#111" stroke-width="0.1">3800</text><text x="339.46" y="447.00" font-family="Liberation Sans" font-size="10.4" fill="#111" text-anchor="middle" textLength="23.6" lengthAdjust="spacingAndGlyphs" stroke="#111" stroke-width="0.1">3900</text><text x="398.32" y="447.00" font-family="Liberation Sans" font-size="10.4" fill="#111" text-anchor="middle" textLength="23.6" lengthAdjust="spacingAndGlyphs" stroke="#111" stroke-width="0.1">4000</text><text x="457.19" y="447.00" font-family="Liberation Sans" font-size="10.4" fill="#111" text-anchor="middle" textLength="23.6" lengthAdjust="spacingAndGlyphs" stroke="#111" stroke-width="0.1">4100</text><text x="516.06" y="447.00" font-family="Liberation Sans" font-size="10.4" fill="#111" text-anchor="middle" textLength="23.6" lengthAdjust="spacingAndGlyphs" stroke="#111" stroke-width="0.1">4200</text><text x="574.92" y="447.00" font-family="Liberation Sans" font-size="10.4" fill="#111" text-anchor="middle" textLength="23.6" lengthAdjust="spacingAndGlyphs" stroke="#111" stroke-width="0.1">4300</text><text x="633.78" y="447.00" font-family="Liberation Sans" font-size="10.4" fill="#111" text-anchor="middle" textLength="23.6" lengthAdjust="spacingAndGlyphs" stroke="#111" stroke-width="0.1">4400</text><text x="692.65" y="447.00" font-family="Liberation Sans" font-size="10.4" fill="#111" text-anchor="middle" textLength="23.6" lengthAdjust="spacingAndGlyphs" stroke="#111" stroke-width="0.1">4500</text><text x="751.51" y="447.00" font-family="Liberation Sans" font-size="10.4" fill="#111" text-anchor="middle" textLength="23.6" lengthAdjust="spacingAndGlyphs" stroke="#111" stroke-width="0.1">4600</text><text x="810.38" y="447.00" font-family="Liberation Sans" font-size="10.4" fill="#111" text-anchor="middle" textLength="23.6" lengthAdjust="spacingAndGlyphs" stroke="#111" stroke-width="0.1">4700</text><text x="869.25" y="447.00" font-family="Liberation Sans" font-size="10.4" fill="#111" text-anchor="middle" textLength="23.6" lengthAdjust="spacingAndGlyphs" stroke="#111" stroke-width="0.1">4800</text><text x="928.11" y="447.00" font-family="Liberation Sans" font-size="10.4" fill="#111" text-anchor="middle" textLength="23.6" lengthAdjust="spacingAndGlyphs" stroke="#111" stroke-width="0.1">4900</text><text x="986.98" y="447.00" font-family="Liberation Sans" font-size="10.4" fill="#111" text-anchor="middle" textLength="23.6" lengthAdjust="spacingAndGlyphs" stroke="#111" stroke-width="0.1">5000</text><text x="1045.84" y="447.00" font-family="Liberation Sans" font-size="10.4" fill="#111" text-anchor="middle" textLength="23.6" lengthAdjust="spacingAndGlyphs" stroke="#111" stroke-width="0.1">5100</text><text x="1104.70" y="447.00" font-family="Liberation Sans" font-size="10.4" fill="#111" text-anchor="middle" textLength="23.6" lengthAdjust="spacingAndGlyphs" stroke="#111" stroke-width="0.1">5200</text><text x="1163.57" y="447.00" font-family="Liberation Sans" font-size="10.4" fill="#111" text-anchor="middle" textLength="23.6" lengthAdjust="spacingAndGlyphs" stroke="#111" stroke-width="0.1">5300</text><text x="1222.43" y="447.00" font-family="Liberation Sans" font-size="10.4" fill="#111" text-anchor="middle" textLength="23.6" lengthAdjust="spacingAndGlyphs" stroke="#111" stroke-width="0.1">5400</text><text x="1281.30" y="447.00" font-family="Liberation Sans" font-size="10.4" fill="#111" text-anchor="middle" textLength="23.6" lengthAdjust="spacingAndGlyphs" stroke="#111" stroke-width="0.1">5500</text><text x="95.00" y="367.60" font-family="Liberation Sans" font-size="10.4" fill="#111" text-anchor="end" stroke="#111" stroke-width="0.1">4</text><text x="95.00" y="393.70" font-family="Liberation Sans" font-size="10.4" fill="#111" text-anchor="end" stroke="#111" stroke-width="0.1">2</text><text x="95.00" y="419.80" font-family="Liberation Sans" font-size="10.4" fill="#111" text-anchor="end" stroke="#111" stroke-width="0.1">0</text><path d="M104.00 432.1v3.5M162.87 432.1v3.5M221.73 432.1v3.5M280.60 432.1v3.5M339.46 432.1v3.5M398.32 432.1v3.5M457.19 432.1v3.5M516.06 432.1v3.5M574.92 432.1v3.5M633.78 432.1v3.5M692.65 432.1v3.5M751.51 432.1v3.5M810.38 432.1v3.5M869.25 432.1v3.5M928.11 432.1v3.5M986.98 432.1v3.5M1045.84 432.1v3.5M1104.70 432.1v3.5M1163.57 432.1v3.5M1222.43 432.1v3.5M1281.30 432.1v3.5M101.7 364.00h-3.5M101.7 390.10h-3.5M101.7 416.20h-3.5" stroke="#222" stroke-width="0.9"/><text x="104.30" y="346.00" font-family="Liberation Sans" font-size="10" fill="#111" text-anchor="start" stroke="#111" stroke-width="0.1">e</text><text x="110.20" y="341.20" font-family="Liberation Sans" font-size="7" fill="#111" text-anchor="start">−17</text><text x="122.50" y="346.00" font-family="Liberation Sans" font-size="10" fill="#111" text-anchor="start" stroke="#111" stroke-width="0.1">x2</text><text x="134.00" y="346.00" font-family="Liberation Sans" font-size="10" fill="#111" text-anchor="start" font-style="italic" stroke="#111" stroke-width="0.1">Å</text><text transform="translate(115.8,319.2) rotate(90)" font-family="Liberation Sans" font-size="10" fill="#87ceeb">MgII</text><path d="M114.8 347.6Q114.8 345.6 116.8 345.6H118.3L119.3 344.1L120.3 345.6H121.8Q123.8 345.6 123.8 347.6" fill="none" stroke="#87ceeb" stroke-width="1"/><text transform="translate(134.5,319.2) rotate(90)" font-family="Liberation Sans" font-size="10" fill="#87ceeb">MgII</text><path d="M133.5 347.6Q133.5 345.6 135.5 345.6H137.0L138.0 344.1L139.0 345.6H140.5Q142.5 345.6 142.5 347.6" fill="none" stroke="#87ceeb" stroke-width="1"/><text transform="translate(196.0,320.3) rotate(90)" font-family="Liberation Sans" font-size="10" fill="#800080">SiIV</text><path d="M195.0 347.6Q195.0 345.6 197.0 345.6H198.5L199.5 344.1L200.5 345.6H202.0Q204.0 345.6 204.0 347.6" fill="none" stroke="#800080" stroke-width="1"/><text transform="translate(221.0,322.9) rotate(90)" font-family="Liberation Sans" font-size="10" fill="#ffa500">Lyα</text><path d="M220.0 347.6Q220.0 345.6 222.0 345.6H223.5L224.5 344.1L225.5 345.6H227.0Q229.0 345.6 229.0 347.6" fill="none" stroke="#ffa500" stroke-width="1"/><text transform="translate(249.5,319.2) rotate(90)" font-family="Liberation Sans" font-size="10" fill="#008000">MgII</text><path d="M248.5 347.6Q248.5 345.6 250.5 345.6H252.0L253.0 344.1L254.0 345.6H255.5Q257.5 345.6 257.5 347.6" fill="none" stroke="#008000" stroke-width="1"/><text transform="translate(266.5,319.2) rotate(90)" font-family="Liberation Sans" font-size="10" fill="#ffa500">NV</text><path d="M265.5 347.6Q265.5 345.6 267.5 345.6H269.0L270.0 344.1L271.0 345.6H272.5Q274.5 345.6 274.5 347.6" fill="none" stroke="#ffa500" stroke-width="1"/><text transform="translate(297.5,322.4) rotate(90)" font-family="Liberation Sans" font-size="10" fill="#0000ff">OII</text><path d="M296.5 347.6Q296.5 345.6 298.5 345.6H300.0L301.0 344.1L302.0 345.6H303.5Q305.5 345.6 305.5 347.6" fill="none" stroke="#0000ff" stroke-width="1"/><text transform="translate(307.7,324.6) rotate(90)" font-family="Liberation Sans" font-size="10" fill="#ffa500">SiII</text><path d="M306.7 347.6Q306.7 345.6 308.7 345.6H310.2L311.2 344.1L312.2 345.6H313.7Q315.7 345.6 315.7 347.6" fill="none" stroke="#ffa500" stroke-width="1"/><text transform="translate(350.1,322.9) rotate(90)" font-family="Liberation Sans" font-size="10" fill="#8a2be2">Lyα</text><path d="M349.1 347.6Q349.1 345.6 351.1 345.6H352.6L353.6 344.1L354.6 345.6H356.1Q358.1 345.6 358.1 347.6" fill="none" stroke="#8a2be2" stroke-width="1"/><text transform="translate(397.4,319.2) rotate(90)" font-family="Liberation Sans" font-size="10" fill="#8a2be2">NV</text><path d="M396.4 347.6Q396.4 345.6 398.4 345.6H399.9L400.9 344.1L401.9 345.6H403.4Q405.4 345.6 405.4 347.6" fill="none" stroke="#8a2be2" stroke-width="1"/><text transform="translate(429.0,319.7) rotate(90)" font-family="Liberation Sans" font-size="10" fill="#800080">CIV</text><path d="M428.0 347.6Q428.0 345.6 430.0 345.6H431.5L432.5 344.1L433.5 345.6H435.0Q437.0 345.6 437.0 347.6" fill="none" stroke="#800080" stroke-width="1"/><text transform="translate(440.3,324.4) rotate(90)" font-family="Liberation Sans" font-size="10" fill="#8a2be2">SiII</text><path d="M439.3 347.6Q439.3 345.6 441.3 345.6H442.8L443.8 344.1L444.8 345.6H446.3Q448.3 345.6 448.3 347.6" fill="none" stroke="#8a2be2" stroke-width="1"/><text transform="translate(484.2,323.4) rotate(90)" font-family="Liberation Sans" font-size="10" fill="#ff00ff">CII</text><path d="M483.2 347.6Q483.2 345.6 485.2 345.6H486.7L487.7 344.1L488.7 345.6H490.2Q492.2 345.6 492.2 347.6" fill="none" stroke="#ff00ff" stroke-width="1"/><text transform="translate(544.9,319.2) rotate(90)" font-family="Liberation Sans" font-size="10" fill="#ff0000">OVI</text><path d="M543.9 347.6Q543.9 345.6 545.9 345.6H547.4L548.4 344.1L549.4 345.6H550.9Q552.9 345.6 552.9 347.6" fill="none" stroke="#ff0000" stroke-width="1"/><text transform="translate(569.5,320.3) rotate(90)" font-family="Liberation Sans" font-size="10" fill="#800080">HeII</text><path d="M568.5 347.6Q568.5 345.6 570.5 345.6H572.0L573.0 344.1L574.0 345.6H575.5Q577.5 345.6 577.5 347.6" fill="none" stroke="#800080" stroke-width="1"/><text transform="translate(615.6,327.2) rotate(90)" font-family="Liberation Sans" font-size="10" fill="#00ff00">Hγ</text><path d="M614.6 347.6Q614.6 345.6 616.6 345.6H618.1L619.1 344.1L620.1 345.6H621.6Q623.6 345.6 623.6 347.6" fill="none" stroke="#00ff00" stroke-width="1"/><text transform="translate(667.2,327.2) rotate(90)" font-family="Liberation Sans" font-size="10" fill="#0000ff">Hγ</text><path d="M666.2 347.6Q666.2 345.6 668.2 345.6H669.7L670.7 344.1L671.7 345.6H673.2Q675.2 345.6 675.2 347.6" fill="none" stroke="#0000ff" stroke-width="1"/><text transform="translate(676.9,327.8) rotate(90)" font-family="Liberation Sans" font-size="10" fill="#4169e1">Hζ</text><path d="M675.9 347.6Q675.9 345.6 677.9 345.6H679.4L680.4 344.1L681.4 345.6H682.9Q684.9 345.6 684.9 347.6" fill="none" stroke="#4169e1" stroke-width="1"/><text transform="translate(695.6,320.3) rotate(90)" font-family="Liberation Sans" font-size="10" fill="#8a2be2">SiIV</text><path d="M694.6 347.6Q694.6 345.6 696.6 345.6H698.1L699.1 344.1L700.1 345.6H701.6Q703.6 345.6 703.6 347.6" fill="none" stroke="#8a2be2" stroke-width="1"/><text transform="translate(707.7,306.9) rotate(90)" font-family="Liberation Sans" font-size="10" fill="#4169e1">(K)CaII</text><path d="M706.7 347.6Q706.7 345.6 708.7 345.6H710.2L711.2 344.1L712.2 345.6H713.7Q715.7 345.6 715.7 347.6" fill="none" stroke="#4169e1" stroke-width="1"/><text transform="translate(731.0,317.6) rotate(90)" font-family="Liberation Sans" font-size="10" fill="#4169e1">NeIII</text><path d="M730.0 347.6Q730.0 345.6 732.0 345.6H733.5L734.5 344.1L735.5 345.6H737.0Q739.0 345.6 739.0 347.6" fill="none" stroke="#4169e1" stroke-width="1"/><text transform="translate(805.3,322.4) rotate(90)" font-family="Liberation Sans" font-size="10" fill="#87ceeb">OII</text><path d="M804.3 347.6Q804.3 345.6 806.3 345.6H807.8L808.8 344.1L809.8 345.6H811.3Q813.3 345.6 813.3 347.6" fill="none" stroke="#87ceeb" stroke-width="1"/><text transform="translate(820.3,319.7) rotate(90)" font-family="Liberation Sans" font-size="10" fill="#ffa500">CIV</text><path d="M819.3 347.6Q819.3 345.6 821.3 345.6H822.8L823.8 344.1L824.8 345.6H826.3Q828.3 345.6 828.3 347.6" fill="none" stroke="#ffa500" stroke-width="1"/><text transform="translate(829.9,322.4) rotate(90)" font-family="Liberation Sans" font-size="10" fill="#87ceeb">OII</text><path d="M828.9 347.6Q828.9 345.6 830.9 345.6H832.4L833.4 344.1L834.4 345.6H835.9Q837.9 345.6 837.9 347.6" fill="none" stroke="#87ceeb" stroke-width="1"/><text transform="translate(925.3,327.2) rotate(90)" font-family="Liberation Sans" font-size="10" fill="#00ff00">Hβ</text><path d="M924.3 347.6Q924.3 345.6 926.3 345.6H927.8L928.8 344.1L929.8 345.6H931.3Q933.3 345.6 933.3 347.6" fill="none" stroke="#00ff00" stroke-width="1"/><text transform="translate(949.5,327.8) rotate(90)" font-family="Liberation Sans" font-size="10" fill="#87ceeb">Hζ</text><path d="M948.5 347.6Q948.5 345.6 950.5 345.6H952.0L953.0 344.1L954.0 345.6H955.5Q957.5 345.6 957.5 347.6" fill="none" stroke="#87ceeb" stroke-width="1"/><text transform="translate(1012.2,322.4) rotate(90)" font-family="Liberation Sans" font-size="10" fill="#00ff00">OIII</text><path d="M1011.2 347.6Q1011.2 345.6 1013.2 345.6H1014.7L1015.7 344.1L1016.7 345.6H1018.2Q1020.2 345.6 1020.2 347.6" fill="none" stroke="#00ff00" stroke-width="1"/><text transform="translate(1044.4,319.2) rotate(90)" font-family="Liberation Sans" font-size="10" fill="#ff0000">NV</text><path d="M1043.4 347.6Q1043.4 345.6 1045.4 345.6H1046.9L1047.9 344.1L1048.9 345.6H1050.4Q1052.4 345.6 1052.4 347.6" fill="none" stroke="#ff0000" stroke-width="1"/><text transform="translate(1071.7,322.4) rotate(90)" font-family="Liberation Sans" font-size="10" fill="#0000ff">OIII</text><path d="M1070.7 347.6Q1070.7 345.6 1072.7 345.6H1074.2L1075.2 344.1L1076.2 345.6H1077.7Q1079.7 345.6 1079.7 347.6" fill="none" stroke="#0000ff" stroke-width="1"/><text transform="translate(1098.7,324.0) rotate(90)" font-family="Liberation Sans" font-size="10" fill="#ff0000">SiII</text><path d="M1097.7 347.6Q1097.7 345.6 1099.7 345.6H1101.2L1102.2 344.1L1103.2 345.6H1104.7Q1106.7 345.6 1106.7 347.6" fill="none" stroke="#ff0000" stroke-width="1"/><text transform="translate(1156.5,320.3) rotate(90)" font-family="Liberation Sans" font-size="10" fill="#8a2be2">HeII</text><path d="M1155.5 347.6Q1155.5 345.6 1157.5 345.6H1159.0L1160.0 344.1L1161.0 345.6H1162.5Q1164.5 345.6 1164.5 347.6" fill="none" stroke="#8a2be2" stroke-width="1"/><text transform="translate(1259.2,327.2) rotate(90)" font-family="Liberation Sans" font-size="10" fill="#87ceeb">Hγ</text><path d="M1258.2 347.6Q1258.2 345.6 1260.2 345.6H1261.7L1262.7 344.1L1263.7 345.6H1265.2Q1267.2 345.6 1267.2 347.6" fill="none" stroke="#87ceeb" stroke-width="1"/><text transform="translate(1288.1,327.2) rotate(90)" font-family="Liberation Sans" font-size="10" fill="#87ceeb">Hγ</text><path d="M1287.1 347.6Q1287.1 345.6 1289.1 345.6H1290.6L1291.6 344.1L1292.6 345.6H1294.1Q1296.1 345.6 1296.1 347.6" fill="none" stroke="#87ceeb" stroke-width="1"/><text transform="translate(252.5,280.6) rotate(90)" font-family="Liberation Sans" font-size="10" fill="#00ff00">OII</text><path d="M251.5 305.6Q251.5 303.6 253.5 303.6H255.0L256.0 302.1L257.0 303.6H258.5Q260.5 303.6 260.5 305.6" fill="none" stroke="#00ff00" stroke-width="1"/><text transform="translate(547.6,279.0) rotate(90)" font-family="Liberation Sans" font-size="10" fill="#ffa500">SiIV</text><path d="M546.6 305.6Q546.6 303.6 548.6 303.6H550.1L551.1 302.1L552.1 303.6H553.6Q555.6 303.6 555.6 305.6" fill="none" stroke="#ffa500" stroke-width="1"/><text transform="translate(568.5,280.6) rotate(90)" font-family="Liberation Sans" font-size="10" fill="#4169e1">OII</text><path d="M567.5 305.6Q567.5 303.6 569.5 303.6H571.0L572.0 302.1L573.0 303.6H574.5Q576.5 303.6 576.5 305.6" fill="none" stroke="#4169e1" stroke-width="1"/><text transform="translate(1042.2,280.6) rotate(90)" font-family="Liberation Sans" font-size="10" fill="#0000ff">OIII</text><path d="M1041.2 305.6Q1041.2 303.6 1043.2 303.6H1044.7L1045.7 302.1L1046.7 303.6H1048.2Q1050.2 303.6 1050.2 305.6" fill="none" stroke="#0000ff" stroke-width="1"/><rect x="403.3" y="450" width="17" height="6" fill="#ff0000"/><text x="427.30" y="456.20" font-family="Liberation Sans" font-size="8.4" fill="#222" text-anchor="start">Lyα</text><rect x="457.3" y="450" width="17" height="6" fill="#008000"/><text x="481.30" y="456.20" font-family="Liberation Sans" font-size="8.4" fill="#222" text-anchor="start">OII</text><rect x="510.3" y="450" width="17" height="6" fill="#00ff00"/><text x="534.30" y="456.20" font-family="Liberation Sans" font-size="8.4" fill="#222" text-anchor="start">OIII</text><rect x="562.3" y="450" width="17" height="6" fill="#8a2be2"/><text x="586.30" y="456.20" font-family="Liberation Sans" font-size="8.4" fill="#222" text-anchor="start">CIV</text><rect x="616.0" y="450" width="17" height="6" fill="#800080"/><text x="640.00" y="456.20" font-family="Liberation Sans" font-size="8.4" fill="#222" text-anchor="start">CIII</text><rect x="668.8" y="450" width="17" height="6" fill="#ff00ff"/><text x="692.80" y="456.20" font-family="Liberation Sans" font-size="8.4" fill="#222" text-anchor="start">MgII</text><rect x="724.6" y="450" width="17" height="6" fill="#0000ff"/><text x="748.60" y="456.20" font-family="Liberation Sans" font-size="8.4" fill="#222" text-anchor="start">Hβ</text><rect x="775.2" y="450" width="17" height="6" fill="#4169e1"/><text x="799.20" y="456.20" font-family="Liberation Sans" font-size="8.4" fill="#222" text-anchor="start">Hγ</text><rect x="825.6" y="450" width="17" height="6" fill="#ffa500"/><text x="849.60" y="456.20" font-family="Liberation Sans" font-size="8.4" fill="#222" text-anchor="start">HeII</text><rect x="880.0" y="450" width="17" height="6" fill="#87ceeb"/><text x="904.00" y="456.20" font-family="Liberation Sans" font-size="8.4" fill="#222" text-anchor="start">(K)CaII</text><rect x="945.7" y="450" width="17" height="6" fill="#87ceeb"/><text x="969.70" y="456.20" font-family="Liberation Sans" font-size="8.4" fill="#222" text-anchor="start">(H)CaII</text><text transform="translate(70.50,498.80) scale(0.9229,1)" font-family="Liberation Mono" font-size="14.0" fill="#000" stroke="#000" stroke-width="0.06" text-anchor="start">HSC-DEX : Possible Matches = 1 (within +/- 3")  P(LAE)/P(OII):</text><text x="562.20" y="498.80" font-family="Liberation Sans" font-size="13" fill="#000" text-anchor="start" textLength="35.8" lengthAdjust="spacingAndGlyphs" stroke="#000" stroke-width="0.1">0.015</text><text x="606.50" y="493.20" font-family="Liberation Sans" font-size="9.2" fill="#000" text-anchor="start" textLength="25.7" lengthAdjust="spacingAndGlyphs" stroke="#000" stroke-width="0.1">0.025</text><text x="606.50" y="501.60" font-family="Liberation Sans" font-size="9.2" fill="#000" text-anchor="start" textLength="25.7" lengthAdjust="spacingAndGlyphs" stroke="#000" stroke-width="0.1">0.008</text><text transform="translate(636.50,498.80) scale(0.9229,1)" font-family="Liberation Mono" font-size="14.0" fill="#000" stroke="#000" stroke-width="0.06" text-anchor="start">(r)</text><g shape-rendering="crispEdges" filter="url(#blur08)"><rect x="70.3" y="532.8" width="147.8" height="147.8" fill="#d3d3d3"/><path fill="#dedede" d="M70.3 532.8h5v2.5h-5zM80.3 532.8h2.5v2.5h-2.5zM105.3 532.8h5v2.5h-5zM130.3 532.8h5v2.5h-5zM157.8 532.8h2.5v2.5h-2.5zM167.8 532.8h2.5v2.5h-2.5zM172.8 532.8h2.5v2.5h-2.5zM185.3 532.8h2.5v2.5h-2.5zM202.8 532.8h5v2.5h-5zM215.3 532.8h2.5v2.5h-2.5zM70.3 535.3h2.5v2.5h-2.5zM85.3 535.3h2.5v2.5h-2.5zM97.8 535.3h2.5v2.5h-2.5zM105.3 535.3h5v2.5h-5zM130.3 535.3h5v2.5h-5zM157.8 535.3h2.5v2.5h-2.5zM162.8 535.3h2.5v2.5h-2.5zM172.8 535.3h2.5v2.5h-2.5zM185.3 535.3h2.5v2.5h-2.5zM190.3 535.3h2.5v2.5h-2.5zM197.8 535.3h5v2.5h-5zM205.3 535.3h2.5v2.5h-2.5zM70.3 537.8h2.5v2.5h-2.5zM77.8 537.8h2.5v2.5h-2.5zM107.8 537.8h5v2.5h-5zM130.3 537.8h2.5v2.5h-2.5zM135.3 537.8h2.5v2.5h-2.5zM152.8 537.8h5v2.5h-5zM160.3 537.8h2.5v2.5h-2.5zM182.8 537.8h5v2.5h-5zM200.3 537.8h2.5v2.5h-2.5zM70.3 540.3h2.5v2.5h-2.5zM87.8 540.3h2.5v2.5h-2.5zM92.8 540.3h2.5v2.5h-2.5zM110.3 540.3h2.5v2.5h-2.5zM117.8 540.3h5v2.5h-5zM130.3 540.3h2.5v2.5h-2.5zM137.8 540.3h2.5v2.5h-2.5zM177.8 540.3h2.5v2.5h-2.5zM182.8 540.3h5v2.5h-5zM195.3 540.3h2.5v2.5h-2.5zM217.8 540.3h0.3v2.5h-0.3zM75.3 542.8h2.5v2.5h-2.5zM85.3 542.8h2.5v2.5h-2.5zM92.8 542.8h2.5v2.5h-2.5zM100.3 542.8h2.5v2.5h-2.5zM110.3 542.8h5v2.5h-5zM132.8 542.8h2.5v2.5h-2.5zM137.8 542.8h2.5v2.5h-2.5zM145.3 542.8h2.5v2.5h-2.5zM150.3 542.8h7.5v2.5h-7.5zM175.3 542.8h2.5v2.5h-2.5zM185.3 542.8h5v2.5h-5zM192.8 542.8h2.5v2.5h-2.5zM202.8 542.8h5v2.5h-5zM210.3 542.8h2.5v2.5h-2.5zM110.3 545.3h2.5v2.5h-2.5zM122.8 545.3h2.5v2.5h-2.5zM135.3 545.3h5v2.5h-5zM145.3 545.3h2.5v2.5h-2.5zM150.3 545.3h2.5v2.5h-2.5zM160.3 545.3h2.5v2.5h-2.5zM180.3 545.3h2.5v2.5h-2.5zM192.8 545.3h5v2.5h-5zM202.8 545.3h2.5v2.5h-2.5zM70.3 547.8h10v2.5h-10zM90.3 547.8h2.5v2.5h-2.5zM102.8 547.8h2.5v2.5h-2.5zM107.8 547.8h2.5v2.5h-2.5zM112.8 547.8h7.5v2.5h-7.5zM122.8 547.8h5v2.5h-5zM142.8 547.8h2.5v2.5h-2.5zM160.3 547.8h2.5v2.5h-2.5zM177.8 547.8h2.5v2.5h-2.5zM190.3 547.8h2.5v2.5h-2.5zM202.8 547.8h2.5v2.5h-2.5zM212.8 547.8h5.3v2.5h-5.3zM72.8 550.3h5v2.5h-5zM87.8 550.3h2.5v2.5h-2.5zM92.8 550.3h2.5v2.5h-2.5zM97.8 550.3h2.5v2.5h-2.5zM125.3 550.3h2.5v2.5h-2.5zM132.8 550.3h2.5v2.5h-2.5zM160.3 550.3h2.5v2.5h-2.5zM165.3 550.3h2.5v2.5h-2.5zM172.8 550.3h7.5v2.5h-7.5zM210.3 550.3h2.5v2.5h-2.5zM77.8 552.8h5v2.5h-5zM105.3 552.8h2.5v2.5h-2.5zM160.3 552.8h5v2.5h-5zM167.8 552.8h5v2.5h-5zM205.3 552.8h2.5v2.5h-2.5zM215.3 552.8h2.5v2.5h-2.5zM70.3 555.3h2.5v2.5h-2.5zM75.3 555.3h5v2.5h-5zM112.8 555.3h2.5v2.5h-2.5zM120.3 555.3h5v2.5h-5zM130.3 555.3h2.5v2.5h-2.5zM150.3 555.3h2.5v2.5h-2.5zM167.8 555.3h2.5v2.5h-2.5zM177.8 555.3h2.5v2.5h-2.5zM192.8 555.3h2.5v2.5h-2.5zM205.3 555.3h2.5v2.5h-2.5zM212.8 555.3h2.5v2.5h-2.5zM217.8 555.3h0.3v2.5h-0.3zM97.8 557.8h2.5v2.5h-2.5zM102.8 557.8h2.5v2.5h-2.5zM107.8 557.8h5v2.5h-5zM115.3 557.8h2.5v2.5h-2.5zM135.3 557.8h2.5v2.5h-2.5zM152.8 557.8h2.5v2.5h-2.5zM157.8 557.8h2.5v2.5h-2.5zM165.3 557.8h2.5v2.5h-2.5zM170.3 557.8h2.5v2.5h-2.5zM177.8 557.8h2.5v2.5h-2.5zM187.8 557.8h2.5v2.5h-2.5zM200.3 557.8h2.5v2.5h-2.5zM205.3 557.8h5v2.5h-5zM212.8 557.8h2.5v2.5h-2.5zM70.3 560.3h5v2.5h-5zM80.3 560.3h7.5v2.5h-7.5zM110.3 560.3h2.5v2.5h-2.5zM145.3 560.3h2.5v2.5h-2.5zM155.3 560.3h5v2.5h-5zM187.8 560.3h2.5v2.5h-2.5zM197.8 560.3h2.5v2.5h-2.5zM202.8 560.3h2.5v2.5h-2.5zM212.8 560.3h2.5v2.5h-2.5zM85.3 562.8h2.5v2.5h-2.5zM100.3 562.8h2.5v2.5h-2.5zM152.8 562.8h2.5v2.5h-2.5zM165.3 562.8h2.5v2.5h-2.5zM180.3 562.8h5v2.5h-5zM210.3 562.8h2.5v2.5h-2.5zM97.8 565.3h2.5v2.5h-2.5zM102.8 565.3h2.5v2.5h-2.5zM115.3 565.3h2.5v2.5h-2.5zM142.8 565.3h5v2.5h-5zM155.3 565.3h2.5v2.5h-2.5zM170.3 565.3h2.5v2.5h-2.5zM187.8 565.3h2.5v2.5h-2.5zM195.3 565.3h2.5v2.5h-2.5zM207.8 565.3h2.5v2.5h-2.5zM212.8 565.3h2.5v2.5h-2.5zM217.8 565.3h0.3v2.5h-0.3zM105.3 567.8h2.5v2.5h-2.5zM110.3 567.8h2.5v2.5h-2.5zM142.8 567.8h2.5v2.5h-2.5zM157.8 567.8h2.5v2.5h-2.5zM170.3 567.8h2.5v2.5h-2.5zM177.8 567.8h5v2.5h-5zM185.3 567.8h2.5v2.5h-2.5zM197.8 567.8h2.5v2.5h-2.5zM215.3 567.8h2.5v2.5h-2.5zM70.3 570.3h2.5v2.5h-2.5zM162.8 570.3h2.5v2.5h-2.5zM167.8 570.3h2.5v2.5h-2.5zM180.3 570.3h2.5v2.5h-2.5zM195.3 570.3h2.5v2.5h-2.5zM72.8 572.8h2.5v2.5h-2.5zM90.3 572.8h2.5v2.5h-2.5zM97.8 572.8h2.5v2.5h-2.5zM155.3 572.8h2.5v2.5h-2.5zM162.8 572.8h2.5v2.5h-2.5zM172.8 572.8h5v2.5h-5zM180.3 572.8h2.5v2.5h-2.5zM200.3 572.8h2.5v2.5h-2.5zM210.3 572.8h2.5v2.5h-2.5zM217.8 572.8h0.3v2.5h-0.3zM85.3 575.3h2.5v2.5h-2.5zM97.8 575.3h5v2.5h-5zM152.8 575.3h5v2.5h-5zM195.3 575.3h2.5v2.5h-2.5zM202.8 575.3h2.5v2.5h-2.5zM210.3 575.3h2.5v2.5h-2.5zM82.8 577.8h2.5v2.5h-2.5zM105.3 577.8h2.5v2.5h-2.5zM175.3 577.8h5v2.5h-5zM192.8 577.8h2.5v2.5h-2.5zM210.3 577.8h2.5v2.5h-2.5zM80.3 580.3h2.5v2.5h-2.5zM155.3 580.3h2.5v2.5h-2.5zM160.3 580.3h7.5v2.5h-7.5zM175.3 580.3h2.5v2.5h-2.5zM182.8 580.3h2.5v2.5h-2.5zM195.3 580.3h5v2.5h-5zM217.8 580.3h0.3v2.5h-0.3zM72.8 582.8h2.5v2.5h-2.5zM87.8 582.8h5v2.5h-5zM95.3 582.8h2.5v2.5h-2.5zM162.8 582.8h2.5v2.5h-2.5zM175.3 582.8h2.5v2.5h-2.5zM180.3 582.8h2.5v2.5h-2.5zM187.8 582.8h2.5v2.5h-2.5zM195.3 582.8h5v2.5h-5zM217.8 582.8h0.3v2.5h-0.3zM77.8 585.3h2.5v2.5h-2.5zM85.3 585.3h2.5v2.5h-2.5zM90.3 585.3h2.5v2.5h-2.5zM162.8 585.3h2.5v2.5h-2.5zM172.8 585.3h2.5v2.5h-2.5zM177.8 585.3h5v2.5h-5zM197.8 585.3h2.5v2.5h-2.5zM202.8 585.3h2.5v2.5h-2.5zM217.8 585.3h0.3v2.5h-0.3zM90.3 587.8h2.5v2.5h-2.5zM177.8 587.8h2.5v2.5h-2.5zM190.3 587.8h5v2.5h-5zM197.8 587.8h2.5v2.5h-2.5zM207.8 587.8h7.5v2.5h-7.5zM70.3 590.3h2.5v2.5h-2.5zM75.3 590.3h5v2.5h-5zM82.8 590.3h2.5v2.5h-2.5zM100.3 590.3h2.5v2.5h-2.5zM162.8 590.3h2.5v2.5h-2.5zM185.3 590.3h5v2.5h-5zM192.8 590.3h2.5v2.5h-2.5zM217.8 590.3h0.3v2.5h-0.3zM82.8 592.8h5v2.5h-5zM177.8 592.8h2.5v2.5h-2.5zM185.3 592.8h2.5v2.5h-2.5zM197.8 592.8h5v2.5h-5zM207.8 592.8h2.5v2.5h-2.5zM75.3 595.3h2.5v2.5h-2.5zM90.3 595.3h2.5v2.5h-2.5zM160.3 595.3h2.5v2.5h-2.5zM177.8 595.3h2.5v2.5h-2.5zM187.8 595.3h2.5v2.5h-2.5zM90.3 597.8h2.5v2.5h-2.5zM162.8 597.8h2.5v2.5h-2.5zM167.8 597.8h5v2.5h-5zM187.8 597.8h2.5v2.5h-2.5zM217.8 597.8h0.3v2.5h-0.3zM75.3 600.3h2.5v2.5h-2.5zM80.3 600.3h2.5v2.5h-2.5zM95.3 600.3h5v2.5h-5zM102.8 600.3h2.5v2.5h-2.5zM167.8 600.3h2.5v2.5h-2.5zM180.3 600.3h2.5v2.5h-2.5zM215.3 600.3h2.8v2.5h-2.8zM107.8 602.8h2.5v2.5h-2.5zM177.8 602.8h2.5v2.5h-2.5zM182.8 602.8h7.5v2.5h-7.5zM200.3 602.8h2.5v2.5h-2.5zM82.8 605.3h2.5v2.5h-2.5zM92.8 605.3h7.5v2.5h-7.5zM102.8 605.3h2.5v2.5h-2.5zM180.3 605.3h2.5v2.5h-2.5zM190.3 605.3h2.5v2.5h-2.5zM195.3 605.3h2.5v2.5h-2.5zM207.8 605.3h2.5v2.5h-2.5zM115.3 607.8h2.5v2.5h-2.5zM152.8 607.8h2.5v2.5h-2.5zM157.8 607.8h2.5v2.5h-2.5zM167.8 607.8h2.5v2.5h-2.5zM172.8 607.8h2.5v2.5h-2.5zM177.8 607.8h2.5v2.5h-2.5zM192.8 607.8h2.5v2.5h-2.5zM200.3 607.8h5v2.5h-5zM207.8 607.8h2.5v2.5h-2.5zM70.3 610.3h2.5v2.5h-2.5zM82.8 610.3h2.5v2.5h-2.5zM95.3 610.3h2.5v2.5h-2.5zM107.8 610.3h2.5v2.5h-2.5zM147.8 610.3h2.5v2.5h-2.5zM167.8 610.3h2.5v2.5h-2.5zM172.8 610.3h2.5v2.5h-2.5zM187.8 610.3h5v2.5h-5zM215.3 610.3h2.8v2.5h-2.8zM80.3 612.8h2.5v2.5h-2.5zM90.3 612.8h2.5v2.5h-2.5zM97.8 612.8h2.5v2.5h-2.5zM110.3 612.8h2.5v2.5h-2.5zM117.8 612.8h2.5v2.5h-2.5zM147.8 612.8h2.5v2.5h-2.5zM162.8 612.8h2.5v2.5h-2.5zM190.3 612.8h2.5v2.5h-2.5zM197.8 612.8h2.5v2.5h-2.5zM210.3 612.8h2.5v2.5h-2.5zM77.8 615.3h2.5v2.5h-2.5zM87.8 615.3h2.5v2.5h-2.5zM107.8 615.3h5v2.5h-5zM117.8 615.3h5v2.5h-5zM127.8 615.3h2.5v2.5h-2.5zM152.8 615.3h2.5v2.5h-2.5zM170.3 615.3h2.5v2.5h-2.5zM180.3 615.3h5v2.5h-5zM195.3 615.3h5v2.5h-5zM217.8 615.3h0.3v2.5h-0.3zM80.3 617.8h2.5v2.5h-2.5zM102.8 617.8h7.5v2.5h-7.5zM115.3 617.8h5v2.5h-5zM122.8 617.8h2.5v2.5h-2.5zM132.8 617.8h2.5v2.5h-2.5zM150.3 617.8h2.5v2.5h-2.5zM157.8 617.8h2.5v2.5h-2.5zM165.3 617.8h2.5v2.5h-2.5zM172.8 617.8h2.5v2.5h-2.5zM197.8 617.8h2.5v2.5h-2.5zM70.3 620.3h2.5v2.5h-2.5zM75.3 620.3h2.5v2.5h-2.5zM80.3 620.3h2.5v2.5h-2.5zM87.8 620.3h2.5v2.5h-2.5zM105.3 620.3h2.5v2.5h-2.5zM122.8 620.3h2.5v2.5h-2.5zM127.8 620.3h2.5v2.5h-2.5zM147.8 620.3h2.5v2.5h-2.5zM152.8 620.3h2.5v2.5h-2.5zM175.3 620.3h2.5v2.5h-2.5zM180.3 620.3h2.5v2.5h-2.5zM195.3 620.3h2.5v2.5h-2.5zM202.8 620.3h2.5v2.5h-2.5zM207.8 620.3h2.5v2.5h-2.5zM217.8 620.3h0.3v2.5h-0.3zM70.3 622.8h2.5v2.5h-2.5zM87.8 622.8h2.5v2.5h-2.5zM97.8 622.8h2.5v2.5h-2.5zM107.8 622.8h2.5v2.5h-2.5zM122.8 622.8h2.5v2.5h-2.5zM132.8 622.8h2.5v2.5h-2.5zM137.8 622.8h5v2.5h-5zM172.8 622.8h2.5v2.5h-2.5zM177.8 622.8h5v2.5h-5zM187.8 622.8h2.5v2.5h-2.5zM195.3 622.8h5v2.5h-5zM207.8 622.8h5v2.5h-5zM215.3 622.8h2.5v2.5h-2.5zM72.8 625.3h2.5v2.5h-2.5zM77.8 625.3h2.5v2.5h-2.5zM100.3 625.3h5v2.5h-5zM127.8 625.3h2.5v2.5h-2.5zM145.3 625.3h2.5v2.5h-2.5zM150.3 625.3h5v2.5h-5zM180.3 625.3h2.5v2.5h-2.5zM190.3 625.3h5v2.5h-5zM205.3 625.3h2.5v2.5h-2.5zM210.3 625.3h2.5v2.5h-2.5zM215.3 625.3h2.5v2.5h-2.5zM75.3 627.8h2.5v2.5h-2.5zM110.3 627.8h5v2.5h-5zM117.8 627.8h2.5v2.5h-2.5zM122.8 627.8h2.5v2.5h-2.5zM145.3 627.8h2.5v2.5h-2.5zM155.3 627.8h2.5v2.5h-2.5zM162.8 627.8h2.5v2.5h-2.5zM180.3 627.8h2.5v2.5h-2.5zM205.3 627.8h2.5v2.5h-2.5zM212.8 627.8h2.5v2.5h-2.5zM87.8 630.3h2.5v2.5h-2.5zM92.8 630.3h2.5v2.5h-2.5zM97.8 630.3h5v2.5h-5zM110.3 630.3h2.5v2.5h-2.5zM117.8 630.3h2.5v2.5h-2.5zM125.3 630.3h2.5v2.5h-2.5zM140.3 630.3h10v2.5h-10zM162.8 630.3h2.5v2.5h-2.5zM185.3 630.3h2.5v2.5h-2.5zM195.3 630.3h2.5v2.5h-2.5zM70.3 632.8h5v2.5h-5zM77.8 632.8h2.5v2.5h-2.5zM90.3 632.8h2.5v2.5h-2.5zM100.3 632.8h2.5v2.5h-2.5zM105.3 632.8h7.5v2.5h-7.5zM137.8 632.8h2.5v2.5h-2.5zM145.3 632.8h2.5v2.5h-2.5zM155.3 632.8h5v2.5h-5zM197.8 632.8h2.5v2.5h-2.5zM202.8 632.8h2.5v2.5h-2.5zM72.8 635.3h2.5v2.5h-2.5zM82.8 635.3h2.5v2.5h-2.5zM90.3 635.3h2.5v2.5h-2.5zM107.8 635.3h2.5v2.5h-2.5zM112.8 635.3h2.5v2.5h-2.5zM122.8 635.3h2.5v2.5h-2.5zM127.8 635.3h2.5v2.5h-2.5zM135.3 635.3h2.5v2.5h-2.5zM140.3 635.3h2.5v2.5h-2.5zM167.8 635.3h5v2.5h-5zM207.8 635.3h5v2.5h-5zM215.3 635.3h2.5v2.5h-2.5zM75.3 637.8h2.5v2.5h-2.5zM80.3 637.8h2.5v2.5h-2.5zM95.3 637.8h2.5v2.5h-2.5zM105.3 637.8h2.5v2.5h-2.5zM115.3 637.8h2.5v2.5h-2.5zM125.3 637.8h2.5v2.5h-2.5zM135.3 637.8h2.5v2.5h-2.5zM142.8 637.8h2.5v2.5h-2.5zM165.3 637.8h2.5v2.5h-2.5zM170.3 637.8h2.5v2.5h-2.5zM177.8 637.8h2.5v2.5h-2.5zM185.3 637.8h2.5v2.5h-2.5zM197.8 637.8h2.5v2.5h-2.5zM210.3 637.8h7.5v2.5h-7.5zM85.3 640.3h2.5v2.5h-2.5zM102.8 640.3h2.5v2.5h-2.5zM115.3 640.3h5v2.5h-5zM122.8 640.3h2.5v2.5h-2.5zM142.8 640.3h2.5v2.5h-2.5zM147.8 640.3h2.5v2.5h-2.5zM157.8 640.3h2.5v2.5h-2.5zM162.8 640.3h2.5v2.5h-2.5zM177.8 640.3h5v2.5h-5zM205.3 640.3h2.5v2.5h-2.5zM72.8 642.8h2.5v2.5h-2.5zM140.3 642.8h2.5v2.5h-2.5zM162.8 642.8h2.5v2.5h-2.5zM167.8 642.8h2.5v2.5h-2.5zM187.8 642.8h5v2.5h-5zM195.3 642.8h2.5v2.5h-2.5zM202.8 642.8h2.5v2.5h-2.5zM207.8 642.8h2.5v2.5h-2.5zM75.3 645.3h2.5v2.5h-2.5zM80.3 645.3h2.5v2.5h-2.5zM97.8 645.3h5v2.5h-5zM107.8 645.3h2.5v2.5h-2.5zM115.3 645.3h2.5v2.5h-2.5zM125.3 645.3h2.5v2.5h-2.5zM160.3 645.3h2.5v2.5h-2.5zM170.3 645.3h7.5v2.5h-7.5zM180.3 645.3h2.5v2.5h-2.5zM185.3 645.3h2.5v2.5h-2.5zM205.3 645.3h2.5v2.5h-2.5zM87.8 647.8h2.5v2.5h-2.5zM100.3 647.8h2.5v2.5h-2.5zM112.8 647.8h2.5v2.5h-2.5zM120.3 647.8h2.5v2.5h-2.5zM187.8 647.8h2.5v2.5h-2.5zM207.8 647.8h2.5v2.5h-2.5zM75.3 650.3h2.5v2.5h-2.5zM87.8 650.3h2.5v2.5h-2.5zM112.8 650.3h2.5v2.5h-2.5zM127.8 650.3h5v2.5h-5zM137.8 650.3h2.5v2.5h-2.5zM170.3 650.3h2.5v2.5h-2.5zM175.3 650.3h2.5v2.5h-2.5zM180.3 650.3h2.5v2.5h-2.5zM192.8 650.3h2.5v2.5h-2.5zM215.3 650.3h2.5v2.5h-2.5zM82.8 652.8h2.5v2.5h-2.5zM92.8 652.8h2.5v2.5h-2.5zM120.3 652.8h2.5v2.5h-2.5zM135.3 652.8h2.5v2.5h-2.5zM170.3 652.8h2.5v2.5h-2.5zM175.3 652.8h2.5v2.5h-2.5zM180.3 652.8h2.5v2.5h-2.5zM190.3 652.8h5v2.5h-5zM200.3 652.8h2.5v2.5h-2.5zM80.3 655.3h2.5v2.5h-2.5zM102.8 655.3h5v2.5h-5zM122.8 655.3h2.5v2.5h-2.5zM135.3 655.3h2.5v2.5h-2.5zM155.3 655.3h5v2.5h-5zM197.8 655.3h5v2.5h-5zM212.8 655.3h2.5v2.5h-2.5zM80.3 657.8h2.5v2.5h-2.5zM92.8 657.8h2.5v2.5h-2.5zM127.8 657.8h2.5v2.5h-2.5zM145.3 657.8h2.5v2.5h-2.5zM160.3 657.8h2.5v2.5h-2.5zM167.8 657.8h2.5v2.5h-2.5zM175.3 657.8h2.5v2.5h-2.5zM180.3 657.8h2.5v2.5h-2.5zM207.8 657.8h2.5v2.5h-2.5zM70.3 660.3h2.5v2.5h-2.5zM90.3 660.3h2.5v2.5h-2.5zM112.8 660.3h2.5v2.5h-2.5zM122.8 660.3h5v2.5h-5zM130.3 660.3h2.5v2.5h-2.5zM145.3 660.3h2.5v2.5h-2.5zM152.8 660.3h2.5v2.5h-2.5zM157.8 660.3h2.5v2.5h-2.5zM162.8 660.3h2.5v2.5h-2.5zM185.3 660.3h2.5v2.5h-2.5zM192.8 660.3h2.5v2.5h-2.5zM207.8 660.3h2.5v2.5h-2.5zM82.8 662.8h5v2.5h-5zM95.3 662.8h2.5v2.5h-2.5zM110.3 662.8h7.5v2.5h-7.5zM122.8 662.8h2.5v2.5h-2.5zM155.3 662.8h2.5v2.5h-2.5zM175.3 662.8h5v2.5h-5zM182.8 662.8h2.5v2.5h-2.5zM195.3 662.8h2.5v2.5h-2.5zM212.8 662.8h2.5v2.5h-2.5zM82.8 665.3h7.5v2.5h-7.5zM95.3 665.3h2.5v2.5h-2.5zM137.8 665.3h2.5v2.5h-2.5zM150.3 665.3h2.5v2.5h-2.5zM185.3 665.3h2.5v2.5h-2.5zM195.3 665.3h2.5v2.5h-2.5zM207.8 665.3h2.5v2.5h-2.5zM215.3 665.3h2.5v2.5h-2.5zM75.3 667.8h2.5v2.5h-2.5zM97.8 667.8h2.5v2.5h-2.5zM115.3 667.8h2.5v2.5h-2.5zM125.3 667.8h2.5v2.5h-2.5zM130.3 667.8h7.5v2.5h-7.5zM147.8 667.8h2.5v2.5h-2.5zM152.8 667.8h2.5v2.5h-2.5zM167.8 667.8h5v2.5h-5zM175.3 667.8h2.5v2.5h-2.5zM180.3 667.8h2.5v2.5h-2.5zM205.3 667.8h2.5v2.5h-2.5zM70.3 670.3h5v2.5h-5zM80.3 670.3h2.5v2.5h-2.5zM92.8 670.3h5v2.5h-5zM115.3 670.3h5v2.5h-5zM125.3 670.3h2.5v2.5h-2.5zM132.8 670.3h2.5v2.5h-2.5zM162.8 670.3h5v2.5h-5zM172.8 670.3h2.5v2.5h-2.5zM202.8 670.3h2.5v2.5h-2.5zM82.8 672.8h2.5v2.5h-2.5zM87.8 672.8h5v2.5h-5zM120.3 672.8h2.5v2.5h-2.5zM137.8 672.8h2.5v2.5h-2.5zM152.8 672.8h2.5v2.5h-2.5zM182.8 672.8h2.5v2.5h-2.5zM197.8 672.8h2.5v2.5h-2.5zM202.8 672.8h5v2.5h-5zM212.8 672.8h2.5v2.5h-2.5zM72.8 675.3h2.5v2.5h-2.5zM87.8 675.3h2.5v2.5h-2.5zM115.3 675.3h5v2.5h-5zM140.3 675.3h2.5v2.5h-2.5zM162.8 675.3h2.5v2.5h-2.5zM170.3 675.3h2.5v2.5h-2.5zM175.3 675.3h2.5v2.5h-2.5zM200.3 675.3h5v2.5h-5zM80.3 677.8h2.5v2.5h-2.5zM85.3 677.8h2.5v2.5h-2.5zM100.3 677.8h2.5v2.5h-2.5zM107.8 677.8h2.5v2.5h-2.5zM147.8 677.8h2.5v2.5h-2.5zM152.8 677.8h2.5v2.5h-2.5zM192.8 677.8h2.5v2.5h-2.5zM200.3 677.8h2.5v2.5h-2.5zM205.3 677.8h2.5v2.5h-2.5zM82.8 680.3h2.5v0.3h-2.5zM97.8 680.3h2.5v0.3h-2.5zM102.8 680.3h5v0.3h-5zM115.3 680.3h2.5v0.3h-2.5zM132.8 680.3h2.5v0.3h-2.5zM137.8 680.3h5v0.3h-5zM145.3 680.3h2.5v0.3h-2.5zM150.3 680.3h7.5v0.3h-7.5zM160.3 680.3h2.5v0.3h-2.5zM182.8 680.3h2.5v0.3h-2.5zM200.3 680.3h2.5v0.3h-2.5z"/><path fill="#e9e9e9" d="M77.8 532.8h2.5v2.5h-2.5zM135.3 532.8h2.5v2.5h-2.5zM170.3 532.8h2.5v2.5h-2.5zM182.8 532.8h2.5v2.5h-2.5zM82.8 535.3h2.5v2.5h-2.5zM125.3 535.3h2.5v2.5h-2.5zM160.3 535.3h2.5v2.5h-2.5zM170.3 535.3h2.5v2.5h-2.5zM217.8 535.3h0.3v2.5h-0.3zM102.8 537.8h2.5v2.5h-2.5zM122.8 537.8h2.5v2.5h-2.5zM190.3 537.8h2.5v2.5h-2.5zM72.8 540.3h2.5v2.5h-2.5zM85.3 540.3h2.5v2.5h-2.5zM150.3 540.3h2.5v2.5h-2.5zM207.8 542.8h2.5v2.5h-2.5zM82.8 545.3h2.5v2.5h-2.5zM97.8 545.3h2.5v2.5h-2.5zM125.3 545.3h2.5v2.5h-2.5zM165.3 545.3h5v2.5h-5zM105.3 547.8h2.5v2.5h-2.5zM157.8 547.8h2.5v2.5h-2.5zM170.3 547.8h2.5v2.5h-2.5zM180.3 547.8h2.5v2.5h-2.5zM70.3 550.3h2.5v2.5h-2.5zM152.8 552.8h5v2.5h-5zM172.8 552.8h2.5v2.5h-2.5zM160.3 555.3h2.5v2.5h-2.5zM190.3 555.3h2.5v2.5h-2.5zM120.3 557.8h2.5v2.5h-2.5zM147.8 557.8h2.5v2.5h-2.5zM155.3 557.8h2.5v2.5h-2.5zM90.3 560.3h2.5v2.5h-2.5zM165.3 560.3h5v2.5h-5zM172.8 560.3h2.5v2.5h-2.5zM177.8 560.3h2.5v2.5h-2.5zM205.3 560.3h2.5v2.5h-2.5zM217.8 560.3h0.3v2.5h-0.3zM140.3 562.8h5v2.5h-5zM190.3 562.8h2.5v2.5h-2.5zM195.3 562.8h2.5v2.5h-2.5zM75.3 565.3h2.5v2.5h-2.5zM205.3 565.3h2.5v2.5h-2.5zM152.8 567.8h2.5v2.5h-2.5zM75.3 570.3h2.5v2.5h-2.5zM212.8 570.3h2.5v2.5h-2.5zM107.8 572.8h2.5v2.5h-2.5zM182.8 572.8h2.5v2.5h-2.5zM100.3 577.8h2.5v2.5h-2.5zM165.3 577.8h2.5v2.5h-2.5zM195.3 577.8h2.5v2.5h-2.5zM75.3 580.3h5v2.5h-5zM95.3 580.3h2.5v2.5h-2.5zM70.3 582.8h2.5v2.5h-2.5zM82.8 582.8h2.5v2.5h-2.5zM100.3 582.8h2.5v2.5h-2.5zM175.3 585.3h2.5v2.5h-2.5zM200.3 585.3h2.5v2.5h-2.5zM92.8 587.8h2.5v2.5h-2.5zM180.3 587.8h2.5v2.5h-2.5zM102.8 590.3h2.5v2.5h-2.5zM72.8 592.8h2.5v2.5h-2.5zM80.3 592.8h2.5v2.5h-2.5zM97.8 592.8h2.5v2.5h-2.5zM160.3 592.8h2.5v2.5h-2.5zM162.8 595.3h2.5v2.5h-2.5zM172.8 595.3h2.5v2.5h-2.5zM195.3 595.3h2.5v2.5h-2.5zM197.8 597.8h2.5v2.5h-2.5zM100.3 600.3h2.5v2.5h-2.5zM157.8 600.3h2.5v2.5h-2.5zM175.3 600.3h2.5v2.5h-2.5zM87.8 602.8h2.5v2.5h-2.5zM162.8 602.8h2.5v2.5h-2.5zM210.3 602.8h2.5v2.5h-2.5zM217.8 602.8h0.3v2.5h-0.3zM162.8 605.3h2.5v2.5h-2.5zM192.8 605.3h2.5v2.5h-2.5zM205.3 605.3h2.5v2.5h-2.5zM80.3 607.8h2.5v2.5h-2.5zM195.3 607.8h2.5v2.5h-2.5zM212.8 607.8h5v2.5h-5zM117.8 610.3h2.5v2.5h-2.5zM197.8 610.3h2.5v2.5h-2.5zM195.3 612.8h2.5v2.5h-2.5zM102.8 615.3h2.5v2.5h-2.5zM192.8 615.3h2.5v2.5h-2.5zM160.3 617.8h2.5v2.5h-2.5zM180.3 617.8h2.5v2.5h-2.5zM217.8 617.8h0.3v2.5h-0.3zM142.8 620.3h2.5v2.5h-2.5zM155.3 620.3h2.5v2.5h-2.5zM167.8 620.3h2.5v2.5h-2.5zM197.8 620.3h2.5v2.5h-2.5zM72.8 622.8h2.5v2.5h-2.5zM80.3 622.8h2.5v2.5h-2.5zM135.3 622.8h2.5v2.5h-2.5zM145.3 622.8h2.5v2.5h-2.5zM92.8 625.3h2.5v2.5h-2.5zM112.8 625.3h2.5v2.5h-2.5zM117.8 625.3h2.5v2.5h-2.5zM132.8 625.3h2.5v2.5h-2.5zM130.3 627.8h2.5v2.5h-2.5zM170.3 627.8h2.5v2.5h-2.5zM202.8 627.8h2.5v2.5h-2.5zM95.3 630.3h2.5v2.5h-2.5zM167.8 630.3h2.5v2.5h-2.5zM210.3 630.3h2.5v2.5h-2.5zM92.8 632.8h5v2.5h-5zM150.3 632.8h2.5v2.5h-2.5zM210.3 632.8h2.5v2.5h-2.5zM80.3 635.3h2.5v2.5h-2.5zM147.8 635.3h2.5v2.5h-2.5zM162.8 635.3h2.5v2.5h-2.5zM185.3 635.3h2.5v2.5h-2.5zM110.3 637.8h2.5v2.5h-2.5zM167.8 637.8h2.5v2.5h-2.5zM95.3 640.3h2.5v2.5h-2.5zM155.3 640.3h2.5v2.5h-2.5zM187.8 640.3h2.5v2.5h-2.5zM145.3 642.8h2.5v2.5h-2.5zM87.8 645.3h2.5v2.5h-2.5zM95.3 645.3h2.5v2.5h-2.5zM165.3 645.3h2.5v2.5h-2.5zM200.3 645.3h5v2.5h-5zM92.8 647.8h2.5v2.5h-2.5zM167.8 647.8h2.5v2.5h-2.5zM185.3 647.8h2.5v2.5h-2.5zM110.3 650.3h2.5v2.5h-2.5zM162.8 650.3h5v2.5h-5zM172.8 650.3h2.5v2.5h-2.5zM187.8 650.3h2.5v2.5h-2.5zM117.8 652.8h2.5v2.5h-2.5zM195.3 652.8h2.5v2.5h-2.5zM205.3 652.8h2.5v2.5h-2.5zM112.8 655.3h2.5v2.5h-2.5zM135.3 657.8h2.5v2.5h-2.5zM182.8 657.8h2.5v2.5h-2.5zM217.8 657.8h0.3v2.5h-0.3zM110.3 660.3h2.5v2.5h-2.5zM132.8 660.3h2.5v2.5h-2.5zM142.8 660.3h2.5v2.5h-2.5zM72.8 662.8h2.5v2.5h-2.5zM135.3 662.8h2.5v2.5h-2.5zM205.3 662.8h2.5v2.5h-2.5zM215.3 662.8h2.5v2.5h-2.5zM75.3 665.3h2.5v2.5h-2.5zM102.8 665.3h2.5v2.5h-2.5zM107.8 665.3h2.5v2.5h-2.5zM175.3 665.3h2.5v2.5h-2.5zM190.3 665.3h2.5v2.5h-2.5zM205.3 665.3h2.5v2.5h-2.5zM210.3 665.3h2.5v2.5h-2.5zM110.3 667.8h2.5v2.5h-2.5zM117.8 667.8h2.5v2.5h-2.5zM142.8 667.8h2.5v2.5h-2.5zM187.8 667.8h2.5v2.5h-2.5zM192.8 667.8h2.5v2.5h-2.5zM200.3 667.8h2.5v2.5h-2.5zM145.3 670.3h2.5v2.5h-2.5zM70.3 672.8h2.5v2.5h-2.5zM80.3 672.8h2.5v2.5h-2.5zM105.3 672.8h2.5v2.5h-2.5zM132.8 672.8h2.5v2.5h-2.5zM160.3 672.8h2.5v2.5h-2.5zM77.8 675.3h2.5v2.5h-2.5zM122.8 675.3h5v2.5h-5zM137.8 675.3h2.5v2.5h-2.5zM90.3 677.8h2.5v2.5h-2.5zM157.8 677.8h7.5v2.5h-7.5zM167.8 677.8h2.5v2.5h-2.5zM212.8 677.8h2.5v2.5h-2.5zM70.3 680.3h2.5v0.3h-2.5zM120.3 680.3h2.5v0.3h-2.5zM165.3 680.3h5v0.3h-5zM172.8 680.3h2.5v0.3h-2.5z"/><path fill="#f4f4f4" d="M95.3 532.8h2.5v2.5h-2.5zM100.3 535.3h2.5v2.5h-2.5zM167.8 535.3h2.5v2.5h-2.5zM120.3 537.8h2.5v2.5h-2.5zM172.8 545.3h2.5v2.5h-2.5zM80.3 550.3h2.5v2.5h-2.5zM217.8 550.3h0.3v2.5h-0.3zM92.8 562.8h2.5v2.5h-2.5zM145.3 562.8h2.5v2.5h-2.5zM175.3 562.8h2.5v2.5h-2.5zM190.3 565.3h2.5v2.5h-2.5zM215.3 570.3h2.5v2.5h-2.5zM215.3 575.3h2.5v2.5h-2.5zM205.3 577.8h2.5v2.5h-2.5zM190.3 580.3h2.5v2.5h-2.5zM95.3 590.3h2.5v2.5h-2.5zM157.8 590.3h2.5v2.5h-2.5zM80.3 595.3h2.5v2.5h-2.5zM170.3 595.3h2.5v2.5h-2.5zM202.8 597.8h2.5v2.5h-2.5zM205.3 600.3h2.5v2.5h-2.5zM180.3 607.8h2.5v2.5h-2.5zM105.3 610.3h2.5v2.5h-2.5zM192.8 610.3h2.5v2.5h-2.5zM152.8 612.8h2.5v2.5h-2.5zM112.8 615.3h2.5v2.5h-2.5zM110.3 620.3h2.5v2.5h-2.5zM137.8 620.3h2.5v2.5h-2.5zM190.3 620.3h2.5v2.5h-2.5zM192.8 627.8h2.5v2.5h-2.5zM87.8 635.3h2.5v2.5h-2.5zM152.8 637.8h2.5v2.5h-2.5zM127.8 640.3h2.5v2.5h-2.5zM137.8 640.3h2.5v2.5h-2.5zM170.3 640.3h2.5v2.5h-2.5zM175.3 640.3h2.5v2.5h-2.5zM137.8 642.8h2.5v2.5h-2.5zM155.3 645.3h2.5v2.5h-2.5zM157.8 647.8h2.5v2.5h-2.5zM70.3 650.3h2.5v2.5h-2.5zM145.3 650.3h2.5v2.5h-2.5zM77.8 652.8h2.5v2.5h-2.5zM125.3 652.8h2.5v2.5h-2.5zM147.8 652.8h2.5v2.5h-2.5zM182.8 655.3h2.5v2.5h-2.5zM210.3 657.8h2.5v2.5h-2.5zM87.8 660.3h2.5v2.5h-2.5zM97.8 660.3h2.5v2.5h-2.5zM167.8 660.3h5v2.5h-5zM100.3 665.3h2.5v2.5h-2.5zM142.8 665.3h2.5v2.5h-2.5zM107.8 667.8h2.5v2.5h-2.5zM137.8 670.3h2.5v2.5h-2.5zM160.3 670.3h2.5v2.5h-2.5zM205.3 670.3h2.5v2.5h-2.5zM90.3 675.3h2.5v2.5h-2.5zM145.3 675.3h2.5v2.5h-2.5z"/><path fill="#c8c8c8" d="M97.8 532.8h5v2.5h-5zM110.3 532.8h2.5v2.5h-2.5zM122.8 532.8h2.5v2.5h-2.5zM137.8 532.8h5v2.5h-5zM150.3 532.8h2.5v2.5h-2.5zM165.3 532.8h2.5v2.5h-2.5zM175.3 532.8h2.5v2.5h-2.5zM187.8 532.8h2.5v2.5h-2.5zM192.8 532.8h2.5v2.5h-2.5zM197.8 532.8h2.5v2.5h-2.5zM212.8 532.8h2.5v2.5h-2.5zM75.3 535.3h2.5v2.5h-2.5zM80.3 535.3h2.5v2.5h-2.5zM90.3 535.3h2.5v2.5h-2.5zM110.3 535.3h2.5v2.5h-2.5zM140.3 535.3h2.5v2.5h-2.5zM145.3 535.3h2.5v2.5h-2.5zM150.3 535.3h7.5v2.5h-7.5zM165.3 535.3h2.5v2.5h-2.5zM180.3 535.3h2.5v2.5h-2.5zM195.3 535.3h2.5v2.5h-2.5zM207.8 535.3h5v2.5h-5zM80.3 537.8h2.5v2.5h-2.5zM87.8 537.8h2.5v2.5h-2.5zM92.8 537.8h2.5v2.5h-2.5zM97.8 537.8h2.5v2.5h-2.5zM112.8 537.8h2.5v2.5h-2.5zM127.8 537.8h2.5v2.5h-2.5zM172.8 537.8h2.5v2.5h-2.5zM177.8 537.8h5v2.5h-5zM195.3 537.8h2.5v2.5h-2.5zM202.8 537.8h2.5v2.5h-2.5zM207.8 537.8h2.5v2.5h-2.5zM215.3 537.8h2.8v2.5h-2.8zM77.8 540.3h2.5v2.5h-2.5zM82.8 540.3h2.5v2.5h-2.5zM90.3 540.3h2.5v2.5h-2.5zM95.3 540.3h5v2.5h-5zM102.8 540.3h2.5v2.5h-2.5zM132.8 540.3h5v2.5h-5zM140.3 540.3h7.5v2.5h-7.5zM175.3 540.3h2.5v2.5h-2.5zM180.3 540.3h2.5v2.5h-2.5zM187.8 540.3h2.5v2.5h-2.5zM200.3 540.3h5v2.5h-5zM207.8 540.3h2.5v2.5h-2.5zM215.3 540.3h2.5v2.5h-2.5zM90.3 542.8h2.5v2.5h-2.5zM95.3 542.8h2.5v2.5h-2.5zM105.3 542.8h5v2.5h-5zM125.3 542.8h2.5v2.5h-2.5zM142.8 542.8h2.5v2.5h-2.5zM157.8 542.8h2.5v2.5h-2.5zM167.8 542.8h7.5v2.5h-7.5zM195.3 542.8h5v2.5h-5zM215.3 542.8h2.8v2.5h-2.8zM72.8 545.3h2.5v2.5h-2.5zM77.8 545.3h5v2.5h-5zM85.3 545.3h2.5v2.5h-2.5zM92.8 545.3h2.5v2.5h-2.5zM100.3 545.3h10v2.5h-10zM112.8 545.3h7.5v2.5h-7.5zM142.8 545.3h2.5v2.5h-2.5zM155.3 545.3h2.5v2.5h-2.5zM162.8 545.3h2.5v2.5h-2.5zM177.8 545.3h2.5v2.5h-2.5zM187.8 545.3h2.5v2.5h-2.5zM197.8 545.3h5v2.5h-5zM85.3 547.8h5v2.5h-5zM95.3 547.8h5v2.5h-5zM127.8 547.8h2.5v2.5h-2.5zM132.8 547.8h2.5v2.5h-2.5zM137.8 547.8h2.5v2.5h-2.5zM152.8 547.8h2.5v2.5h-2.5zM167.8 547.8h2.5v2.5h-2.5zM182.8 547.8h5v2.5h-5zM192.8 547.8h2.5v2.5h-2.5zM197.8 547.8h5v2.5h-5zM205.3 547.8h2.5v2.5h-2.5zM210.3 547.8h2.5v2.5h-2.5zM77.8 550.3h2.5v2.5h-2.5zM82.8 550.3h2.5v2.5h-2.5zM107.8 550.3h2.5v2.5h-2.5zM112.8 550.3h5v2.5h-5zM130.3 550.3h2.5v2.5h-2.5zM137.8 550.3h2.5v2.5h-2.5zM142.8 550.3h2.5v2.5h-2.5zM147.8 550.3h2.5v2.5h-2.5zM152.8 550.3h2.5v2.5h-2.5zM157.8 550.3h2.5v2.5h-2.5zM167.8 550.3h2.5v2.5h-2.5zM180.3 550.3h5v2.5h-5zM192.8 550.3h5v2.5h-5zM205.3 550.3h5v2.5h-5zM212.8 550.3h5v2.5h-5zM72.8 552.8h5v2.5h-5zM85.3 552.8h7.5v2.5h-7.5zM102.8 552.8h2.5v2.5h-2.5zM115.3 552.8h2.5v2.5h-2.5zM125.3 552.8h2.5v2.5h-2.5zM140.3 552.8h2.5v2.5h-2.5zM157.8 552.8h2.5v2.5h-2.5zM177.8 552.8h7.5v2.5h-7.5zM192.8 552.8h2.5v2.5h-2.5zM202.8 552.8h2.5v2.5h-2.5zM210.3 552.8h2.5v2.5h-2.5zM107.8 555.3h5v2.5h-5zM147.8 555.3h2.5v2.5h-2.5zM157.8 555.3h2.5v2.5h-2.5zM165.3 555.3h2.5v2.5h-2.5zM170.3 555.3h5v2.5h-5zM180.3 555.3h5v2.5h-5zM187.8 555.3h2.5v2.5h-2.5zM202.8 555.3h2.5v2.5h-2.5zM207.8 555.3h5v2.5h-5zM70.3 557.8h7.5v2.5h-7.5zM80.3 557.8h2.5v2.5h-2.5zM90.3 557.8h2.5v2.5h-2.5zM95.3 557.8h2.5v2.5h-2.5zM100.3 557.8h2.5v2.5h-2.5zM112.8 557.8h2.5v2.5h-2.5zM122.8 557.8h2.5v2.5h-2.5zM150.3 557.8h2.5v2.5h-2.5zM162.8 557.8h2.5v2.5h-2.5zM172.8 557.8h5v2.5h-5zM190.3 557.8h2.5v2.5h-2.5zM197.8 557.8h2.5v2.5h-2.5zM202.8 557.8h2.5v2.5h-2.5zM100.3 560.3h7.5v2.5h-7.5zM112.8 560.3h5v2.5h-5zM127.8 560.3h5v2.5h-5zM135.3 560.3h2.5v2.5h-2.5zM142.8 560.3h2.5v2.5h-2.5zM160.3 560.3h2.5v2.5h-2.5zM170.3 560.3h2.5v2.5h-2.5zM182.8 560.3h5v2.5h-5zM192.8 560.3h2.5v2.5h-2.5zM207.8 560.3h2.5v2.5h-2.5zM72.8 562.8h2.5v2.5h-2.5zM77.8 562.8h2.5v2.5h-2.5zM105.3 562.8h2.5v2.5h-2.5zM120.3 562.8h10v2.5h-10zM137.8 562.8h2.5v2.5h-2.5zM157.8 562.8h5v2.5h-5zM167.8 562.8h5v2.5h-5zM187.8 562.8h2.5v2.5h-2.5zM192.8 562.8h2.5v2.5h-2.5zM197.8 562.8h2.5v2.5h-2.5zM202.8 562.8h7.5v2.5h-7.5zM212.8 562.8h2.5v2.5h-2.5zM217.8 562.8h0.3v2.5h-0.3zM80.3 565.3h2.5v2.5h-2.5zM87.8 565.3h2.5v2.5h-2.5zM92.8 565.3h2.5v2.5h-2.5zM100.3 565.3h2.5v2.5h-2.5zM107.8 565.3h2.5v2.5h-2.5zM112.8 565.3h2.5v2.5h-2.5zM117.8 565.3h2.5v2.5h-2.5zM137.8 565.3h2.5v2.5h-2.5zM150.3 565.3h5v2.5h-5zM157.8 565.3h2.5v2.5h-2.5zM162.8 565.3h5v2.5h-5zM172.8 565.3h2.5v2.5h-2.5zM177.8 565.3h5v2.5h-5zM192.8 565.3h2.5v2.5h-2.5zM202.8 565.3h2.5v2.5h-2.5zM70.3 567.8h2.5v2.5h-2.5zM80.3 567.8h2.5v2.5h-2.5zM90.3 567.8h5v2.5h-5zM100.3 567.8h2.5v2.5h-2.5zM107.8 567.8h2.5v2.5h-2.5zM140.3 567.8h2.5v2.5h-2.5zM155.3 567.8h2.5v2.5h-2.5zM167.8 567.8h2.5v2.5h-2.5zM172.8 567.8h2.5v2.5h-2.5zM190.3 567.8h5v2.5h-5zM207.8 567.8h5v2.5h-5zM90.3 570.3h2.5v2.5h-2.5zM97.8 570.3h2.5v2.5h-2.5zM105.3 570.3h2.5v2.5h-2.5zM110.3 570.3h2.5v2.5h-2.5zM147.8 570.3h2.5v2.5h-2.5zM152.8 570.3h2.5v2.5h-2.5zM170.3 570.3h2.5v2.5h-2.5zM175.3 570.3h2.5v2.5h-2.5zM185.3 570.3h5v2.5h-5zM192.8 570.3h2.5v2.5h-2.5zM197.8 570.3h2.5v2.5h-2.5zM77.8 572.8h10v2.5h-10zM92.8 572.8h2.5v2.5h-2.5zM147.8 572.8h2.5v2.5h-2.5zM152.8 572.8h2.5v2.5h-2.5zM157.8 572.8h5v2.5h-5zM167.8 572.8h2.5v2.5h-2.5zM185.3 572.8h2.5v2.5h-2.5zM190.3 572.8h5v2.5h-5zM207.8 572.8h2.5v2.5h-2.5zM215.3 572.8h2.5v2.5h-2.5zM70.3 575.3h2.5v2.5h-2.5zM87.8 575.3h2.5v2.5h-2.5zM95.3 575.3h2.5v2.5h-2.5zM157.8 575.3h2.5v2.5h-2.5zM172.8 575.3h2.5v2.5h-2.5zM180.3 575.3h5v2.5h-5zM187.8 575.3h5v2.5h-5zM200.3 575.3h2.5v2.5h-2.5zM212.8 575.3h2.5v2.5h-2.5zM70.3 577.8h12.5v2.5h-12.5zM92.8 577.8h7.5v2.5h-7.5zM102.8 577.8h2.5v2.5h-2.5zM155.3 577.8h2.5v2.5h-2.5zM162.8 577.8h2.5v2.5h-2.5zM180.3 577.8h2.5v2.5h-2.5zM70.3 580.3h2.5v2.5h-2.5zM82.8 580.3h5v2.5h-5zM92.8 580.3h2.5v2.5h-2.5zM100.3 580.3h5v2.5h-5zM152.8 580.3h2.5v2.5h-2.5zM172.8 580.3h2.5v2.5h-2.5zM187.8 580.3h2.5v2.5h-2.5zM210.3 580.3h2.5v2.5h-2.5zM215.3 580.3h2.5v2.5h-2.5zM77.8 582.8h2.5v2.5h-2.5zM92.8 582.8h2.5v2.5h-2.5zM97.8 582.8h2.5v2.5h-2.5zM157.8 582.8h2.5v2.5h-2.5zM165.3 582.8h2.5v2.5h-2.5zM172.8 582.8h2.5v2.5h-2.5zM182.8 582.8h2.5v2.5h-2.5zM190.3 582.8h2.5v2.5h-2.5zM202.8 582.8h2.5v2.5h-2.5zM210.3 582.8h5v2.5h-5zM72.8 585.3h5v2.5h-5zM82.8 585.3h2.5v2.5h-2.5zM92.8 585.3h2.5v2.5h-2.5zM105.3 585.3h2.5v2.5h-2.5zM160.3 585.3h2.5v2.5h-2.5zM165.3 585.3h5v2.5h-5zM182.8 585.3h2.5v2.5h-2.5zM192.8 585.3h2.5v2.5h-2.5zM210.3 585.3h5v2.5h-5zM70.3 587.8h2.5v2.5h-2.5zM75.3 587.8h7.5v2.5h-7.5zM97.8 587.8h2.5v2.5h-2.5zM102.8 587.8h2.5v2.5h-2.5zM155.3 587.8h5v2.5h-5zM162.8 587.8h2.5v2.5h-2.5zM167.8 587.8h2.5v2.5h-2.5zM182.8 587.8h2.5v2.5h-2.5zM187.8 587.8h2.5v2.5h-2.5zM195.3 587.8h2.5v2.5h-2.5zM200.3 587.8h2.5v2.5h-2.5zM205.3 587.8h2.5v2.5h-2.5zM215.3 587.8h2.8v2.5h-2.8zM85.3 590.3h2.5v2.5h-2.5zM97.8 590.3h2.5v2.5h-2.5zM105.3 590.3h2.5v2.5h-2.5zM165.3 590.3h2.5v2.5h-2.5zM182.8 590.3h2.5v2.5h-2.5zM197.8 590.3h2.5v2.5h-2.5zM205.3 590.3h2.5v2.5h-2.5zM212.8 590.3h5v2.5h-5zM75.3 592.8h5v2.5h-5zM87.8 592.8h2.5v2.5h-2.5zM157.8 592.8h2.5v2.5h-2.5zM162.8 592.8h2.5v2.5h-2.5zM192.8 592.8h2.5v2.5h-2.5zM210.3 592.8h2.5v2.5h-2.5zM217.8 592.8h0.3v2.5h-0.3zM72.8 595.3h2.5v2.5h-2.5zM82.8 595.3h5v2.5h-5zM92.8 595.3h2.5v2.5h-2.5zM157.8 595.3h2.5v2.5h-2.5zM185.3 595.3h2.5v2.5h-2.5zM190.3 595.3h5v2.5h-5zM202.8 595.3h2.5v2.5h-2.5zM207.8 595.3h2.5v2.5h-2.5zM212.8 595.3h2.5v2.5h-2.5zM72.8 597.8h2.5v2.5h-2.5zM80.3 597.8h2.5v2.5h-2.5zM95.3 597.8h5v2.5h-5zM110.3 597.8h2.5v2.5h-2.5zM160.3 597.8h2.5v2.5h-2.5zM165.3 597.8h2.5v2.5h-2.5zM172.8 597.8h2.5v2.5h-2.5zM177.8 597.8h2.5v2.5h-2.5zM185.3 597.8h2.5v2.5h-2.5zM192.8 597.8h5v2.5h-5zM210.3 597.8h2.5v2.5h-2.5zM215.3 597.8h2.5v2.5h-2.5zM70.3 600.3h2.5v2.5h-2.5zM82.8 600.3h2.5v2.5h-2.5zM90.3 600.3h2.5v2.5h-2.5zM107.8 600.3h2.5v2.5h-2.5zM170.3 600.3h5v2.5h-5zM190.3 600.3h2.5v2.5h-2.5zM195.3 600.3h7.5v2.5h-7.5zM207.8 600.3h2.5v2.5h-2.5zM70.3 602.8h2.5v2.5h-2.5zM77.8 602.8h5v2.5h-5zM97.8 602.8h2.5v2.5h-2.5zM102.8 602.8h2.5v2.5h-2.5zM112.8 602.8h2.5v2.5h-2.5zM152.8 602.8h2.5v2.5h-2.5zM160.3 602.8h2.5v2.5h-2.5zM172.8 602.8h2.5v2.5h-2.5zM195.3 602.8h5v2.5h-5zM212.8 602.8h2.5v2.5h-2.5zM70.3 605.3h2.5v2.5h-2.5zM87.8 605.3h5v2.5h-5zM107.8 605.3h7.5v2.5h-7.5zM150.3 605.3h7.5v2.5h-7.5zM165.3 605.3h2.5v2.5h-2.5zM170.3 605.3h7.5v2.5h-7.5zM185.3 605.3h5v2.5h-5zM197.8 605.3h2.5v2.5h-2.5zM212.8 605.3h2.5v2.5h-2.5zM70.3 607.8h2.5v2.5h-2.5zM82.8 607.8h2.5v2.5h-2.5zM92.8 607.8h5v2.5h-5zM107.8 607.8h5v2.5h-5zM147.8 607.8h5v2.5h-5zM155.3 607.8h2.5v2.5h-2.5zM162.8 607.8h2.5v2.5h-2.5zM182.8 607.8h2.5v2.5h-2.5zM87.8 610.3h7.5v2.5h-7.5zM97.8 610.3h2.5v2.5h-2.5zM152.8 610.3h10v2.5h-10zM170.3 610.3h2.5v2.5h-2.5zM175.3 610.3h2.5v2.5h-2.5zM182.8 610.3h5v2.5h-5zM195.3 610.3h2.5v2.5h-2.5zM207.8 610.3h2.5v2.5h-2.5zM72.8 612.8h2.5v2.5h-2.5zM87.8 612.8h2.5v2.5h-2.5zM95.3 612.8h2.5v2.5h-2.5zM102.8 612.8h7.5v2.5h-7.5zM112.8 612.8h2.5v2.5h-2.5zM142.8 612.8h2.5v2.5h-2.5zM160.3 612.8h2.5v2.5h-2.5zM165.3 612.8h2.5v2.5h-2.5zM177.8 612.8h2.5v2.5h-2.5zM185.3 612.8h2.5v2.5h-2.5zM200.3 612.8h2.5v2.5h-2.5zM212.8 612.8h2.5v2.5h-2.5zM72.8 615.3h5v2.5h-5zM82.8 615.3h2.5v2.5h-2.5zM90.3 615.3h2.5v2.5h-2.5zM95.3 615.3h2.5v2.5h-2.5zM100.3 615.3h2.5v2.5h-2.5zM135.3 615.3h5v2.5h-5zM142.8 615.3h2.5v2.5h-2.5zM160.3 615.3h2.5v2.5h-2.5zM185.3 615.3h2.5v2.5h-2.5zM190.3 615.3h2.5v2.5h-2.5zM207.8 615.3h2.5v2.5h-2.5zM77.8 617.8h2.5v2.5h-2.5zM82.8 617.8h5v2.5h-5zM95.3 617.8h2.5v2.5h-2.5zM100.3 617.8h2.5v2.5h-2.5zM125.3 617.8h2.5v2.5h-2.5zM137.8 617.8h2.5v2.5h-2.5zM142.8 617.8h2.5v2.5h-2.5zM147.8 617.8h2.5v2.5h-2.5zM182.8 617.8h5v2.5h-5zM207.8 617.8h2.5v2.5h-2.5zM215.3 617.8h2.5v2.5h-2.5zM77.8 620.3h2.5v2.5h-2.5zM85.3 620.3h2.5v2.5h-2.5zM95.3 620.3h7.5v2.5h-7.5zM115.3 620.3h5v2.5h-5zM125.3 620.3h2.5v2.5h-2.5zM132.8 620.3h5v2.5h-5zM140.3 620.3h2.5v2.5h-2.5zM150.3 620.3h2.5v2.5h-2.5zM157.8 620.3h5v2.5h-5zM170.3 620.3h2.5v2.5h-2.5zM182.8 620.3h2.5v2.5h-2.5zM210.3 620.3h5v2.5h-5zM77.8 622.8h2.5v2.5h-2.5zM100.3 622.8h5v2.5h-5zM115.3 622.8h5v2.5h-5zM127.8 622.8h2.5v2.5h-2.5zM155.3 622.8h2.5v2.5h-2.5zM185.3 622.8h2.5v2.5h-2.5zM200.3 622.8h2.5v2.5h-2.5zM75.3 625.3h2.5v2.5h-2.5zM95.3 625.3h2.5v2.5h-2.5zM105.3 625.3h2.5v2.5h-2.5zM110.3 625.3h2.5v2.5h-2.5zM122.8 625.3h2.5v2.5h-2.5zM147.8 625.3h2.5v2.5h-2.5zM167.8 625.3h5v2.5h-5zM175.3 625.3h2.5v2.5h-2.5zM185.3 625.3h2.5v2.5h-2.5zM200.3 625.3h2.5v2.5h-2.5zM207.8 625.3h2.5v2.5h-2.5zM217.8 625.3h0.3v2.5h-0.3zM72.8 627.8h2.5v2.5h-2.5zM80.3 627.8h5v2.5h-5zM90.3 627.8h2.5v2.5h-2.5zM95.3 627.8h5v2.5h-5zM102.8 627.8h5v2.5h-5zM115.3 627.8h2.5v2.5h-2.5zM120.3 627.8h2.5v2.5h-2.5zM135.3 627.8h2.5v2.5h-2.5zM140.3 627.8h2.5v2.5h-2.5zM177.8 627.8h2.5v2.5h-2.5zM182.8 627.8h2.5v2.5h-2.5zM190.3 627.8h2.5v2.5h-2.5zM207.8 627.8h5v2.5h-5zM70.3 630.3h2.5v2.5h-2.5zM77.8 630.3h2.5v2.5h-2.5zM105.3 630.3h2.5v2.5h-2.5zM122.8 630.3h2.5v2.5h-2.5zM127.8 630.3h2.5v2.5h-2.5zM137.8 630.3h2.5v2.5h-2.5zM150.3 630.3h2.5v2.5h-2.5zM155.3 630.3h2.5v2.5h-2.5zM170.3 630.3h2.5v2.5h-2.5zM175.3 630.3h2.5v2.5h-2.5zM190.3 630.3h5v2.5h-5zM200.3 630.3h2.5v2.5h-2.5zM215.3 630.3h2.5v2.5h-2.5zM75.3 632.8h2.5v2.5h-2.5zM97.8 632.8h2.5v2.5h-2.5zM102.8 632.8h2.5v2.5h-2.5zM115.3 632.8h2.5v2.5h-2.5zM122.8 632.8h10v2.5h-10zM170.3 632.8h2.5v2.5h-2.5zM185.3 632.8h5v2.5h-5zM200.3 632.8h2.5v2.5h-2.5zM205.3 632.8h2.5v2.5h-2.5zM75.3 635.3h2.5v2.5h-2.5zM105.3 635.3h2.5v2.5h-2.5zM110.3 635.3h2.5v2.5h-2.5zM132.8 635.3h2.5v2.5h-2.5zM142.8 635.3h5v2.5h-5zM152.8 635.3h2.5v2.5h-2.5zM160.3 635.3h2.5v2.5h-2.5zM165.3 635.3h2.5v2.5h-2.5zM197.8 635.3h5v2.5h-5zM90.3 637.8h2.5v2.5h-2.5zM102.8 637.8h2.5v2.5h-2.5zM107.8 637.8h2.5v2.5h-2.5zM112.8 637.8h2.5v2.5h-2.5zM117.8 637.8h2.5v2.5h-2.5zM137.8 637.8h2.5v2.5h-2.5zM147.8 637.8h2.5v2.5h-2.5zM162.8 637.8h2.5v2.5h-2.5zM175.3 637.8h2.5v2.5h-2.5zM190.3 637.8h2.5v2.5h-2.5zM200.3 637.8h2.5v2.5h-2.5zM207.8 637.8h2.5v2.5h-2.5zM217.8 637.8h0.3v2.5h-0.3zM70.3 640.3h2.5v2.5h-2.5zM75.3 640.3h2.5v2.5h-2.5zM80.3 640.3h2.5v2.5h-2.5zM110.3 640.3h5v2.5h-5zM150.3 640.3h2.5v2.5h-2.5zM182.8 640.3h2.5v2.5h-2.5zM195.3 640.3h2.5v2.5h-2.5zM207.8 640.3h2.5v2.5h-2.5zM215.3 640.3h2.5v2.5h-2.5zM82.8 642.8h10v2.5h-10zM102.8 642.8h2.5v2.5h-2.5zM107.8 642.8h2.5v2.5h-2.5zM112.8 642.8h5v2.5h-5zM120.3 642.8h2.5v2.5h-2.5zM125.3 642.8h5v2.5h-5zM132.8 642.8h2.5v2.5h-2.5zM147.8 642.8h2.5v2.5h-2.5zM152.8 642.8h2.5v2.5h-2.5zM157.8 642.8h2.5v2.5h-2.5zM175.3 642.8h2.5v2.5h-2.5zM185.3 642.8h2.5v2.5h-2.5zM192.8 642.8h2.5v2.5h-2.5zM217.8 642.8h0.3v2.5h-0.3zM72.8 645.3h2.5v2.5h-2.5zM82.8 645.3h5v2.5h-5zM112.8 645.3h2.5v2.5h-2.5zM127.8 645.3h2.5v2.5h-2.5zM147.8 645.3h5v2.5h-5zM190.3 645.3h10v2.5h-10zM207.8 645.3h2.5v2.5h-2.5zM80.3 647.8h7.5v2.5h-7.5zM110.3 647.8h2.5v2.5h-2.5zM132.8 647.8h5v2.5h-5zM155.3 647.8h2.5v2.5h-2.5zM175.3 647.8h2.5v2.5h-2.5zM182.8 647.8h2.5v2.5h-2.5zM190.3 647.8h2.5v2.5h-2.5zM195.3 647.8h5v2.5h-5zM205.3 647.8h2.5v2.5h-2.5zM217.8 647.8h0.3v2.5h-0.3zM80.3 650.3h2.5v2.5h-2.5zM85.3 650.3h2.5v2.5h-2.5zM90.3 650.3h2.5v2.5h-2.5zM102.8 650.3h2.5v2.5h-2.5zM107.8 650.3h2.5v2.5h-2.5zM142.8 650.3h2.5v2.5h-2.5zM147.8 650.3h5v2.5h-5zM195.3 650.3h2.5v2.5h-2.5zM207.8 650.3h2.5v2.5h-2.5zM95.3 652.8h2.5v2.5h-2.5zM100.3 652.8h5v2.5h-5zM107.8 652.8h7.5v2.5h-7.5zM127.8 652.8h5v2.5h-5zM140.3 652.8h2.5v2.5h-2.5zM145.3 652.8h2.5v2.5h-2.5zM150.3 652.8h2.5v2.5h-2.5zM177.8 652.8h2.5v2.5h-2.5zM187.8 652.8h2.5v2.5h-2.5zM77.8 655.3h2.5v2.5h-2.5zM87.8 655.3h7.5v2.5h-7.5zM107.8 655.3h5v2.5h-5zM117.8 655.3h2.5v2.5h-2.5zM130.3 655.3h2.5v2.5h-2.5zM140.3 655.3h7.5v2.5h-7.5zM150.3 655.3h5v2.5h-5zM167.8 655.3h2.5v2.5h-2.5zM180.3 655.3h2.5v2.5h-2.5zM185.3 655.3h5v2.5h-5zM195.3 655.3h2.5v2.5h-2.5zM202.8 655.3h5v2.5h-5zM217.8 655.3h0.3v2.5h-0.3zM70.3 657.8h2.5v2.5h-2.5zM90.3 657.8h2.5v2.5h-2.5zM95.3 657.8h5v2.5h-5zM107.8 657.8h2.5v2.5h-2.5zM112.8 657.8h15v2.5h-15zM130.3 657.8h2.5v2.5h-2.5zM137.8 657.8h2.5v2.5h-2.5zM142.8 657.8h2.5v2.5h-2.5zM152.8 657.8h2.5v2.5h-2.5zM165.3 657.8h2.5v2.5h-2.5zM170.3 657.8h5v2.5h-5zM185.3 657.8h2.5v2.5h-2.5zM197.8 657.8h2.5v2.5h-2.5zM205.3 657.8h2.5v2.5h-2.5zM215.3 657.8h2.5v2.5h-2.5zM72.8 660.3h2.5v2.5h-2.5zM100.3 660.3h5v2.5h-5zM140.3 660.3h2.5v2.5h-2.5zM155.3 660.3h2.5v2.5h-2.5zM175.3 660.3h10v2.5h-10zM195.3 660.3h2.5v2.5h-2.5zM200.3 660.3h2.5v2.5h-2.5zM212.8 660.3h2.5v2.5h-2.5zM217.8 660.3h0.3v2.5h-0.3zM90.3 662.8h5v2.5h-5zM97.8 662.8h2.5v2.5h-2.5zM102.8 662.8h5v2.5h-5zM120.3 662.8h2.5v2.5h-2.5zM130.3 662.8h2.5v2.5h-2.5zM140.3 662.8h2.5v2.5h-2.5zM145.3 662.8h5v2.5h-5zM157.8 662.8h2.5v2.5h-2.5zM170.3 662.8h2.5v2.5h-2.5zM192.8 662.8h2.5v2.5h-2.5zM197.8 662.8h2.5v2.5h-2.5zM210.3 662.8h2.5v2.5h-2.5zM217.8 662.8h0.3v2.5h-0.3zM80.3 665.3h2.5v2.5h-2.5zM92.8 665.3h2.5v2.5h-2.5zM97.8 665.3h2.5v2.5h-2.5zM105.3 665.3h2.5v2.5h-2.5zM115.3 665.3h7.5v2.5h-7.5zM130.3 665.3h5v2.5h-5zM140.3 665.3h2.5v2.5h-2.5zM147.8 665.3h2.5v2.5h-2.5zM162.8 665.3h2.5v2.5h-2.5zM172.8 665.3h2.5v2.5h-2.5zM180.3 665.3h2.5v2.5h-2.5zM187.8 665.3h2.5v2.5h-2.5zM200.3 665.3h2.5v2.5h-2.5zM82.8 667.8h2.5v2.5h-2.5zM87.8 667.8h2.5v2.5h-2.5zM95.3 667.8h2.5v2.5h-2.5zM102.8 667.8h2.5v2.5h-2.5zM112.8 667.8h2.5v2.5h-2.5zM120.3 667.8h5v2.5h-5zM155.3 667.8h5v2.5h-5zM162.8 667.8h2.5v2.5h-2.5zM185.3 667.8h2.5v2.5h-2.5zM195.3 667.8h5v2.5h-5zM217.8 667.8h0.3v2.5h-0.3zM90.3 670.3h2.5v2.5h-2.5zM102.8 670.3h2.5v2.5h-2.5zM120.3 670.3h5v2.5h-5zM152.8 670.3h5v2.5h-5zM170.3 670.3h2.5v2.5h-2.5zM182.8 670.3h2.5v2.5h-2.5zM190.3 670.3h12.5v2.5h-12.5zM207.8 670.3h2.5v2.5h-2.5zM212.8 670.3h2.5v2.5h-2.5zM75.3 672.8h5v2.5h-5zM92.8 672.8h5v2.5h-5zM112.8 672.8h2.5v2.5h-2.5zM122.8 672.8h7.5v2.5h-7.5zM135.3 672.8h2.5v2.5h-2.5zM155.3 672.8h5v2.5h-5zM162.8 672.8h2.5v2.5h-2.5zM180.3 672.8h2.5v2.5h-2.5zM187.8 672.8h2.5v2.5h-2.5zM195.3 672.8h2.5v2.5h-2.5zM200.3 672.8h2.5v2.5h-2.5zM210.3 672.8h2.5v2.5h-2.5zM217.8 672.8h0.3v2.5h-0.3zM85.3 675.3h2.5v2.5h-2.5zM100.3 675.3h2.5v2.5h-2.5zM107.8 675.3h2.5v2.5h-2.5zM120.3 675.3h2.5v2.5h-2.5zM127.8 675.3h2.5v2.5h-2.5zM135.3 675.3h2.5v2.5h-2.5zM142.8 675.3h2.5v2.5h-2.5zM152.8 675.3h2.5v2.5h-2.5zM165.3 675.3h5v2.5h-5zM190.3 675.3h2.5v2.5h-2.5zM205.3 675.3h5v2.5h-5zM212.8 675.3h2.5v2.5h-2.5zM70.3 677.8h2.5v2.5h-2.5zM77.8 677.8h2.5v2.5h-2.5zM82.8 677.8h2.5v2.5h-2.5zM87.8 677.8h2.5v2.5h-2.5zM112.8 677.8h2.5v2.5h-2.5zM127.8 677.8h7.5v2.5h-7.5zM142.8 677.8h5v2.5h-5zM170.3 677.8h12.5v2.5h-12.5zM187.8 677.8h2.5v2.5h-2.5zM202.8 677.8h2.5v2.5h-2.5zM215.3 677.8h2.5v2.5h-2.5zM75.3 680.3h2.5v0.3h-2.5zM85.3 680.3h10v0.3h-10zM100.3 680.3h2.5v0.3h-2.5zM117.8 680.3h2.5v0.3h-2.5zM130.3 680.3h2.5v0.3h-2.5zM170.3 680.3h2.5v0.3h-2.5zM177.8 680.3h2.5v0.3h-2.5zM190.3 680.3h2.5v0.3h-2.5zM210.3 680.3h5v0.3h-5zM217.8 680.3h0.3v0.3h-0.3z"/><path fill="#bcbcbc" d="M127.8 532.8h2.5v2.5h-2.5zM177.8 532.8h2.5v2.5h-2.5zM72.8 535.3h2.5v2.5h-2.5zM87.8 535.3h2.5v2.5h-2.5zM92.8 535.3h5v2.5h-5zM127.8 535.3h2.5v2.5h-2.5zM192.8 535.3h2.5v2.5h-2.5zM212.8 535.3h2.5v2.5h-2.5zM140.3 537.8h2.5v2.5h-2.5zM157.8 537.8h2.5v2.5h-2.5zM167.8 537.8h2.5v2.5h-2.5zM197.8 537.8h2.5v2.5h-2.5zM80.3 540.3h2.5v2.5h-2.5zM107.8 540.3h2.5v2.5h-2.5zM157.8 540.3h2.5v2.5h-2.5zM167.8 540.3h2.5v2.5h-2.5zM172.8 540.3h2.5v2.5h-2.5zM192.8 540.3h2.5v2.5h-2.5zM197.8 540.3h2.5v2.5h-2.5zM210.3 540.3h2.5v2.5h-2.5zM82.8 542.8h2.5v2.5h-2.5zM120.3 542.8h5v2.5h-5zM140.3 542.8h2.5v2.5h-2.5zM182.8 542.8h2.5v2.5h-2.5zM190.3 542.8h2.5v2.5h-2.5zM75.3 545.3h2.5v2.5h-2.5zM87.8 545.3h2.5v2.5h-2.5zM95.3 545.3h2.5v2.5h-2.5zM120.3 545.3h2.5v2.5h-2.5zM157.8 545.3h2.5v2.5h-2.5zM182.8 545.3h2.5v2.5h-2.5zM210.3 545.3h2.5v2.5h-2.5zM215.3 545.3h2.8v2.5h-2.8zM135.3 547.8h2.5v2.5h-2.5zM165.3 547.8h2.5v2.5h-2.5zM175.3 547.8h2.5v2.5h-2.5zM195.3 547.8h2.5v2.5h-2.5zM207.8 547.8h2.5v2.5h-2.5zM90.3 550.3h2.5v2.5h-2.5zM105.3 550.3h2.5v2.5h-2.5zM127.8 550.3h2.5v2.5h-2.5zM185.3 550.3h2.5v2.5h-2.5zM92.8 552.8h2.5v2.5h-2.5zM110.3 552.8h2.5v2.5h-2.5zM117.8 552.8h5v2.5h-5zM127.8 552.8h2.5v2.5h-2.5zM135.3 552.8h5v2.5h-5zM195.3 552.8h2.5v2.5h-2.5zM80.3 555.3h2.5v2.5h-2.5zM87.8 555.3h2.5v2.5h-2.5zM97.8 555.3h2.5v2.5h-2.5zM105.3 555.3h2.5v2.5h-2.5zM140.3 555.3h2.5v2.5h-2.5zM197.8 555.3h2.5v2.5h-2.5zM140.3 557.8h2.5v2.5h-2.5zM185.3 557.8h2.5v2.5h-2.5zM195.3 557.8h2.5v2.5h-2.5zM77.8 560.3h2.5v2.5h-2.5zM180.3 560.3h2.5v2.5h-2.5zM190.3 560.3h2.5v2.5h-2.5zM75.3 562.8h2.5v2.5h-2.5zM80.3 562.8h2.5v2.5h-2.5zM87.8 562.8h2.5v2.5h-2.5zM130.3 562.8h2.5v2.5h-2.5zM172.8 562.8h2.5v2.5h-2.5zM185.3 562.8h2.5v2.5h-2.5zM95.3 565.3h2.5v2.5h-2.5zM110.3 565.3h2.5v2.5h-2.5zM140.3 565.3h2.5v2.5h-2.5zM160.3 565.3h2.5v2.5h-2.5zM197.8 565.3h2.5v2.5h-2.5zM75.3 567.8h2.5v2.5h-2.5zM82.8 567.8h2.5v2.5h-2.5zM102.8 567.8h2.5v2.5h-2.5zM112.8 567.8h2.5v2.5h-2.5zM165.3 567.8h2.5v2.5h-2.5zM100.3 570.3h2.5v2.5h-2.5zM157.8 570.3h2.5v2.5h-2.5zM205.3 570.3h2.5v2.5h-2.5zM70.3 572.8h2.5v2.5h-2.5zM177.8 572.8h2.5v2.5h-2.5zM82.8 575.3h2.5v2.5h-2.5zM105.3 575.3h2.5v2.5h-2.5zM150.3 575.3h2.5v2.5h-2.5zM192.8 575.3h2.5v2.5h-2.5zM85.3 577.8h5v2.5h-5zM167.8 577.8h2.5v2.5h-2.5zM182.8 577.8h2.5v2.5h-2.5zM197.8 577.8h5v2.5h-5zM87.8 580.3h2.5v2.5h-2.5zM207.8 580.3h2.5v2.5h-2.5zM80.3 582.8h2.5v2.5h-2.5zM170.3 582.8h2.5v2.5h-2.5zM215.3 582.8h2.5v2.5h-2.5zM70.3 585.3h2.5v2.5h-2.5zM87.8 585.3h2.5v2.5h-2.5zM195.3 585.3h2.5v2.5h-2.5zM205.3 585.3h2.5v2.5h-2.5zM87.8 587.8h2.5v2.5h-2.5zM95.3 587.8h2.5v2.5h-2.5zM105.3 587.8h2.5v2.5h-2.5zM185.3 587.8h2.5v2.5h-2.5zM160.3 590.3h2.5v2.5h-2.5zM95.3 592.8h2.5v2.5h-2.5zM155.3 592.8h2.5v2.5h-2.5zM212.8 592.8h2.5v2.5h-2.5zM97.8 595.3h2.5v2.5h-2.5zM105.3 595.3h2.5v2.5h-2.5zM182.8 595.3h2.5v2.5h-2.5zM77.8 597.8h2.5v2.5h-2.5zM85.3 597.8h2.5v2.5h-2.5zM92.8 597.8h2.5v2.5h-2.5zM100.3 597.8h2.5v2.5h-2.5zM105.3 597.8h2.5v2.5h-2.5zM175.3 597.8h2.5v2.5h-2.5zM207.8 597.8h2.5v2.5h-2.5zM87.8 600.3h2.5v2.5h-2.5zM162.8 600.3h2.5v2.5h-2.5zM185.3 600.3h2.5v2.5h-2.5zM105.3 602.8h2.5v2.5h-2.5zM72.8 605.3h2.5v2.5h-2.5zM105.3 605.3h2.5v2.5h-2.5zM167.8 605.3h2.5v2.5h-2.5zM215.3 605.3h2.5v2.5h-2.5zM170.3 607.8h2.5v2.5h-2.5zM175.3 607.8h2.5v2.5h-2.5zM190.3 607.8h2.5v2.5h-2.5zM205.3 607.8h2.5v2.5h-2.5zM85.3 610.3h2.5v2.5h-2.5zM177.8 610.3h2.5v2.5h-2.5zM77.8 612.8h2.5v2.5h-2.5zM82.8 612.8h5v2.5h-5zM127.8 612.8h2.5v2.5h-2.5zM137.8 612.8h5v2.5h-5zM170.3 612.8h2.5v2.5h-2.5zM205.3 612.8h2.5v2.5h-2.5zM217.8 612.8h0.3v2.5h-0.3zM97.8 615.3h2.5v2.5h-2.5zM205.3 615.3h2.5v2.5h-2.5zM70.3 617.8h2.5v2.5h-2.5zM92.8 617.8h2.5v2.5h-2.5zM110.3 617.8h5v2.5h-5zM120.3 617.8h2.5v2.5h-2.5zM155.3 617.8h2.5v2.5h-2.5zM170.3 617.8h2.5v2.5h-2.5zM200.3 617.8h2.5v2.5h-2.5zM212.8 617.8h2.5v2.5h-2.5zM102.8 620.3h2.5v2.5h-2.5zM192.8 620.3h2.5v2.5h-2.5zM215.3 620.3h2.5v2.5h-2.5zM82.8 622.8h2.5v2.5h-2.5zM217.8 622.8h0.3v2.5h-0.3zM125.3 625.3h2.5v2.5h-2.5zM160.3 625.3h2.5v2.5h-2.5zM177.8 625.3h2.5v2.5h-2.5zM182.8 625.3h2.5v2.5h-2.5zM70.3 627.8h2.5v2.5h-2.5zM75.3 630.3h2.5v2.5h-2.5zM80.3 630.3h2.5v2.5h-2.5zM115.3 630.3h2.5v2.5h-2.5zM207.8 630.3h2.5v2.5h-2.5zM212.8 630.3h2.5v2.5h-2.5zM217.8 630.3h0.3v2.5h-0.3zM82.8 632.8h2.5v2.5h-2.5zM112.8 632.8h2.5v2.5h-2.5zM135.3 632.8h2.5v2.5h-2.5zM215.3 632.8h2.5v2.5h-2.5zM70.3 635.3h2.5v2.5h-2.5zM97.8 635.3h2.5v2.5h-2.5zM175.3 635.3h2.5v2.5h-2.5zM182.8 635.3h2.5v2.5h-2.5zM187.8 635.3h2.5v2.5h-2.5zM205.3 635.3h2.5v2.5h-2.5zM212.8 635.3h2.5v2.5h-2.5zM92.8 637.8h2.5v2.5h-2.5zM97.8 637.8h2.5v2.5h-2.5zM130.3 637.8h5v2.5h-5zM140.3 637.8h2.5v2.5h-2.5zM157.8 637.8h2.5v2.5h-2.5zM172.8 637.8h2.5v2.5h-2.5zM180.3 637.8h2.5v2.5h-2.5zM195.3 637.8h2.5v2.5h-2.5zM72.8 640.3h2.5v2.5h-2.5zM77.8 640.3h2.5v2.5h-2.5zM92.8 640.3h2.5v2.5h-2.5zM97.8 640.3h2.5v2.5h-2.5zM145.3 640.3h2.5v2.5h-2.5zM160.3 640.3h2.5v2.5h-2.5zM167.8 640.3h2.5v2.5h-2.5zM185.3 640.3h2.5v2.5h-2.5zM200.3 640.3h2.5v2.5h-2.5zM70.3 642.8h2.5v2.5h-2.5zM150.3 642.8h2.5v2.5h-2.5zM155.3 642.8h2.5v2.5h-2.5zM180.3 642.8h5v2.5h-5zM132.8 645.3h2.5v2.5h-2.5zM210.3 645.3h5v2.5h-5zM70.3 647.8h2.5v2.5h-2.5zM102.8 647.8h2.5v2.5h-2.5zM115.3 647.8h2.5v2.5h-2.5zM147.8 647.8h2.5v2.5h-2.5zM192.8 647.8h2.5v2.5h-2.5zM97.8 650.3h2.5v2.5h-2.5zM120.3 650.3h2.5v2.5h-2.5zM157.8 650.3h2.5v2.5h-2.5zM190.3 650.3h2.5v2.5h-2.5zM202.8 650.3h2.5v2.5h-2.5zM97.8 655.3h2.5v2.5h-2.5zM170.3 655.3h2.5v2.5h-2.5zM72.8 657.8h7.5v2.5h-7.5zM85.3 657.8h2.5v2.5h-2.5zM105.3 657.8h2.5v2.5h-2.5zM147.8 657.8h2.5v2.5h-2.5zM157.8 657.8h2.5v2.5h-2.5zM190.3 657.8h2.5v2.5h-2.5zM80.3 660.3h2.5v2.5h-2.5zM92.8 660.3h2.5v2.5h-2.5zM115.3 660.3h2.5v2.5h-2.5zM120.3 660.3h2.5v2.5h-2.5zM107.8 662.8h2.5v2.5h-2.5zM172.8 662.8h2.5v2.5h-2.5zM180.3 662.8h2.5v2.5h-2.5zM200.3 662.8h2.5v2.5h-2.5zM112.8 665.3h2.5v2.5h-2.5zM127.8 665.3h2.5v2.5h-2.5zM157.8 665.3h2.5v2.5h-2.5zM170.3 665.3h2.5v2.5h-2.5zM192.8 665.3h2.5v2.5h-2.5zM212.8 665.3h2.5v2.5h-2.5zM90.3 667.8h5v2.5h-5zM165.3 667.8h2.5v2.5h-2.5zM75.3 670.3h2.5v2.5h-2.5zM107.8 670.3h2.5v2.5h-2.5zM167.8 670.3h2.5v2.5h-2.5zM85.3 672.8h2.5v2.5h-2.5zM100.3 672.8h2.5v2.5h-2.5zM150.3 672.8h2.5v2.5h-2.5zM165.3 672.8h2.5v2.5h-2.5zM175.3 672.8h2.5v2.5h-2.5zM130.3 675.3h2.5v2.5h-2.5zM182.8 675.3h5v2.5h-5zM95.3 677.8h5v2.5h-5zM137.8 677.8h2.5v2.5h-2.5zM195.3 677.8h2.5v2.5h-2.5zM125.3 680.3h2.5v0.3h-2.5zM142.8 680.3h2.5v0.3h-2.5zM162.8 680.3h2.5v0.3h-2.5zM175.3 680.3h2.5v0.3h-2.5zM192.8 680.3h7.5v0.3h-7.5z"/><path fill="#b1b1b1" d="M180.3 532.8h2.5v2.5h-2.5zM165.3 540.3h2.5v2.5h-2.5zM100.3 555.3h2.5v2.5h-2.5zM175.3 555.3h2.5v2.5h-2.5zM140.3 560.3h2.5v2.5h-2.5zM82.8 565.3h2.5v2.5h-2.5zM135.3 565.3h2.5v2.5h-2.5zM137.8 567.8h2.5v2.5h-2.5zM147.8 567.8h2.5v2.5h-2.5zM77.8 575.3h2.5v2.5h-2.5zM107.8 575.3h2.5v2.5h-2.5zM205.3 575.3h2.5v2.5h-2.5zM107.8 577.8h2.5v2.5h-2.5zM212.8 580.3h2.5v2.5h-2.5zM105.3 582.8h2.5v2.5h-2.5zM155.3 590.3h2.5v2.5h-2.5zM107.8 595.3h2.5v2.5h-2.5zM155.3 595.3h2.5v2.5h-2.5zM210.3 595.3h2.5v2.5h-2.5zM112.8 600.3h2.5v2.5h-2.5zM152.8 600.3h2.5v2.5h-2.5zM187.8 600.3h2.5v2.5h-2.5zM167.8 602.8h2.5v2.5h-2.5zM115.3 605.3h2.5v2.5h-2.5zM117.8 607.8h2.5v2.5h-2.5zM165.3 607.8h2.5v2.5h-2.5zM120.3 610.3h2.5v2.5h-2.5zM130.3 612.8h2.5v2.5h-2.5zM207.8 612.8h2.5v2.5h-2.5zM97.8 625.3h2.5v2.5h-2.5zM107.8 627.8h2.5v2.5h-2.5zM180.3 630.3h2.5v2.5h-2.5zM180.3 632.8h2.5v2.5h-2.5zM87.8 640.3h2.5v2.5h-2.5zM172.8 640.3h2.5v2.5h-2.5zM160.3 642.8h2.5v2.5h-2.5zM155.3 650.3h2.5v2.5h-2.5zM210.3 650.3h5v2.5h-5zM197.8 652.8h2.5v2.5h-2.5zM77.8 660.3h2.5v2.5h-2.5zM135.3 665.3h2.5v2.5h-2.5zM150.3 670.3h2.5v2.5h-2.5zM182.8 677.8h2.5v2.5h-2.5zM127.8 680.3h2.5v0.3h-2.5zM187.8 680.3h2.5v0.3h-2.5z"/><path fill="#ffffff" d="M137.8 535.3h2.5v2.5h-2.5zM125.3 537.8h2.5v2.5h-2.5zM77.8 542.8h2.5v2.5h-2.5zM115.3 555.3h2.5v2.5h-2.5zM205.3 582.8h2.5v2.5h-2.5zM207.8 585.3h2.5v2.5h-2.5zM170.3 592.8h2.5v2.5h-2.5zM175.3 595.3h2.5v2.5h-2.5zM200.3 605.3h2.5v2.5h-2.5zM135.3 617.8h2.5v2.5h-2.5zM165.3 620.3h2.5v2.5h-2.5zM197.8 630.3h2.5v2.5h-2.5zM152.8 645.3h2.5v2.5h-2.5zM212.8 647.8h2.5v2.5h-2.5zM215.3 667.8h2.5v2.5h-2.5zM115.3 672.8h2.5v2.5h-2.5zM207.8 680.3h2.5v0.3h-2.5z"/><path fill="#9b9b9b" d="M120.3 565.3h2.5v2.5h-2.5zM130.3 565.3h2.5v2.5h-2.5zM140.3 570.3h2.5v2.5h-2.5zM150.3 577.8h2.5v2.5h-2.5zM152.8 582.8h2.5v2.5h-2.5zM152.8 597.8h2.5v2.5h-2.5zM122.8 610.3h2.5v2.5h-2.5zM142.8 610.3h2.5v2.5h-2.5z"/><path fill="#858585" d="M122.8 565.3h2.5v2.5h-2.5zM135.3 567.8h2.5v2.5h-2.5zM142.8 572.8h2.5v2.5h-2.5zM145.3 575.3h2.5v2.5h-2.5zM107.8 582.8h2.5v2.5h-2.5zM107.8 590.3h2.5v2.5h-2.5zM112.8 597.8h2.5v2.5h-2.5zM120.3 607.8h2.5v2.5h-2.5zM125.3 610.3h2.5v2.5h-2.5zM140.3 610.3h2.5v2.5h-2.5z"/><path fill="#909090" d="M125.3 565.3h5v2.5h-5zM112.8 570.3h2.5v2.5h-2.5zM110.3 595.3h2.5v2.5h-2.5zM115.3 602.8h2.5v2.5h-2.5zM147.8 605.3h2.5v2.5h-2.5zM145.3 607.8h2.5v2.5h-2.5z"/><path fill="#a6a6a6" d="M132.8 565.3h2.5v2.5h-2.5zM97.8 567.8h2.5v2.5h-2.5zM115.3 567.8h2.5v2.5h-2.5zM142.8 570.3h2.5v2.5h-2.5zM110.3 572.8h2.5v2.5h-2.5zM145.3 572.8h2.5v2.5h-2.5zM147.8 575.3h2.5v2.5h-2.5zM107.8 592.8h2.5v2.5h-2.5zM150.3 602.8h2.5v2.5h-2.5zM125.3 612.8h2.5v2.5h-2.5zM132.8 612.8h5v2.5h-5z"/><path fill="#7a7a7a" d="M117.8 567.8h2.5v2.5h-2.5zM107.8 580.3h2.5v2.5h-2.5zM150.3 580.3h2.5v2.5h-2.5zM107.8 585.3h2.5v2.5h-2.5zM107.8 587.8h2.5v2.5h-2.5zM152.8 587.8h2.5v2.5h-2.5zM152.8 590.3h2.5v2.5h-2.5zM152.8 592.8h2.5v2.5h-2.5zM152.8 595.3h2.5v2.5h-2.5zM150.3 600.3h2.5v2.5h-2.5zM117.8 605.3h2.5v2.5h-2.5zM137.8 610.3h2.5v2.5h-2.5z"/><path fill="#6f6f6f" d="M120.3 567.8h2.5v2.5h-2.5zM115.3 570.3h2.5v2.5h-2.5zM112.8 572.8h2.5v2.5h-2.5zM110.3 575.3h2.5v2.5h-2.5zM147.8 577.8h2.5v2.5h-2.5zM152.8 585.3h2.5v2.5h-2.5zM115.3 600.3h2.5v2.5h-2.5zM142.8 607.8h2.5v2.5h-2.5zM127.8 610.3h2.5v2.5h-2.5z"/><path fill="#4e4e4e" d="M122.8 567.8h2.5v2.5h-2.5zM120.3 605.3h2.5v2.5h-2.5z"/><path fill="#434343" d="M125.3 567.8h7.5v2.5h-7.5zM117.8 570.3h2.5v2.5h-2.5zM135.3 570.3h2.5v2.5h-2.5zM150.3 585.3h2.5v2.5h-2.5zM110.3 590.3h2.5v2.5h-2.5zM112.8 595.3h2.5v2.5h-2.5zM117.8 602.8h2.5v2.5h-2.5zM140.3 607.8h2.5v2.5h-2.5z"/><path fill="#646464" d="M132.8 567.8h2.5v2.5h-2.5zM137.8 570.3h2.5v2.5h-2.5zM140.3 572.8h2.5v2.5h-2.5zM132.8 610.3h5v2.5h-5z"/><path fill="#212121" d="M120.3 570.3h2.5v2.5h-2.5zM132.8 570.3h2.5v2.5h-2.5zM112.8 592.8h2.5v2.5h-2.5zM117.8 600.3h2.5v2.5h-2.5zM145.3 602.8h2.5v2.5h-2.5zM122.8 605.3h2.5v2.5h-2.5zM127.8 607.8h2.5v2.5h-2.5zM135.3 607.8h2.5v2.5h-2.5z"/><path fill="#161616" d="M122.8 570.3h2.5v2.5h-2.5zM140.3 575.3h2.5v2.5h-2.5zM112.8 577.8h2.5v2.5h-2.5zM147.8 582.8h2.5v2.5h-2.5zM115.3 595.3h2.5v2.5h-2.5zM147.8 597.8h2.5v2.5h-2.5zM120.3 602.8h2.5v2.5h-2.5zM130.3 607.8h5v2.5h-5z"/><path fill="#0b0b0b" d="M125.3 570.3h7.5v2.5h-7.5zM117.8 572.8h2.5v2.5h-2.5zM135.3 572.8h2.5v2.5h-2.5zM115.3 575.3h2.5v2.5h-2.5zM137.8 575.3h2.5v2.5h-2.5zM142.8 577.8h2.5v2.5h-2.5zM112.8 580.3h2.5v2.5h-2.5zM145.3 580.3h2.5v2.5h-2.5zM147.8 585.3h2.5v2.5h-2.5zM112.8 590.3h2.5v2.5h-2.5zM147.8 595.3h2.5v2.5h-2.5zM117.8 597.8h2.5v2.5h-2.5zM145.3 600.3h2.5v2.5h-2.5zM125.3 605.3h2.5v2.5h-2.5zM140.3 605.3h2.5v2.5h-2.5z"/><path fill="#373737" d="M115.3 572.8h2.5v2.5h-2.5zM137.8 572.8h2.5v2.5h-2.5zM112.8 575.3h2.5v2.5h-2.5zM142.8 575.3h2.5v2.5h-2.5zM145.3 577.8h2.5v2.5h-2.5zM110.3 580.3h2.5v2.5h-2.5zM147.8 580.3h2.5v2.5h-2.5zM150.3 587.8h2.5v2.5h-2.5zM150.3 595.3h2.5v2.5h-2.5zM115.3 597.8h2.5v2.5h-2.5zM125.3 607.8h2.5v2.5h-2.5z"/><path fill="#000000" d="M120.3 572.8h15v2.5h-15zM117.8 575.3h20v2.5h-20zM115.3 577.8h27.5v2.5h-27.5zM115.3 580.3h30v2.5h-30zM112.8 582.8h35v2.5h-35zM112.8 585.3h35v2.5h-35zM112.8 587.8h37.5v2.5h-37.5zM115.3 590.3h35v2.5h-35zM115.3 592.8h35v2.5h-35zM117.8 595.3h30v2.5h-30zM120.3 597.8h27.5v2.5h-27.5zM120.3 600.3h25v2.5h-25zM122.8 602.8h22.5v2.5h-22.5zM127.8 605.3h12.5v2.5h-12.5z"/><path fill="#595959" d="M110.3 577.8h2.5v2.5h-2.5zM150.3 582.8h2.5v2.5h-2.5zM110.3 592.8h2.5v2.5h-2.5zM150.3 597.8h2.5v2.5h-2.5zM147.8 602.8h2.5v2.5h-2.5zM145.3 605.3h2.5v2.5h-2.5zM122.8 607.8h2.5v2.5h-2.5zM130.3 610.3h2.5v2.5h-2.5z"/><path fill="#2c2c2c" d="M110.3 582.8h2.5v2.5h-2.5zM110.3 585.3h2.5v2.5h-2.5zM110.3 587.8h2.5v2.5h-2.5zM150.3 590.3h2.5v2.5h-2.5zM150.3 592.8h2.5v2.5h-2.5zM147.8 600.3h2.5v2.5h-2.5zM142.8 605.3h2.5v2.5h-2.5zM137.8 607.8h2.5v2.5h-2.5z"/></g><rect x="95.09" y="557.59" width="98.22" height="98.22" fill="none" stroke="#ff0000" stroke-width="1.4"/><text x="144.20" y="546.86" font-family="Liberation Sans" font-size="11.2" fill="#ff0000" text-anchor="middle" stroke="#ff0000" stroke-width="0.1">N</text><text x="80.03" y="610.70" font-family="Liberation Sans" font-size="11.2" fill="#ff0000" text-anchor="middle" stroke="#ff0000" stroke-width="0.1">E</text><g fill="none" stroke="#707070" stroke-width="1.1"><circle cx="130.78" cy="556.28" r="12.11"/><circle cx="155.99" cy="554.64" r="12.11"/><circle cx="170.23" cy="572.00" r="12.11"/><circle cx="186.60" cy="589.84" r="12.11"/><circle cx="178.25" cy="613.41" r="12.11"/><circle cx="194.62" cy="631.09" r="12.11"/><circle cx="170.23" cy="636.98" r="12.11"/><circle cx="145.84" cy="640.26" r="12.11"/><circle cx="122.43" cy="644.51" r="12.11"/><circle cx="138.63" cy="663.83" r="12.11"/><circle cx="162.70" cy="657.94" r="12.11"/><circle cx="106.39" cy="626.84" r="12.11"/><circle cx="91.00" cy="607.52" r="12.11"/><circle cx="113.92" cy="602.44" r="12.11"/><circle cx="146.66" cy="577.23" r="12.11"/><circle cx="121.61" cy="579.03" r="12.11"/></g><circle cx="163.19" cy="595.40" r="12.11" fill="none" stroke="#ff0000" stroke-width="1.5"/><circle cx="154.68" cy="617.18" r="12.11" fill="none" stroke="#00ff00" stroke-width="1.5"/><circle cx="130.78" cy="622.58" r="12.11" fill="none" stroke="#ffa500" stroke-width="1.5"/><circle cx="138.63" cy="598.84" r="12.11" fill="none" stroke="#0000ff" stroke-width="1.5" stroke-dasharray="1.6,1"/><path d="M143.7 603.2v7M140.2 606.7h7" stroke="#ff0000" stroke-width="1.2"/><text x="144.20" y="525.60" font-family="Liberation Sans" font-size="12.6" fill="#111" text-anchor="middle" textLength="91.5" lengthAdjust="spacingAndGlyphs" stroke="#111" stroke-width="0.1">Fiber Positions</text><rect x="70.3" y="532.8" width="147.8" height="147.8" fill="none" stroke="#222" stroke-width="1.1"/><text x="78.72" y="696.60" font-family="Liberation Sans" font-size="11" fill="#111" text-anchor="middle" textLength="13.4" lengthAdjust="spacingAndGlyphs" stroke="#111" stroke-width="0.1">−4</text><text x="62.50" y="676.18" font-family="Liberation Sans" font-size="11" fill="#111" text-anchor="end" textLength="13.4" lengthAdjust="spacingAndGlyphs" stroke="#111" stroke-width="0.1">−4</text><text x="111.46" y="696.60" font-family="Liberation Sans" font-size="11" fill="#111" text-anchor="middle" textLength="13.4" lengthAdjust="spacingAndGlyphs" stroke="#111" stroke-width="0.1">−2</text><text x="62.50" y="643.44" font-family="Liberation Sans" font-size="11" fill="#111" text-anchor="end" textLength="13.4" lengthAdjust="spacingAndGlyphs" stroke="#111" stroke-width="0.1">−2</text><text x="144.20" y="696.60" font-family="Liberation Sans" font-size="11" fill="#111" text-anchor="middle" stroke="#111" stroke-width="0.1">0</text><text x="62.50" y="610.70" font-family="Liberation Sans" font-size="11" fill="#111" text-anchor="end" stroke="#111" stroke-width="0.1">0</text><text x="176.94" y="696.60" font-family="Liberation Sans" font-size="11" fill="#111" text-anchor="middle" stroke="#111" stroke-width="0.1">2</text><text x="62.50" y="577.96" font-family="Liberation Sans" font-size="11" fill="#111" text-anchor="end" stroke="#111" stroke-width="0.1">2</text><text x="209.68" y="696.60" font-family="Liberation Sans" font-size="11" fill="#111" text-anchor="middle" stroke="#111" stroke-width="0.1">4</text><text x="62.50" y="545.22" font-family="Liberation Sans" font-size="11" fill="#111" text-anchor="end" stroke="#111" stroke-width="0.1">4</text><path d="M78.72 680.5999999999999v3.5M70.3 672.18h-3.5M111.46 680.5999999999999v3.5M70.3 639.44h-3.5M144.20 680.5999999999999v3.5M70.3 606.70h-3.5M176.94 680.5999999999999v3.5M70.3 573.96h-3.5M209.68 680.5999999999999v3.5M70.3 541.22h-3.5" stroke="#222" stroke-width="0.9"/><text x="144.20" y="706.00" font-family="Liberation Sans" font-size="11.2" fill="#111" text-anchor="middle" textLength="40.0" lengthAdjust="spacingAndGlyphs" stroke="#111" stroke-width="0.1">arcsecs</text><g shape-rendering="crispEdges"><path fill="#414487" d="M255.4 532.8h43.4v3.4h-43.4zM363.2 532.8h3.4v3.4h-3.4zM255.4 535.9h43.4v3.4h-43.4zM387.8 535.9h3.4v3.4h-3.4zM255.4 539.0h40.3v3.4h-40.3zM255.4 542.0h40.3v3.4h-40.3zM255.4 545.1h40.3v3.4h-40.3zM255.4 548.2h40.3v3.4h-40.3zM384.7 548.2h3.4v3.4h-3.4zM255.4 551.3h40.3v3.4h-40.3zM384.7 551.3h3.4v3.4h-3.4zM255.4 554.4h40.3v3.4h-40.3zM255.4 557.4h37.2v3.4h-37.2zM310.8 557.4h3.4v3.4h-3.4zM323.1 557.4h15.7v3.4h-15.7zM344.7 557.4h3.4v3.4h-3.4zM363.2 557.4h3.4v3.4h-3.4zM255.4 560.5h37.2v3.4h-37.2zM320.1 560.5h3.4v3.4h-3.4zM344.7 560.5h6.5v3.4h-6.5zM372.4 560.5h3.4v3.4h-3.4zM255.4 563.6h37.2v3.4h-37.2zM320.1 563.6h3.4v3.4h-3.4zM347.8 563.6h3.4v3.4h-3.4zM255.4 566.7h37.2v3.4h-37.2zM320.1 566.7h3.4v3.4h-3.4zM347.8 566.7h3.4v3.4h-3.4zM366.2 566.7h3.4v3.4h-3.4zM255.4 569.8h37.2v3.4h-37.2zM347.8 569.8h3.4v3.4h-3.4zM397.0 569.8h3.4v3.4h-3.4zM255.4 572.8h34.2v3.4h-34.2zM323.1 572.8h3.4v3.4h-3.4zM347.8 572.8h3.4v3.4h-3.4zM255.4 575.9h34.2v3.4h-34.2zM323.1 575.9h3.4v3.4h-3.4zM347.8 575.9h3.4v3.4h-3.4zM255.4 579.0h34.2v3.4h-34.2zM323.1 579.0h3.4v3.4h-3.4zM350.9 579.0h3.4v3.4h-3.4zM255.4 582.1h31.1v3.4h-31.1zM323.1 582.1h3.4v3.4h-3.4zM347.8 582.1h6.5v3.4h-6.5zM255.4 585.1h31.1v3.4h-31.1zM329.3 585.1h12.6v3.4h-12.6zM255.4 588.2h31.1v3.4h-31.1zM255.4 591.3h31.1v3.4h-31.1zM400.1 591.3h3.4v3.4h-3.4zM255.4 594.4h28.0v3.4h-28.0zM301.6 594.4h3.4v3.4h-3.4zM366.2 594.4h3.4v3.4h-3.4zM378.6 594.4h3.4v3.4h-3.4zM255.4 597.5h28.0v3.4h-28.0zM255.4 600.5h28.0v3.4h-28.0zM255.4 603.6h24.9v3.4h-24.9zM255.4 606.7h24.9v3.4h-24.9zM255.4 609.8h24.9v3.4h-24.9zM255.4 612.9h24.9v3.4h-24.9zM255.4 615.9h21.9v3.4h-21.9zM255.4 619.0h21.9v3.4h-21.9zM295.4 619.0h3.4v3.4h-3.4zM255.4 622.1h21.9v3.4h-21.9zM255.4 625.2h18.8v3.4h-18.8zM357.0 625.2h3.4v3.4h-3.4zM255.4 628.3h18.8v3.4h-18.8zM292.4 628.3h3.4v3.4h-3.4zM347.8 628.3h3.4v3.4h-3.4zM360.1 628.3h3.4v3.4h-3.4zM255.4 631.3h18.8v3.4h-18.8zM363.2 631.3h3.4v3.4h-3.4zM255.4 634.4h18.8v3.4h-18.8zM289.3 634.4h3.4v3.4h-3.4zM366.2 634.4h3.4v3.4h-3.4zM255.4 637.5h15.7v3.4h-15.7zM289.3 637.5h3.4v3.4h-3.4zM369.3 637.5h3.4v3.4h-3.4zM255.4 640.6h15.7v3.4h-15.7zM289.3 640.6h3.4v3.4h-3.4zM372.4 640.6h3.4v3.4h-3.4zM255.4 643.6h15.7v3.4h-15.7zM375.5 643.6h3.4v3.4h-3.4zM255.4 646.7h12.6v3.4h-12.6zM363.2 646.7h3.4v3.4h-3.4zM255.4 649.8h12.6v3.4h-12.6zM286.2 649.8h3.4v3.4h-3.4zM326.2 649.8h3.4v3.4h-3.4zM255.4 652.9h12.6v3.4h-12.6zM310.8 652.9h3.4v3.4h-3.4zM372.4 652.9h3.4v3.4h-3.4zM255.4 656.0h12.6v3.4h-12.6zM255.4 659.0h9.5v3.4h-9.5zM255.4 662.1h9.5v3.4h-9.5zM255.4 665.2h9.5v3.4h-9.5zM283.1 665.2h3.4v3.4h-3.4zM255.4 668.3h6.5v3.4h-6.5zM255.4 671.4h6.5v3.4h-6.5zM390.9 671.4h3.4v3.4h-3.4zM255.4 674.4h6.5v3.4h-6.5zM387.8 674.4h3.4v3.4h-3.4zM255.4 677.5h3.4v3.4h-3.4z"/><path fill="#3b528a" d="M298.5 532.8h3.4v3.4h-3.4zM295.4 539.0h3.4v3.4h-3.4zM295.4 542.0h3.4v3.4h-3.4zM295.4 545.1h3.4v3.4h-3.4zM347.8 554.4h6.5v3.4h-6.5zM292.4 557.4h3.4v3.4h-3.4zM320.1 557.4h3.4v3.4h-3.4zM347.8 557.4h6.5v3.4h-6.5zM310.8 560.5h3.4v3.4h-3.4zM369.3 560.5h3.4v3.4h-3.4zM350.9 563.6h3.4v3.4h-3.4zM378.6 563.6h3.4v3.4h-3.4zM350.9 566.7h3.4v3.4h-3.4zM320.1 569.8h3.4v3.4h-3.4zM350.9 569.8h3.4v3.4h-3.4zM307.7 572.8h3.4v3.4h-3.4zM320.1 572.8h3.4v3.4h-3.4zM350.9 572.8h3.4v3.4h-3.4zM320.1 575.9h3.4v3.4h-3.4zM350.9 575.9h3.4v3.4h-3.4zM320.1 579.0h3.4v3.4h-3.4zM304.7 582.1h3.4v3.4h-3.4zM320.1 582.1h3.4v3.4h-3.4zM323.1 585.1h6.5v3.4h-6.5zM341.6 585.1h15.7v3.4h-15.7zM381.6 594.4h6.5v3.4h-6.5zM350.9 625.2h3.4v3.4h-3.4zM360.1 643.6h3.4v3.4h-3.4zM378.6 646.7h3.4v3.4h-3.4zM323.1 649.8h3.4v3.4h-3.4zM310.8 656.0h3.4v3.4h-3.4zM338.5 659.0h3.4v3.4h-3.4zM283.1 662.1h3.4v3.4h-3.4zM286.2 665.2h3.4v3.4h-3.4zM335.5 668.3h3.4v3.4h-3.4zM397.0 668.3h3.4v3.4h-3.4zM317.0 671.4h3.4v3.4h-3.4zM384.7 677.5h3.4v3.4h-3.4z"/><path fill="#21918c" d="M301.6 532.8h3.4v3.4h-3.4zM320.1 532.8h3.4v3.4h-3.4zM323.1 535.9h3.4v3.4h-3.4zM390.9 535.9h3.4v3.4h-3.4zM326.2 539.0h3.4v3.4h-3.4zM329.3 542.0h3.4v3.4h-3.4zM304.7 545.1h3.4v3.4h-3.4zM332.4 545.1h3.4v3.4h-3.4zM387.8 545.1h3.4v3.4h-3.4zM307.7 548.2h6.5v3.4h-6.5zM387.8 548.2h3.4v3.4h-3.4zM313.9 551.3h3.4v3.4h-3.4zM338.5 551.3h3.4v3.4h-3.4zM387.8 551.3h3.4v3.4h-3.4zM384.7 560.5h3.4v3.4h-3.4zM387.8 563.6h3.4v3.4h-3.4zM400.1 566.7h3.4v3.4h-3.4zM304.7 588.2h3.4v3.4h-3.4zM320.1 588.2h3.4v3.4h-3.4zM341.6 594.4h6.5v3.4h-6.5zM394.0 594.4h3.4v3.4h-3.4zM357.0 597.5h9.5v3.4h-9.5zM397.0 609.8h3.4v3.4h-3.4zM397.0 612.9h3.4v3.4h-3.4zM301.6 615.9h3.4v3.4h-3.4zM397.0 615.9h3.4v3.4h-3.4zM304.7 619.0h3.4v3.4h-3.4zM350.9 622.1h3.4v3.4h-3.4zM341.6 625.2h3.4v3.4h-3.4zM363.2 625.2h3.4v3.4h-3.4zM341.6 628.3h3.4v3.4h-3.4zM397.0 628.3h3.4v3.4h-3.4zM320.1 631.3h18.8v3.4h-18.8zM369.3 634.4h3.4v3.4h-3.4zM378.6 640.6h15.7v3.4h-15.7zM341.6 646.7h6.5v3.4h-6.5zM353.9 646.7h6.5v3.4h-6.5zM341.6 649.8h3.4v3.4h-3.4zM341.6 652.9h3.4v3.4h-3.4zM360.1 659.0h3.4v3.4h-3.4zM360.1 662.1h3.4v3.4h-3.4zM326.2 677.5h3.4v3.4h-3.4z"/><path fill="#229c88" d="M304.7 532.8h15.7v3.4h-15.7zM390.9 532.8h12.6v3.4h-12.6zM320.1 535.9h3.4v3.4h-3.4zM394.0 535.9h9.5v3.4h-9.5zM304.7 539.0h3.4v3.4h-3.4zM323.1 539.0h3.4v3.4h-3.4zM390.9 539.0h12.6v3.4h-12.6zM304.7 542.0h3.4v3.4h-3.4zM390.9 542.0h12.6v3.4h-12.6zM307.7 545.1h3.4v3.4h-3.4zM390.9 545.1h12.6v3.4h-12.6zM313.9 548.2h6.5v3.4h-6.5zM335.5 548.2h3.4v3.4h-3.4zM390.9 548.2h9.5v3.4h-9.5zM317.0 551.3h21.9v3.4h-21.9zM390.9 551.3h9.5v3.4h-9.5zM387.8 554.4h12.6v3.4h-12.6zM387.8 557.4h9.5v3.4h-9.5zM387.8 560.5h9.5v3.4h-9.5zM390.9 563.6h12.6v3.4h-12.6zM310.8 575.9h9.5v3.4h-9.5zM307.7 579.0h3.4v3.4h-3.4zM335.5 591.3h6.5v3.4h-6.5zM344.7 597.5h12.6v3.4h-12.6zM301.6 606.7h3.4v3.4h-3.4zM301.6 609.8h3.4v3.4h-3.4zM301.6 612.9h3.4v3.4h-3.4zM304.7 615.9h3.4v3.4h-3.4zM353.9 619.0h9.5v3.4h-9.5zM397.0 619.0h3.4v3.4h-3.4zM307.7 622.1h3.4v3.4h-3.4zM341.6 622.1h9.5v3.4h-9.5zM363.2 622.1h3.4v3.4h-3.4zM310.8 625.2h3.4v3.4h-3.4zM313.9 628.3h28.0v3.4h-28.0zM394.0 634.4h3.4v3.4h-3.4zM347.8 646.7h6.5v3.4h-6.5zM313.9 677.5h3.4v3.4h-3.4z"/><path fill="#306c8e" d="M323.1 532.8h6.5v3.4h-6.5zM326.2 535.9h6.5v3.4h-6.5zM329.3 539.0h6.5v3.4h-6.5zM298.5 542.0h3.4v3.4h-3.4zM332.4 542.0h6.5v3.4h-6.5zM387.8 542.0h3.4v3.4h-3.4zM338.5 545.1h3.4v3.4h-3.4zM341.6 548.2h3.4v3.4h-3.4zM326.2 554.4h15.7v3.4h-15.7zM384.7 554.4h3.4v3.4h-3.4zM357.0 557.4h6.5v3.4h-6.5zM366.2 560.5h3.4v3.4h-3.4zM317.0 563.6h3.4v3.4h-3.4zM372.4 563.6h6.5v3.4h-6.5zM317.0 566.7h3.4v3.4h-3.4zM363.2 566.7h3.4v3.4h-3.4zM317.0 569.8h3.4v3.4h-3.4zM353.9 569.8h3.4v3.4h-3.4zM400.1 569.8h3.4v3.4h-3.4zM353.9 572.8h3.4v3.4h-3.4zM353.9 575.9h3.4v3.4h-3.4zM304.7 585.1h3.4v3.4h-3.4zM320.1 585.1h3.4v3.4h-3.4zM332.4 588.2h24.9v3.4h-24.9zM387.8 594.4h3.4v3.4h-3.4zM347.8 625.2h3.4v3.4h-3.4zM295.4 628.3h15.7v3.4h-15.7zM310.8 631.3h3.4v3.4h-3.4zM313.9 634.4h3.4v3.4h-3.4zM350.9 634.4h3.4v3.4h-3.4zM317.0 637.5h6.5v3.4h-6.5zM353.9 637.5h3.4v3.4h-3.4zM323.1 640.6h3.4v3.4h-3.4zM326.2 643.6h3.4v3.4h-3.4zM289.3 646.7h6.5v3.4h-6.5zM295.4 649.8h3.4v3.4h-3.4zM335.5 649.8h3.4v3.4h-3.4zM363.2 649.8h3.4v3.4h-3.4zM378.6 649.8h3.4v3.4h-3.4zM301.6 652.9h6.5v3.4h-6.5zM366.2 652.9h3.4v3.4h-3.4zM307.7 656.0h3.4v3.4h-3.4zM338.5 656.0h3.4v3.4h-3.4zM341.6 665.2h3.4v3.4h-3.4zM341.6 668.3h3.4v3.4h-3.4zM394.0 668.3h3.4v3.4h-3.4zM307.7 671.4h3.4v3.4h-3.4z"/><path fill="#355f8d" d="M329.3 532.8h34.2v3.4h-34.2zM298.5 535.9h3.4v3.4h-3.4zM332.4 535.9h31.1v3.4h-31.1zM298.5 539.0h3.4v3.4h-3.4zM335.5 539.0h28.0v3.4h-28.0zM387.8 539.0h3.4v3.4h-3.4zM338.5 542.0h24.9v3.4h-24.9zM341.6 545.1h21.9v3.4h-21.9zM295.4 548.2h3.4v3.4h-3.4zM344.7 548.2h18.8v3.4h-18.8zM344.7 551.3h18.8v3.4h-18.8zM341.6 554.4h6.5v3.4h-6.5zM353.9 554.4h9.5v3.4h-9.5zM317.0 557.4h3.4v3.4h-3.4zM353.9 557.4h3.4v3.4h-3.4zM317.0 560.5h3.4v3.4h-3.4zM350.9 560.5h3.4v3.4h-3.4zM390.9 566.7h3.4v3.4h-3.4zM353.9 579.0h3.4v3.4h-3.4zM353.9 582.1h3.4v3.4h-3.4zM301.6 597.5h3.4v3.4h-3.4zM298.5 609.8h3.4v3.4h-3.4zM295.4 622.1h3.4v3.4h-3.4zM292.4 631.3h18.8v3.4h-18.8zM292.4 634.4h21.9v3.4h-21.9zM292.4 637.5h24.9v3.4h-24.9zM292.4 640.6h31.1v3.4h-31.1zM357.0 640.6h3.4v3.4h-3.4zM289.3 643.6h37.2v3.4h-37.2zM295.4 646.7h34.2v3.4h-34.2zM298.5 649.8h24.9v3.4h-24.9zM329.3 649.8h6.5v3.4h-6.5zM286.2 652.9h3.4v3.4h-3.4zM307.7 652.9h3.4v3.4h-3.4zM369.3 652.9h3.4v3.4h-3.4zM289.3 665.2h6.5v3.4h-6.5zM313.9 665.2h3.4v3.4h-3.4zM338.5 668.3h3.4v3.4h-3.4zM320.1 671.4h6.5v3.4h-6.5zM307.7 674.4h3.4v3.4h-3.4z"/><path fill="#482475" d="M366.2 532.8h24.9v3.4h-24.9zM366.2 535.9h21.9v3.4h-21.9zM366.2 539.0h21.9v3.4h-21.9zM366.2 542.0h21.9v3.4h-21.9zM366.2 545.1h21.9v3.4h-21.9zM366.2 548.2h18.8v3.4h-18.8zM363.2 551.3h21.9v3.4h-21.9zM295.4 554.4h3.4v3.4h-3.4zM310.8 554.4h3.4v3.4h-3.4zM363.2 554.4h21.9v3.4h-21.9zM366.2 557.4h18.8v3.4h-18.8zM323.1 560.5h3.4v3.4h-3.4zM375.5 560.5h6.5v3.4h-6.5zM292.4 563.6h3.4v3.4h-3.4zM372.4 566.7h3.4v3.4h-3.4zM344.7 569.8h3.4v3.4h-3.4zM394.0 569.8h3.4v3.4h-3.4zM289.3 575.9h3.4v3.4h-3.4zM326.2 579.0h3.4v3.4h-3.4zM329.3 582.1h9.5v3.4h-9.5zM286.2 585.1h3.4v3.4h-3.4zM283.1 594.4h3.4v3.4h-3.4zM375.5 594.4h3.4v3.4h-3.4zM283.1 597.5h3.4v3.4h-3.4zM280.0 606.7h3.4v3.4h-3.4zM277.0 615.9h3.4v3.4h-3.4zM277.0 619.0h3.4v3.4h-3.4zM273.9 628.3h3.4v3.4h-3.4zM350.9 628.3h3.4v3.4h-3.4zM357.0 628.3h3.4v3.4h-3.4zM360.1 631.3h3.4v3.4h-3.4zM353.9 634.4h3.4v3.4h-3.4zM363.2 634.4h3.4v3.4h-3.4zM270.8 637.5h3.4v3.4h-3.4zM357.0 637.5h3.4v3.4h-3.4zM366.2 637.5h3.4v3.4h-3.4zM270.8 640.6h3.4v3.4h-3.4zM360.1 640.6h3.4v3.4h-3.4zM369.3 640.6h3.4v3.4h-3.4zM363.2 643.6h3.4v3.4h-3.4zM372.4 643.6h3.4v3.4h-3.4zM286.2 646.7h3.4v3.4h-3.4zM375.5 646.7h3.4v3.4h-3.4zM267.7 649.8h3.4v3.4h-3.4zM369.3 649.8h3.4v3.4h-3.4zM375.5 649.8h3.4v3.4h-3.4zM264.6 659.0h3.4v3.4h-3.4zM261.6 668.3h3.4v3.4h-3.4zM304.7 668.3h3.4v3.4h-3.4zM329.3 668.3h3.4v3.4h-3.4zM261.6 671.4h3.4v3.4h-3.4z"/><path fill="#26848d" d="M301.6 535.9h3.4v3.4h-3.4zM301.6 539.0h3.4v3.4h-3.4zM301.6 542.0h3.4v3.4h-3.4zM301.6 545.1h3.4v3.4h-3.4zM304.7 548.2h3.4v3.4h-3.4zM317.0 554.4h6.5v3.4h-6.5zM384.7 563.6h3.4v3.4h-3.4zM394.0 566.7h6.5v3.4h-6.5zM313.9 572.8h3.4v3.4h-3.4zM307.7 575.9h3.4v3.4h-3.4zM341.6 591.3h3.4v3.4h-3.4zM347.8 594.4h12.6v3.4h-12.6zM390.9 594.4h3.4v3.4h-3.4zM397.0 597.5h3.4v3.4h-3.4zM301.6 600.5h3.4v3.4h-3.4zM397.0 600.5h3.4v3.4h-3.4zM397.0 603.6h3.4v3.4h-3.4zM397.0 606.7h3.4v3.4h-3.4zM400.1 612.9h3.4v3.4h-3.4zM400.1 615.9h3.4v3.4h-3.4zM301.6 619.0h3.4v3.4h-3.4zM400.1 619.0h3.4v3.4h-3.4zM304.7 622.1h3.4v3.4h-3.4zM353.9 622.1h9.5v3.4h-9.5zM400.1 622.1h3.4v3.4h-3.4zM307.7 625.2h3.4v3.4h-3.4zM344.7 625.2h3.4v3.4h-3.4zM400.1 625.2h3.4v3.4h-3.4zM310.8 628.3h3.4v3.4h-3.4zM400.1 628.3h3.4v3.4h-3.4zM313.9 631.3h6.5v3.4h-6.5zM338.5 631.3h6.5v3.4h-6.5zM366.2 631.3h3.4v3.4h-3.4zM397.0 631.3h3.4v3.4h-3.4zM397.0 634.4h3.4v3.4h-3.4zM394.0 637.5h3.4v3.4h-3.4zM394.0 640.6h3.4v3.4h-3.4zM344.7 643.6h9.5v3.4h-9.5zM384.7 643.6h6.5v3.4h-6.5zM360.1 649.8h3.4v3.4h-3.4zM360.1 652.9h3.4v3.4h-3.4zM341.6 656.0h3.4v3.4h-3.4zM360.1 656.0h3.4v3.4h-3.4zM341.6 659.0h3.4v3.4h-3.4zM344.7 665.2h18.8v3.4h-18.8zM313.9 674.4h15.7v3.4h-15.7z"/><path fill="#33b47a" d="M304.7 535.9h15.7v3.4h-15.7zM307.7 539.0h15.7v3.4h-15.7zM310.8 542.0h15.7v3.4h-15.7zM313.9 545.1h15.7v3.4h-15.7zM400.1 548.2h3.4v3.4h-3.4zM313.9 579.0h3.4v3.4h-3.4zM304.7 591.3h3.4v3.4h-3.4zM304.7 594.4h3.4v3.4h-3.4zM335.5 594.4h3.4v3.4h-3.4zM369.3 597.5h18.8v3.4h-18.8zM332.4 603.6h3.4v3.4h-3.4zM332.4 606.7h3.4v3.4h-3.4zM332.4 609.8h3.4v3.4h-3.4zM310.8 615.9h3.4v3.4h-3.4zM313.9 619.0h3.4v3.4h-3.4zM329.3 619.0h3.4v3.4h-3.4zM317.0 622.1h3.4v3.4h-3.4zM329.3 622.1h3.4v3.4h-3.4zM369.3 631.3h3.4v3.4h-3.4zM394.0 631.3h3.4v3.4h-3.4zM375.5 637.5h3.4v3.4h-3.4zM390.9 637.5h3.4v3.4h-3.4zM357.0 652.9h3.4v3.4h-3.4zM344.7 659.0h3.4v3.4h-3.4zM353.9 662.1h3.4v3.4h-3.4z"/><path fill="#44347e" d="M363.2 535.9h3.4v3.4h-3.4zM363.2 539.0h3.4v3.4h-3.4zM363.2 542.0h3.4v3.4h-3.4zM363.2 545.1h3.4v3.4h-3.4zM363.2 548.2h3.4v3.4h-3.4zM295.4 551.3h3.4v3.4h-3.4zM338.5 557.4h6.5v3.4h-6.5zM292.4 560.5h3.4v3.4h-3.4zM381.6 560.5h3.4v3.4h-3.4zM323.1 563.6h3.4v3.4h-3.4zM344.7 563.6h3.4v3.4h-3.4zM381.6 563.6h3.4v3.4h-3.4zM323.1 566.7h3.4v3.4h-3.4zM344.7 566.7h3.4v3.4h-3.4zM369.3 566.7h3.4v3.4h-3.4zM387.8 566.7h3.4v3.4h-3.4zM307.7 569.8h3.4v3.4h-3.4zM323.1 569.8h3.4v3.4h-3.4zM363.2 569.8h3.4v3.4h-3.4zM289.3 572.8h3.4v3.4h-3.4zM363.2 572.8h3.4v3.4h-3.4zM363.2 575.9h3.4v3.4h-3.4zM347.8 579.0h3.4v3.4h-3.4zM363.2 579.0h3.4v3.4h-3.4zM286.2 582.1h3.4v3.4h-3.4zM326.2 582.1h3.4v3.4h-3.4zM338.5 582.1h9.5v3.4h-9.5zM363.2 582.1h3.4v3.4h-3.4zM363.2 591.3h3.4v3.4h-3.4zM397.0 591.3h3.4v3.4h-3.4zM280.0 603.6h3.4v3.4h-3.4zM298.5 606.7h3.4v3.4h-3.4zM273.9 625.2h3.4v3.4h-3.4zM353.9 625.2h3.4v3.4h-3.4zM289.3 631.3h3.4v3.4h-3.4zM350.9 631.3h3.4v3.4h-3.4zM267.7 646.7h3.4v3.4h-3.4zM366.2 649.8h3.4v3.4h-3.4zM335.5 652.9h3.4v3.4h-3.4zM375.5 652.9h3.4v3.4h-3.4zM283.1 659.0h3.4v3.4h-3.4zM313.9 662.1h3.4v3.4h-3.4zM338.5 662.1h3.4v3.4h-3.4zM332.4 668.3h3.4v3.4h-3.4zM400.1 668.3h3.4v3.4h-3.4zM394.0 671.4h9.5v3.4h-9.5zM390.9 674.4h12.6v3.4h-12.6zM258.5 677.5h3.4v3.4h-3.4zM307.7 677.5h3.4v3.4h-3.4zM387.8 677.5h15.7v3.4h-15.7z"/><path fill="#22a884" d="M307.7 542.0h3.4v3.4h-3.4zM326.2 542.0h3.4v3.4h-3.4zM310.8 545.1h3.4v3.4h-3.4zM329.3 545.1h3.4v3.4h-3.4zM320.1 548.2h15.7v3.4h-15.7zM397.0 557.4h3.4v3.4h-3.4zM397.0 560.5h3.4v3.4h-3.4zM310.8 579.0h3.4v3.4h-3.4zM317.0 579.0h3.4v3.4h-3.4zM307.7 582.1h3.4v3.4h-3.4zM332.4 591.3h3.4v3.4h-3.4zM338.5 594.4h3.4v3.4h-3.4zM335.5 597.5h9.5v3.4h-9.5zM366.2 597.5h3.4v3.4h-3.4zM394.0 597.5h3.4v3.4h-3.4zM335.5 600.5h31.1v3.4h-31.1zM301.6 603.6h3.4v3.4h-3.4zM335.5 603.6h31.1v3.4h-31.1zM335.5 606.7h31.1v3.4h-31.1zM304.7 609.8h3.4v3.4h-3.4zM335.5 609.8h31.1v3.4h-31.1zM304.7 612.9h6.5v3.4h-6.5zM332.4 612.9h34.2v3.4h-34.2zM307.7 615.9h3.4v3.4h-3.4zM332.4 615.9h34.2v3.4h-34.2zM307.7 619.0h6.5v3.4h-6.5zM332.4 619.0h21.9v3.4h-21.9zM363.2 619.0h3.4v3.4h-3.4zM310.8 622.1h6.5v3.4h-6.5zM332.4 622.1h9.5v3.4h-9.5zM397.0 622.1h3.4v3.4h-3.4zM313.9 625.2h28.0v3.4h-28.0zM397.0 625.2h3.4v3.4h-3.4zM366.2 628.3h3.4v3.4h-3.4zM372.4 637.5h3.4v3.4h-3.4zM357.0 649.8h3.4v3.4h-3.4zM344.7 662.1h3.4v3.4h-3.4zM357.0 662.1h3.4v3.4h-3.4zM317.0 677.5h9.5v3.4h-9.5z"/><path fill="#2a788e" d="M298.5 545.1h3.4v3.4h-3.4zM335.5 545.1h3.4v3.4h-3.4zM298.5 548.2h6.5v3.4h-6.5zM338.5 548.2h3.4v3.4h-3.4zM341.6 551.3h3.4v3.4h-3.4zM313.9 554.4h3.4v3.4h-3.4zM323.1 554.4h3.4v3.4h-3.4zM313.9 557.4h3.4v3.4h-3.4zM384.7 557.4h3.4v3.4h-3.4zM313.9 560.5h3.4v3.4h-3.4zM353.9 560.5h12.6v3.4h-12.6zM310.8 563.6h6.5v3.4h-6.5zM353.9 563.6h18.8v3.4h-18.8zM310.8 566.7h6.5v3.4h-6.5zM353.9 566.7h9.5v3.4h-9.5zM310.8 569.8h6.5v3.4h-6.5zM357.0 569.8h6.5v3.4h-6.5zM310.8 572.8h3.4v3.4h-3.4zM317.0 572.8h3.4v3.4h-3.4zM357.0 572.8h6.5v3.4h-6.5zM357.0 575.9h6.5v3.4h-6.5zM357.0 579.0h6.5v3.4h-6.5zM357.0 582.1h6.5v3.4h-6.5zM357.0 585.1h6.5v3.4h-6.5zM323.1 588.2h9.5v3.4h-9.5zM357.0 588.2h6.5v3.4h-6.5zM344.7 591.3h18.8v3.4h-18.8zM360.1 594.4h6.5v3.4h-6.5zM397.0 594.4h6.5v3.4h-6.5zM400.1 597.5h3.4v3.4h-3.4zM400.1 600.5h3.4v3.4h-3.4zM400.1 603.6h3.4v3.4h-3.4zM400.1 606.7h3.4v3.4h-3.4zM400.1 609.8h3.4v3.4h-3.4zM298.5 612.9h3.4v3.4h-3.4zM298.5 615.9h3.4v3.4h-3.4zM298.5 619.0h3.4v3.4h-3.4zM298.5 622.1h6.5v3.4h-6.5zM295.4 625.2h12.6v3.4h-12.6zM360.1 625.2h3.4v3.4h-3.4zM344.7 628.3h3.4v3.4h-3.4zM363.2 628.3h3.4v3.4h-3.4zM344.7 631.3h6.5v3.4h-6.5zM400.1 631.3h3.4v3.4h-3.4zM317.0 634.4h34.2v3.4h-34.2zM400.1 634.4h3.4v3.4h-3.4zM323.1 637.5h31.1v3.4h-31.1zM397.0 637.5h6.5v3.4h-6.5zM326.2 640.6h31.1v3.4h-31.1zM375.5 640.6h3.4v3.4h-3.4zM397.0 640.6h6.5v3.4h-6.5zM329.3 643.6h15.7v3.4h-15.7zM353.9 643.6h6.5v3.4h-6.5zM378.6 643.6h6.5v3.4h-6.5zM390.9 643.6h12.6v3.4h-12.6zM329.3 646.7h12.6v3.4h-12.6zM360.1 646.7h3.4v3.4h-3.4zM381.6 646.7h21.9v3.4h-21.9zM289.3 649.8h6.5v3.4h-6.5zM338.5 649.8h3.4v3.4h-3.4zM381.6 649.8h21.9v3.4h-21.9zM289.3 652.9h12.6v3.4h-12.6zM338.5 652.9h3.4v3.4h-3.4zM363.2 652.9h3.4v3.4h-3.4zM378.6 652.9h24.9v3.4h-24.9zM286.2 656.0h21.9v3.4h-21.9zM363.2 656.0h40.3v3.4h-40.3zM286.2 659.0h28.0v3.4h-28.0zM363.2 659.0h40.3v3.4h-40.3zM286.2 662.1h28.0v3.4h-28.0zM341.6 662.1h3.4v3.4h-3.4zM363.2 662.1h40.3v3.4h-40.3zM295.4 665.2h18.8v3.4h-18.8zM363.2 665.2h40.3v3.4h-40.3zM307.7 668.3h9.5v3.4h-9.5zM344.7 668.3h49.6v3.4h-49.6zM310.8 671.4h6.5v3.4h-6.5zM326.2 671.4h65.0v3.4h-65.0zM310.8 674.4h3.4v3.4h-3.4zM329.3 674.4h58.8v3.4h-58.8zM310.8 677.5h3.4v3.4h-3.4zM329.3 677.5h55.7v3.4h-55.7z"/><path fill="#461264" d="M298.5 551.3h15.7v3.4h-15.7zM326.2 560.5h18.8v3.4h-18.8zM307.7 563.6h3.4v3.4h-3.4zM326.2 563.6h3.4v3.4h-3.4zM341.6 563.6h3.4v3.4h-3.4zM292.4 566.7h3.4v3.4h-3.4zM307.7 566.7h3.4v3.4h-3.4zM326.2 566.7h3.4v3.4h-3.4zM341.6 566.7h3.4v3.4h-3.4zM375.5 566.7h12.6v3.4h-12.6zM326.2 569.8h3.4v3.4h-3.4zM341.6 569.8h3.4v3.4h-3.4zM366.2 569.8h6.5v3.4h-6.5zM387.8 569.8h6.5v3.4h-6.5zM326.2 572.8h3.4v3.4h-3.4zM344.7 572.8h3.4v3.4h-3.4zM366.2 572.8h3.4v3.4h-3.4zM394.0 572.8h9.5v3.4h-9.5zM304.7 575.9h3.4v3.4h-3.4zM326.2 575.9h3.4v3.4h-3.4zM344.7 575.9h3.4v3.4h-3.4zM366.2 575.9h3.4v3.4h-3.4zM304.7 579.0h3.4v3.4h-3.4zM329.3 579.0h18.8v3.4h-18.8zM366.2 579.0h3.4v3.4h-3.4zM366.2 582.1h3.4v3.4h-3.4zM301.6 585.1h3.4v3.4h-3.4zM363.2 585.1h3.4v3.4h-3.4zM301.6 588.2h3.4v3.4h-3.4zM363.2 588.2h3.4v3.4h-3.4zM397.0 588.2h6.5v3.4h-6.5zM301.6 591.3h3.4v3.4h-3.4zM366.2 591.3h3.4v3.4h-3.4zM378.6 591.3h18.8v3.4h-18.8zM369.3 594.4h6.5v3.4h-6.5zM298.5 600.5h3.4v3.4h-3.4zM298.5 603.6h3.4v3.4h-3.4zM295.4 612.9h3.4v3.4h-3.4zM295.4 615.9h3.4v3.4h-3.4zM292.4 622.1h3.4v3.4h-3.4zM292.4 625.2h3.4v3.4h-3.4zM353.9 628.3h3.4v3.4h-3.4zM353.9 631.3h6.5v3.4h-6.5zM357.0 634.4h6.5v3.4h-6.5zM360.1 637.5h6.5v3.4h-6.5zM363.2 640.6h6.5v3.4h-6.5zM286.2 643.6h3.4v3.4h-3.4zM366.2 643.6h6.5v3.4h-6.5zM366.2 646.7h9.5v3.4h-9.5zM372.4 649.8h3.4v3.4h-3.4zM313.9 652.9h21.9v3.4h-21.9zM283.1 656.0h3.4v3.4h-3.4zM313.9 656.0h24.9v3.4h-24.9zM313.9 659.0h24.9v3.4h-24.9zM264.6 662.1h3.4v3.4h-3.4zM317.0 662.1h21.9v3.4h-21.9zM280.0 665.2h3.4v3.4h-3.4zM317.0 665.2h24.9v3.4h-24.9zM270.8 668.3h34.2v3.4h-34.2zM317.0 668.3h12.6v3.4h-12.6zM270.8 671.4h37.2v3.4h-37.2zM267.7 674.4h40.3v3.4h-40.3zM267.7 677.5h40.3v3.4h-40.3z"/><path fill="#44bf70" d="M400.1 551.3h3.4v3.4h-3.4zM400.1 554.4h3.4v3.4h-3.4zM400.1 557.4h3.4v3.4h-3.4zM400.1 560.5h3.4v3.4h-3.4zM310.8 582.1h9.5v3.4h-9.5zM307.7 585.1h12.6v3.4h-12.6zM307.7 588.2h12.6v3.4h-12.6zM307.7 591.3h24.9v3.4h-24.9zM307.7 594.4h28.0v3.4h-28.0zM304.7 597.5h31.1v3.4h-31.1zM387.8 597.5h6.5v3.4h-6.5zM304.7 600.5h31.1v3.4h-31.1zM366.2 600.5h15.7v3.4h-15.7zM390.9 600.5h6.5v3.4h-6.5zM304.7 603.6h12.6v3.4h-12.6zM326.2 603.6h6.5v3.4h-6.5zM366.2 603.6h3.4v3.4h-3.4zM390.9 603.6h6.5v3.4h-6.5zM304.7 606.7h9.5v3.4h-9.5zM329.3 606.7h3.4v3.4h-3.4zM366.2 606.7h3.4v3.4h-3.4zM390.9 606.7h6.5v3.4h-6.5zM307.7 609.8h6.5v3.4h-6.5zM329.3 609.8h3.4v3.4h-3.4zM366.2 609.8h3.4v3.4h-3.4zM394.0 609.8h3.4v3.4h-3.4zM310.8 612.9h3.4v3.4h-3.4zM329.3 612.9h3.4v3.4h-3.4zM366.2 612.9h3.4v3.4h-3.4zM394.0 612.9h3.4v3.4h-3.4zM313.9 615.9h3.4v3.4h-3.4zM326.2 615.9h6.5v3.4h-6.5zM366.2 615.9h3.4v3.4h-3.4zM394.0 615.9h3.4v3.4h-3.4zM326.2 619.0h3.4v3.4h-3.4zM366.2 619.0h3.4v3.4h-3.4zM394.0 619.0h3.4v3.4h-3.4zM320.1 622.1h9.5v3.4h-9.5zM366.2 622.1h3.4v3.4h-3.4zM394.0 622.1h3.4v3.4h-3.4zM366.2 625.2h6.5v3.4h-6.5zM390.9 625.2h6.5v3.4h-6.5zM369.3 628.3h3.4v3.4h-3.4zM390.9 628.3h6.5v3.4h-6.5zM372.4 631.3h3.4v3.4h-3.4zM390.9 631.3h3.4v3.4h-3.4zM372.4 634.4h12.6v3.4h-12.6zM390.9 634.4h3.4v3.4h-3.4zM378.6 637.5h12.6v3.4h-12.6zM344.7 649.8h12.6v3.4h-12.6zM344.7 652.9h3.4v3.4h-3.4zM344.7 656.0h3.4v3.4h-3.4zM357.0 656.0h3.4v3.4h-3.4zM357.0 659.0h3.4v3.4h-3.4zM347.8 662.1h6.5v3.4h-6.5z"/><path fill="#440154" d="M298.5 554.4h12.6v3.4h-12.6zM295.4 557.4h15.7v3.4h-15.7zM295.4 560.5h15.7v3.4h-15.7zM295.4 563.6h12.6v3.4h-12.6zM329.3 563.6h12.6v3.4h-12.6zM295.4 566.7h12.6v3.4h-12.6zM329.3 566.7h12.6v3.4h-12.6zM292.4 569.8h15.7v3.4h-15.7zM329.3 569.8h12.6v3.4h-12.6zM372.4 569.8h15.7v3.4h-15.7zM292.4 572.8h15.7v3.4h-15.7zM329.3 572.8h15.7v3.4h-15.7zM369.3 572.8h24.9v3.4h-24.9zM292.4 575.9h12.6v3.4h-12.6zM329.3 575.9h15.7v3.4h-15.7zM369.3 575.9h34.2v3.4h-34.2zM289.3 579.0h15.7v3.4h-15.7zM369.3 579.0h34.2v3.4h-34.2zM289.3 582.1h15.7v3.4h-15.7zM369.3 582.1h34.2v3.4h-34.2zM289.3 585.1h12.6v3.4h-12.6zM366.2 585.1h37.2v3.4h-37.2zM286.2 588.2h15.7v3.4h-15.7zM366.2 588.2h31.1v3.4h-31.1zM286.2 591.3h15.7v3.4h-15.7zM369.3 591.3h9.5v3.4h-9.5zM286.2 594.4h15.7v3.4h-15.7zM286.2 597.5h15.7v3.4h-15.7zM283.1 600.5h15.7v3.4h-15.7zM283.1 603.6h15.7v3.4h-15.7zM283.1 606.7h15.7v3.4h-15.7zM280.0 609.8h18.8v3.4h-18.8zM280.0 612.9h15.7v3.4h-15.7zM280.0 615.9h15.7v3.4h-15.7zM280.0 619.0h15.7v3.4h-15.7zM277.0 622.1h15.7v3.4h-15.7zM277.0 625.2h15.7v3.4h-15.7zM277.0 628.3h15.7v3.4h-15.7zM273.9 631.3h15.7v3.4h-15.7zM273.9 634.4h15.7v3.4h-15.7zM273.9 637.5h15.7v3.4h-15.7zM273.9 640.6h15.7v3.4h-15.7zM270.8 643.6h15.7v3.4h-15.7zM270.8 646.7h15.7v3.4h-15.7zM270.8 649.8h15.7v3.4h-15.7zM267.7 652.9h18.8v3.4h-18.8zM267.7 656.0h15.7v3.4h-15.7zM267.7 659.0h15.7v3.4h-15.7zM267.7 662.1h15.7v3.4h-15.7zM264.6 665.2h15.7v3.4h-15.7zM264.6 668.3h6.5v3.4h-6.5zM264.6 671.4h6.5v3.4h-6.5zM261.6 674.4h6.5v3.4h-6.5zM261.6 677.5h6.5v3.4h-6.5z"/><path fill="#5fc860" d="M381.6 600.5h3.4v3.4h-3.4zM317.0 603.6h9.5v3.4h-9.5zM313.9 606.7h3.4v3.4h-3.4zM326.2 606.7h3.4v3.4h-3.4zM326.2 609.8h3.4v3.4h-3.4zM390.9 609.8h3.4v3.4h-3.4zM313.9 612.9h3.4v3.4h-3.4zM326.2 612.9h3.4v3.4h-3.4zM323.1 619.0h3.4v3.4h-3.4zM372.4 628.3h3.4v3.4h-3.4zM387.8 634.4h3.4v3.4h-3.4z"/><path fill="#7ad151" d="M384.7 600.5h6.5v3.4h-6.5zM369.3 603.6h6.5v3.4h-6.5zM323.1 606.7h3.4v3.4h-3.4zM313.9 609.8h3.4v3.4h-3.4zM323.1 609.8h3.4v3.4h-3.4zM323.1 612.9h3.4v3.4h-3.4zM390.9 612.9h3.4v3.4h-3.4zM323.1 615.9h3.4v3.4h-3.4zM317.0 619.0h6.5v3.4h-6.5zM369.3 622.1h3.4v3.4h-3.4zM390.9 622.1h3.4v3.4h-3.4zM375.5 631.3h3.4v3.4h-3.4zM387.8 631.3h3.4v3.4h-3.4zM384.7 634.4h3.4v3.4h-3.4zM347.8 652.9h9.5v3.4h-9.5zM347.8 656.0h9.5v3.4h-9.5zM347.8 659.0h9.5v3.4h-9.5z"/><path fill="#9cd83c" d="M375.5 603.6h3.4v3.4h-3.4zM317.0 606.7h6.5v3.4h-6.5zM317.0 609.8h6.5v3.4h-6.5zM317.0 612.9h6.5v3.4h-6.5zM317.0 615.9h6.5v3.4h-6.5zM390.9 615.9h3.4v3.4h-3.4zM390.9 619.0h3.4v3.4h-3.4zM372.4 625.2h3.4v3.4h-3.4zM387.8 628.3h3.4v3.4h-3.4zM378.6 631.3h3.4v3.4h-3.4z"/><path fill="#bddf26" d="M378.6 603.6h12.6v3.4h-12.6zM369.3 606.7h6.5v3.4h-6.5zM387.8 606.7h3.4v3.4h-3.4zM369.3 609.8h3.4v3.4h-3.4zM387.8 609.8h3.4v3.4h-3.4zM369.3 612.9h3.4v3.4h-3.4zM387.8 612.9h3.4v3.4h-3.4zM369.3 615.9h3.4v3.4h-3.4zM369.3 619.0h3.4v3.4h-3.4zM372.4 622.1h3.4v3.4h-3.4zM387.8 622.1h3.4v3.4h-3.4zM375.5 625.2h3.4v3.4h-3.4zM387.8 625.2h3.4v3.4h-3.4zM375.5 628.3h6.5v3.4h-6.5zM381.6 631.3h6.5v3.4h-6.5z"/><path fill="#dde326" d="M375.5 606.7h6.5v3.4h-6.5zM372.4 609.8h6.5v3.4h-6.5zM372.4 612.9h6.5v3.4h-6.5zM372.4 615.9h6.5v3.4h-6.5zM387.8 615.9h3.4v3.4h-3.4zM372.4 619.0h6.5v3.4h-6.5zM387.8 619.0h3.4v3.4h-3.4zM375.5 622.1h3.4v3.4h-3.4zM378.6 625.2h9.5v3.4h-9.5zM381.6 628.3h6.5v3.4h-6.5z"/><path fill="#fde725" d="M381.6 606.7h6.5v3.4h-6.5zM378.6 609.8h9.5v3.4h-9.5zM378.6 612.9h9.5v3.4h-9.5zM378.6 615.9h9.5v3.4h-9.5zM378.6 619.0h9.5v3.4h-9.5zM378.6 622.1h9.5v3.4h-9.5z"/></g><rect x="280.19" y="557.59" width="98.22" height="98.22" fill="none" stroke="#ff0000" stroke-width="1.4"/><text x="329.30" y="546.86" font-family="Liberation Sans" font-size="11.2" fill="#ff0000" text-anchor="middle" stroke="#ff0000" stroke-width="0.1">N</text><text x="265.13" y="610.70" font-family="Liberation Sans" font-size="11.2" fill="#ff0000" text-anchor="middle" stroke="#ff0000" stroke-width="0.1">E</text><path d="M329.30 569.05V598.52M329.30 614.88V644.35M291.65 606.70H321.12M337.49 606.70H366.95" stroke="#ff0000" stroke-width="1.4"/><text x="329.30" y="525.60" font-family="Liberation Sans" font-size="12.6" fill="#111" text-anchor="middle" textLength="82.0" lengthAdjust="spacingAndGlyphs" stroke="#111" stroke-width="0.1">Lineflux Map</text><rect x="255.4" y="532.8" width="147.8" height="147.8" fill="none" stroke="#222" stroke-width="1.1"/><text x="263.82" y="696.60" font-family="Liberation Sans" font-size="11" fill="#111" text-anchor="middle" textLength="13.4" lengthAdjust="spacingAndGlyphs" stroke="#111" stroke-width="0.1">−4</text><text x="247.60" y="676.18" font-family="Liberation Sans" font-size="11" fill="#111" text-anchor="end" textLength="13.4" lengthAdjust="spacingAndGlyphs" stroke="#111" stroke-width="0.1">−4</text><text x="296.56" y="696.60" font-family="Liberation Sans" font-size="11" fill="#111" text-anchor="middle" textLength="13.4" lengthAdjust="spacingAndGlyphs" stroke="#111" stroke-width="0.1">−2</text><text x="247.60" y="643.44" font-family="Liberation Sans" font-size="11" fill="#111" text-anchor="end" textLength="13.4" lengthAdjust="spacingAndGlyphs" stroke="#111" stroke-width="0.1">−2</text><text x="329.30" y="696.60" font-family="Liberation Sans" font-size="11" fill="#111" text-anchor="middle" stroke="#111" stroke-width="0.1">0</text><text x="247.60" y="610.70" font-family="Liberation Sans" font-size="11" fill="#111" text-anchor="end" stroke="#111" stroke-width="0.1">0</text><text x="362.04" y="696.60" font-family="Liberation Sans" font-size="11" fill="#111" text-anchor="middle" stroke="#111" stroke-width="0.1">2</text><text x="247.60" y="577.96" font-family="Liberation Sans" font-size="11" fill="#111" text-anchor="end" stroke="#111" stroke-width="0.1">2</text><text x="394.78" y="696.60" font-family="Liberation Sans" font-size="11" fill="#111" text-anchor="middle" stroke="#111" stroke-width="0.1">4</text><text x="247.60" y="545.22" font-family="Liberation Sans" font-size="11" fill="#111" text-anchor="end" stroke="#111" stroke-width="0.1">4</text><path d="M263.82 680.5999999999999v3.5M255.4 672.18h-3.5M296.56 680.5999999999999v3.5M255.4 639.44h-3.5M329.30 680.5999999999999v3.5M255.4 606.70h-3.5M362.04 680.5999999999999v3.5M255.4 573.96h-3.5M394.78 680.5999999999999v3.5M255.4 541.22h-3.5" stroke="#222" stroke-width="0.9"/><text x="329.30" y="706.00" font-family="Liberation Sans" font-size="11.2" fill="#111" text-anchor="middle" textLength="99.7" lengthAdjust="spacingAndGlyphs" stroke="#111" stroke-width="0.1">s/b: 1.34 +/- 0.087</text><g shape-rendering="crispEdges" filter="url(#blur08)"><rect x="440.5" y="532.8" width="147.8" height="147.8" fill="#d3d3d3"/><path fill="#c8c8c8" d="M440.5 532.8h7.5v2.5h-7.5zM450.5 532.8h7.5v2.5h-7.5zM465.5 532.8h5v2.5h-5zM473 532.8h2.5v2.5h-2.5zM483 532.8h2.5v2.5h-2.5zM510.5 532.8h5v2.5h-5zM518 532.8h5v2.5h-5zM530.5 532.8h2.5v2.5h-2.5zM540.5 532.8h7.5v2.5h-7.5zM560.5 532.8h5v2.5h-5zM568 532.8h2.5v2.5h-2.5zM573 532.8h2.5v2.5h-2.5zM585.5 532.8h2.5v2.5h-2.5zM475.5 535.3h7.5v2.5h-7.5zM490.5 535.3h2.5v2.5h-2.5zM510.5 535.3h2.5v2.5h-2.5zM533 535.3h2.5v2.5h-2.5zM555.5 535.3h2.5v2.5h-2.5zM565.5 535.3h2.5v2.5h-2.5zM573 535.3h2.5v2.5h-2.5zM578 535.3h2.5v2.5h-2.5zM585.5 535.3h2.5v2.5h-2.5zM440.5 537.8h2.5v2.5h-2.5zM445.5 537.8h2.5v2.5h-2.5zM455.5 537.8h2.5v2.5h-2.5zM463 537.8h2.5v2.5h-2.5zM475.5 537.8h2.5v2.5h-2.5zM483 537.8h5v2.5h-5zM495.5 537.8h2.5v2.5h-2.5zM500.5 537.8h2.5v2.5h-2.5zM510.5 537.8h7.5v2.5h-7.5zM523 537.8h5v2.5h-5zM530.5 537.8h7.5v2.5h-7.5zM543 537.8h7.5v2.5h-7.5zM555.5 537.8h5v2.5h-5zM573 537.8h5v2.5h-5zM580.5 537.8h5v2.5h-5zM443 540.3h2.5v2.5h-2.5zM473 540.3h5v2.5h-5zM513 540.3h2.5v2.5h-2.5zM538 540.3h5v2.5h-5zM545.5 540.3h2.5v2.5h-2.5zM565.5 540.3h2.5v2.5h-2.5zM443 542.8h2.5v2.5h-2.5zM448 542.8h2.5v2.5h-2.5zM458 542.8h2.5v2.5h-2.5zM473 542.8h2.5v2.5h-2.5zM483 542.8h2.5v2.5h-2.5zM488 542.8h2.5v2.5h-2.5zM495.5 542.8h5v2.5h-5zM503 542.8h2.5v2.5h-2.5zM510.5 542.8h2.5v2.5h-2.5zM515.5 542.8h2.5v2.5h-2.5zM520.5 542.8h2.5v2.5h-2.5zM530.5 542.8h2.5v2.5h-2.5zM538 542.8h5v2.5h-5zM548 542.8h2.5v2.5h-2.5zM558 542.8h5v2.5h-5zM578 542.8h7.5v2.5h-7.5zM448 545.3h2.5v2.5h-2.5zM458 545.3h2.5v2.5h-2.5zM478 545.3h2.5v2.5h-2.5zM485.5 545.3h2.5v2.5h-2.5zM503 545.3h2.5v2.5h-2.5zM508 545.3h2.5v2.5h-2.5zM513 545.3h2.5v2.5h-2.5zM520.5 545.3h2.5v2.5h-2.5zM530.5 545.3h2.5v2.5h-2.5zM568 545.3h2.5v2.5h-2.5zM573 545.3h2.5v2.5h-2.5zM585.5 545.3h2.5v2.5h-2.5zM440.5 547.8h5v2.5h-5zM448 547.8h2.5v2.5h-2.5zM470.5 547.8h10v2.5h-10zM485.5 547.8h2.5v2.5h-2.5zM508 547.8h2.5v2.5h-2.5zM513 547.8h7.5v2.5h-7.5zM540.5 547.8h2.5v2.5h-2.5zM550.5 547.8h2.5v2.5h-2.5zM558 547.8h2.5v2.5h-2.5zM570.5 547.8h2.5v2.5h-2.5zM585.5 547.8h2.5v2.5h-2.5zM440.5 550.3h2.5v2.5h-2.5zM460.5 550.3h2.5v2.5h-2.5zM465.5 550.3h5v2.5h-5zM473 550.3h7.5v2.5h-7.5zM483 550.3h2.5v2.5h-2.5zM488 550.3h2.5v2.5h-2.5zM510.5 550.3h2.5v2.5h-2.5zM515.5 550.3h5v2.5h-5zM528 550.3h2.5v2.5h-2.5zM538 550.3h5v2.5h-5zM548 550.3h2.5v2.5h-2.5zM553 550.3h5v2.5h-5zM568 550.3h5v2.5h-5zM580.5 550.3h2.5v2.5h-2.5zM448 552.8h2.5v2.5h-2.5zM455.5 552.8h2.5v2.5h-2.5zM485.5 552.8h2.5v2.5h-2.5zM515.5 552.8h2.5v2.5h-2.5zM523 552.8h2.5v2.5h-2.5zM530.5 552.8h2.5v2.5h-2.5zM550.5 552.8h2.5v2.5h-2.5zM555.5 552.8h2.5v2.5h-2.5zM560.5 552.8h2.5v2.5h-2.5zM565.5 552.8h5v2.5h-5zM440.5 555.3h2.5v2.5h-2.5zM460.5 555.3h5v2.5h-5zM470.5 555.3h2.5v2.5h-2.5zM478 555.3h7.5v2.5h-7.5zM503 555.3h5v2.5h-5zM510.5 555.3h5v2.5h-5zM535.5 555.3h2.5v2.5h-2.5zM548 555.3h2.5v2.5h-2.5zM555.5 555.3h2.5v2.5h-2.5zM560.5 555.3h2.5v2.5h-2.5zM568 555.3h7.5v2.5h-7.5zM585.5 555.3h2.8v2.5h-2.8zM455.5 557.8h2.5v2.5h-2.5zM465.5 557.8h2.5v2.5h-2.5zM488 557.8h5v2.5h-5zM498 557.8h12.5v2.5h-12.5zM523 557.8h2.5v2.5h-2.5zM533 557.8h2.5v2.5h-2.5zM548 557.8h2.5v2.5h-2.5zM563 557.8h2.5v2.5h-2.5zM570.5 557.8h2.5v2.5h-2.5zM583 557.8h2.5v2.5h-2.5zM588 557.8h0.3v2.5h-0.3zM440.5 560.3h2.5v2.5h-2.5zM448 560.3h2.5v2.5h-2.5zM458 560.3h2.5v2.5h-2.5zM463 560.3h2.5v2.5h-2.5zM485.5 560.3h2.5v2.5h-2.5zM490.5 560.3h2.5v2.5h-2.5zM518 560.3h2.5v2.5h-2.5zM545.5 560.3h2.5v2.5h-2.5zM553 560.3h2.5v2.5h-2.5zM565.5 560.3h5v2.5h-5zM580.5 560.3h5v2.5h-5zM448 562.8h2.5v2.5h-2.5zM455.5 562.8h5v2.5h-5zM463 562.8h2.5v2.5h-2.5zM468 562.8h2.5v2.5h-2.5zM473 562.8h2.5v2.5h-2.5zM480.5 562.8h2.5v2.5h-2.5zM485.5 562.8h2.5v2.5h-2.5zM490.5 562.8h2.5v2.5h-2.5zM495.5 562.8h7.5v2.5h-7.5zM510.5 562.8h7.5v2.5h-7.5zM525.5 562.8h5v2.5h-5zM578 562.8h2.5v2.5h-2.5zM450.5 565.3h2.5v2.5h-2.5zM460.5 565.3h2.5v2.5h-2.5zM470.5 565.3h5v2.5h-5zM480.5 565.3h2.5v2.5h-2.5zM493 565.3h2.5v2.5h-2.5zM505.5 565.3h10v2.5h-10zM533 565.3h2.5v2.5h-2.5zM540.5 565.3h2.5v2.5h-2.5zM548 565.3h2.5v2.5h-2.5zM553 565.3h5v2.5h-5zM560.5 565.3h2.5v2.5h-2.5zM575.5 565.3h7.5v2.5h-7.5zM448 567.8h2.5v2.5h-2.5zM465.5 567.8h2.5v2.5h-2.5zM470.5 567.8h2.5v2.5h-2.5zM480.5 567.8h2.5v2.5h-2.5zM490.5 567.8h2.5v2.5h-2.5zM518 567.8h2.5v2.5h-2.5zM533 567.8h2.5v2.5h-2.5zM543 567.8h2.5v2.5h-2.5zM575.5 567.8h2.5v2.5h-2.5zM583 567.8h2.5v2.5h-2.5zM453 570.3h2.5v2.5h-2.5zM465.5 570.3h5v2.5h-5zM473 570.3h5v2.5h-5zM480.5 570.3h5v2.5h-5zM525.5 570.3h2.5v2.5h-2.5zM530.5 570.3h2.5v2.5h-2.5zM540.5 570.3h5v2.5h-5zM560.5 570.3h2.5v2.5h-2.5zM565.5 570.3h2.5v2.5h-2.5zM575.5 570.3h2.5v2.5h-2.5zM443 572.8h2.5v2.5h-2.5zM450.5 572.8h2.5v2.5h-2.5zM460.5 572.8h10v2.5h-10zM473 572.8h2.5v2.5h-2.5zM538 572.8h5v2.5h-5zM548 572.8h2.5v2.5h-2.5zM558 572.8h7.5v2.5h-7.5zM570.5 572.8h2.5v2.5h-2.5zM578 572.8h2.5v2.5h-2.5zM453 575.3h2.5v2.5h-2.5zM458 575.3h2.5v2.5h-2.5zM470.5 575.3h2.5v2.5h-2.5zM523 575.3h2.5v2.5h-2.5zM543 575.3h2.5v2.5h-2.5zM548 575.3h2.5v2.5h-2.5zM553 575.3h5v2.5h-5zM565.5 575.3h5v2.5h-5zM458 577.8h2.5v2.5h-2.5zM528 577.8h2.5v2.5h-2.5zM533 577.8h2.5v2.5h-2.5zM553 577.8h2.5v2.5h-2.5zM558 577.8h2.5v2.5h-2.5zM588 577.8h0.3v2.5h-0.3zM445.5 580.3h2.5v2.5h-2.5zM455.5 580.3h7.5v2.5h-7.5zM468 580.3h2.5v2.5h-2.5zM480.5 580.3h2.5v2.5h-2.5zM523 580.3h2.5v2.5h-2.5zM543 580.3h5v2.5h-5zM558 580.3h2.5v2.5h-2.5zM563 580.3h2.5v2.5h-2.5zM568 580.3h5v2.5h-5zM578 580.3h2.5v2.5h-2.5zM583 580.3h2.5v2.5h-2.5zM588 580.3h0.3v2.5h-0.3zM448 582.8h2.5v2.5h-2.5zM455.5 582.8h2.5v2.5h-2.5zM460.5 582.8h2.5v2.5h-2.5zM468 582.8h2.5v2.5h-2.5zM478 582.8h2.5v2.5h-2.5zM568 582.8h2.5v2.5h-2.5zM440.5 585.3h2.5v2.5h-2.5zM453 585.3h2.5v2.5h-2.5zM463 585.3h2.5v2.5h-2.5zM540.5 585.3h2.5v2.5h-2.5zM545.5 585.3h2.5v2.5h-2.5zM588 585.3h0.3v2.5h-0.3zM450.5 587.8h2.5v2.5h-2.5zM460.5 587.8h2.5v2.5h-2.5zM530.5 587.8h2.5v2.5h-2.5zM540.5 587.8h5v2.5h-5zM573 587.8h5v2.5h-5zM583 587.8h2.5v2.5h-2.5zM588 587.8h0.3v2.5h-0.3zM453 590.3h2.5v2.5h-2.5zM458 590.3h2.5v2.5h-2.5zM473 590.3h2.5v2.5h-2.5zM530.5 590.3h5v2.5h-5zM545.5 590.3h2.5v2.5h-2.5zM550.5 590.3h2.5v2.5h-2.5zM565.5 590.3h2.5v2.5h-2.5zM578 590.3h2.5v2.5h-2.5zM443 592.8h2.5v2.5h-2.5zM468 592.8h2.5v2.5h-2.5zM475.5 592.8h5v2.5h-5zM525.5 592.8h2.5v2.5h-2.5zM538 592.8h2.5v2.5h-2.5zM570.5 592.8h5v2.5h-5zM583 592.8h5.3v2.5h-5.3zM440.5 595.3h2.5v2.5h-2.5zM463 595.3h2.5v2.5h-2.5zM470.5 595.3h2.5v2.5h-2.5zM530.5 595.3h5v2.5h-5zM553 595.3h2.5v2.5h-2.5zM565.5 595.3h2.5v2.5h-2.5zM573 595.3h2.5v2.5h-2.5zM578 595.3h2.5v2.5h-2.5zM583 595.3h2.5v2.5h-2.5zM463 597.8h2.5v2.5h-2.5zM468 597.8h7.5v2.5h-7.5zM478 597.8h2.5v2.5h-2.5zM548 597.8h2.5v2.5h-2.5zM558 597.8h2.5v2.5h-2.5zM570.5 597.8h7.5v2.5h-7.5zM583 597.8h2.5v2.5h-2.5zM460.5 600.3h2.5v2.5h-2.5zM468 600.3h5v2.5h-5zM480.5 600.3h2.5v2.5h-2.5zM525.5 600.3h2.5v2.5h-2.5zM535.5 600.3h2.5v2.5h-2.5zM560.5 600.3h5v2.5h-5zM588 600.3h0.3v2.5h-0.3zM440.5 602.8h2.5v2.5h-2.5zM458 602.8h2.5v2.5h-2.5zM470.5 602.8h2.5v2.5h-2.5zM483 602.8h2.5v2.5h-2.5zM523 602.8h5v2.5h-5zM530.5 602.8h7.5v2.5h-7.5zM545.5 602.8h2.5v2.5h-2.5zM550.5 602.8h2.5v2.5h-2.5zM570.5 602.8h2.5v2.5h-2.5zM578 602.8h5v2.5h-5zM443 605.3h2.5v2.5h-2.5zM458 605.3h2.5v2.5h-2.5zM475.5 605.3h2.5v2.5h-2.5zM520.5 605.3h2.5v2.5h-2.5zM528 605.3h5v2.5h-5zM555.5 605.3h5v2.5h-5zM573 605.3h2.5v2.5h-2.5zM585.5 605.3h2.5v2.5h-2.5zM445.5 607.8h2.5v2.5h-2.5zM455.5 607.8h2.5v2.5h-2.5zM460.5 607.8h2.5v2.5h-2.5zM470.5 607.8h2.5v2.5h-2.5zM530.5 607.8h2.5v2.5h-2.5zM535.5 607.8h2.5v2.5h-2.5zM545.5 607.8h2.5v2.5h-2.5zM553 607.8h2.5v2.5h-2.5zM558 607.8h2.5v2.5h-2.5zM565.5 607.8h5v2.5h-5zM575.5 607.8h2.5v2.5h-2.5zM580.5 607.8h2.5v2.5h-2.5zM585.5 607.8h2.8v2.5h-2.8zM443 610.3h7.5v2.5h-7.5zM465.5 610.3h2.5v2.5h-2.5zM470.5 610.3h2.5v2.5h-2.5zM475.5 610.3h2.5v2.5h-2.5zM480.5 610.3h2.5v2.5h-2.5zM488 610.3h2.5v2.5h-2.5zM493 610.3h2.5v2.5h-2.5zM510.5 610.3h2.5v2.5h-2.5zM525.5 610.3h2.5v2.5h-2.5zM530.5 610.3h2.5v2.5h-2.5zM545.5 610.3h2.5v2.5h-2.5zM563 610.3h5v2.5h-5zM573 610.3h2.5v2.5h-2.5zM588 610.3h0.3v2.5h-0.3zM440.5 612.8h2.5v2.5h-2.5zM455.5 612.8h5v2.5h-5zM465.5 612.8h5v2.5h-5zM473 612.8h5v2.5h-5zM498 612.8h2.5v2.5h-2.5zM503 612.8h7.5v2.5h-7.5zM513 612.8h2.5v2.5h-2.5zM523 612.8h2.5v2.5h-2.5zM528 612.8h2.5v2.5h-2.5zM533 612.8h5v2.5h-5zM543 612.8h2.5v2.5h-2.5zM555.5 612.8h2.5v2.5h-2.5zM563 612.8h2.5v2.5h-2.5zM440.5 615.3h2.5v2.5h-2.5zM450.5 615.3h2.5v2.5h-2.5zM455.5 615.3h2.5v2.5h-2.5zM478 615.3h10v2.5h-10zM493 615.3h2.5v2.5h-2.5zM500.5 615.3h2.5v2.5h-2.5zM515.5 615.3h5v2.5h-5zM533 615.3h2.5v2.5h-2.5zM540.5 615.3h2.5v2.5h-2.5zM558 615.3h2.5v2.5h-2.5zM565.5 615.3h2.5v2.5h-2.5zM570.5 615.3h2.5v2.5h-2.5zM575.5 615.3h2.5v2.5h-2.5zM580.5 615.3h2.5v2.5h-2.5zM470.5 617.8h2.5v2.5h-2.5zM478 617.8h2.5v2.5h-2.5zM490.5 617.8h2.5v2.5h-2.5zM523 617.8h7.5v2.5h-7.5zM543 617.8h2.5v2.5h-2.5zM565.5 617.8h5v2.5h-5zM580.5 617.8h2.5v2.5h-2.5zM445.5 620.3h2.5v2.5h-2.5zM483 620.3h2.5v2.5h-2.5zM488 620.3h2.5v2.5h-2.5zM495.5 620.3h2.5v2.5h-2.5zM500.5 620.3h5v2.5h-5zM525.5 620.3h2.5v2.5h-2.5zM533 620.3h2.5v2.5h-2.5zM540.5 620.3h7.5v2.5h-7.5zM443 622.8h2.5v2.5h-2.5zM458 622.8h2.5v2.5h-2.5zM463 622.8h5v2.5h-5zM478 622.8h2.5v2.5h-2.5zM488 622.8h2.5v2.5h-2.5zM510.5 622.8h2.5v2.5h-2.5zM515.5 622.8h2.5v2.5h-2.5zM525.5 622.8h5v2.5h-5zM543 622.8h5v2.5h-5zM553 622.8h2.5v2.5h-2.5zM570.5 622.8h2.5v2.5h-2.5zM575.5 622.8h5v2.5h-5zM448 625.3h2.5v2.5h-2.5zM460.5 625.3h5v2.5h-5zM470.5 625.3h5v2.5h-5zM493 625.3h2.5v2.5h-2.5zM520.5 625.3h7.5v2.5h-7.5zM573 625.3h5v2.5h-5zM580.5 625.3h2.5v2.5h-2.5zM585.5 625.3h2.8v2.5h-2.8zM453 627.8h2.5v2.5h-2.5zM465.5 627.8h5v2.5h-5zM473 627.8h2.5v2.5h-2.5zM483 627.8h2.5v2.5h-2.5zM493 627.8h2.5v2.5h-2.5zM500.5 627.8h2.5v2.5h-2.5zM515.5 627.8h2.5v2.5h-2.5zM528 627.8h2.5v2.5h-2.5zM553 627.8h2.5v2.5h-2.5zM563 627.8h2.5v2.5h-2.5zM578 627.8h2.5v2.5h-2.5zM585.5 627.8h2.5v2.5h-2.5zM440.5 630.3h2.5v2.5h-2.5zM445.5 630.3h5v2.5h-5zM455.5 630.3h2.5v2.5h-2.5zM468 630.3h5v2.5h-5zM513 630.3h5v2.5h-5zM535.5 630.3h2.5v2.5h-2.5zM543 630.3h2.5v2.5h-2.5zM548 630.3h2.5v2.5h-2.5zM568 630.3h2.5v2.5h-2.5zM580.5 630.3h5v2.5h-5zM453 632.8h2.5v2.5h-2.5zM465.5 632.8h2.5v2.5h-2.5zM473 632.8h2.5v2.5h-2.5zM488 632.8h5v2.5h-5zM500.5 632.8h2.5v2.5h-2.5zM510.5 632.8h2.5v2.5h-2.5zM523 632.8h2.5v2.5h-2.5zM535.5 632.8h5v2.5h-5zM550.5 632.8h2.5v2.5h-2.5zM573 632.8h5v2.5h-5zM583 632.8h2.5v2.5h-2.5zM588 632.8h0.3v2.5h-0.3zM440.5 635.3h2.5v2.5h-2.5zM455.5 635.3h2.5v2.5h-2.5zM465.5 635.3h2.5v2.5h-2.5zM475.5 635.3h2.5v2.5h-2.5zM488 635.3h5v2.5h-5zM503 635.3h2.5v2.5h-2.5zM513 635.3h2.5v2.5h-2.5zM518 635.3h2.5v2.5h-2.5zM545.5 635.3h2.5v2.5h-2.5zM553 635.3h7.5v2.5h-7.5zM580.5 635.3h2.5v2.5h-2.5zM440.5 637.8h2.5v2.5h-2.5zM445.5 637.8h2.5v2.5h-2.5zM455.5 637.8h2.5v2.5h-2.5zM475.5 637.8h5v2.5h-5zM488 637.8h2.5v2.5h-2.5zM493 637.8h2.5v2.5h-2.5zM500.5 637.8h2.5v2.5h-2.5zM518 637.8h2.5v2.5h-2.5zM530.5 637.8h5v2.5h-5zM538 637.8h2.5v2.5h-2.5zM543 637.8h2.5v2.5h-2.5zM555.5 637.8h2.5v2.5h-2.5zM563 637.8h5v2.5h-5zM573 637.8h2.5v2.5h-2.5zM585.5 637.8h2.5v2.5h-2.5zM445.5 640.3h2.5v2.5h-2.5zM453 640.3h2.5v2.5h-2.5zM460.5 640.3h5v2.5h-5zM470.5 640.3h10v2.5h-10zM483 640.3h2.5v2.5h-2.5zM490.5 640.3h2.5v2.5h-2.5zM498 640.3h2.5v2.5h-2.5zM503 640.3h2.5v2.5h-2.5zM523 640.3h2.5v2.5h-2.5zM530.5 640.3h2.5v2.5h-2.5zM540.5 640.3h2.5v2.5h-2.5zM548 640.3h2.5v2.5h-2.5zM563 640.3h5v2.5h-5zM578 640.3h2.5v2.5h-2.5zM588 640.3h0.3v2.5h-0.3zM465.5 642.8h5v2.5h-5zM473 642.8h2.5v2.5h-2.5zM485.5 642.8h2.5v2.5h-2.5zM490.5 642.8h5v2.5h-5zM500.5 642.8h2.5v2.5h-2.5zM515.5 642.8h2.5v2.5h-2.5zM525.5 642.8h2.5v2.5h-2.5zM530.5 642.8h2.5v2.5h-2.5zM540.5 642.8h2.5v2.5h-2.5zM548 642.8h2.5v2.5h-2.5zM555.5 642.8h2.5v2.5h-2.5zM445.5 645.3h2.5v2.5h-2.5zM453 645.3h2.5v2.5h-2.5zM463 645.3h2.5v2.5h-2.5zM473 645.3h2.5v2.5h-2.5zM478 645.3h2.5v2.5h-2.5zM485.5 645.3h2.5v2.5h-2.5zM495.5 645.3h2.5v2.5h-2.5zM518 645.3h2.5v2.5h-2.5zM540.5 645.3h2.5v2.5h-2.5zM550.5 645.3h2.5v2.5h-2.5zM565.5 645.3h2.5v2.5h-2.5zM570.5 645.3h5v2.5h-5zM578 645.3h5v2.5h-5zM458 647.8h5v2.5h-5zM483 647.8h2.5v2.5h-2.5zM490.5 647.8h2.5v2.5h-2.5zM495.5 647.8h2.5v2.5h-2.5zM508 647.8h2.5v2.5h-2.5zM513 647.8h7.5v2.5h-7.5zM523 647.8h2.5v2.5h-2.5zM533 647.8h2.5v2.5h-2.5zM548 647.8h2.5v2.5h-2.5zM568 647.8h2.5v2.5h-2.5zM588 647.8h0.3v2.5h-0.3zM443 650.3h2.5v2.5h-2.5zM450.5 650.3h2.5v2.5h-2.5zM470.5 650.3h5v2.5h-5zM478 650.3h2.5v2.5h-2.5zM483 650.3h2.5v2.5h-2.5zM488 650.3h5v2.5h-5zM515.5 650.3h5v2.5h-5zM525.5 650.3h2.5v2.5h-2.5zM533 650.3h2.5v2.5h-2.5zM538 650.3h2.5v2.5h-2.5zM550.5 650.3h2.5v2.5h-2.5zM570.5 650.3h2.5v2.5h-2.5zM585.5 650.3h2.5v2.5h-2.5zM458 652.8h2.5v2.5h-2.5zM470.5 652.8h2.5v2.5h-2.5zM478 652.8h2.5v2.5h-2.5zM493 652.8h2.5v2.5h-2.5zM513 652.8h2.5v2.5h-2.5zM520.5 652.8h2.5v2.5h-2.5zM533 652.8h2.5v2.5h-2.5zM543 652.8h2.5v2.5h-2.5zM553 652.8h7.5v2.5h-7.5zM578 652.8h2.5v2.5h-2.5zM440.5 655.3h2.5v2.5h-2.5zM448 655.3h2.5v2.5h-2.5zM455.5 655.3h2.5v2.5h-2.5zM460.5 655.3h2.5v2.5h-2.5zM468 655.3h2.5v2.5h-2.5zM498 655.3h12.5v2.5h-12.5zM528 655.3h2.5v2.5h-2.5zM545.5 655.3h2.5v2.5h-2.5zM550.5 655.3h2.5v2.5h-2.5zM555.5 655.3h2.5v2.5h-2.5zM560.5 655.3h2.5v2.5h-2.5zM568 655.3h5v2.5h-5zM580.5 655.3h5v2.5h-5zM588 655.3h0.3v2.5h-0.3zM440.5 657.8h10v2.5h-10zM455.5 657.8h2.5v2.5h-2.5zM473 657.8h2.5v2.5h-2.5zM493 657.8h7.5v2.5h-7.5zM505.5 657.8h2.5v2.5h-2.5zM510.5 657.8h2.5v2.5h-2.5zM515.5 657.8h2.5v2.5h-2.5zM535.5 657.8h2.5v2.5h-2.5zM550.5 657.8h2.5v2.5h-2.5zM558 657.8h2.5v2.5h-2.5zM588 657.8h0.3v2.5h-0.3zM440.5 660.3h2.5v2.5h-2.5zM450.5 660.3h5v2.5h-5zM465.5 660.3h2.5v2.5h-2.5zM470.5 660.3h5v2.5h-5zM478 660.3h2.5v2.5h-2.5zM488 660.3h2.5v2.5h-2.5zM515.5 660.3h2.5v2.5h-2.5zM543 660.3h2.5v2.5h-2.5zM550.5 660.3h2.5v2.5h-2.5zM555.5 660.3h2.5v2.5h-2.5zM560.5 660.3h2.5v2.5h-2.5zM578 660.3h5v2.5h-5zM588 660.3h0.3v2.5h-0.3zM453 662.8h5v2.5h-5zM460.5 662.8h2.5v2.5h-2.5zM475.5 662.8h2.5v2.5h-2.5zM480.5 662.8h2.5v2.5h-2.5zM485.5 662.8h2.5v2.5h-2.5zM490.5 662.8h2.5v2.5h-2.5zM505.5 662.8h5v2.5h-5zM540.5 662.8h2.5v2.5h-2.5zM560.5 662.8h10v2.5h-10zM573 662.8h2.5v2.5h-2.5zM583 662.8h5v2.5h-5zM455.5 665.3h2.5v2.5h-2.5zM470.5 665.3h5v2.5h-5zM488 665.3h5v2.5h-5zM495.5 665.3h2.5v2.5h-2.5zM520.5 665.3h2.5v2.5h-2.5zM528 665.3h2.5v2.5h-2.5zM555.5 665.3h2.5v2.5h-2.5zM573 665.3h7.5v2.5h-7.5zM583 665.3h2.5v2.5h-2.5zM448 667.8h5v2.5h-5zM468 667.8h2.5v2.5h-2.5zM478 667.8h2.5v2.5h-2.5zM490.5 667.8h2.5v2.5h-2.5zM498 667.8h2.5v2.5h-2.5zM503 667.8h2.5v2.5h-2.5zM513 667.8h2.5v2.5h-2.5zM525.5 667.8h2.5v2.5h-2.5zM540.5 667.8h2.5v2.5h-2.5zM545.5 667.8h5v2.5h-5zM560.5 667.8h2.5v2.5h-2.5zM578 667.8h2.5v2.5h-2.5zM583 667.8h2.5v2.5h-2.5zM443 670.3h5v2.5h-5zM455.5 670.3h2.5v2.5h-2.5zM465.5 670.3h2.5v2.5h-2.5zM488 670.3h2.5v2.5h-2.5zM498 670.3h2.5v2.5h-2.5zM515.5 670.3h2.5v2.5h-2.5zM523 670.3h2.5v2.5h-2.5zM540.5 670.3h2.5v2.5h-2.5zM565.5 670.3h2.5v2.5h-2.5zM570.5 670.3h5v2.5h-5zM583 670.3h5v2.5h-5zM460.5 672.8h2.5v2.5h-2.5zM468 672.8h2.5v2.5h-2.5zM483 672.8h2.5v2.5h-2.5zM488 672.8h2.5v2.5h-2.5zM493 672.8h2.5v2.5h-2.5zM503 672.8h10v2.5h-10zM515.5 672.8h2.5v2.5h-2.5zM528 672.8h2.5v2.5h-2.5zM543 672.8h2.5v2.5h-2.5zM585.5 672.8h2.8v2.5h-2.8zM453 675.3h2.5v2.5h-2.5zM463 675.3h5v2.5h-5zM478 675.3h2.5v2.5h-2.5zM488 675.3h2.5v2.5h-2.5zM493 675.3h2.5v2.5h-2.5zM508 675.3h2.5v2.5h-2.5zM515.5 675.3h2.5v2.5h-2.5zM525.5 675.3h2.5v2.5h-2.5zM530.5 675.3h2.5v2.5h-2.5zM535.5 675.3h5v2.5h-5zM553 675.3h2.5v2.5h-2.5zM568 675.3h5v2.5h-5zM575.5 675.3h5v2.5h-5zM585.5 675.3h2.8v2.5h-2.8zM448 677.8h5v2.5h-5zM458 677.8h5v2.5h-5zM483 677.8h2.5v2.5h-2.5zM493 677.8h2.5v2.5h-2.5zM500.5 677.8h2.5v2.5h-2.5zM515.5 677.8h7.5v2.5h-7.5zM525.5 677.8h2.5v2.5h-2.5zM535.5 677.8h2.5v2.5h-2.5zM560.5 677.8h2.5v2.5h-2.5zM575.5 677.8h2.5v2.5h-2.5zM450.5 680.3h2.5v0.3h-2.5zM458 680.3h2.5v0.3h-2.5zM478 680.3h5v0.3h-5zM500.5 680.3h5v0.3h-5zM510.5 680.3h7.5v0.3h-7.5zM520.5 680.3h2.5v0.3h-2.5zM533 680.3h2.5v0.3h-2.5zM550.5 680.3h2.5v0.3h-2.5zM573 680.3h2.5v0.3h-2.5z"/><path fill="#bcbcbc" d="M448 532.8h2.5v2.5h-2.5zM515.5 532.8h2.5v2.5h-2.5zM575.5 532.8h2.5v2.5h-2.5zM450.5 535.3h2.5v2.5h-2.5zM468 535.3h2.5v2.5h-2.5zM495.5 535.3h2.5v2.5h-2.5zM583 535.3h2.5v2.5h-2.5zM480.5 537.8h2.5v2.5h-2.5zM570.5 537.8h2.5v2.5h-2.5zM585.5 537.8h2.8v2.5h-2.8zM448 540.3h2.5v2.5h-2.5zM470.5 540.3h2.5v2.5h-2.5zM493 540.3h2.5v2.5h-2.5zM520.5 540.3h2.5v2.5h-2.5zM525.5 540.3h2.5v2.5h-2.5zM568 540.3h2.5v2.5h-2.5zM575.5 540.3h5v2.5h-5zM468 542.8h2.5v2.5h-2.5zM525.5 542.8h2.5v2.5h-2.5zM553 542.8h2.5v2.5h-2.5zM445.5 545.3h2.5v2.5h-2.5zM455.5 545.3h2.5v2.5h-2.5zM470.5 545.3h2.5v2.5h-2.5zM533 545.3h2.5v2.5h-2.5zM543 545.3h2.5v2.5h-2.5zM563 545.3h2.5v2.5h-2.5zM460.5 547.8h2.5v2.5h-2.5zM495.5 547.8h2.5v2.5h-2.5zM533 547.8h2.5v2.5h-2.5zM545.5 547.8h2.5v2.5h-2.5zM553 547.8h2.5v2.5h-2.5zM580.5 547.8h2.5v2.5h-2.5zM455.5 550.3h2.5v2.5h-2.5zM490.5 550.3h2.5v2.5h-2.5zM573 550.3h2.5v2.5h-2.5zM583 550.3h2.5v2.5h-2.5zM458 552.8h2.5v2.5h-2.5zM465.5 552.8h5v2.5h-5zM480.5 552.8h2.5v2.5h-2.5zM490.5 552.8h2.5v2.5h-2.5zM518 552.8h5v2.5h-5zM540.5 552.8h2.5v2.5h-2.5zM448 555.3h2.5v2.5h-2.5zM455.5 555.3h2.5v2.5h-2.5zM468 555.3h2.5v2.5h-2.5zM485.5 555.3h2.5v2.5h-2.5zM500.5 555.3h2.5v2.5h-2.5zM470.5 557.8h2.5v2.5h-2.5zM480.5 557.8h2.5v2.5h-2.5zM495.5 557.8h2.5v2.5h-2.5zM510.5 557.8h2.5v2.5h-2.5zM585.5 557.8h2.5v2.5h-2.5zM468 560.3h2.5v2.5h-2.5zM478 560.3h7.5v2.5h-7.5zM488 560.3h2.5v2.5h-2.5zM548 560.3h2.5v2.5h-2.5zM578 560.3h2.5v2.5h-2.5zM475.5 562.8h2.5v2.5h-2.5zM508 562.8h2.5v2.5h-2.5zM533 562.8h7.5v2.5h-7.5zM553 562.8h2.5v2.5h-2.5zM588 562.8h0.3v2.5h-0.3zM448 565.3h2.5v2.5h-2.5zM465.5 565.3h5v2.5h-5zM478 565.3h2.5v2.5h-2.5zM483 565.3h2.5v2.5h-2.5zM500.5 565.3h5v2.5h-5zM545.5 565.3h2.5v2.5h-2.5zM445.5 567.8h2.5v2.5h-2.5zM463 567.8h2.5v2.5h-2.5zM513 567.8h2.5v2.5h-2.5zM545.5 567.8h2.5v2.5h-2.5zM573 567.8h2.5v2.5h-2.5zM588 567.8h0.3v2.5h-0.3zM445.5 570.3h2.5v2.5h-2.5zM478 570.3h2.5v2.5h-2.5zM485.5 570.3h5v2.5h-5zM573 570.3h2.5v2.5h-2.5zM470.5 572.8h2.5v2.5h-2.5zM485.5 572.8h2.5v2.5h-2.5zM543 572.8h2.5v2.5h-2.5zM473 575.3h2.5v2.5h-2.5zM483 575.3h2.5v2.5h-2.5zM535.5 575.3h2.5v2.5h-2.5zM560.5 575.3h2.5v2.5h-2.5zM578 575.3h2.5v2.5h-2.5zM450.5 577.8h2.5v2.5h-2.5zM480.5 577.8h2.5v2.5h-2.5zM523 577.8h2.5v2.5h-2.5zM555.5 577.8h2.5v2.5h-2.5zM585.5 577.8h2.5v2.5h-2.5zM463 580.3h2.5v2.5h-2.5zM550.5 580.3h2.5v2.5h-2.5zM585.5 580.3h2.5v2.5h-2.5zM440.5 582.8h2.5v2.5h-2.5zM465.5 582.8h2.5v2.5h-2.5zM575.5 582.8h2.5v2.5h-2.5zM470.5 585.3h2.5v2.5h-2.5zM525.5 585.3h2.5v2.5h-2.5zM568 585.3h2.5v2.5h-2.5zM573 585.3h2.5v2.5h-2.5zM455.5 587.8h2.5v2.5h-2.5zM465.5 587.8h5v2.5h-5zM448 590.3h2.5v2.5h-2.5zM468 590.3h2.5v2.5h-2.5zM525.5 590.3h2.5v2.5h-2.5zM553 590.3h2.5v2.5h-2.5zM568 590.3h2.5v2.5h-2.5zM575.5 590.3h2.5v2.5h-2.5zM458 592.8h2.5v2.5h-2.5zM565.5 592.8h2.5v2.5h-2.5zM480.5 595.3h2.5v2.5h-2.5zM453 597.8h2.5v2.5h-2.5zM535.5 597.8h2.5v2.5h-2.5zM560.5 597.8h2.5v2.5h-2.5zM463 600.3h2.5v2.5h-2.5zM478 600.3h2.5v2.5h-2.5zM523 600.3h2.5v2.5h-2.5zM555.5 600.3h2.5v2.5h-2.5zM520.5 602.8h2.5v2.5h-2.5zM553 602.8h2.5v2.5h-2.5zM563 602.8h2.5v2.5h-2.5zM568 602.8h2.5v2.5h-2.5zM455.5 605.3h2.5v2.5h-2.5zM465.5 605.3h2.5v2.5h-2.5zM485.5 605.3h2.5v2.5h-2.5zM548 605.3h2.5v2.5h-2.5zM583 605.3h2.5v2.5h-2.5zM440.5 607.8h2.5v2.5h-2.5zM473 607.8h2.5v2.5h-2.5zM483 607.8h2.5v2.5h-2.5zM523 607.8h2.5v2.5h-2.5zM528 610.3h2.5v2.5h-2.5zM445.5 612.8h2.5v2.5h-2.5zM510.5 612.8h2.5v2.5h-2.5zM518 612.8h2.5v2.5h-2.5zM525.5 612.8h2.5v2.5h-2.5zM553 612.8h2.5v2.5h-2.5zM568 612.8h2.5v2.5h-2.5zM473 615.3h2.5v2.5h-2.5zM498 615.3h2.5v2.5h-2.5zM548 615.3h2.5v2.5h-2.5zM583 615.3h2.5v2.5h-2.5zM445.5 617.8h2.5v2.5h-2.5zM488 617.8h2.5v2.5h-2.5zM503 617.8h5v2.5h-5zM553 617.8h2.5v2.5h-2.5zM508 620.3h2.5v2.5h-2.5zM450.5 622.8h2.5v2.5h-2.5zM455.5 622.8h2.5v2.5h-2.5zM480.5 622.8h2.5v2.5h-2.5zM498 622.8h2.5v2.5h-2.5zM540.5 622.8h2.5v2.5h-2.5zM555.5 622.8h2.5v2.5h-2.5zM565.5 622.8h2.5v2.5h-2.5zM475.5 625.3h2.5v2.5h-2.5zM533 625.3h7.5v2.5h-7.5zM550.5 625.3h2.5v2.5h-2.5zM493 630.3h2.5v2.5h-2.5zM530.5 630.3h2.5v2.5h-2.5zM570.5 630.3h2.5v2.5h-2.5zM460.5 632.8h2.5v2.5h-2.5zM540.5 632.8h2.5v2.5h-2.5zM570.5 632.8h2.5v2.5h-2.5zM450.5 635.3h2.5v2.5h-2.5zM468 635.3h2.5v2.5h-2.5zM480.5 635.3h2.5v2.5h-2.5zM565.5 635.3h2.5v2.5h-2.5zM573 635.3h2.5v2.5h-2.5zM448 637.8h2.5v2.5h-2.5zM460.5 637.8h2.5v2.5h-2.5zM473 637.8h2.5v2.5h-2.5zM490.5 637.8h2.5v2.5h-2.5zM513 637.8h2.5v2.5h-2.5zM540.5 637.8h2.5v2.5h-2.5zM583 637.8h2.5v2.5h-2.5zM588 637.8h0.3v2.5h-0.3zM485.5 640.3h2.5v2.5h-2.5zM515.5 640.3h2.5v2.5h-2.5zM533 640.3h2.5v2.5h-2.5zM460.5 642.8h2.5v2.5h-2.5zM505.5 642.8h2.5v2.5h-2.5zM518 642.8h2.5v2.5h-2.5zM543 642.8h2.5v2.5h-2.5zM568 642.8h5v2.5h-5zM493 645.3h2.5v2.5h-2.5zM448 647.8h2.5v2.5h-2.5zM475.5 647.8h2.5v2.5h-2.5zM493 647.8h2.5v2.5h-2.5zM550.5 647.8h2.5v2.5h-2.5zM560.5 647.8h2.5v2.5h-2.5zM508 650.3h2.5v2.5h-2.5zM545.5 650.3h2.5v2.5h-2.5zM463 652.8h2.5v2.5h-2.5zM475.5 652.8h2.5v2.5h-2.5zM510.5 652.8h2.5v2.5h-2.5zM515.5 652.8h2.5v2.5h-2.5zM575.5 652.8h2.5v2.5h-2.5zM470.5 655.3h2.5v2.5h-2.5zM478 655.3h2.5v2.5h-2.5zM485.5 655.3h2.5v2.5h-2.5zM495.5 655.3h2.5v2.5h-2.5zM480.5 657.8h2.5v2.5h-2.5zM518 657.8h2.5v2.5h-2.5zM538 657.8h2.5v2.5h-2.5zM560.5 657.8h2.5v2.5h-2.5zM458 660.3h2.5v2.5h-2.5zM530.5 660.3h2.5v2.5h-2.5zM558 660.3h2.5v2.5h-2.5zM473 662.8h2.5v2.5h-2.5zM503 662.8h2.5v2.5h-2.5zM535.5 662.8h2.5v2.5h-2.5zM575.5 662.8h5v2.5h-5zM445.5 667.8h2.5v2.5h-2.5zM480.5 667.8h5v2.5h-5zM508 667.8h2.5v2.5h-2.5zM558 667.8h2.5v2.5h-2.5zM575.5 667.8h2.5v2.5h-2.5zM580.5 667.8h2.5v2.5h-2.5zM513 670.3h2.5v2.5h-2.5zM520.5 670.3h2.5v2.5h-2.5zM533 670.3h5v2.5h-5zM450.5 672.8h2.5v2.5h-2.5zM455.5 672.8h2.5v2.5h-2.5zM465.5 672.8h2.5v2.5h-2.5zM498 672.8h2.5v2.5h-2.5zM535.5 672.8h2.5v2.5h-2.5zM560.5 672.8h2.5v2.5h-2.5zM575.5 672.8h2.5v2.5h-2.5zM450.5 675.3h2.5v2.5h-2.5zM480.5 675.3h2.5v2.5h-2.5zM498 675.3h2.5v2.5h-2.5zM540.5 675.3h2.5v2.5h-2.5zM558 675.3h2.5v2.5h-2.5zM445.5 677.8h2.5v2.5h-2.5zM578 677.8h2.5v2.5h-2.5zM468 680.3h5v0.3h-5zM495.5 680.3h2.5v0.3h-2.5zM528 680.3h5v0.3h-5zM543 680.3h2.5v0.3h-2.5zM565.5 680.3h2.5v0.3h-2.5zM588 680.3h0.3v0.3h-0.3z"/><path fill="#dedede" d="M463 532.8h2.5v2.5h-2.5zM470.5 532.8h2.5v2.5h-2.5zM478 532.8h5v2.5h-5zM488 532.8h2.5v2.5h-2.5zM493 532.8h2.5v2.5h-2.5zM505.5 532.8h2.5v2.5h-2.5zM535.5 532.8h2.5v2.5h-2.5zM443 535.3h2.5v2.5h-2.5zM453 535.3h2.5v2.5h-2.5zM483 535.3h2.5v2.5h-2.5zM500.5 535.3h2.5v2.5h-2.5zM505.5 535.3h2.5v2.5h-2.5zM525.5 535.3h2.5v2.5h-2.5zM540.5 535.3h2.5v2.5h-2.5zM548 535.3h2.5v2.5h-2.5zM553 535.3h2.5v2.5h-2.5zM568 535.3h2.5v2.5h-2.5zM588 535.3h0.3v2.5h-0.3zM453 537.8h2.5v2.5h-2.5zM468 537.8h2.5v2.5h-2.5zM488 537.8h2.5v2.5h-2.5zM540.5 537.8h2.5v2.5h-2.5zM560.5 537.8h2.5v2.5h-2.5zM453 540.3h2.5v2.5h-2.5zM483 540.3h2.5v2.5h-2.5zM503 540.3h5v2.5h-5zM518 540.3h2.5v2.5h-2.5zM523 540.3h2.5v2.5h-2.5zM528 540.3h5v2.5h-5zM543 540.3h2.5v2.5h-2.5zM558 540.3h7.5v2.5h-7.5zM583 540.3h2.5v2.5h-2.5zM440.5 542.8h2.5v2.5h-2.5zM450.5 542.8h2.5v2.5h-2.5zM460.5 542.8h5v2.5h-5zM505.5 542.8h5v2.5h-5zM543 542.8h5v2.5h-5zM550.5 542.8h2.5v2.5h-2.5zM563 542.8h7.5v2.5h-7.5zM588 542.8h0.3v2.5h-0.3zM450.5 545.3h2.5v2.5h-2.5zM463 545.3h2.5v2.5h-2.5zM468 545.3h2.5v2.5h-2.5zM483 545.3h2.5v2.5h-2.5zM488 545.3h2.5v2.5h-2.5zM493 545.3h2.5v2.5h-2.5zM505.5 545.3h2.5v2.5h-2.5zM518 545.3h2.5v2.5h-2.5zM538 545.3h5v2.5h-5zM545.5 545.3h2.5v2.5h-2.5zM553 545.3h7.5v2.5h-7.5zM565.5 545.3h2.5v2.5h-2.5zM453 547.8h2.5v2.5h-2.5zM458 547.8h2.5v2.5h-2.5zM463 547.8h2.5v2.5h-2.5zM480.5 547.8h5v2.5h-5zM520.5 547.8h2.5v2.5h-2.5zM525.5 547.8h2.5v2.5h-2.5zM530.5 547.8h2.5v2.5h-2.5zM538 547.8h2.5v2.5h-2.5zM543 547.8h2.5v2.5h-2.5zM555.5 547.8h2.5v2.5h-2.5zM563 547.8h5v2.5h-5zM573 547.8h2.5v2.5h-2.5zM588 547.8h0.3v2.5h-0.3zM453 550.3h2.5v2.5h-2.5zM508 550.3h2.5v2.5h-2.5zM513 550.3h2.5v2.5h-2.5zM520.5 550.3h2.5v2.5h-2.5zM545.5 550.3h2.5v2.5h-2.5zM558 550.3h2.5v2.5h-2.5zM563 550.3h2.5v2.5h-2.5zM588 550.3h0.3v2.5h-0.3zM473 552.8h2.5v2.5h-2.5zM500.5 552.8h2.5v2.5h-2.5zM505.5 552.8h5v2.5h-5zM525.5 552.8h2.5v2.5h-2.5zM543 552.8h5v2.5h-5zM570.5 552.8h7.5v2.5h-7.5zM580.5 552.8h2.5v2.5h-2.5zM453 555.3h2.5v2.5h-2.5zM465.5 555.3h2.5v2.5h-2.5zM475.5 555.3h2.5v2.5h-2.5zM498 555.3h2.5v2.5h-2.5zM515.5 555.3h2.5v2.5h-2.5zM530.5 555.3h2.5v2.5h-2.5zM540.5 555.3h7.5v2.5h-7.5zM550.5 555.3h5v2.5h-5zM440.5 557.8h5v2.5h-5zM448 557.8h2.5v2.5h-2.5zM478 557.8h2.5v2.5h-2.5zM485.5 557.8h2.5v2.5h-2.5zM493 557.8h2.5v2.5h-2.5zM515.5 557.8h2.5v2.5h-2.5zM565.5 557.8h2.5v2.5h-2.5zM575.5 557.8h2.5v2.5h-2.5zM580.5 557.8h2.5v2.5h-2.5zM445.5 560.3h2.5v2.5h-2.5zM465.5 560.3h2.5v2.5h-2.5zM473 560.3h2.5v2.5h-2.5zM495.5 560.3h2.5v2.5h-2.5zM508 560.3h2.5v2.5h-2.5zM513 560.3h2.5v2.5h-2.5zM520.5 560.3h5v2.5h-5zM533 560.3h2.5v2.5h-2.5zM563 560.3h2.5v2.5h-2.5zM570.5 560.3h2.5v2.5h-2.5zM585.5 560.3h2.5v2.5h-2.5zM440.5 562.8h5v2.5h-5zM453 562.8h2.5v2.5h-2.5zM465.5 562.8h2.5v2.5h-2.5zM483 562.8h2.5v2.5h-2.5zM488 562.8h2.5v2.5h-2.5zM493 562.8h2.5v2.5h-2.5zM550.5 562.8h2.5v2.5h-2.5zM558 562.8h2.5v2.5h-2.5zM568 562.8h2.5v2.5h-2.5zM573 562.8h5v2.5h-5zM583 562.8h2.5v2.5h-2.5zM458 565.3h2.5v2.5h-2.5zM488 565.3h2.5v2.5h-2.5zM523 565.3h2.5v2.5h-2.5zM528 565.3h2.5v2.5h-2.5zM535.5 565.3h5v2.5h-5zM543 565.3h2.5v2.5h-2.5zM570.5 565.3h2.5v2.5h-2.5zM583 565.3h5v2.5h-5zM453 567.8h2.5v2.5h-2.5zM458 567.8h2.5v2.5h-2.5zM468 567.8h2.5v2.5h-2.5zM473 567.8h2.5v2.5h-2.5zM488 567.8h2.5v2.5h-2.5zM523 567.8h2.5v2.5h-2.5zM558 567.8h2.5v2.5h-2.5zM563 567.8h2.5v2.5h-2.5zM570.5 567.8h2.5v2.5h-2.5zM450.5 570.3h2.5v2.5h-2.5zM458 570.3h2.5v2.5h-2.5zM463 570.3h2.5v2.5h-2.5zM518 570.3h7.5v2.5h-7.5zM535.5 570.3h2.5v2.5h-2.5zM545.5 570.3h2.5v2.5h-2.5zM558 570.3h2.5v2.5h-2.5zM563 570.3h2.5v2.5h-2.5zM568 570.3h5v2.5h-5zM578 570.3h2.5v2.5h-2.5zM583 570.3h5v2.5h-5zM455.5 572.8h5v2.5h-5zM480.5 572.8h2.5v2.5h-2.5zM520.5 572.8h2.5v2.5h-2.5zM553 572.8h5v2.5h-5zM565.5 572.8h2.5v2.5h-2.5zM443 575.3h2.5v2.5h-2.5zM450.5 575.3h2.5v2.5h-2.5zM465.5 575.3h2.5v2.5h-2.5zM478 575.3h2.5v2.5h-2.5zM525.5 575.3h2.5v2.5h-2.5zM533 575.3h2.5v2.5h-2.5zM538 575.3h5v2.5h-5zM550.5 575.3h2.5v2.5h-2.5zM563 575.3h2.5v2.5h-2.5zM570.5 575.3h2.5v2.5h-2.5zM575.5 575.3h2.5v2.5h-2.5zM580.5 575.3h2.5v2.5h-2.5zM585.5 575.3h2.5v2.5h-2.5zM440.5 577.8h2.5v2.5h-2.5zM448 577.8h2.5v2.5h-2.5zM453 577.8h2.5v2.5h-2.5zM540.5 577.8h5v2.5h-5zM548 577.8h2.5v2.5h-2.5zM560.5 577.8h2.5v2.5h-2.5zM568 577.8h17.5v2.5h-17.5zM440.5 580.3h2.5v2.5h-2.5zM453 580.3h2.5v2.5h-2.5zM470.5 580.3h7.5v2.5h-7.5zM530.5 580.3h2.5v2.5h-2.5zM540.5 580.3h2.5v2.5h-2.5zM555.5 580.3h2.5v2.5h-2.5zM573 580.3h2.5v2.5h-2.5zM580.5 580.3h2.5v2.5h-2.5zM445.5 582.8h2.5v2.5h-2.5zM450.5 582.8h2.5v2.5h-2.5zM475.5 582.8h2.5v2.5h-2.5zM525.5 582.8h2.5v2.5h-2.5zM533 582.8h5v2.5h-5zM543 582.8h5v2.5h-5zM550.5 582.8h2.5v2.5h-2.5zM570.5 582.8h2.5v2.5h-2.5zM445.5 585.3h2.5v2.5h-2.5zM458 585.3h2.5v2.5h-2.5zM473 585.3h7.5v2.5h-7.5zM530.5 585.3h2.5v2.5h-2.5zM538 585.3h2.5v2.5h-2.5zM563 585.3h2.5v2.5h-2.5zM578 585.3h2.5v2.5h-2.5zM443 587.8h2.5v2.5h-2.5zM458 587.8h2.5v2.5h-2.5zM535.5 587.8h2.5v2.5h-2.5zM558 587.8h5v2.5h-5zM568 587.8h2.5v2.5h-2.5zM578 587.8h2.5v2.5h-2.5zM443 590.3h2.5v2.5h-2.5zM528 590.3h2.5v2.5h-2.5zM538 590.3h2.5v2.5h-2.5zM570.5 590.3h2.5v2.5h-2.5zM580.5 590.3h2.5v2.5h-2.5zM585.5 590.3h2.5v2.5h-2.5zM460.5 592.8h2.5v2.5h-2.5zM553 592.8h2.5v2.5h-2.5zM558 592.8h2.5v2.5h-2.5zM443 595.3h2.5v2.5h-2.5zM450.5 595.3h2.5v2.5h-2.5zM460.5 595.3h2.5v2.5h-2.5zM473 595.3h2.5v2.5h-2.5zM478 595.3h2.5v2.5h-2.5zM528 595.3h2.5v2.5h-2.5zM540.5 595.3h5v2.5h-5zM548 595.3h2.5v2.5h-2.5zM555.5 595.3h2.5v2.5h-2.5zM560.5 595.3h5v2.5h-5zM443 597.8h2.5v2.5h-2.5zM465.5 597.8h2.5v2.5h-2.5zM475.5 597.8h2.5v2.5h-2.5zM528 597.8h2.5v2.5h-2.5zM543 597.8h5v2.5h-5zM555.5 597.8h2.5v2.5h-2.5zM578 597.8h2.5v2.5h-2.5zM585.5 597.8h2.5v2.5h-2.5zM455.5 600.3h5v2.5h-5zM465.5 600.3h2.5v2.5h-2.5zM528 600.3h2.5v2.5h-2.5zM538 600.3h5v2.5h-5zM565.5 600.3h2.5v2.5h-2.5zM570.5 600.3h5v2.5h-5zM583 600.3h2.5v2.5h-2.5zM443 602.8h7.5v2.5h-7.5zM455.5 602.8h2.5v2.5h-2.5zM460.5 602.8h5v2.5h-5zM475.5 602.8h7.5v2.5h-7.5zM548 602.8h2.5v2.5h-2.5zM555.5 602.8h2.5v2.5h-2.5zM573 602.8h5v2.5h-5zM585.5 602.8h2.5v2.5h-2.5zM440.5 605.3h2.5v2.5h-2.5zM445.5 605.3h10v2.5h-10zM470.5 605.3h2.5v2.5h-2.5zM480.5 605.3h2.5v2.5h-2.5zM523 605.3h5v2.5h-5zM538 605.3h2.5v2.5h-2.5zM545.5 605.3h2.5v2.5h-2.5zM568 605.3h5v2.5h-5zM453 607.8h2.5v2.5h-2.5zM463 607.8h2.5v2.5h-2.5zM475.5 607.8h5v2.5h-5zM533 607.8h2.5v2.5h-2.5zM548 607.8h2.5v2.5h-2.5zM578 607.8h2.5v2.5h-2.5zM450.5 610.3h2.5v2.5h-2.5zM463 610.3h2.5v2.5h-2.5zM478 610.3h2.5v2.5h-2.5zM490.5 610.3h2.5v2.5h-2.5zM515.5 610.3h2.5v2.5h-2.5zM538 610.3h5v2.5h-5zM570.5 610.3h2.5v2.5h-2.5zM578 610.3h2.5v2.5h-2.5zM583 610.3h2.5v2.5h-2.5zM460.5 612.8h2.5v2.5h-2.5zM495.5 612.8h2.5v2.5h-2.5zM520.5 612.8h2.5v2.5h-2.5zM530.5 612.8h2.5v2.5h-2.5zM538 612.8h2.5v2.5h-2.5zM558 612.8h5v2.5h-5zM570.5 612.8h2.5v2.5h-2.5zM448 615.3h2.5v2.5h-2.5zM458 615.3h2.5v2.5h-2.5zM463 615.3h2.5v2.5h-2.5zM468 615.3h5v2.5h-5zM475.5 615.3h2.5v2.5h-2.5zM495.5 615.3h2.5v2.5h-2.5zM508 615.3h2.5v2.5h-2.5zM555.5 615.3h2.5v2.5h-2.5zM563 615.3h2.5v2.5h-2.5zM578 615.3h2.5v2.5h-2.5zM585.5 615.3h2.5v2.5h-2.5zM448 617.8h5v2.5h-5zM458 617.8h5v2.5h-5zM465.5 617.8h2.5v2.5h-2.5zM473 617.8h2.5v2.5h-2.5zM495.5 617.8h2.5v2.5h-2.5zM500.5 617.8h2.5v2.5h-2.5zM513 617.8h2.5v2.5h-2.5zM520.5 617.8h2.5v2.5h-2.5zM535.5 617.8h5v2.5h-5zM545.5 617.8h2.5v2.5h-2.5zM555.5 617.8h10v2.5h-10zM570.5 617.8h5v2.5h-5zM585.5 617.8h2.8v2.5h-2.8zM458 620.3h2.5v2.5h-2.5zM463 620.3h2.5v2.5h-2.5zM470.5 620.3h2.5v2.5h-2.5zM490.5 620.3h2.5v2.5h-2.5zM505.5 620.3h2.5v2.5h-2.5zM510.5 620.3h2.5v2.5h-2.5zM518 620.3h2.5v2.5h-2.5zM548 620.3h2.5v2.5h-2.5zM555.5 620.3h2.5v2.5h-2.5zM560.5 620.3h2.5v2.5h-2.5zM568 620.3h2.5v2.5h-2.5zM573 620.3h5v2.5h-5zM580.5 620.3h2.5v2.5h-2.5zM445.5 622.8h2.5v2.5h-2.5zM453 622.8h2.5v2.5h-2.5zM473 622.8h5v2.5h-5zM505.5 622.8h2.5v2.5h-2.5zM518 622.8h5v2.5h-5zM535.5 622.8h5v2.5h-5zM558 622.8h2.5v2.5h-2.5zM585.5 622.8h2.5v2.5h-2.5zM453 625.3h2.5v2.5h-2.5zM480.5 625.3h2.5v2.5h-2.5zM485.5 625.3h2.5v2.5h-2.5zM495.5 625.3h2.5v2.5h-2.5zM503 625.3h5v2.5h-5zM515.5 625.3h2.5v2.5h-2.5zM528 625.3h5v2.5h-5zM545.5 625.3h2.5v2.5h-2.5zM558 625.3h2.5v2.5h-2.5zM570.5 625.3h2.5v2.5h-2.5zM583 625.3h2.5v2.5h-2.5zM440.5 627.8h2.5v2.5h-2.5zM450.5 627.8h2.5v2.5h-2.5zM470.5 627.8h2.5v2.5h-2.5zM513 627.8h2.5v2.5h-2.5zM520.5 627.8h2.5v2.5h-2.5zM535.5 627.8h5v2.5h-5zM545.5 627.8h5v2.5h-5zM565.5 627.8h2.5v2.5h-2.5zM570.5 627.8h5v2.5h-5zM588 627.8h0.3v2.5h-0.3zM453 630.3h2.5v2.5h-2.5zM480.5 630.3h5v2.5h-5zM488 630.3h5v2.5h-5zM495.5 630.3h2.5v2.5h-2.5zM510.5 630.3h2.5v2.5h-2.5zM525.5 630.3h2.5v2.5h-2.5zM560.5 630.3h5v2.5h-5zM573 630.3h7.5v2.5h-7.5zM443 632.8h5v2.5h-5zM455.5 632.8h2.5v2.5h-2.5zM463 632.8h2.5v2.5h-2.5zM478 632.8h7.5v2.5h-7.5zM503 632.8h2.5v2.5h-2.5zM508 632.8h2.5v2.5h-2.5zM525.5 632.8h7.5v2.5h-7.5zM558 632.8h5v2.5h-5zM580.5 632.8h2.5v2.5h-2.5zM585.5 632.8h2.5v2.5h-2.5zM463 635.3h2.5v2.5h-2.5zM473 635.3h2.5v2.5h-2.5zM478 635.3h2.5v2.5h-2.5zM485.5 635.3h2.5v2.5h-2.5zM493 635.3h2.5v2.5h-2.5zM505.5 635.3h2.5v2.5h-2.5zM515.5 635.3h2.5v2.5h-2.5zM520.5 635.3h2.5v2.5h-2.5zM528 635.3h2.5v2.5h-2.5zM575.5 635.3h2.5v2.5h-2.5zM583 635.3h2.5v2.5h-2.5zM588 635.3h0.3v2.5h-0.3zM453 637.8h2.5v2.5h-2.5zM468 637.8h5v2.5h-5zM510.5 637.8h2.5v2.5h-2.5zM515.5 637.8h2.5v2.5h-2.5zM520.5 637.8h2.5v2.5h-2.5zM525.5 637.8h2.5v2.5h-2.5zM553 637.8h2.5v2.5h-2.5zM578 637.8h2.5v2.5h-2.5zM443 640.3h2.5v2.5h-2.5zM455.5 640.3h5v2.5h-5zM505.5 640.3h2.5v2.5h-2.5zM538 640.3h2.5v2.5h-2.5zM550.5 640.3h2.5v2.5h-2.5zM558 640.3h2.5v2.5h-2.5zM568 640.3h2.5v2.5h-2.5zM573 640.3h2.5v2.5h-2.5zM440.5 642.8h2.5v2.5h-2.5zM450.5 642.8h5v2.5h-5zM458 642.8h2.5v2.5h-2.5zM480.5 642.8h5v2.5h-5zM495.5 642.8h2.5v2.5h-2.5zM538 642.8h2.5v2.5h-2.5zM558 642.8h5v2.5h-5zM565.5 642.8h2.5v2.5h-2.5zM585.5 642.8h2.5v2.5h-2.5zM440.5 645.3h2.5v2.5h-2.5zM455.5 645.3h2.5v2.5h-2.5zM468 645.3h5v2.5h-5zM475.5 645.3h2.5v2.5h-2.5zM488 645.3h2.5v2.5h-2.5zM505.5 645.3h2.5v2.5h-2.5zM510.5 645.3h5v2.5h-5zM520.5 645.3h5v2.5h-5zM543 645.3h2.5v2.5h-2.5zM558 645.3h2.5v2.5h-2.5zM568 645.3h2.5v2.5h-2.5zM575.5 645.3h2.5v2.5h-2.5zM583 645.3h5v2.5h-5zM443 647.8h2.5v2.5h-2.5zM450.5 647.8h2.5v2.5h-2.5zM473 647.8h2.5v2.5h-2.5zM480.5 647.8h2.5v2.5h-2.5zM485.5 647.8h5v2.5h-5zM498 647.8h2.5v2.5h-2.5zM510.5 647.8h2.5v2.5h-2.5zM558 647.8h2.5v2.5h-2.5zM565.5 647.8h2.5v2.5h-2.5zM580.5 647.8h2.5v2.5h-2.5zM440.5 650.3h2.5v2.5h-2.5zM463 650.3h2.5v2.5h-2.5zM468 650.3h2.5v2.5h-2.5zM485.5 650.3h2.5v2.5h-2.5zM493 650.3h2.5v2.5h-2.5zM498 650.3h5v2.5h-5zM513 650.3h2.5v2.5h-2.5zM548 650.3h2.5v2.5h-2.5zM555.5 650.3h2.5v2.5h-2.5zM563 650.3h2.5v2.5h-2.5zM578 650.3h7.5v2.5h-7.5zM440.5 652.8h10v2.5h-10zM468 652.8h2.5v2.5h-2.5zM480.5 652.8h2.5v2.5h-2.5zM485.5 652.8h5v2.5h-5zM503 652.8h2.5v2.5h-2.5zM523 652.8h2.5v2.5h-2.5zM528 652.8h2.5v2.5h-2.5zM540.5 652.8h2.5v2.5h-2.5zM545.5 652.8h2.5v2.5h-2.5zM560.5 652.8h7.5v2.5h-7.5zM585.5 652.8h2.5v2.5h-2.5zM453 655.3h2.5v2.5h-2.5zM465.5 655.3h2.5v2.5h-2.5zM473 655.3h2.5v2.5h-2.5zM488 655.3h7.5v2.5h-7.5zM510.5 655.3h2.5v2.5h-2.5zM515.5 655.3h2.5v2.5h-2.5zM520.5 655.3h7.5v2.5h-7.5zM530.5 655.3h2.5v2.5h-2.5zM553 655.3h2.5v2.5h-2.5zM563 655.3h2.5v2.5h-2.5zM463 657.8h7.5v2.5h-7.5zM488 657.8h5v2.5h-5zM513 657.8h2.5v2.5h-2.5zM520.5 657.8h5v2.5h-5zM530.5 657.8h5v2.5h-5zM548 657.8h2.5v2.5h-2.5zM563 657.8h2.5v2.5h-2.5zM573 657.8h2.5v2.5h-2.5zM585.5 657.8h2.5v2.5h-2.5zM443 660.3h7.5v2.5h-7.5zM463 660.3h2.5v2.5h-2.5zM498 660.3h2.5v2.5h-2.5zM518 660.3h5v2.5h-5zM528 660.3h2.5v2.5h-2.5zM535.5 660.3h2.5v2.5h-2.5zM540.5 660.3h2.5v2.5h-2.5zM545.5 660.3h2.5v2.5h-2.5zM553 660.3h2.5v2.5h-2.5zM563 660.3h2.5v2.5h-2.5zM568 660.3h5v2.5h-5zM583 660.3h2.5v2.5h-2.5zM440.5 662.8h5v2.5h-5zM478 662.8h2.5v2.5h-2.5zM498 662.8h5v2.5h-5zM520.5 662.8h7.5v2.5h-7.5zM543 662.8h2.5v2.5h-2.5zM548 662.8h2.5v2.5h-2.5zM553 662.8h2.5v2.5h-2.5zM558 662.8h2.5v2.5h-2.5zM570.5 662.8h2.5v2.5h-2.5zM448 665.3h2.5v2.5h-2.5zM465.5 665.3h2.5v2.5h-2.5zM478 665.3h2.5v2.5h-2.5zM498 665.3h2.5v2.5h-2.5zM505.5 665.3h2.5v2.5h-2.5zM510.5 665.3h2.5v2.5h-2.5zM538 665.3h5v2.5h-5zM545.5 665.3h5v2.5h-5zM560.5 665.3h2.5v2.5h-2.5zM588 665.3h0.3v2.5h-0.3zM443 667.8h2.5v2.5h-2.5zM455.5 667.8h5v2.5h-5zM465.5 667.8h2.5v2.5h-2.5zM473 667.8h2.5v2.5h-2.5zM500.5 667.8h2.5v2.5h-2.5zM515.5 667.8h2.5v2.5h-2.5zM528 667.8h2.5v2.5h-2.5zM533 667.8h2.5v2.5h-2.5zM543 667.8h2.5v2.5h-2.5zM568 667.8h2.5v2.5h-2.5zM585.5 667.8h2.8v2.5h-2.8zM440.5 670.3h2.5v2.5h-2.5zM458 670.3h7.5v2.5h-7.5zM473 670.3h2.5v2.5h-2.5zM478 670.3h2.5v2.5h-2.5zM500.5 670.3h2.5v2.5h-2.5zM505.5 670.3h2.5v2.5h-2.5zM518 670.3h2.5v2.5h-2.5zM550.5 670.3h2.5v2.5h-2.5zM575.5 670.3h5v2.5h-5zM440.5 672.8h2.5v2.5h-2.5zM445.5 672.8h2.5v2.5h-2.5zM458 672.8h2.5v2.5h-2.5zM463 672.8h2.5v2.5h-2.5zM480.5 672.8h2.5v2.5h-2.5zM490.5 672.8h2.5v2.5h-2.5zM500.5 672.8h2.5v2.5h-2.5zM518 672.8h2.5v2.5h-2.5zM530.5 672.8h2.5v2.5h-2.5zM545.5 672.8h5v2.5h-5zM558 672.8h2.5v2.5h-2.5zM565.5 672.8h7.5v2.5h-7.5zM578 672.8h2.5v2.5h-2.5zM440.5 675.3h2.5v2.5h-2.5zM448 675.3h2.5v2.5h-2.5zM460.5 675.3h2.5v2.5h-2.5zM503 675.3h2.5v2.5h-2.5zM513 675.3h2.5v2.5h-2.5zM518 675.3h2.5v2.5h-2.5zM528 675.3h2.5v2.5h-2.5zM550.5 675.3h2.5v2.5h-2.5zM563 675.3h2.5v2.5h-2.5zM463 677.8h2.5v2.5h-2.5zM468 677.8h2.5v2.5h-2.5zM475.5 677.8h2.5v2.5h-2.5zM490.5 677.8h2.5v2.5h-2.5zM503 677.8h5v2.5h-5zM510.5 677.8h5v2.5h-5zM523 677.8h2.5v2.5h-2.5zM528 677.8h7.5v2.5h-7.5zM543 677.8h2.5v2.5h-2.5zM555.5 677.8h5v2.5h-5zM570.5 677.8h2.5v2.5h-2.5zM588 677.8h0.3v2.5h-0.3zM445.5 680.3h2.5v0.3h-2.5zM453 680.3h5v0.3h-5zM465.5 680.3h2.5v0.3h-2.5zM483 680.3h2.5v0.3h-2.5zM493 680.3h2.5v0.3h-2.5zM498 680.3h2.5v0.3h-2.5zM505.5 680.3h2.5v0.3h-2.5zM525.5 680.3h2.5v0.3h-2.5zM535.5 680.3h7.5v0.3h-7.5zM545.5 680.3h2.5v0.3h-2.5zM563 680.3h2.5v0.3h-2.5zM580.5 680.3h2.5v0.3h-2.5zM585.5 680.3h2.5v0.3h-2.5z"/><path fill="#f4f4f4" d="M475.5 532.8h2.5v2.5h-2.5zM498 535.3h2.5v2.5h-2.5zM560.5 535.3h2.5v2.5h-2.5zM478 540.3h2.5v2.5h-2.5zM488 540.3h2.5v2.5h-2.5zM508 540.3h5v2.5h-5zM493 542.8h2.5v2.5h-2.5zM535.5 542.8h2.5v2.5h-2.5zM510.5 545.3h2.5v2.5h-2.5zM450.5 550.3h2.5v2.5h-2.5zM533 552.8h2.5v2.5h-2.5zM493 555.3h2.5v2.5h-2.5zM533 555.3h2.5v2.5h-2.5zM458 557.8h2.5v2.5h-2.5zM473 557.8h2.5v2.5h-2.5zM475.5 560.3h2.5v2.5h-2.5zM503 560.3h2.5v2.5h-2.5zM453 565.3h2.5v2.5h-2.5zM515.5 567.8h2.5v2.5h-2.5zM540.5 567.8h2.5v2.5h-2.5zM550.5 567.8h2.5v2.5h-2.5zM453 572.8h2.5v2.5h-2.5zM530.5 575.3h2.5v2.5h-2.5zM563 577.8h2.5v2.5h-2.5zM525.5 580.3h2.5v2.5h-2.5zM548 585.3h2.5v2.5h-2.5zM580.5 587.8h2.5v2.5h-2.5zM560.5 590.3h2.5v2.5h-2.5zM458 595.3h2.5v2.5h-2.5zM458 607.8h2.5v2.5h-2.5zM480.5 607.8h2.5v2.5h-2.5zM533 610.3h2.5v2.5h-2.5zM540.5 612.8h2.5v2.5h-2.5zM453 615.3h2.5v2.5h-2.5zM490.5 615.3h2.5v2.5h-2.5zM573 615.3h2.5v2.5h-2.5zM468 617.8h2.5v2.5h-2.5zM498 617.8h2.5v2.5h-2.5zM453 620.3h2.5v2.5h-2.5zM565.5 620.3h2.5v2.5h-2.5zM490.5 627.8h2.5v2.5h-2.5zM473 630.3h2.5v2.5h-2.5zM503 637.8h2.5v2.5h-2.5zM510.5 640.3h2.5v2.5h-2.5zM555.5 640.3h2.5v2.5h-2.5zM503 642.8h2.5v2.5h-2.5zM563 642.8h2.5v2.5h-2.5zM543 647.8h2.5v2.5h-2.5zM583 647.8h2.5v2.5h-2.5zM580.5 652.8h2.5v2.5h-2.5zM545.5 657.8h2.5v2.5h-2.5zM503 660.3h2.5v2.5h-2.5zM533 660.3h2.5v2.5h-2.5zM470.5 662.8h2.5v2.5h-2.5zM515.5 662.8h2.5v2.5h-2.5zM475.5 665.3h2.5v2.5h-2.5zM523 665.3h2.5v2.5h-2.5zM533 665.3h2.5v2.5h-2.5zM525.5 672.8h2.5v2.5h-2.5zM555.5 672.8h2.5v2.5h-2.5zM483 675.3h2.5v2.5h-2.5zM510.5 675.3h2.5v2.5h-2.5zM533 675.3h2.5v2.5h-2.5zM548 675.3h2.5v2.5h-2.5zM548 680.3h2.5v0.3h-2.5z"/><path fill="#e9e9e9" d="M485.5 532.8h2.5v2.5h-2.5zM495.5 532.8h2.5v2.5h-2.5zM533 532.8h2.5v2.5h-2.5zM565.5 532.8h2.5v2.5h-2.5zM570.5 532.8h2.5v2.5h-2.5zM440.5 535.3h2.5v2.5h-2.5zM470.5 535.3h2.5v2.5h-2.5zM508 535.3h2.5v2.5h-2.5zM520.5 535.3h5v2.5h-5zM528 535.3h2.5v2.5h-2.5zM543 535.3h2.5v2.5h-2.5zM575.5 535.3h2.5v2.5h-2.5zM580.5 535.3h2.5v2.5h-2.5zM458 537.8h2.5v2.5h-2.5zM470.5 537.8h2.5v2.5h-2.5zM445.5 540.3h2.5v2.5h-2.5zM458 540.3h2.5v2.5h-2.5zM465.5 540.3h5v2.5h-5zM535.5 540.3h2.5v2.5h-2.5zM500.5 542.8h2.5v2.5h-2.5zM528 542.8h2.5v2.5h-2.5zM533 542.8h2.5v2.5h-2.5zM570.5 542.8h2.5v2.5h-2.5zM575.5 542.8h2.5v2.5h-2.5zM585.5 542.8h2.5v2.5h-2.5zM498 545.3h2.5v2.5h-2.5zM515.5 545.3h2.5v2.5h-2.5zM450.5 547.8h2.5v2.5h-2.5zM535.5 547.8h2.5v2.5h-2.5zM495.5 550.3h2.5v2.5h-2.5zM500.5 550.3h5v2.5h-5zM525.5 550.3h2.5v2.5h-2.5zM530.5 550.3h2.5v2.5h-2.5zM543 550.3h2.5v2.5h-2.5zM558 552.8h2.5v2.5h-2.5zM585.5 552.8h2.5v2.5h-2.5zM445.5 555.3h2.5v2.5h-2.5zM525.5 555.3h2.5v2.5h-2.5zM453 557.8h2.5v2.5h-2.5zM538 557.8h2.5v2.5h-2.5zM455.5 560.3h2.5v2.5h-2.5zM470.5 560.3h2.5v2.5h-2.5zM500.5 560.3h2.5v2.5h-2.5zM535.5 560.3h2.5v2.5h-2.5zM555.5 560.3h2.5v2.5h-2.5zM505.5 562.8h2.5v2.5h-2.5zM563 562.8h2.5v2.5h-2.5zM475.5 565.3h2.5v2.5h-2.5zM495.5 565.3h2.5v2.5h-2.5zM530.5 565.3h2.5v2.5h-2.5zM440.5 567.8h2.5v2.5h-2.5zM460.5 567.8h2.5v2.5h-2.5zM580.5 567.8h2.5v2.5h-2.5zM585.5 567.8h2.5v2.5h-2.5zM445.5 572.8h2.5v2.5h-2.5zM528 572.8h2.5v2.5h-2.5zM545.5 572.8h2.5v2.5h-2.5zM575.5 572.8h2.5v2.5h-2.5zM440.5 575.3h2.5v2.5h-2.5zM463 575.3h2.5v2.5h-2.5zM475.5 575.3h2.5v2.5h-2.5zM588 575.3h0.3v2.5h-0.3zM443 577.8h2.5v2.5h-2.5zM465.5 577.8h2.5v2.5h-2.5zM448 580.3h2.5v2.5h-2.5zM535.5 580.3h5v2.5h-5zM443 582.8h2.5v2.5h-2.5zM463 582.8h2.5v2.5h-2.5zM538 582.8h2.5v2.5h-2.5zM553 582.8h2.5v2.5h-2.5zM460.5 585.3h2.5v2.5h-2.5zM468 585.3h2.5v2.5h-2.5zM445.5 587.8h2.5v2.5h-2.5zM550.5 587.8h2.5v2.5h-2.5zM555.5 587.8h2.5v2.5h-2.5zM465.5 592.8h2.5v2.5h-2.5zM533 597.8h2.5v2.5h-2.5zM553 597.8h2.5v2.5h-2.5zM568 597.8h2.5v2.5h-2.5zM443 600.3h5v2.5h-5zM585.5 600.3h2.5v2.5h-2.5zM565.5 602.8h2.5v2.5h-2.5zM473 605.3h2.5v2.5h-2.5zM533 605.3h2.5v2.5h-2.5zM580.5 605.3h2.5v2.5h-2.5zM450.5 607.8h2.5v2.5h-2.5zM465.5 607.8h2.5v2.5h-2.5zM518 607.8h2.5v2.5h-2.5zM538 607.8h2.5v2.5h-2.5zM555.5 607.8h2.5v2.5h-2.5zM560.5 607.8h2.5v2.5h-2.5zM440.5 610.3h2.5v2.5h-2.5zM485.5 610.3h2.5v2.5h-2.5zM523 610.3h2.5v2.5h-2.5zM558 610.3h2.5v2.5h-2.5zM568 610.3h2.5v2.5h-2.5zM463 612.8h2.5v2.5h-2.5zM470.5 612.8h2.5v2.5h-2.5zM478 612.8h2.5v2.5h-2.5zM483 612.8h2.5v2.5h-2.5zM583 612.8h2.5v2.5h-2.5zM513 615.3h2.5v2.5h-2.5zM530.5 615.3h2.5v2.5h-2.5zM443 617.8h2.5v2.5h-2.5zM463 617.8h2.5v2.5h-2.5zM518 617.8h2.5v2.5h-2.5zM498 620.3h2.5v2.5h-2.5zM528 620.3h2.5v2.5h-2.5zM535.5 620.3h2.5v2.5h-2.5zM550.5 620.3h2.5v2.5h-2.5zM585.5 620.3h2.5v2.5h-2.5zM448 622.8h2.5v2.5h-2.5zM523 622.8h2.5v2.5h-2.5zM560.5 622.8h2.5v2.5h-2.5zM483 625.3h2.5v2.5h-2.5zM488 625.3h5v2.5h-5zM553 625.3h2.5v2.5h-2.5zM563 625.3h7.5v2.5h-7.5zM443 627.8h7.5v2.5h-7.5zM455.5 627.8h2.5v2.5h-2.5zM460.5 627.8h2.5v2.5h-2.5zM508 627.8h2.5v2.5h-2.5zM543 627.8h2.5v2.5h-2.5zM558 627.8h2.5v2.5h-2.5zM450.5 630.3h2.5v2.5h-2.5zM463 630.3h2.5v2.5h-2.5zM485.5 630.3h2.5v2.5h-2.5zM508 630.3h2.5v2.5h-2.5zM528 630.3h2.5v2.5h-2.5zM538 630.3h2.5v2.5h-2.5zM545.5 630.3h2.5v2.5h-2.5zM565.5 630.3h2.5v2.5h-2.5zM585.5 630.3h2.5v2.5h-2.5zM533 632.8h2.5v2.5h-2.5zM548 632.8h2.5v2.5h-2.5zM553 632.8h2.5v2.5h-2.5zM565.5 632.8h2.5v2.5h-2.5zM498 635.3h2.5v2.5h-2.5zM563 635.3h2.5v2.5h-2.5zM450.5 637.8h2.5v2.5h-2.5zM458 637.8h2.5v2.5h-2.5zM465.5 637.8h2.5v2.5h-2.5zM550.5 637.8h2.5v2.5h-2.5zM450.5 640.3h2.5v2.5h-2.5zM480.5 640.3h2.5v2.5h-2.5zM488 640.3h2.5v2.5h-2.5zM543 640.3h5v2.5h-5zM560.5 640.3h2.5v2.5h-2.5zM570.5 640.3h2.5v2.5h-2.5zM498 642.8h2.5v2.5h-2.5zM580.5 642.8h2.5v2.5h-2.5zM458 645.3h2.5v2.5h-2.5zM465.5 645.3h2.5v2.5h-2.5zM480.5 645.3h2.5v2.5h-2.5zM533 645.3h2.5v2.5h-2.5zM548 645.3h2.5v2.5h-2.5zM555.5 645.3h2.5v2.5h-2.5zM445.5 647.8h2.5v2.5h-2.5zM453 650.3h2.5v2.5h-2.5zM475.5 650.3h2.5v2.5h-2.5zM510.5 650.3h2.5v2.5h-2.5zM520.5 650.3h2.5v2.5h-2.5zM450.5 652.8h2.5v2.5h-2.5zM473 652.8h2.5v2.5h-2.5zM495.5 652.8h2.5v2.5h-2.5zM500.5 652.8h2.5v2.5h-2.5zM550.5 652.8h2.5v2.5h-2.5zM443 655.3h2.5v2.5h-2.5zM450.5 655.3h2.5v2.5h-2.5zM483 655.3h2.5v2.5h-2.5zM533 655.3h2.5v2.5h-2.5zM543 655.3h2.5v2.5h-2.5zM450.5 657.8h2.5v2.5h-2.5zM478 657.8h2.5v2.5h-2.5zM565.5 657.8h2.5v2.5h-2.5zM575.5 657.8h2.5v2.5h-2.5zM480.5 660.3h2.5v2.5h-2.5zM500.5 660.3h2.5v2.5h-2.5zM523 660.3h2.5v2.5h-2.5zM585.5 660.3h2.5v2.5h-2.5zM448 662.8h2.5v2.5h-2.5zM483 662.8h2.5v2.5h-2.5zM510.5 662.8h2.5v2.5h-2.5zM555.5 662.8h2.5v2.5h-2.5zM503 665.3h2.5v2.5h-2.5zM518 665.3h2.5v2.5h-2.5zM530.5 665.3h2.5v2.5h-2.5zM558 665.3h2.5v2.5h-2.5zM580.5 665.3h2.5v2.5h-2.5zM505.5 667.8h2.5v2.5h-2.5zM518 667.8h2.5v2.5h-2.5zM523 667.8h2.5v2.5h-2.5zM563 667.8h5v2.5h-5zM468 670.3h2.5v2.5h-2.5zM480.5 670.3h2.5v2.5h-2.5zM485.5 670.3h2.5v2.5h-2.5zM493 670.3h2.5v2.5h-2.5zM508 670.3h2.5v2.5h-2.5zM543 670.3h2.5v2.5h-2.5zM523 672.8h2.5v2.5h-2.5zM538 672.8h5v2.5h-5zM485.5 675.3h2.5v2.5h-2.5zM500.5 675.3h2.5v2.5h-2.5zM488 677.8h2.5v2.5h-2.5zM540.5 677.8h2.5v2.5h-2.5zM568 677.8h2.5v2.5h-2.5zM448 680.3h2.5v0.3h-2.5zM508 680.3h2.5v0.3h-2.5zM568 680.3h2.5v0.3h-2.5z"/><path fill="#ffffff" d="M445.5 535.3h2.5v2.5h-2.5zM553 537.8h2.5v2.5h-2.5zM535.5 545.3h2.5v2.5h-2.5zM588 545.3h0.3v2.5h-0.3zM503 547.8h2.5v2.5h-2.5zM568 547.8h2.5v2.5h-2.5zM535.5 550.3h2.5v2.5h-2.5zM450.5 552.8h2.5v2.5h-2.5zM495.5 552.8h5v2.5h-5zM450.5 557.8h2.5v2.5h-2.5zM573 590.3h2.5v2.5h-2.5zM468 625.3h2.5v2.5h-2.5zM518 625.3h2.5v2.5h-2.5zM545.5 637.8h2.5v2.5h-2.5zM553 665.3h2.5v2.5h-2.5zM478 672.8h2.5v2.5h-2.5z"/><path fill="#b1b1b1" d="M490.5 542.8h2.5v2.5h-2.5zM443 545.3h2.5v2.5h-2.5zM460.5 552.8h2.5v2.5h-2.5zM450.5 555.3h2.5v2.5h-2.5zM513 557.8h2.5v2.5h-2.5zM443 560.3h2.5v2.5h-2.5zM460.5 562.8h2.5v2.5h-2.5zM573 565.3h2.5v2.5h-2.5zM483 567.8h2.5v2.5h-2.5zM493 567.8h2.5v2.5h-2.5zM510.5 567.8h2.5v2.5h-2.5zM515.5 570.3h2.5v2.5h-2.5zM518 572.8h2.5v2.5h-2.5zM520.5 575.3h2.5v2.5h-2.5zM583 585.3h2.5v2.5h-2.5zM545.5 587.8h2.5v2.5h-2.5zM583 590.3h2.5v2.5h-2.5zM525.5 595.3h2.5v2.5h-2.5zM550.5 595.3h2.5v2.5h-2.5zM440.5 600.3h2.5v2.5h-2.5zM550.5 600.3h2.5v2.5h-2.5zM540.5 602.8h2.5v2.5h-2.5zM588 602.8h0.3v2.5h-0.3zM488 607.8h2.5v2.5h-2.5zM495.5 610.3h2.5v2.5h-2.5zM500.5 612.8h2.5v2.5h-2.5zM503 627.8h2.5v2.5h-2.5zM465.5 640.3h2.5v2.5h-2.5zM463 642.8h2.5v2.5h-2.5zM470.5 642.8h2.5v2.5h-2.5zM563 647.8h2.5v2.5h-2.5zM538 655.3h2.5v2.5h-2.5zM533 662.8h2.5v2.5h-2.5zM563 665.3h2.5v2.5h-2.5zM585.5 665.3h2.5v2.5h-2.5zM470.5 670.3h2.5v2.5h-2.5zM580.5 670.3h2.5v2.5h-2.5zM455.5 675.3h2.5v2.5h-2.5zM473 675.3h2.5v2.5h-2.5zM473 677.8h2.5v2.5h-2.5zM485.5 677.8h2.5v2.5h-2.5zM558 680.3h2.5v0.3h-2.5z"/><path fill="#a6a6a6" d="M495.5 567.8h2.5v2.5h-2.5zM508 567.8h2.5v2.5h-2.5zM490.5 570.3h2.5v2.5h-2.5zM480.5 582.8h2.5v2.5h-2.5zM480.5 592.8h2.5v2.5h-2.5zM480.5 597.8h2.5v2.5h-2.5zM483 600.3h2.5v2.5h-2.5zM518 605.3h2.5v2.5h-2.5zM515.5 607.8h2.5v2.5h-2.5z"/><path fill="#858585" d="M498 567.8h5v2.5h-5zM505.5 567.8h2.5v2.5h-2.5zM515.5 572.8h2.5v2.5h-2.5zM523 585.3h2.5v2.5h-2.5zM480.5 590.3h2.5v2.5h-2.5zM523 592.8h2.5v2.5h-2.5zM483 597.8h2.5v2.5h-2.5zM520.5 600.3h2.5v2.5h-2.5zM518 602.8h2.5v2.5h-2.5zM515.5 605.3h2.5v2.5h-2.5zM493 607.8h2.5v2.5h-2.5zM513 607.8h2.5v2.5h-2.5zM500.5 610.3h2.5v2.5h-2.5zM505.5 610.3h2.5v2.5h-2.5z"/><path fill="#909090" d="M503 567.8h2.5v2.5h-2.5zM513 570.3h2.5v2.5h-2.5zM488 572.8h2.5v2.5h-2.5zM485.5 575.3h2.5v2.5h-2.5zM520.5 577.8h2.5v2.5h-2.5zM485.5 602.8h2.5v2.5h-2.5zM488 605.3h2.5v2.5h-2.5zM490.5 607.8h2.5v2.5h-2.5zM498 610.3h2.5v2.5h-2.5zM503 610.3h2.5v2.5h-2.5z"/><path fill="#6f6f6f" d="M493 570.3h2.5v2.5h-2.5zM483 582.8h2.5v2.5h-2.5zM523 590.3h2.5v2.5h-2.5zM510.5 607.8h2.5v2.5h-2.5z"/><path fill="#595959" d="M495.5 570.3h2.5v2.5h-2.5zM485.5 577.8h2.5v2.5h-2.5zM523 587.8h2.5v2.5h-2.5zM483 592.8h2.5v2.5h-2.5zM483 595.3h2.5v2.5h-2.5zM488 602.8h2.5v2.5h-2.5zM490.5 605.3h2.5v2.5h-2.5zM495.5 607.8h2.5v2.5h-2.5z"/><path fill="#4e4e4e" d="M498 570.3h2.5v2.5h-2.5zM508 570.3h2.5v2.5h-2.5zM513 572.8h2.5v2.5h-2.5zM488 575.3h2.5v2.5h-2.5zM483 585.3h2.5v2.5h-2.5zM513 605.3h2.5v2.5h-2.5zM508 607.8h2.5v2.5h-2.5z"/><path fill="#2c2c2c" d="M500.5 570.3h2.5v2.5h-2.5zM520.5 585.3h2.5v2.5h-2.5zM520.5 587.8h2.5v2.5h-2.5zM520.5 592.8h2.5v2.5h-2.5zM493 605.3h2.5v2.5h-2.5z"/><path fill="#373737" d="M503 570.3h5v2.5h-5zM493 572.8h2.5v2.5h-2.5zM515.5 575.3h2.5v2.5h-2.5zM485.5 580.3h2.5v2.5h-2.5zM485.5 597.8h2.5v2.5h-2.5zM515.5 602.8h2.5v2.5h-2.5zM500.5 607.8h7.5v2.5h-7.5z"/><path fill="#646464" d="M510.5 570.3h2.5v2.5h-2.5zM490.5 572.8h2.5v2.5h-2.5zM520.5 580.3h2.5v2.5h-2.5zM520.5 597.8h2.5v2.5h-2.5zM485.5 600.3h2.5v2.5h-2.5z"/><path fill="#161616" d="M495.5 572.8h2.5v2.5h-2.5zM513 575.3h2.5v2.5h-2.5zM515.5 577.8h2.5v2.5h-2.5zM485.5 582.8h2.5v2.5h-2.5zM485.5 595.3h2.5v2.5h-2.5zM513 602.8h2.5v2.5h-2.5zM495.5 605.3h2.5v2.5h-2.5z"/><path fill="#0b0b0b" d="M498 572.8h2.5v2.5h-2.5zM508 572.8h2.5v2.5h-2.5zM518 582.8h2.5v2.5h-2.5zM485.5 585.3h2.5v2.5h-2.5zM485.5 587.8h2.5v2.5h-2.5zM485.5 590.3h2.5v2.5h-2.5zM485.5 592.8h2.5v2.5h-2.5zM518 595.3h2.5v2.5h-2.5zM488 597.8h2.5v2.5h-2.5zM515.5 600.3h2.5v2.5h-2.5zM498 605.3h2.5v2.5h-2.5zM508 605.3h2.5v2.5h-2.5z"/><path fill="#000000" d="M500.5 572.8h7.5v2.5h-7.5zM493 575.3h20v2.5h-20zM490.5 577.8h25v2.5h-25zM488 580.3h30v2.5h-30zM488 582.8h30v2.5h-30zM488 585.3h32.5v2.5h-32.5zM488 587.8h32.5v2.5h-32.5zM488 590.3h32.5v2.5h-32.5zM488 592.8h32.5v2.5h-32.5zM488 595.3h30v2.5h-30zM490.5 597.8h27.5v2.5h-27.5zM490.5 600.3h25v2.5h-25zM493 602.8h20v2.5h-20zM500.5 605.3h7.5v2.5h-7.5z"/><path fill="#212121" d="M510.5 572.8h2.5v2.5h-2.5zM490.5 575.3h2.5v2.5h-2.5zM488 577.8h2.5v2.5h-2.5zM518 580.3h2.5v2.5h-2.5zM520.5 590.3h2.5v2.5h-2.5zM518 597.8h2.5v2.5h-2.5zM488 600.3h2.5v2.5h-2.5zM490.5 602.8h2.5v2.5h-2.5zM510.5 605.3h2.5v2.5h-2.5z"/><path fill="#7a7a7a" d="M518 575.3h2.5v2.5h-2.5zM483 580.3h2.5v2.5h-2.5z"/><path fill="#9b9b9b" d="M483 577.8h2.5v2.5h-2.5zM523 582.8h2.5v2.5h-2.5zM480.5 585.3h2.5v2.5h-2.5zM480.5 587.8h2.5v2.5h-2.5zM523 595.3h2.5v2.5h-2.5zM523 597.8h2.5v2.5h-2.5zM508 610.3h2.5v2.5h-2.5z"/><path fill="#434343" d="M518 577.8h2.5v2.5h-2.5zM520.5 582.8h2.5v2.5h-2.5zM483 587.8h2.5v2.5h-2.5zM483 590.3h2.5v2.5h-2.5zM520.5 595.3h2.5v2.5h-2.5zM518 600.3h2.5v2.5h-2.5zM498 607.8h2.5v2.5h-2.5z"/></g><rect x="465.29" y="557.59" width="98.22" height="98.22" fill="none" stroke="#ff0000" stroke-width="1.4"/><text x="514.40" y="546.86" font-family="Liberation Sans" font-size="11.2" fill="#ff0000" text-anchor="middle" stroke="#ff0000" stroke-width="0.1">N</text><text x="450.23" y="610.70" font-family="Liberation Sans" font-size="11.2" fill="#ff0000" text-anchor="middle" stroke="#ff0000" stroke-width="0.1">E</text><ellipse cx="502.12" cy="589.51" rx="28.65" ry="27.17" fill="none" stroke="#e6c020" stroke-width="1.4"/><rect x="496.39" y="582.96" width="12.28" height="12.28" fill="none" stroke="#0000ff" stroke-width="1.2"/><path d="M514.40 570.69V599.33M514.40 614.88V644.35M476.75 606.70H506.21M522.58 606.70H552.05" stroke="#ff0000" stroke-width="1.4"/><text x="514.40" y="525.60" font-family="Liberation Sans" font-size="12.6" fill="#111" text-anchor="middle" textLength="74.3" lengthAdjust="spacingAndGlyphs" stroke="#111" stroke-width="0.1">HSC(26.2) r</text><rect x="440.5" y="532.8" width="147.8" height="147.8" fill="none" stroke="#222" stroke-width="1.1"/><text x="448.92" y="696.60" font-family="Liberation Sans" font-size="11" fill="#111" text-anchor="middle" textLength="13.4" lengthAdjust="spacingAndGlyphs" stroke="#111" stroke-width="0.1">−4</text><text x="432.70" y="676.18" font-family="Liberation Sans" font-size="11" fill="#111" text-anchor="end" textLength="13.4" lengthAdjust="spacingAndGlyphs" stroke="#111" stroke-width="0.1">−4</text><text x="481.66" y="696.60" font-family="Liberation Sans" font-size="11" fill="#111" text-anchor="middle" textLength="13.4" lengthAdjust="spacingAndGlyphs" stroke="#111" stroke-width="0.1">−2</text><text x="432.70" y="643.44" font-family="Liberation Sans" font-size="11" fill="#111" text-anchor="end" textLength="13.4" lengthAdjust="spacingAndGlyphs" stroke="#111" stroke-width="0.1">−2</text><text x="514.40" y="696.60" font-family="Liberation Sans" font-size="11" fill="#111" text-anchor="middle" stroke="#111" stroke-width="0.1">0</text><text x="432.70" y="610.70" font-family="Liberation Sans" font-size="11" fill="#111" text-anchor="end" stroke="#111" stroke-width="0.1">0</text><text x="547.14" y="696.60" font-family="Liberation Sans" font-size="11" fill="#111" text-anchor="middle" stroke="#111" stroke-width="0.1">2</text><text x="432.70" y="577.96" font-family="Liberation Sans" font-size="11" fill="#111" text-anchor="end" stroke="#111" stroke-width="0.1">2</text><text x="579.88" y="696.60" font-family="Liberation Sans" font-size="11" fill="#111" text-anchor="middle" stroke="#111" stroke-width="0.1">4</text><text x="432.70" y="545.22" font-family="Liberation Sans" font-size="11" fill="#111" text-anchor="end" stroke="#111" stroke-width="0.1">4</text><path d="M448.92 680.5999999999999v3.5M440.5 672.18h-3.5M481.66 680.5999999999999v3.5M440.5 639.44h-3.5M514.40 680.5999999999999v3.5M440.5 606.70h-3.5M547.14 680.5999999999999v3.5M440.5 573.96h-3.5M579.88 680.5999999999999v3.5M440.5 541.22h-3.5" stroke="#222" stroke-width="0.9"/><text x="514.40" y="706.00" font-family="Liberation Sans" font-size="11.2" fill="#111" text-anchor="middle" textLength="119.8" lengthAdjust="spacingAndGlyphs" stroke="#111" stroke-width="0.1">m:20.1  re:1.7"  s:1.3"</text><text x="514.40" y="718.40" font-family="Liberation Sans" font-size="11.2" fill="#111" text-anchor="middle" textLength="105.8" lengthAdjust="spacingAndGlyphs" stroke="#111" stroke-width="0.1">EWr: 1, PLAE: 0.015</text><text transform="translate(70.50,786.20) scale(0.9229,1)" font-family="Liberation Mono" font-size="14.0" fill="#000" stroke="#000" stroke-width="0.06" text-anchor="start">Separation</text><text transform="translate(70.50,800.40) scale(0.9229,1)" font-family="Liberation Mono" font-size="14.0" fill="#000" stroke="#000" stroke-width="0.06" text-anchor="start">Match score</text><text transform="translate(70.50,815.50) scale(0.9229,1)" font-family="Liberation Mono" font-size="14.0" fill="#000" stroke="#000" stroke-width="0.06" text-anchor="start">RA, Dec</text><text transform="translate(70.50,829.80) scale(0.9229,1)" font-family="Liberation Mono" font-size="14.0" fill="#000" stroke="#000" stroke-width="0.06" text-anchor="start">Spec z</text><text transform="translate(70.50,844.50) scale(0.9229,1)" font-family="Liberation Mono" font-size="14.0" fill="#000" stroke="#000" stroke-width="0.06" text-anchor="start">Photo z</text><text transform="translate(70.50,858.80) scale(0.9229,1)" font-family="Liberation Mono" font-size="14.0" fill="#000" stroke="#000" stroke-width="0.06" text-anchor="start">Est LyA rest-EW</text><text transform="translate(70.50,873.20) scale(0.9229,1)" font-family="Liberation Mono" font-size="14.0" fill="#000" stroke="#000" stroke-width="0.06" text-anchor="start">mag</text><text transform="translate(70.50,888.10) scale(0.9229,1)" font-family="Liberation Mono" font-size="14.0" fill="#000" stroke="#000" stroke-width="0.06" text-anchor="start">P(LAE)/P(OII)</text><text x="287.20" y="886.40" font-family="Liberation Sans" font-size="13" fill="#0000ff" text-anchor="start" textLength="35.7" lengthAdjust="spacingAndGlyphs" stroke="#0000ff" stroke-width="0.1">0.015</text><text transform="translate(287.50,779.10) scale(0.9229,1)" font-family="Liberation Mono" font-size="14.0" fill="#0000ff" stroke="#0000ff" stroke-width="0.06" text-anchor="start">1.29531"</text><text transform="translate(287.50,793.50) scale(0.9229,1)" font-family="Liberation Mono" font-size="14.0" fill="#0000ff" stroke="#0000ff" stroke-width="0.06" text-anchor="start">1.000</text><text transform="translate(287.50,808.20) scale(0.9229,1)" font-family="Liberation Mono" font-size="14.0" fill="#0000ff" stroke="#0000ff" stroke-width="0.06" text-anchor="start">176.144154, 51.054981</text><text transform="translate(287.50,822.50) scale(0.9229,1)" font-family="Liberation Mono" font-size="14.0" fill="#0000ff" stroke="#0000ff" stroke-width="0.06" text-anchor="start">N/A</text><text transform="translate(287.50,837.10) scale(0.9229,1)" font-family="Liberation Mono" font-size="14.0" fill="#0000ff" stroke="#0000ff" stroke-width="0.06" text-anchor="start">N/A</text><text transform="translate(287.50,854.00) scale(0.9229,1)" font-family="Liberation Mono" font-size="14.0" fill="#0000ff" stroke="#0000ff" stroke-width="0.06" text-anchor="start">1.60(±0.39)</text><text transform="translate(287.50,869.90) scale(0.9229,1)" font-family="Liberation Mono" font-size="14.0" fill="#0000ff" stroke="#0000ff" stroke-width="0.06" text-anchor="start">20.20(20.20,20.20)R</text><text transform="translate(287.50,886.40) scale(0.9229,1)" font-family="Liberation Mono" font-size="14.0" fill="#0000ff" stroke="#0000ff" stroke-width="0.06" text-anchor="start"></text><text x="374.50" y="854.00" font-family="Liberation Sans" font-size="13.5" fill="#0000ff" text-anchor="start" font-style="italic" stroke="#0000ff" stroke-width="0.1">Å</text><text x="328.80" y="881.40" font-family="Liberation Sans" font-size="9.2" fill="#0000ff" text-anchor="start" textLength="25.7" lengthAdjust="spacingAndGlyphs" stroke="#0000ff" stroke-width="0.1">0.028</text><text x="328.80" y="889.80" font-family="Liberation Sans" font-size="9.2" fill="#0000ff" text-anchor="start" textLength="25.7" lengthAdjust="spacingAndGlyphs" stroke="#0000ff" stroke-width="0.1">0.009</text><text transform="translate(938.50,821.40) scale(0.9229,1)" font-family="Liberation Mono" font-size="14.0" fill="#000" stroke="#000" stroke-width="0.06" text-anchor="start">Phot z plot not available.</text></svg>
</body></html>
